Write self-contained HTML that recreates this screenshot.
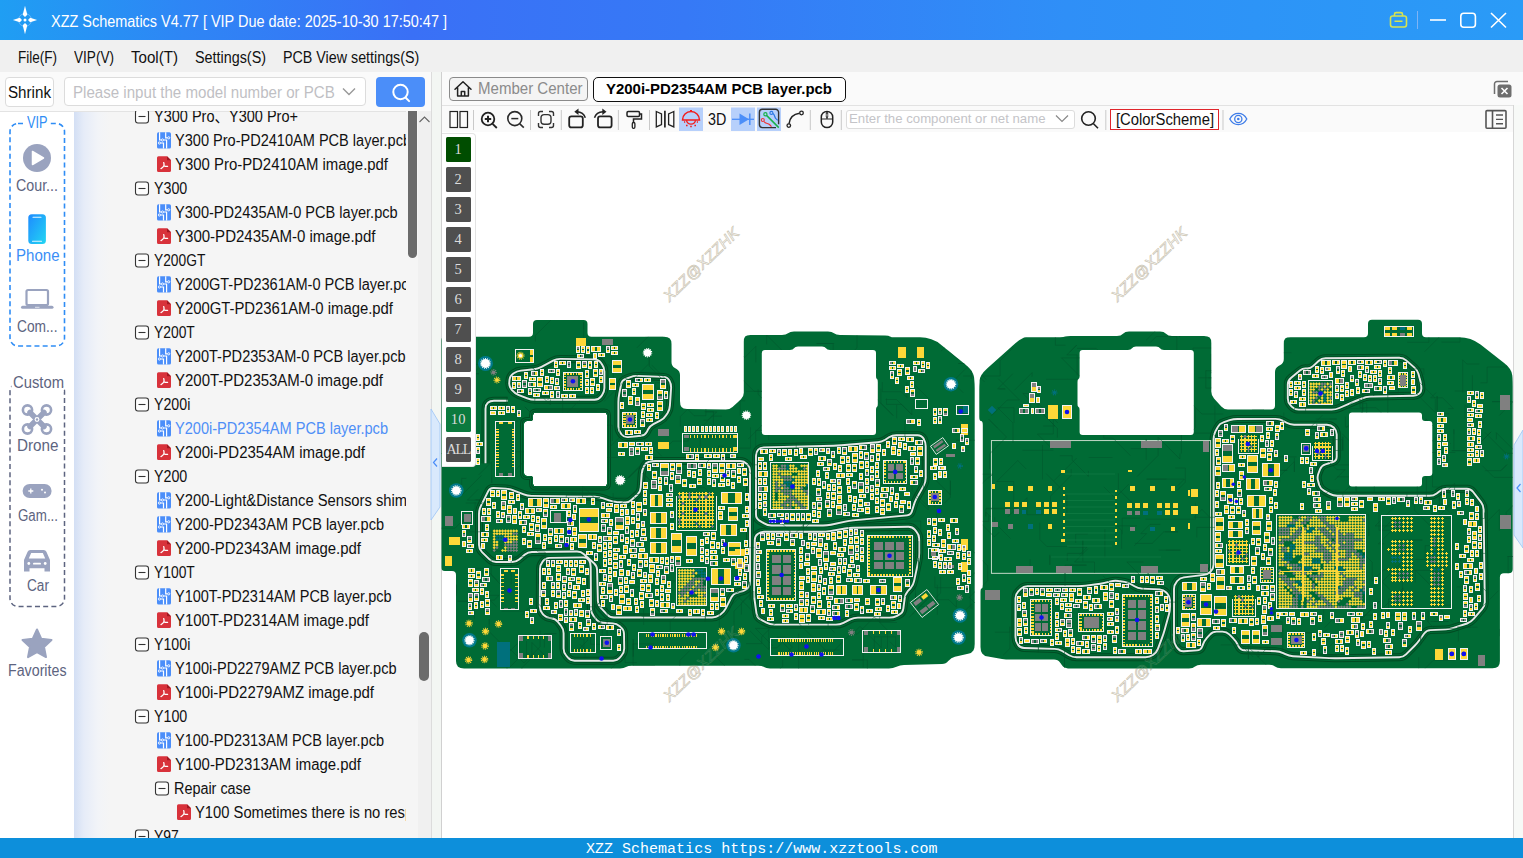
<!DOCTYPE html><html><head><meta charset="utf-8"><title>XZZ Schematics</title><style>
html,body{margin:0;padding:0;overflow:hidden}html{width:1523px;height:858px}
body{width:1523px;height:858px;overflow:hidden;position:relative;background:#fff;font-family:"Liberation Sans","Noto Sans CJK SC",sans-serif}
.abs{position:absolute}
.t{position:absolute;white-space:nowrap;transform-origin:0 50%;display:block}
#title{position:absolute;left:0;top:0;width:1523px;height:40px;background:linear-gradient(90deg,#1f9ef3 0%,#2e86f5 12%,#3a70f6 27%,#3679f6 45%,#2f8ff7 70%,#2a9bf7 100%)}
#menu{position:absolute;left:0;top:40px;width:1523px;height:31.5px;background:#f0f0f0;border-bottom:1px solid #dadada}
#leftbg{position:absolute;left:0;top:72px;width:430.5px;height:39.5px;background:#fafafa;border-bottom:1px solid #e3e3e3;box-sizing:border-box}
#side{position:absolute;left:0;top:111px;width:74px;height:727px;background:#fff}
#treebg{position:absolute;left:74px;top:111px;width:356.5px;height:727px;background:linear-gradient(90deg,#d3dff4 0,#e6ecf8 10px,#f2f4f8 24px,#f5f5f5 36px,#f5f5f5 100%)}
#tree{position:absolute;left:0;top:111px;width:406.5px;height:727px;overflow:hidden}
#tree>*{margin-top:-111px}
#split{position:absolute;left:430.5px;top:72px;width:11px;height:766px;background:#f3f6f3;border-left:1px solid #dcdcdc;border-right:1px solid #d0d0d0;box-sizing:border-box}
#rightbg{position:absolute;left:441.5px;top:72px;width:1081.5px;height:60px;background:#fafafa}
#status{position:absolute;left:0;top:838px;width:1523px;height:20px;background:#0d8fdb;color:#fff;font-family:"Liberation Mono",monospace;font-size:14px;line-height:20px}
</style></head><body>
<div id="side"></div><div id="treebg"></div>
<div id="title"></div>
<svg class="abs" style="left:10.2px;top:4.6px" width="30" height="30" viewBox="-15 -15 30 30"><circle r="6.5" fill="none" stroke="#cfe0ff" stroke-width="0.7" opacity=".55"/><path d="M0-14.3L2.3-5.2 0-3-2.3-5.2zM0 14.3L2.3 5.2 0 3-2.3 5.2zM-12.1 0L-5.2-2.2-3 0-5.2 2.2zM12.1 0L5.2-2.2 3 0 5.2 2.2z" fill="#fff"/><circle r="1.5" fill="#fff"/></svg>
<span class="t" style="left:50.5px;top:11.6px;font-size:16px;line-height:19.2px;color:#fff;transform:scaleX(0.9037);">XZZ Schematics V4.77 [ VIP Due date: 2025-10-30 17:50:47 ]</span>
<svg class="abs" style="left:1385px;top:8px" width="130" height="26" viewBox="1385 8 130 26" fill="none"><rect x="1390.5" y="16" width="16" height="11" rx="2.2" stroke="#d7e34f" stroke-width="1.6"/><path d="M1394.5 16v-1.8a1.6 1.6 0 0 1 1.6-1.6h4.8a1.6 1.6 0 0 1 1.6 1.6v1.8M1394.5 21.2h8" stroke="#d7e34f" stroke-width="1.6"/><path d="M1417.5 11v18" stroke="#7fb4f5" stroke-width="1"/><path d="M1430 20h16" stroke="#fff" stroke-width="1.6"/><rect x="1460.8" y="13.3" width="14.6" height="14" rx="3" stroke="#fff" stroke-width="1.6"/><path d="M1491 13l15 14.5M1506 13l-15 14.5" stroke="#fff" stroke-width="1.6"/></svg>
<div id="menu"></div>
<span class="t" style="left:18.4px;top:47.7px;font-size:16px;line-height:19.2px;color:#111;transform:scaleX(0.8461);">File(F)</span>
<span class="t" style="left:74.2px;top:47.7px;font-size:16px;line-height:19.2px;color:#111;transform:scaleX(0.8489);">VIP(V)</span>
<span class="t" style="left:131.3px;top:47.7px;font-size:16px;line-height:19.2px;color:#111;transform:scaleX(0.9441);">Tool(T)</span>
<span class="t" style="left:195.3px;top:47.7px;font-size:16px;line-height:19.2px;color:#111;transform:scaleX(0.8971);">Settings(S)</span>
<span class="t" style="left:283.3px;top:47.7px;font-size:16px;line-height:19.2px;color:#111;transform:scaleX(0.8929);">PCB View settings(S)</span>
<div id="leftbg"></div>
<div class="abs" style="left:5px;top:77px;width:49px;height:29.5px;border:1px solid #dcdcdc;border-radius:4px;background:#fff;box-sizing:border-box"></div>
<span class="t" style="left:7.6px;top:83.4px;font-size:16px;line-height:19.2px;color:#111;transform:scaleX(0.9481);">Shrink</span>
<div class="abs" style="left:64px;top:77px;width:302px;height:29px;border:1px solid #dcdcdc;border-radius:4px;background:#fff;box-sizing:border-box"></div>
<span class="t" style="left:73.2px;top:83.4px;font-size:16px;line-height:19.2px;color:#bfbfc4;transform:scaleX(0.9435);">Please input the model number or PCB</span>
<svg class="abs" style="left:341px;top:86px" width="16" height="12" fill="none"><path d="M2 2.5l6 6 6-6" stroke="#999" stroke-width="1.4"/></svg>
<div class="abs" style="left:376px;top:77px;width:49px;height:30px;border-radius:4px;background:#4b8ef9"></div>
<svg class="abs" style="left:389px;top:81px" width="24" height="24" fill="none"><circle cx="11.5" cy="11" r="7.2" stroke="#fff" stroke-width="2"/><path d="M16.5 16.5l3.6 3.6" stroke="#fff" stroke-width="2" stroke-linecap="round"/></svg>
<svg class="abs" style="left:0;top:111px" width="74" height="727" viewBox="0 111 74 727" fill="none"><rect x="10" y="123.5" width="54.5" height="222.5" rx="8" stroke="#2f8df5" stroke-width="1.6" stroke-dasharray="5 3.2"/><rect x="26" y="114" width="22.5" height="18" fill="#fff"/><rect x="10" y="383.5" width="54.5" height="223" rx="8" stroke="#5d6480" stroke-width="1.5" stroke-dasharray="5 3.2"/><rect x="11.5" y="374" width="52" height="18" fill="#fff"/><circle cx="37" cy="158" r="14" fill="#9aa3bf"/><path d="M32.5 151.5v13l11-6.5z" fill="#fff" stroke="#fff" stroke-width="1.5" stroke-linejoin="round"/><defs><linearGradient id="ph" x1="0" y1="0" x2="1" y2="1"><stop offset="0" stop-color="#1e8bff"/><stop offset="1" stop-color="#22d6f2"/></linearGradient></defs><rect x="28.3" y="214.3" width="17.6" height="29.6" rx="3.5" fill="url(#ph)"/><path d="M33 217.2h8M32.5 241.3h9" stroke="#dff6ff" stroke-width="1.1" stroke-linecap="round"/><rect x="26.5" y="290" width="21.5" height="15" rx="1.5" stroke="#9aa3bf" stroke-width="2.2"/><path d="M22.5 307.3h29.5" stroke="#9aa3bf" stroke-width="3" stroke-linecap="round"/><path d="M35 307.3h4.5" stroke="#dfe3ee" stroke-width="1"/><g stroke="#9aa3bf" fill="none" stroke-width="2.6"><circle cx="27.5" cy="410" r="4.6"/><circle cx="46.5" cy="410" r="4.6"/><circle cx="27.5" cy="429" r="4.6"/><circle cx="46.5" cy="429" r="4.6"/></g><path d="M30 412.5l14 14M44 412.5l-14 14" stroke="#9aa3bf" stroke-width="5.5" stroke-linecap="round"/><circle cx="37" cy="419.5" r="2.4" fill="#fff"/><circle cx="37" cy="419.5" r="1.2" fill="#9aa3bf"/><rect x="22.6" y="484" width="29" height="14" rx="7" fill="#9aa3bf"/><path d="M28.3 491h5M30.8 488.5v5" stroke="#fff" stroke-width="1.3"/><circle cx="42" cy="489.7" r="1" fill="#fff"/><circle cx="45" cy="492.5" r="1" fill="#fff"/><path d="M24 571.5v-11.5l3.6-8.2a3 3 0 0 1 2.8-1.8h13.2a3 3 0 0 1 2.8 1.8l3.6 8.2v11.5h-5.5v-3.3h-15v3.3z" fill="#9aa3bf"/><path d="M28.8 558.5l2.4-5.6h11.6l2.4 5.6z" fill="#fff"/><rect x="33" y="562.8" width="8" height="1.8" rx=".9" fill="#fff"/><circle cx="28.8" cy="563.5" r="1.4" fill="#fff"/><circle cx="45.2" cy="563.5" r="1.4" fill="#fff"/><path d="M37 629.5l4.3 9.3 10.2 1.2-7.5 7 2 10.1-9-5-9 5 2-10.1-7.5-7 10.2-1.2z" fill="#9aa3bf" stroke="#9aa3bf" stroke-width="2" stroke-linejoin="round"/></svg>
<span class="t" style="left:27px;top:113.4px;font-size:16px;line-height:19.2px;color:#2f8df5;transform:scaleX(0.7949);">VIP</span>
<span class="t" style="left:16px;top:176.4px;font-size:16px;line-height:19.2px;color:#5d6480;transform:scaleX(0.8911);">Cour...</span>
<span class="t" style="left:15.5px;top:245.9px;font-size:16px;line-height:19.2px;color:#3a8ef6;transform:scaleX(0.9402);">Phone</span>
<span class="t" style="left:17px;top:316.9px;font-size:16px;line-height:19.2px;color:#5d6480;transform:scaleX(0.8596);">Com...</span>
<span class="t" style="left:12.5px;top:373.4px;font-size:16px;line-height:19.2px;color:#5d6480;transform:scaleX(0.9252);">Custom</span>
<span class="t" style="left:16.5px;top:435.9px;font-size:16px;line-height:19.2px;color:#5d6480;transform:scaleX(0.9523);">Drone</span>
<span class="t" style="left:17.5px;top:506.4px;font-size:16px;line-height:19.2px;color:#5d6480;transform:scaleX(0.8332);">Gam...</span>
<span class="t" style="left:26.5px;top:576.4px;font-size:16px;line-height:19.2px;color:#5d6480;transform:scaleX(0.8533);">Car</span>
<span class="t" style="left:8px;top:660.9px;font-size:16px;line-height:19.2px;color:#5d6480;transform:scaleX(0.8891);">Favorites</span>
<div id="tree">
<span class="t" style="left:153.7px;top:106.9px;font-size:16px;line-height:19.2px;color:#111;transform:scaleX(0.9065);">Y300 Pro、Y300 Pro+</span>
<span class="t" style="left:175px;top:130.9px;font-size:16px;line-height:19.2px;color:#111;transform:scaleX(0.909);">Y300 Pro-PD2410AM PCB layer.pcb</span>
<span class="t" style="left:175px;top:154.9px;font-size:16px;line-height:19.2px;color:#111;transform:scaleX(0.9319);">Y300 Pro-PD2410AM image.pdf</span>
<span class="t" style="left:153.7px;top:178.9px;font-size:16px;line-height:19.2px;color:#111;transform:scaleX(0.8912);">Y300</span>
<span class="t" style="left:175px;top:202.9px;font-size:16px;line-height:19.2px;color:#111;transform:scaleX(0.9102);">Y300-PD2435AM-0 PCB layer.pcb</span>
<span class="t" style="left:175px;top:226.9px;font-size:16px;line-height:19.2px;color:#111;transform:scaleX(0.9393);">Y300-PD2435AM-0 image.pdf</span>
<span class="t" style="left:153.7px;top:250.9px;font-size:16px;line-height:19.2px;color:#111;transform:scaleX(0.8609);">Y200GT</span>
<span class="t" style="left:175px;top:274.9px;font-size:16px;line-height:19.2px;color:#111;transform:scaleX(0.909);">Y200GT-PD2361AM-0 PCB layer.pcb</span>
<span class="t" style="left:175px;top:298.9px;font-size:16px;line-height:19.2px;color:#111;transform:scaleX(0.9285);">Y200GT-PD2361AM-0 image.pdf</span>
<span class="t" style="left:153.7px;top:322.9px;font-size:16px;line-height:19.2px;color:#111;transform:scaleX(0.8655);">Y200T</span>
<span class="t" style="left:175px;top:346.9px;font-size:16px;line-height:19.2px;color:#111;transform:scaleX(0.9094);">Y200T-PD2353AM-0 PCB layer.pcb</span>
<span class="t" style="left:175px;top:370.9px;font-size:16px;line-height:19.2px;color:#111;transform:scaleX(0.9355);">Y200T-PD2353AM-0 image.pdf</span>
<span class="t" style="left:153.7px;top:394.9px;font-size:16px;line-height:19.2px;color:#111;transform:scaleX(0.8871);">Y200i</span>
<span class="t" style="left:175px;top:418.9px;font-size:16px;line-height:19.2px;color:#4f8ff7;transform:scaleX(0.9107);">Y200i-PD2354AM PCB layer.pcb</span>
<span class="t" style="left:175px;top:442.9px;font-size:16px;line-height:19.2px;color:#111;transform:scaleX(0.937);">Y200i-PD2354AM image.pdf</span>
<span class="t" style="left:153.7px;top:466.9px;font-size:16px;line-height:19.2px;color:#111;transform:scaleX(0.8912);">Y200</span>
<span class="t" style="left:175px;top:490.9px;font-size:16px;line-height:19.2px;color:#111;transform:scaleX(0.922);">Y200-Light&amp;Distance Sensors shimmed</span>
<span class="t" style="left:175px;top:514.9px;font-size:16px;line-height:19.2px;color:#111;transform:scaleX(0.9073);">Y200-PD2343AM PCB layer.pcb</span>
<span class="t" style="left:175px;top:538.9px;font-size:16px;line-height:19.2px;color:#111;transform:scaleX(0.9336);">Y200-PD2343AM image.pdf</span>
<span class="t" style="left:153.7px;top:562.9px;font-size:16px;line-height:19.2px;color:#111;transform:scaleX(0.8655);">Y100T</span>
<span class="t" style="left:175px;top:586.9px;font-size:16px;line-height:19.2px;color:#111;transform:scaleX(0.905);">Y100T-PD2314AM PCB layer.pcb</span>
<span class="t" style="left:175px;top:610.9px;font-size:16px;line-height:19.2px;color:#111;transform:scaleX(0.9322);">Y100T-PD2314AM image.pdf</span>
<span class="t" style="left:153.7px;top:634.9px;font-size:16px;line-height:19.2px;color:#111;transform:scaleX(0.8871);">Y100i</span>
<span class="t" style="left:175px;top:658.9px;font-size:16px;line-height:19.2px;color:#111;transform:scaleX(0.909);">Y100i-PD2279AMZ PCB layer.pcb</span>
<span class="t" style="left:175px;top:682.9px;font-size:16px;line-height:19.2px;color:#111;transform:scaleX(0.9362);">Y100i-PD2279AMZ image.pdf</span>
<span class="t" style="left:153.7px;top:706.9px;font-size:16px;line-height:19.2px;color:#111;transform:scaleX(0.8912);">Y100</span>
<span class="t" style="left:175px;top:730.9px;font-size:16px;line-height:19.2px;color:#111;transform:scaleX(0.9073);">Y100-PD2313AM PCB layer.pcb</span>
<span class="t" style="left:175px;top:754.9px;font-size:16px;line-height:19.2px;color:#111;transform:scaleX(0.9336);">Y100-PD2313AM image.pdf</span>
<span class="t" style="left:173.7px;top:778.9px;font-size:16px;line-height:19.2px;color:#111;transform:scaleX(0.8996);">Repair case</span>
<span class="t" style="left:195px;top:802.9px;font-size:16px;line-height:19.2px;color:#111;transform:scaleX(0.922);">Y100 Sometimes there is no response</span>
<span class="t" style="left:153.7px;top:826.9px;font-size:16px;line-height:19.2px;color:#111;transform:scaleX(0.8711);">Y97</span>
<svg class="abs" style="left:0;top:0" width="440" height="858"><rect x="135.5" y="110" width="13" height="13" rx="2.5" fill="#fdfdfd" stroke="#333" stroke-width="1.1"/><path d="M138.5 116.5h7" stroke="#333" stroke-width="1.1"/><g transform="translate(157,132.3)"><rect width="14" height="16.3" rx="1.6" fill="#4b8ef9"/><path d="M2.6 0v7.7h1.7M8.7 0v5.5h1.8M3.5 10.7h3v5.6M6.7 7.7h2.9v8.6" stroke="#fff" stroke-width="1.2" fill="none"/><circle cx="5.5" cy="7.7" r="1.1" fill="#4b8ef9" stroke="#fff" stroke-width=".9"/><circle cx="11.7" cy="5.5" r="1.1" fill="#4b8ef9" stroke="#fff" stroke-width=".9"/><circle cx="2.4" cy="10.7" r="1.1" fill="#4b8ef9" stroke="#fff" stroke-width=".9"/></g><g transform="translate(157,156.3)"><path d="M1.5 0h8.5l4 4v10.2a1.5 1.5 0 0 1-1.5 1.5h-11a1.5 1.5 0 0 1-1.5-1.5v-12.7a1.5 1.5 0 0 1 1.5-1.5z" fill="#d8323b"/><path d="M10 0l4 4h-4z" fill="#a01822"/><path d="M6.7 6.3c.5 1.3.4 2.3.2 3.2M6.9 9.5c-.6 1.2-1.6 2.2-2.9 2.8M6.9 9.5c1.2.5 2.4.7 3.7.6" stroke="#fff" stroke-width="1.3" stroke-linecap="round" fill="none"/></g><rect x="135.5" y="182" width="13" height="13" rx="2.5" fill="#fdfdfd" stroke="#333" stroke-width="1.1"/><path d="M138.5 188.5h7" stroke="#333" stroke-width="1.1"/><g transform="translate(157,204.3)"><rect width="14" height="16.3" rx="1.6" fill="#4b8ef9"/><path d="M2.6 0v7.7h1.7M8.7 0v5.5h1.8M3.5 10.7h3v5.6M6.7 7.7h2.9v8.6" stroke="#fff" stroke-width="1.2" fill="none"/><circle cx="5.5" cy="7.7" r="1.1" fill="#4b8ef9" stroke="#fff" stroke-width=".9"/><circle cx="11.7" cy="5.5" r="1.1" fill="#4b8ef9" stroke="#fff" stroke-width=".9"/><circle cx="2.4" cy="10.7" r="1.1" fill="#4b8ef9" stroke="#fff" stroke-width=".9"/></g><g transform="translate(157,228.3)"><path d="M1.5 0h8.5l4 4v10.2a1.5 1.5 0 0 1-1.5 1.5h-11a1.5 1.5 0 0 1-1.5-1.5v-12.7a1.5 1.5 0 0 1 1.5-1.5z" fill="#d8323b"/><path d="M10 0l4 4h-4z" fill="#a01822"/><path d="M6.7 6.3c.5 1.3.4 2.3.2 3.2M6.9 9.5c-.6 1.2-1.6 2.2-2.9 2.8M6.9 9.5c1.2.5 2.4.7 3.7.6" stroke="#fff" stroke-width="1.3" stroke-linecap="round" fill="none"/></g><rect x="135.5" y="254" width="13" height="13" rx="2.5" fill="#fdfdfd" stroke="#333" stroke-width="1.1"/><path d="M138.5 260.5h7" stroke="#333" stroke-width="1.1"/><g transform="translate(157,276.3)"><rect width="14" height="16.3" rx="1.6" fill="#4b8ef9"/><path d="M2.6 0v7.7h1.7M8.7 0v5.5h1.8M3.5 10.7h3v5.6M6.7 7.7h2.9v8.6" stroke="#fff" stroke-width="1.2" fill="none"/><circle cx="5.5" cy="7.7" r="1.1" fill="#4b8ef9" stroke="#fff" stroke-width=".9"/><circle cx="11.7" cy="5.5" r="1.1" fill="#4b8ef9" stroke="#fff" stroke-width=".9"/><circle cx="2.4" cy="10.7" r="1.1" fill="#4b8ef9" stroke="#fff" stroke-width=".9"/></g><g transform="translate(157,300.3)"><path d="M1.5 0h8.5l4 4v10.2a1.5 1.5 0 0 1-1.5 1.5h-11a1.5 1.5 0 0 1-1.5-1.5v-12.7a1.5 1.5 0 0 1 1.5-1.5z" fill="#d8323b"/><path d="M10 0l4 4h-4z" fill="#a01822"/><path d="M6.7 6.3c.5 1.3.4 2.3.2 3.2M6.9 9.5c-.6 1.2-1.6 2.2-2.9 2.8M6.9 9.5c1.2.5 2.4.7 3.7.6" stroke="#fff" stroke-width="1.3" stroke-linecap="round" fill="none"/></g><rect x="135.5" y="326" width="13" height="13" rx="2.5" fill="#fdfdfd" stroke="#333" stroke-width="1.1"/><path d="M138.5 332.5h7" stroke="#333" stroke-width="1.1"/><g transform="translate(157,348.3)"><rect width="14" height="16.3" rx="1.6" fill="#4b8ef9"/><path d="M2.6 0v7.7h1.7M8.7 0v5.5h1.8M3.5 10.7h3v5.6M6.7 7.7h2.9v8.6" stroke="#fff" stroke-width="1.2" fill="none"/><circle cx="5.5" cy="7.7" r="1.1" fill="#4b8ef9" stroke="#fff" stroke-width=".9"/><circle cx="11.7" cy="5.5" r="1.1" fill="#4b8ef9" stroke="#fff" stroke-width=".9"/><circle cx="2.4" cy="10.7" r="1.1" fill="#4b8ef9" stroke="#fff" stroke-width=".9"/></g><g transform="translate(157,372.3)"><path d="M1.5 0h8.5l4 4v10.2a1.5 1.5 0 0 1-1.5 1.5h-11a1.5 1.5 0 0 1-1.5-1.5v-12.7a1.5 1.5 0 0 1 1.5-1.5z" fill="#d8323b"/><path d="M10 0l4 4h-4z" fill="#a01822"/><path d="M6.7 6.3c.5 1.3.4 2.3.2 3.2M6.9 9.5c-.6 1.2-1.6 2.2-2.9 2.8M6.9 9.5c1.2.5 2.4.7 3.7.6" stroke="#fff" stroke-width="1.3" stroke-linecap="round" fill="none"/></g><rect x="135.5" y="398" width="13" height="13" rx="2.5" fill="#fdfdfd" stroke="#333" stroke-width="1.1"/><path d="M138.5 404.5h7" stroke="#333" stroke-width="1.1"/><g transform="translate(157,420.3)"><rect width="14" height="16.3" rx="1.6" fill="#4b8ef9"/><path d="M2.6 0v7.7h1.7M8.7 0v5.5h1.8M3.5 10.7h3v5.6M6.7 7.7h2.9v8.6" stroke="#fff" stroke-width="1.2" fill="none"/><circle cx="5.5" cy="7.7" r="1.1" fill="#4b8ef9" stroke="#fff" stroke-width=".9"/><circle cx="11.7" cy="5.5" r="1.1" fill="#4b8ef9" stroke="#fff" stroke-width=".9"/><circle cx="2.4" cy="10.7" r="1.1" fill="#4b8ef9" stroke="#fff" stroke-width=".9"/></g><g transform="translate(157,444.3)"><path d="M1.5 0h8.5l4 4v10.2a1.5 1.5 0 0 1-1.5 1.5h-11a1.5 1.5 0 0 1-1.5-1.5v-12.7a1.5 1.5 0 0 1 1.5-1.5z" fill="#d8323b"/><path d="M10 0l4 4h-4z" fill="#a01822"/><path d="M6.7 6.3c.5 1.3.4 2.3.2 3.2M6.9 9.5c-.6 1.2-1.6 2.2-2.9 2.8M6.9 9.5c1.2.5 2.4.7 3.7.6" stroke="#fff" stroke-width="1.3" stroke-linecap="round" fill="none"/></g><rect x="135.5" y="470" width="13" height="13" rx="2.5" fill="#fdfdfd" stroke="#333" stroke-width="1.1"/><path d="M138.5 476.5h7" stroke="#333" stroke-width="1.1"/><g transform="translate(157,492.3)"><rect width="14" height="16.3" rx="1.6" fill="#4b8ef9"/><path d="M2.6 0v7.7h1.7M8.7 0v5.5h1.8M3.5 10.7h3v5.6M6.7 7.7h2.9v8.6" stroke="#fff" stroke-width="1.2" fill="none"/><circle cx="5.5" cy="7.7" r="1.1" fill="#4b8ef9" stroke="#fff" stroke-width=".9"/><circle cx="11.7" cy="5.5" r="1.1" fill="#4b8ef9" stroke="#fff" stroke-width=".9"/><circle cx="2.4" cy="10.7" r="1.1" fill="#4b8ef9" stroke="#fff" stroke-width=".9"/></g><g transform="translate(157,516.3)"><rect width="14" height="16.3" rx="1.6" fill="#4b8ef9"/><path d="M2.6 0v7.7h1.7M8.7 0v5.5h1.8M3.5 10.7h3v5.6M6.7 7.7h2.9v8.6" stroke="#fff" stroke-width="1.2" fill="none"/><circle cx="5.5" cy="7.7" r="1.1" fill="#4b8ef9" stroke="#fff" stroke-width=".9"/><circle cx="11.7" cy="5.5" r="1.1" fill="#4b8ef9" stroke="#fff" stroke-width=".9"/><circle cx="2.4" cy="10.7" r="1.1" fill="#4b8ef9" stroke="#fff" stroke-width=".9"/></g><g transform="translate(157,540.3)"><path d="M1.5 0h8.5l4 4v10.2a1.5 1.5 0 0 1-1.5 1.5h-11a1.5 1.5 0 0 1-1.5-1.5v-12.7a1.5 1.5 0 0 1 1.5-1.5z" fill="#d8323b"/><path d="M10 0l4 4h-4z" fill="#a01822"/><path d="M6.7 6.3c.5 1.3.4 2.3.2 3.2M6.9 9.5c-.6 1.2-1.6 2.2-2.9 2.8M6.9 9.5c1.2.5 2.4.7 3.7.6" stroke="#fff" stroke-width="1.3" stroke-linecap="round" fill="none"/></g><rect x="135.5" y="566" width="13" height="13" rx="2.5" fill="#fdfdfd" stroke="#333" stroke-width="1.1"/><path d="M138.5 572.5h7" stroke="#333" stroke-width="1.1"/><g transform="translate(157,588.3)"><rect width="14" height="16.3" rx="1.6" fill="#4b8ef9"/><path d="M2.6 0v7.7h1.7M8.7 0v5.5h1.8M3.5 10.7h3v5.6M6.7 7.7h2.9v8.6" stroke="#fff" stroke-width="1.2" fill="none"/><circle cx="5.5" cy="7.7" r="1.1" fill="#4b8ef9" stroke="#fff" stroke-width=".9"/><circle cx="11.7" cy="5.5" r="1.1" fill="#4b8ef9" stroke="#fff" stroke-width=".9"/><circle cx="2.4" cy="10.7" r="1.1" fill="#4b8ef9" stroke="#fff" stroke-width=".9"/></g><g transform="translate(157,612.3)"><path d="M1.5 0h8.5l4 4v10.2a1.5 1.5 0 0 1-1.5 1.5h-11a1.5 1.5 0 0 1-1.5-1.5v-12.7a1.5 1.5 0 0 1 1.5-1.5z" fill="#d8323b"/><path d="M10 0l4 4h-4z" fill="#a01822"/><path d="M6.7 6.3c.5 1.3.4 2.3.2 3.2M6.9 9.5c-.6 1.2-1.6 2.2-2.9 2.8M6.9 9.5c1.2.5 2.4.7 3.7.6" stroke="#fff" stroke-width="1.3" stroke-linecap="round" fill="none"/></g><rect x="135.5" y="638" width="13" height="13" rx="2.5" fill="#fdfdfd" stroke="#333" stroke-width="1.1"/><path d="M138.5 644.5h7" stroke="#333" stroke-width="1.1"/><g transform="translate(157,660.3)"><rect width="14" height="16.3" rx="1.6" fill="#4b8ef9"/><path d="M2.6 0v7.7h1.7M8.7 0v5.5h1.8M3.5 10.7h3v5.6M6.7 7.7h2.9v8.6" stroke="#fff" stroke-width="1.2" fill="none"/><circle cx="5.5" cy="7.7" r="1.1" fill="#4b8ef9" stroke="#fff" stroke-width=".9"/><circle cx="11.7" cy="5.5" r="1.1" fill="#4b8ef9" stroke="#fff" stroke-width=".9"/><circle cx="2.4" cy="10.7" r="1.1" fill="#4b8ef9" stroke="#fff" stroke-width=".9"/></g><g transform="translate(157,684.3)"><path d="M1.5 0h8.5l4 4v10.2a1.5 1.5 0 0 1-1.5 1.5h-11a1.5 1.5 0 0 1-1.5-1.5v-12.7a1.5 1.5 0 0 1 1.5-1.5z" fill="#d8323b"/><path d="M10 0l4 4h-4z" fill="#a01822"/><path d="M6.7 6.3c.5 1.3.4 2.3.2 3.2M6.9 9.5c-.6 1.2-1.6 2.2-2.9 2.8M6.9 9.5c1.2.5 2.4.7 3.7.6" stroke="#fff" stroke-width="1.3" stroke-linecap="round" fill="none"/></g><rect x="135.5" y="710" width="13" height="13" rx="2.5" fill="#fdfdfd" stroke="#333" stroke-width="1.1"/><path d="M138.5 716.5h7" stroke="#333" stroke-width="1.1"/><g transform="translate(157,732.3)"><rect width="14" height="16.3" rx="1.6" fill="#4b8ef9"/><path d="M2.6 0v7.7h1.7M8.7 0v5.5h1.8M3.5 10.7h3v5.6M6.7 7.7h2.9v8.6" stroke="#fff" stroke-width="1.2" fill="none"/><circle cx="5.5" cy="7.7" r="1.1" fill="#4b8ef9" stroke="#fff" stroke-width=".9"/><circle cx="11.7" cy="5.5" r="1.1" fill="#4b8ef9" stroke="#fff" stroke-width=".9"/><circle cx="2.4" cy="10.7" r="1.1" fill="#4b8ef9" stroke="#fff" stroke-width=".9"/></g><g transform="translate(157,756.3)"><path d="M1.5 0h8.5l4 4v10.2a1.5 1.5 0 0 1-1.5 1.5h-11a1.5 1.5 0 0 1-1.5-1.5v-12.7a1.5 1.5 0 0 1 1.5-1.5z" fill="#d8323b"/><path d="M10 0l4 4h-4z" fill="#a01822"/><path d="M6.7 6.3c.5 1.3.4 2.3.2 3.2M6.9 9.5c-.6 1.2-1.6 2.2-2.9 2.8M6.9 9.5c1.2.5 2.4.7 3.7.6" stroke="#fff" stroke-width="1.3" stroke-linecap="round" fill="none"/></g><rect x="155.5" y="782" width="13" height="13" rx="2.5" fill="#fdfdfd" stroke="#333" stroke-width="1.1"/><path d="M158.5 788.5h7" stroke="#333" stroke-width="1.1"/><g transform="translate(177,804.3)"><path d="M1.5 0h8.5l4 4v10.2a1.5 1.5 0 0 1-1.5 1.5h-11a1.5 1.5 0 0 1-1.5-1.5v-12.7a1.5 1.5 0 0 1 1.5-1.5z" fill="#d8323b"/><path d="M10 0l4 4h-4z" fill="#a01822"/><path d="M6.7 6.3c.5 1.3.4 2.3.2 3.2M6.9 9.5c-.6 1.2-1.6 2.2-2.9 2.8M6.9 9.5c1.2.5 2.4.7 3.7.6" stroke="#fff" stroke-width="1.3" stroke-linecap="round" fill="none"/></g><rect x="135.5" y="830" width="13" height="13" rx="2.5" fill="#fdfdfd" stroke="#333" stroke-width="1.1"/><path d="M138.5 836.5h7" stroke="#333" stroke-width="1.1"/></svg>
</div>
<div class="abs" style="left:406px;top:111px;width:24.5px;height:727px;background:linear-gradient(90deg,#f5f5f5 0,#f5f5f5 12px,#f0f0f0 12px)"></div>
<div class="abs" style="left:408px;top:111px;width:9px;height:147px;border-radius:0 0 5px 5px;background:#6b6b6b"></div>
<div class="abs" style="left:419px;top:632px;width:10px;height:49px;border-radius:5px;background:#6b6b6b"></div>
<svg class="abs" style="left:418px;top:114px" width="13" height="10" fill="none"><path d="M1.5 8l5-5 5 5" stroke="#666" stroke-width="1.1"/></svg>
<div id="split"></div>
<div id="rightbg"></div>
<div class="abs" style="left:449px;top:77px;width:139px;height:24px;border:1px solid #8a8a8a;border-radius:4px;background:#f4f4f4;box-sizing:border-box"></div>
<svg class="abs" style="left:453px;top:79px" width="20" height="20" fill="none"><path d="M2 10.2l8-7.4 8 7.4M4.6 8.5v8.5h10.8v-8.5M8.3 17v-4.6h3.4v4.6" stroke="#222" stroke-width="1.5" stroke-linejoin="round" stroke-linecap="round"/></svg>
<span class="t" style="left:477.5px;top:79.4px;font-size:16px;line-height:19.2px;color:#8b8b8b;transform:scaleX(0.9402);">Member Center</span>
<div class="abs" style="left:593px;top:77px;width:253px;height:24.5px;border:1.5px solid #111;border-radius:5px;background:#fff;box-sizing:border-box"></div>
<span class="t" style="left:606px;top:79.7px;font-size:15.5px;line-height:18.6px;color:#000;font-weight:bold;transform:scaleX(0.9644);">Y200i-PD2354AM PCB layer.pcb</span>
<svg class="abs" style="left:1492px;top:79px" width="22" height="22" fill="none"><path d="M2.5 15v-10a2.5 2.5 0 0 1 2.5-2.5h11" stroke="#6e6e6e" stroke-width="1.5"/><rect x="5.5" y="5.5" width="14" height="13" rx="2.5" fill="#6e6e6e"/><path d="M9.5 9l6 6M15.5 9l-6 6" stroke="#fff" stroke-width="1.6"/></svg>
<svg class="abs" style="left:0;top:0" width="1523" height="140" fill="none"><rect x="679" y="107.5" width="24" height="23.5" fill="#b7d0fb"/><rect x="731" y="107.5" width="24" height="23.5" fill="#b7d0fb"/><rect x="757" y="107.5" width="24" height="23.5" fill="#b7d0fb"/><path d="M473.5 110v20" stroke="#c9c9c9" stroke-width="1"/><path d="M530.5 110v20" stroke="#c9c9c9" stroke-width="1"/><path d="M561.3 110v20" stroke="#c9c9c9" stroke-width="1"/><path d="M618.4 110v20" stroke="#c9c9c9" stroke-width="1"/><path d="M649.5 110v20" stroke="#c9c9c9" stroke-width="1"/><path d="M810.3 110v20" stroke="#c9c9c9" stroke-width="1"/><path d="M841.3 110v20" stroke="#c9c9c9" stroke-width="1"/><path d="M1105.8 110v20" stroke="#c9c9c9" stroke-width="1"/><path d="M1223 110v20" stroke="#c9c9c9" stroke-width="1"/><rect x="450" y="111.5" width="7.5" height="16" stroke="#222" stroke-width="1.2"/><rect x="460" y="111.5" width="7.5" height="16" stroke="#222" stroke-width="1.2"/><circle cx="488" cy="119" r="6.3" stroke="#222" stroke-width="1.8"/><path d="M492.6 123.8l4.2 4.2" stroke="#222" stroke-width="1.8"/><path d="M484.8 119h6.4M488 115.8v6.4" stroke="#222" stroke-width="2"/><circle cx="514.8" cy="118.6" r="7" stroke="#2a2a2a" stroke-width="1.6"/><path d="M519.8 123.8l4 3.8" stroke="#2a2a2a" stroke-width="1.6"/><path d="M511.3 118.6h7" stroke="#2a2a2a" stroke-width="1.5"/><path d="M538.5 116v-2.5a2 2 0 0 1 2-2h2.5M549 111.5h2.5a2 2 0 0 1 2 2v2.5M553.5 123v2.5a2 2 0 0 1-2 2h-2.5M543 127.5h-2.5a2 2 0 0 1-2-2v-2.5" stroke="#333" stroke-width="1.4"/><rect x="541" y="114.6" width="10" height="9.6" rx="3.2" stroke="#333" stroke-width="1.4"/><rect x="569.2" y="116.4" width="13.6" height="11" rx="2.2" stroke="#222" stroke-width="1.8"/><path d="M585.3 117.8c-1.2-3.8-4.5-5.8-8.5-6" stroke="#222" stroke-width="1.5"/><path d="M574.3 111.8l4.2-3.2v6.4z" fill="#222"/><rect x="598" y="116.4" width="13.6" height="11" rx="2.2" stroke="#222" stroke-width="1.8"/><path d="M594.5 117.8c1.2-3.8 4.5-5.8 8.5-6" stroke="#222" stroke-width="1.5"/><path d="M606.5 111.8l-4.2-3.2v6.4z" fill="#222"/><rect x="627" y="111.5" width="12.5" height="5" rx="1.2" stroke="#222" stroke-width="1.5"/><path d="M639.5 114h2v5h-8v3.5" stroke="#222" stroke-width="1.5"/><rect x="632.3" y="122.5" width="2.6" height="5.8" rx="1.2" stroke="#222" stroke-width="1.3"/><path d="M656.3 111.5l5.2 2.4v10.6l-5.2 2.4zM673.8 111.5l-5.2 2.4v10.6l5.2 2.4z" stroke="#222" stroke-width="1.3"/><path d="M664.9 110.8v16.8" stroke="#222" stroke-width="1.7"/><path d="M682.5 119.9a8.5 8.3 0 0 1 17 0z" stroke="#f21d1d" stroke-width="1.5"/><path d="M691 111.6v-1.6" stroke="#f21d1d" stroke-width="2"/><path d="M686.6 120.3a4.4 3.8 0 0 0 8.8 0" stroke="#f21d1d" stroke-width="1.4"/><path d="M686 125.5h1.6M690.2 126.5h1.6M694.4 125.5h1.6M684 122h1.2M696.8 122h1.2" stroke="#f21d1d" stroke-width="1.5"/><path d="M732 119.3h22" stroke="#4b8ef9" stroke-width="1.3"/><path d="M739.5 113.5v11.6l9.5-5.8z" fill="#4b8ef9"/><path d="M749.8 113.5v11.6" stroke="#4b8ef9" stroke-width="1.5"/><path d="M776 127.6h-13.6a3 3 0 0 1-3-3v-12.3a3 3 0 0 1 3-3h13.2a3 3 0 0 1 3 3v12" stroke="#333" stroke-width="1.4"/><path d="M766.5 115.4l12.3 12.2" stroke="#19b24b" stroke-width="1.5"/><circle cx="765.4" cy="114.2" r="1.6" stroke="#19b24b" stroke-width="1.2"/><path d="M773 113.6c1.8 1 1.6 3.6 2.6 4.8l2.2 2" stroke="#2a78e4" stroke-width="1.2"/><circle cx="771.4" cy="112.9" r="1.5" stroke="#2a78e4" stroke-width="1.1"/><path d="M764 121.5c1.5 2.5 4 1.5 5.5 3l2 2.2" stroke="#e33" stroke-width="1.2"/><circle cx="762.8" cy="120" r="1.5" stroke="#e33" stroke-width="1.1"/><path d="M789 123.8c0.8-6.5 5-9.8 10.6-10.5" stroke="#222" stroke-width="1.5"/><circle cx="788.8" cy="125.6" r="1.8" stroke="#222" stroke-width="1.3" fill="#fafafa"/><circle cx="801.5" cy="113" r="1.8" stroke="#222" stroke-width="1.3" fill="#fafafa"/><rect x="821.3" y="111.4" width="11.4" height="16.2" rx="5.7" stroke="#222" stroke-width="1.5"/><path d="M827 111.4v7.6M821.3 119h11.4" stroke="#222" stroke-width="1.2"/><path d="M827 113.6v3" stroke="#222" stroke-width="2.4" stroke-linecap="round"/><path d="M827 114v2.2" stroke="#fafafa" stroke-width=".9" stroke-linecap="round"/><circle cx="1088.5" cy="118.5" r="6.8" stroke="#222" stroke-width="1.6"/><path d="M1093.5 123.8l4.5 4.5" stroke="#222" stroke-width="1.6"/><path d="M1229.8 119c4-7.5 13-7.5 17 0-4 7.5-13 7.5-17 0z" stroke="#3f7de8" stroke-width="1.3"/><circle cx="1238.3" cy="119" r="3.6" stroke="#3f7de8" stroke-width="1.3"/><circle cx="1238.3" cy="119" r="1.3" fill="#3f7de8"/><rect x="1486" y="110.6" width="20" height="17.6" rx="1" stroke="#555" stroke-width="1.6"/><path d="M1492.5 110.6v17.6" stroke="#555" stroke-width="1.6"/><path d="M1496 115h7M1496 119.4h7M1496 123.8h7" stroke="#555" stroke-width="1.4"/></svg>
<span class="t" style="left:707.5px;top:109.9px;font-size:16px;line-height:19.2px;color:#111;transform:scaleX(0.8947);">3D</span>
<div class="abs" style="left:845.5px;top:110px;width:229px;height:19px;border:1px solid #dcdcdc;border-radius:3px;background:#fff;box-sizing:border-box"></div>
<span class="t" style="left:848.5px;top:110.7px;font-size:13.5px;line-height:16.2px;color:#c4c4c8;transform:scaleX(0.9771);">Enter the component or net name</span>
<svg class="abs" style="left:1054px;top:113px" width="16" height="12" fill="none"><path d="M2 2.5l6 6 6-6" stroke="#888" stroke-width="1.2"/></svg>
<div class="abs" style="left:1110px;top:108.5px;width:109px;height:21.5px;border:1.5px solid #e0252b;background:#fff;box-sizing:border-box"></div>
<span class="t" style="left:1115.5px;top:109.9px;font-size:16px;line-height:19.2px;color:#111;transform:scaleX(0.9261);">[ColorScheme]</span>
<div class="abs" style="left:441.5px;top:104.5px;width:1081.5px;height:1px;background:#e2e2e2"></div>
<div class="abs" style="left:441.5px;top:132px;width:1071.5px;height:706px;background:#fff"></div>
<svg class="abs" id="pcb" style="left:0;top:0" width="1523" height="858" viewBox="0 0 1523 858">
<defs><clipPath id="cv"><rect x="441.5" y="132" width="1071.5" height="706"/></clipPath></defs>
<g clip-path="url(#cv)">
<text x="705" y="268" transform="rotate(-44 705 268)" text-anchor="middle" font-family="Liberation Sans,sans-serif" font-style="italic" font-size="15.5" fill="none" stroke="#cbc5b3" stroke-width=".6" opacity="1" letter-spacing=".3">XZZ@XZZHK</text><text x="1153" y="268" transform="rotate(-44 1153 268)" text-anchor="middle" font-family="Liberation Sans,sans-serif" font-style="italic" font-size="15.5" fill="none" stroke="#cbc5b3" stroke-width=".6" opacity="1" letter-spacing=".3">XZZ@XZZHK</text><text x="705" y="668" transform="rotate(-44 705 668)" text-anchor="middle" font-family="Liberation Sans,sans-serif" font-style="italic" font-size="15.5" fill="none" stroke="#cbc5b3" stroke-width=".6" opacity="1" letter-spacing=".3">XZZ@XZZHK</text><text x="1153" y="668" transform="rotate(-44 1153 668)" text-anchor="middle" font-family="Liberation Sans,sans-serif" font-style="italic" font-size="15.5" fill="none" stroke="#cbc5b3" stroke-width=".6" opacity="1" letter-spacing=".3">XZZ@XZZHK</text>
<path d="M441 340.8Q441 336.8 445 336.8L529 336.8Q533 336.8 533 332.8L533 324Q533 320 537 320L583.5 320Q587.5 320 587.5 324L587.5 332.8Q587.5 336.8 591.5 336.8L664 336.8Q668 336.8 669.8 338.4L669.8 338.4Q671.5 340 671.5 344L671.5 362Q671.5 366 674.9 368L676.6 369Q680 371 680 375L680 401Q680 405 681.5 407L681.5 407Q683 409 687 409.1L725.5 409.5Q729.5 409.6 732.5 406.9L740.8 399.5Q743.8 396.8 743.8 392.8L743.8 342Q743.8 338 745.1 336.5L745.1 336.5Q746.5 335 750.5 335L782 335Q786 335 788 333.2L788 333.2Q790 331.5 794 331.5L828 331.5Q832 331.5 834 333.2L834 333.2Q836 335 840 335L885 335.5Q889 335.5 890 336.4L890 336.4Q891 337.3 895 337.3L920 337.3Q932 337.3 941.3 344.9L965.7 364.7Q973.5 371 974.1 377.5L974.3 380Q974.7 384 974.7 388L974.7 644Q974.7 648 973.4 650.5L973.4 650.5Q972 653 968.1 653.8L954.9 656.7Q951 657.5 948.6 660.7L948.4 660.8Q946 664 942 664.1L904 664.9Q900 665 896.5 666.7L896.5 666.7Q893 668.4 889 668.4L770 668.4Q766 668.4 764 667.1L764 667.1Q762 665.8 758 665.8L632 665.8Q628 665.8 626 667.1L626 667.1Q624 668.4 620 668.4L464 668.4Q460 668.4 458 666.7L458 666.7Q456 665 456 661L456 575Q456 571 452 571L445 571Q441 571 441 567ZM979.3 390Q979.3 386 979.6 382L979.6 380.5Q980 375 987.4 368.3L1013.1 345.3Q1022 337.3 1026 337.3L1026 337.3Q1030 337.3 1034 337.3L1060 337.3Q1064 337.3 1065.2 336.6L1065.2 336.6Q1066.5 336 1070.5 336L1117 336Q1121 336 1123 333.8L1123 333.8Q1125 331.5 1129 331.5L1160 331.5Q1164 331.5 1166 333.8L1166 333.8Q1168 336 1172 336L1204 336Q1208 336 1209.7 337.5L1209.7 337.5Q1211.3 339 1211.3 343L1211.3 391.6Q1211.3 395.6 1214 398.6L1221.3 406.6Q1224 409.6 1228 409.6L1271 409.6Q1275 409.6 1275 405.6L1275 372Q1275 368 1278.5 366L1280.3 365Q1283.8 363 1283.8 359L1283.8 344Q1283.8 340 1285.2 338.6L1285.2 338.6Q1286.5 337.3 1290.5 337.3L1364 337.3Q1368 337.3 1368 333.3L1368 323.8Q1368 319.8 1372 319.8L1418 319.8Q1422 319.8 1422 323.8L1422 333.3Q1422 337.3 1426 337.3L1459 337.3Q1471 337.3 1480.5 344.6L1504.1 362.9Q1512 369 1512.3 375.5L1512.5 378Q1512.7 382 1512.7 386L1512.7 569.2Q1512.7 573.2 1508.7 573.2L1503.9 573.2Q1499.9 573.2 1499.9 577.2L1499.9 661Q1499.9 665 1498.2 666.6L1498.2 666.6Q1496.5 668.3 1492.5 668.3L1281 668.3Q1277 668.3 1275 666.5L1275 666.5Q1273 664.7 1269 664.7L1201 664.7Q1197 664.7 1195 666.5L1195 666.5Q1193 668.4 1189 668.4L1068 668.4Q1064 668.4 1061.8 665.1L1060.2 662.8Q1058 659.5 1054 659.5L1010 659.5Q1006 659.5 1002 658.9L988 656.6Q984 656 982.2 653.5L982.2 653.5Q980.5 651 980.5 647L980.5 592.4Q980.5 588.4 981.6 588.4L981.6 588.4Q982.8 588.4 982.8 584.4L982.8 425Q982.8 421 981 421L981 421Q979.3 421 979.3 417ZM533 415.6Q533 412.6 536 412.6L604 412.6Q607 412.6 607 415.6L607 483.5Q607 486.5 604 486.5L536 486.5Q533 486.5 533 483.5L533 479Q533 476 530 476L527 476Q524 476 524 473L524 424Q524 421 527 421L530 421Q533 421 533 418ZM761.8 353Q761.8 350 764.8 350L790 350Q793 350 794 348.3L794 348.3Q795 346.6 798 346.6L822 346.6Q825 346.6 826 348.3L826 348.3Q827 350 830 350L873 350Q876 350 876 353L876 376Q876 379 876.9 379L876.9 379Q877.8 379 877.8 382L877.8 404Q877.8 407 876.9 407L876.9 407Q876 407 876 410L876 432Q876 435 873 435L764.8 435Q761.8 435 761.8 432ZM1079.6 353Q1079.6 350 1082.6 350L1127.9 350Q1130.9 350 1132 348.3L1132 348.3Q1133 346.6 1136 346.6L1156 346.6Q1159 346.6 1160 348.3L1160 348.3Q1161 350 1164 350L1190.8 350Q1193.8 350 1193.8 353L1193.8 432Q1193.8 435 1190.8 435L1082.6 435Q1079.6 435 1079.6 432L1079.6 410Q1079.6 407 1078.5 407L1078.5 407Q1077.5 407 1077.5 404L1077.5 382Q1077.5 379 1078.5 379L1078.5 379Q1079.6 379 1079.6 376ZM1349 415.6Q1349 412.6 1352 412.6L1419 412.6Q1422 412.6 1422 415.6L1422 418Q1422 421 1425 421L1429.3 421Q1432.3 421 1432.3 424L1432.3 473Q1432.3 476 1429.3 476L1425 476Q1422 476 1422 479L1422 483.5Q1422 486.5 1419 486.5L1352 486.5Q1349 486.5 1349 483.5Z" fill="#006b35" fill-rule="evenodd"/>
<clipPath id="bdc"><path d="M441 340.8Q441 336.8 445 336.8L529 336.8Q533 336.8 533 332.8L533 324Q533 320 537 320L583.5 320Q587.5 320 587.5 324L587.5 332.8Q587.5 336.8 591.5 336.8L664 336.8Q668 336.8 669.8 338.4L669.8 338.4Q671.5 340 671.5 344L671.5 362Q671.5 366 674.9 368L676.6 369Q680 371 680 375L680 401Q680 405 681.5 407L681.5 407Q683 409 687 409.1L725.5 409.5Q729.5 409.6 732.5 406.9L740.8 399.5Q743.8 396.8 743.8 392.8L743.8 342Q743.8 338 745.1 336.5L745.1 336.5Q746.5 335 750.5 335L782 335Q786 335 788 333.2L788 333.2Q790 331.5 794 331.5L828 331.5Q832 331.5 834 333.2L834 333.2Q836 335 840 335L885 335.5Q889 335.5 890 336.4L890 336.4Q891 337.3 895 337.3L920 337.3Q932 337.3 941.3 344.9L965.7 364.7Q973.5 371 974.1 377.5L974.3 380Q974.7 384 974.7 388L974.7 644Q974.7 648 973.4 650.5L973.4 650.5Q972 653 968.1 653.8L954.9 656.7Q951 657.5 948.6 660.7L948.4 660.8Q946 664 942 664.1L904 664.9Q900 665 896.5 666.7L896.5 666.7Q893 668.4 889 668.4L770 668.4Q766 668.4 764 667.1L764 667.1Q762 665.8 758 665.8L632 665.8Q628 665.8 626 667.1L626 667.1Q624 668.4 620 668.4L464 668.4Q460 668.4 458 666.7L458 666.7Q456 665 456 661L456 575Q456 571 452 571L445 571Q441 571 441 567ZM979.3 390Q979.3 386 979.6 382L979.6 380.5Q980 375 987.4 368.3L1013.1 345.3Q1022 337.3 1026 337.3L1026 337.3Q1030 337.3 1034 337.3L1060 337.3Q1064 337.3 1065.2 336.6L1065.2 336.6Q1066.5 336 1070.5 336L1117 336Q1121 336 1123 333.8L1123 333.8Q1125 331.5 1129 331.5L1160 331.5Q1164 331.5 1166 333.8L1166 333.8Q1168 336 1172 336L1204 336Q1208 336 1209.7 337.5L1209.7 337.5Q1211.3 339 1211.3 343L1211.3 391.6Q1211.3 395.6 1214 398.6L1221.3 406.6Q1224 409.6 1228 409.6L1271 409.6Q1275 409.6 1275 405.6L1275 372Q1275 368 1278.5 366L1280.3 365Q1283.8 363 1283.8 359L1283.8 344Q1283.8 340 1285.2 338.6L1285.2 338.6Q1286.5 337.3 1290.5 337.3L1364 337.3Q1368 337.3 1368 333.3L1368 323.8Q1368 319.8 1372 319.8L1418 319.8Q1422 319.8 1422 323.8L1422 333.3Q1422 337.3 1426 337.3L1459 337.3Q1471 337.3 1480.5 344.6L1504.1 362.9Q1512 369 1512.3 375.5L1512.5 378Q1512.7 382 1512.7 386L1512.7 569.2Q1512.7 573.2 1508.7 573.2L1503.9 573.2Q1499.9 573.2 1499.9 577.2L1499.9 661Q1499.9 665 1498.2 666.6L1498.2 666.6Q1496.5 668.3 1492.5 668.3L1281 668.3Q1277 668.3 1275 666.5L1275 666.5Q1273 664.7 1269 664.7L1201 664.7Q1197 664.7 1195 666.5L1195 666.5Q1193 668.4 1189 668.4L1068 668.4Q1064 668.4 1061.8 665.1L1060.2 662.8Q1058 659.5 1054 659.5L1010 659.5Q1006 659.5 1002 658.9L988 656.6Q984 656 982.2 653.5L982.2 653.5Q980.5 651 980.5 647L980.5 592.4Q980.5 588.4 981.6 588.4L981.6 588.4Q982.8 588.4 982.8 584.4L982.8 425Q982.8 421 981 421L981 421Q979.3 421 979.3 417ZM533 415.6Q533 412.6 536 412.6L604 412.6Q607 412.6 607 415.6L607 483.5Q607 486.5 604 486.5L536 486.5Q533 486.5 533 483.5L533 479Q533 476 530 476L527 476Q524 476 524 473L524 424Q524 421 527 421L530 421Q533 421 533 418ZM761.8 353Q761.8 350 764.8 350L790 350Q793 350 794 348.3L794 348.3Q795 346.6 798 346.6L822 346.6Q825 346.6 826 348.3L826 348.3Q827 350 830 350L873 350Q876 350 876 353L876 376Q876 379 876.9 379L876.9 379Q877.8 379 877.8 382L877.8 404Q877.8 407 876.9 407L876.9 407Q876 407 876 410L876 432Q876 435 873 435L764.8 435Q761.8 435 761.8 432ZM1079.6 353Q1079.6 350 1082.6 350L1127.9 350Q1130.9 350 1132 348.3L1132 348.3Q1133 346.6 1136 346.6L1156 346.6Q1159 346.6 1160 348.3L1160 348.3Q1161 350 1164 350L1190.8 350Q1193.8 350 1193.8 353L1193.8 432Q1193.8 435 1190.8 435L1082.6 435Q1079.6 435 1079.6 432L1079.6 410Q1079.6 407 1078.5 407L1078.5 407Q1077.5 407 1077.5 404L1077.5 382Q1077.5 379 1078.5 379L1078.5 379Q1079.6 379 1079.6 376ZM1349 415.6Q1349 412.6 1352 412.6L1419 412.6Q1422 412.6 1422 415.6L1422 418Q1422 421 1425 421L1429.3 421Q1432.3 421 1432.3 424L1432.3 473Q1432.3 476 1429.3 476L1425 476Q1422 476 1422 479L1422 483.5Q1422 486.5 1419 486.5L1352 486.5Q1349 486.5 1349 483.5Z" clip-rule="evenodd"/></clipPath>
<g clip-path="url(#bdc)">
<defs><path id="ol" d="M488.1 491.4Q489.8 487.8 493.8 488L505.6 488.6Q509.6 488.8 513.3 490.3L523.8 494.3Q527.5 495.8 531.5 495.9L594.8 496.7Q598.8 496.8 602.6 498.1L608.9 500.4Q612.7 501.7 616.7 502L624.5 502.4Q628.5 502.7 631.4 500L637.5 494.5Q640.4 491.8 640.7 487.8L641.7 474Q642 470 643.9 466.5L644.1 466Q646 462.5 649 461.8L649 461.8Q652 461 656 461L740 461Q744 461 746.8 463.8L747.2 464.2Q750 467 750 471L750 581Q750 585 748.5 587.5L748.5 587.5Q747 590 743.2 591.1L736.8 592.9Q733 594 731.2 597.6L725.8 608.4Q724 612 720.7 614.3L719.3 615.2Q716 617.5 712 617.5L614 617.5Q610 617.5 607.2 614.6L600.8 607.9Q598 605 597.9 601L597.1 570Q597 566 594 563.3L584 554.2Q581 551.5 577 551.5L532 552Q528 552 524.9 554.6L519.1 559.4Q516 562 512 562L496 562Q492 562 489.2 559.2L481.8 551.8Q479 549 479 545L479 514Q479 510 480.7 506.4ZM540 569Q540 565 542.5 561.9L543 561.1Q545.5 558 549.5 557.9L583 557.4Q587 557.3 588.9 560.1L588.9 560.1Q590.7 563 590.7 567L591 608.7Q591 612.7 593.5 615.8L596.3 619.5Q598.8 622.6 602.8 622.8L612.7 623.4Q616.7 623.6 619.7 626.2L621 627.4Q624 630 624 634L624.2 648.5Q624.2 652.5 621.6 655.5L619.8 657.7Q617.2 660.7 613.2 660.7L574.6 660.7Q570.6 660.7 568 657.7L566.2 655.5Q563.6 652.5 563.6 648.5L563.6 633.2Q563.6 629.2 561.1 626L557.9 621.9Q555.4 618.7 551.4 618.2L550 618.1Q546 617.6 543.3 614.6L542.5 613.6Q539.8 610.6 539.8 606.6ZM756 456Q756 452 758 449.8L758 449.8Q760 447.5 764 447.4L833.6 445.8Q837.6 445.7 841.6 445.3L877.9 442.2Q881.9 441.8 885.3 439.7L889 437.3Q892.4 435.2 896.4 435.2L917.5 435.2Q921.5 435.2 923.6 438.6L923.6 438.8Q925.7 442.2 925.7 446.2L925.7 477.9Q925.7 481.9 923.8 485.4L916.4 498.6Q914.5 502.1 913.5 506L912 511.1Q911 515 907 515.4L853.2 520.4Q849.2 520.8 845.3 521.6L830.9 524.7Q827 525.5 823 525.5L771.6 525.5Q767.6 525.5 764.2 523.4L759.4 520.6Q756 518.5 756 514.5ZM754.8 540Q754.8 536 757.7 533.9L757.7 533.9Q760.6 531.8 764.6 531.8L821.9 531.8Q825.9 531.8 829.8 531.1L845.3 528.5Q849.2 527.8 853.2 527.7L908.2 526.7Q912.2 526.6 914.8 529.6L916.6 531.8Q919.2 534.8 919.2 538.8L919.2 553Q919.2 557 918.4 560.9L914.1 581.1Q913.3 585 910.7 588L907.8 591.2Q905.2 594.2 904.7 598.2L903.3 608.9Q902.8 612.9 899.2 614.7L897.1 615.8Q893.5 617.6 889.5 617.6L857.9 617.6Q853.9 617.6 850.3 619.4L843.5 622.8Q839.9 624.6 835.9 624.6L774 624.6Q770 624.6 766.5 622.7L760.6 619.5Q757.1 617.6 756.5 613.6L754.7 600.6Q754.1 596.6 754.1 592.6ZM509.5 379.8Q510 375.8 513.3 373.5L513.7 373.3Q517 371 521 370.6L534 369.2Q538 368.8 541.5 366.9L553.1 360.7Q556.6 358.8 560.6 358.9L594.5 359.4Q598.5 359.5 600.9 362.7L602 364.4Q604.4 367.6 604.4 371.6L604.4 388Q604.4 392 602 395.2L600.9 396.6Q598.5 399.8 594.5 399.8L535 399.8Q531 399.8 527.3 398.3L518.3 394.8Q514.6 393.3 512 390.2L511.4 389.4Q508.8 386.3 509.3 382.3ZM618.4 402Q618.4 398 619.2 394.1L621.1 384.3Q621.9 380.4 625.6 378.9L629.8 377.3Q633.5 375.8 637.5 375.9L663.3 376.9Q667.3 377 669.3 380.5L669.3 380.5Q671.3 384 671.1 388L669.9 405.6Q669.7 409.6 667.6 413L665.9 415.5Q663.8 418.9 660.2 420.7L653.4 424.1Q649.8 425.9 648 429.5L647 431.6Q645.2 435.2 641.2 435.7L628.2 437.1Q624.2 437.6 621.6 434.5L621 433.7Q618.4 430.6 618.4 426.6ZM1287.8 384.4Q1287.8 380.4 1290.9 377.9L1299.9 370.5Q1303 368 1306.5 368.4L1306.5 368.4Q1310 368.8 1313 366.1L1318.6 361Q1321.6 358.3 1325.6 358.3L1399.2 357.8Q1403.2 357.8 1406.2 360.4L1414.2 367.4Q1417.2 370 1418.4 373.8L1419.5 377.8Q1420.7 381.6 1421.2 385.6L1421.3 387Q1421.8 391 1419.5 393.3L1419.5 393.3Q1417.2 395.6 1413.2 395.7L1369.9 396.6Q1365.9 396.7 1362.2 398.3L1355.6 401Q1351.9 402.6 1348.2 404.2L1339.3 408Q1335.6 409.6 1331.6 409.6L1298.8 409.6Q1294.8 409.6 1292 406.8L1290.6 405.4Q1287.8 402.6 1287.8 398.6ZM1210.8 571.4Q1213.6 568.6 1213.6 564.6L1213.6 439Q1213.6 435 1215.4 431.4L1217.7 427.2Q1219.5 423.6 1223.3 422.4L1229.7 420.2Q1233.5 419 1237.5 419L1275.6 418.9Q1279.6 418.9 1283.1 420.8L1286.6 422.8Q1290.1 424.7 1294.1 424.7L1326.9 424.7Q1330.9 424.7 1333.7 427.5L1333.9 427.7Q1336.7 430.5 1336.7 434.5L1336.7 456.8Q1336.7 460.8 1332.9 462L1325.4 464.3Q1321.6 465.5 1320.1 469.2L1318.4 473.5Q1316.9 477.2 1318.1 481L1319.2 485Q1320.4 488.8 1323.9 490.7L1329.7 493.9Q1333.2 495.8 1337.2 495.8L1429.5 495.8Q1433.5 495.8 1436.7 493.4L1439.6 491.2Q1442.8 488.8 1446.8 488.8L1466.8 488.8Q1470.8 488.8 1473.2 492L1481.2 502.4Q1483.6 505.6 1483.6 509.6L1484.8 601.9Q1484.8 605.9 1482.2 608.9L1473.4 619.2Q1470.8 622.2 1467 623.5L1453.6 627.9Q1449.8 629.2 1445.8 629.4L1430.5 630.1Q1426.5 630.3 1424.2 633.5L1419.5 640Q1417.2 643.2 1414.4 646L1406 654.4Q1403.2 657.2 1399.2 657.3L1337.2 658.2Q1333.2 658.3 1329.2 658.1L1293 656.2Q1289 656 1285.4 654.2L1283.2 653.1Q1279.6 651.3 1275.6 651.2L1244.5 650.3Q1240.5 650.2 1238.7 646.6L1237.6 644.5Q1235.8 640.9 1233 638.1L1229.3 634.4Q1226.5 631.6 1222.5 631.6L1216.5 631.6Q1212.5 631.6 1209.9 634.6L1206.9 637.9Q1204.3 640.9 1202.9 644.6L1202.2 646.5Q1200.8 650.2 1196.8 650.4L1183.8 651.2Q1179.8 651.4 1177.5 648.1L1176.3 646.5Q1174 643.2 1174 639.2L1174 588.9Q1174 584.9 1176.6 581.8L1177.2 581Q1179.8 577.9 1183.8 577.4L1203.8 574.9Q1207.8 574.4 1210.6 571.6ZM1015.5 598.2Q1015.5 594.2 1018.3 591.4L1020.8 588.9Q1023.6 586.1 1027.6 586.1L1077.9 586.1Q1081.9 586.1 1085.9 585.6L1096.6 584.3Q1100.6 583.8 1104.5 582.8L1110.7 581.3Q1114.6 580.3 1118.5 581L1124.6 581.9Q1128.5 582.6 1131.9 584.7L1134.5 586.3Q1137.9 588.4 1141.9 588.6L1159.5 589.4Q1163.5 589.6 1166.2 592.5L1167.3 593.7Q1170 596.6 1170 600.6L1170 606.6Q1170 610.6 1168.9 614.5L1164.6 630Q1163.5 633.9 1162.1 637.6L1157.9 648.8Q1156.5 652.5 1153.2 654.7L1152.8 655Q1149.5 657.2 1145.5 657.2L1076.6 657.2Q1072.6 657.2 1069.1 655.2L1062.1 651Q1058.6 649 1054.6 648.9L1024.1 648Q1020.1 647.9 1017.9 644.6L1017.7 644.2Q1015.5 640.9 1015.5 636.9ZM485.5 463.2L485.5 408.9Q485.5 404.9 487.8 402.8L487.8 402.8Q490 400.7 494 400.7L507.6 400.7M533 415.6Q533 412.6 536 412.6L604 412.6Q607 412.6 607 415.6L607 483.5Q607 486.5 604 486.5L536 486.5Q533 486.5 533 483.5L533 479Q533 476 530 476L527 476Q524 476 524 473L524 424Q524 421 527 421L530 421Q533 421 533 418Z" fill="none"/></defs>
<use href="#ol" stroke="#004c23" stroke-width="8"/><use href="#ol" stroke="#006b35" stroke-width="6"/><use href="#ol" stroke="#004c23" stroke-width="4"/><use href="#ol" stroke="#006b35" stroke-width="2.4"/>
<path d="M488.1 491.4Q489.8 487.8 493.8 488L505.6 488.6Q509.6 488.8 513.3 490.3L523.8 494.3Q527.5 495.8 531.5 495.9L594.8 496.7Q598.8 496.8 602.6 498.1L608.9 500.4Q612.7 501.7 616.7 502L624.5 502.4Q628.5 502.7 631.4 500L637.5 494.5Q640.4 491.8 640.7 487.8L641.7 474Q642 470 643.9 466.5L644.1 466Q646 462.5 649 461.8L649 461.8Q652 461 656 461L740 461Q744 461 746.8 463.8L747.2 464.2Q750 467 750 471L750 581Q750 585 748.5 587.5L748.5 587.5Q747 590 743.2 591.1L736.8 592.9Q733 594 731.2 597.6L725.8 608.4Q724 612 720.7 614.3L719.3 615.2Q716 617.5 712 617.5L614 617.5Q610 617.5 607.2 614.6L600.8 607.9Q598 605 597.9 601L597.1 570Q597 566 594 563.3L584 554.2Q581 551.5 577 551.5L532 552Q528 552 524.9 554.6L519.1 559.4Q516 562 512 562L496 562Q492 562 489.2 559.2L481.8 551.8Q479 549 479 545L479 514Q479 510 480.7 506.4ZM540 569Q540 565 542.5 561.9L543 561.1Q545.5 558 549.5 557.9L583 557.4Q587 557.3 588.9 560.1L588.9 560.1Q590.7 563 590.7 567L591 608.7Q591 612.7 593.5 615.8L596.3 619.5Q598.8 622.6 602.8 622.8L612.7 623.4Q616.7 623.6 619.7 626.2L621 627.4Q624 630 624 634L624.2 648.5Q624.2 652.5 621.6 655.5L619.8 657.7Q617.2 660.7 613.2 660.7L574.6 660.7Q570.6 660.7 568 657.7L566.2 655.5Q563.6 652.5 563.6 648.5L563.6 633.2Q563.6 629.2 561.1 626L557.9 621.9Q555.4 618.7 551.4 618.2L550 618.1Q546 617.6 543.3 614.6L542.5 613.6Q539.8 610.6 539.8 606.6ZM756 456Q756 452 758 449.8L758 449.8Q760 447.5 764 447.4L833.6 445.8Q837.6 445.7 841.6 445.3L877.9 442.2Q881.9 441.8 885.3 439.7L889 437.3Q892.4 435.2 896.4 435.2L917.5 435.2Q921.5 435.2 923.6 438.6L923.6 438.8Q925.7 442.2 925.7 446.2L925.7 477.9Q925.7 481.9 923.8 485.4L916.4 498.6Q914.5 502.1 913.5 506L912 511.1Q911 515 907 515.4L853.2 520.4Q849.2 520.8 845.3 521.6L830.9 524.7Q827 525.5 823 525.5L771.6 525.5Q767.6 525.5 764.2 523.4L759.4 520.6Q756 518.5 756 514.5ZM754.8 540Q754.8 536 757.7 533.9L757.7 533.9Q760.6 531.8 764.6 531.8L821.9 531.8Q825.9 531.8 829.8 531.1L845.3 528.5Q849.2 527.8 853.2 527.7L908.2 526.7Q912.2 526.6 914.8 529.6L916.6 531.8Q919.2 534.8 919.2 538.8L919.2 553Q919.2 557 918.4 560.9L914.1 581.1Q913.3 585 910.7 588L907.8 591.2Q905.2 594.2 904.7 598.2L903.3 608.9Q902.8 612.9 899.2 614.7L897.1 615.8Q893.5 617.6 889.5 617.6L857.9 617.6Q853.9 617.6 850.3 619.4L843.5 622.8Q839.9 624.6 835.9 624.6L774 624.6Q770 624.6 766.5 622.7L760.6 619.5Q757.1 617.6 756.5 613.6L754.7 600.6Q754.1 596.6 754.1 592.6ZM509.5 379.8Q510 375.8 513.3 373.5L513.7 373.3Q517 371 521 370.6L534 369.2Q538 368.8 541.5 366.9L553.1 360.7Q556.6 358.8 560.6 358.9L594.5 359.4Q598.5 359.5 600.9 362.7L602 364.4Q604.4 367.6 604.4 371.6L604.4 388Q604.4 392 602 395.2L600.9 396.6Q598.5 399.8 594.5 399.8L535 399.8Q531 399.8 527.3 398.3L518.3 394.8Q514.6 393.3 512 390.2L511.4 389.4Q508.8 386.3 509.3 382.3ZM618.4 402Q618.4 398 619.2 394.1L621.1 384.3Q621.9 380.4 625.6 378.9L629.8 377.3Q633.5 375.8 637.5 375.9L663.3 376.9Q667.3 377 669.3 380.5L669.3 380.5Q671.3 384 671.1 388L669.9 405.6Q669.7 409.6 667.6 413L665.9 415.5Q663.8 418.9 660.2 420.7L653.4 424.1Q649.8 425.9 648 429.5L647 431.6Q645.2 435.2 641.2 435.7L628.2 437.1Q624.2 437.6 621.6 434.5L621 433.7Q618.4 430.6 618.4 426.6ZM1287.8 384.4Q1287.8 380.4 1290.9 377.9L1299.9 370.5Q1303 368 1306.5 368.4L1306.5 368.4Q1310 368.8 1313 366.1L1318.6 361Q1321.6 358.3 1325.6 358.3L1399.2 357.8Q1403.2 357.8 1406.2 360.4L1414.2 367.4Q1417.2 370 1418.4 373.8L1419.5 377.8Q1420.7 381.6 1421.2 385.6L1421.3 387Q1421.8 391 1419.5 393.3L1419.5 393.3Q1417.2 395.6 1413.2 395.7L1369.9 396.6Q1365.9 396.7 1362.2 398.3L1355.6 401Q1351.9 402.6 1348.2 404.2L1339.3 408Q1335.6 409.6 1331.6 409.6L1298.8 409.6Q1294.8 409.6 1292 406.8L1290.6 405.4Q1287.8 402.6 1287.8 398.6ZM1210.8 571.4Q1213.6 568.6 1213.6 564.6L1213.6 439Q1213.6 435 1215.4 431.4L1217.7 427.2Q1219.5 423.6 1223.3 422.4L1229.7 420.2Q1233.5 419 1237.5 419L1275.6 418.9Q1279.6 418.9 1283.1 420.8L1286.6 422.8Q1290.1 424.7 1294.1 424.7L1326.9 424.7Q1330.9 424.7 1333.7 427.5L1333.9 427.7Q1336.7 430.5 1336.7 434.5L1336.7 456.8Q1336.7 460.8 1332.9 462L1325.4 464.3Q1321.6 465.5 1320.1 469.2L1318.4 473.5Q1316.9 477.2 1318.1 481L1319.2 485Q1320.4 488.8 1323.9 490.7L1329.7 493.9Q1333.2 495.8 1337.2 495.8L1429.5 495.8Q1433.5 495.8 1436.7 493.4L1439.6 491.2Q1442.8 488.8 1446.8 488.8L1466.8 488.8Q1470.8 488.8 1473.2 492L1481.2 502.4Q1483.6 505.6 1483.6 509.6L1484.8 601.9Q1484.8 605.9 1482.2 608.9L1473.4 619.2Q1470.8 622.2 1467 623.5L1453.6 627.9Q1449.8 629.2 1445.8 629.4L1430.5 630.1Q1426.5 630.3 1424.2 633.5L1419.5 640Q1417.2 643.2 1414.4 646L1406 654.4Q1403.2 657.2 1399.2 657.3L1337.2 658.2Q1333.2 658.3 1329.2 658.1L1293 656.2Q1289 656 1285.4 654.2L1283.2 653.1Q1279.6 651.3 1275.6 651.2L1244.5 650.3Q1240.5 650.2 1238.7 646.6L1237.6 644.5Q1235.8 640.9 1233 638.1L1229.3 634.4Q1226.5 631.6 1222.5 631.6L1216.5 631.6Q1212.5 631.6 1209.9 634.6L1206.9 637.9Q1204.3 640.9 1202.9 644.6L1202.2 646.5Q1200.8 650.2 1196.8 650.4L1183.8 651.2Q1179.8 651.4 1177.5 648.1L1176.3 646.5Q1174 643.2 1174 639.2L1174 588.9Q1174 584.9 1176.6 581.8L1177.2 581Q1179.8 577.9 1183.8 577.4L1203.8 574.9Q1207.8 574.4 1210.6 571.6ZM1015.5 598.2Q1015.5 594.2 1018.3 591.4L1020.8 588.9Q1023.6 586.1 1027.6 586.1L1077.9 586.1Q1081.9 586.1 1085.9 585.6L1096.6 584.3Q1100.6 583.8 1104.5 582.8L1110.7 581.3Q1114.6 580.3 1118.5 581L1124.6 581.9Q1128.5 582.6 1131.9 584.7L1134.5 586.3Q1137.9 588.4 1141.9 588.6L1159.5 589.4Q1163.5 589.6 1166.2 592.5L1167.3 593.7Q1170 596.6 1170 600.6L1170 606.6Q1170 610.6 1168.9 614.5L1164.6 630Q1163.5 633.9 1162.1 637.6L1157.9 648.8Q1156.5 652.5 1153.2 654.7L1152.8 655Q1149.5 657.2 1145.5 657.2L1076.6 657.2Q1072.6 657.2 1069.1 655.2L1062.1 651Q1058.6 649 1054.6 648.9L1024.1 648Q1020.1 647.9 1017.9 644.6L1017.7 644.2Q1015.5 640.9 1015.5 636.9ZM485.5 463.2L485.5 408.9Q485.5 404.9 487.8 402.8L487.8 402.8Q490 400.7 494 400.7L507.6 400.7" fill="none" stroke="#e6e6e6" stroke-width="1.9"/>
<rect x="991.4" y="440.6" width="219.2" height="132.7" fill="none" stroke="#d8e4d8" stroke-width=".9"/>
<path d="M578.8 516.3l-12.5 -12.5v-8.7h21.9M735.1 518.1l-19.5 -19.5l-11 -11h-17.6M611.5 350v14.7l18.2 18.2l18.4 -18.4M909.5 371.6v7.9l19.4 19.4M752.2 513l8.2 -8.2v-21.8l-19.5 -19.5M782.6 660.1v6.2l-21.8 21.8h-11.4M466.4 478.4h-4.8v16.9l19.9 -19.9M971.2 440.3h-14.8h21.5M771 390.6v-9.6v10.8M788.2 533h15.2v-15.4v11.9l9.5 -9.5M862.8 659.9h-10.8h15.4v10.4M770.2 430.4h-14.6v8.5v14.7M547.5 400l8.8 -8.8h-21.5v13M579.2 400.7l-16.6 16.6v-16.1v-18.6M497.3 580.4l-12.1 -12.1h-13.5M618.6 610.9h19.5l5.5 -5.5v9.3v10.2M605.8 524.1v-6.8v21M744.4 659.4h4.6l17.5 17.5h19.5h-18.6M474.1 600.2h20.1l4.9 -4.9h-13.1l4.4 -4.4M940.5 538.3h8.5h-10.3h-13.6M544.4 596.5h12.8h-17.6M594.6 510.8h-12.5h-18h4.9M958.9 616.8l13 -13v5.3M789.8 530.1v7.4v-6.2l-17 -17M478.2 489.3l-10.8 10.8h10.7l9.7 9.7h8.4M814.7 363.2h-11.7v10.7h-12.4M940.6 577v16l-13.6 13.6h8.2h-13.5M796.2 461.7v-19.1h19.2M887.5 648.6v-18.4l-13.2 -13.2l-17.5 17.5l-7.2 -7.2M971.1 549.3l16.6 16.6v14.8l-11.5 11.5M714.2 655.3l21.4 21.4h-15.6h5.7M929 507.6l-16.9 -16.9v-17.5l-13.3 13.3M802.4 617.1l14.5 -14.5v4.4v7.6h-9.8M671.9 566l-7.7 7.7l5.3 -5.3v-20.4l-16.9 -16.9M896.6 418.4v-6.5v-7.1M617.7 477.1h6.1v4.7l17.2 -17.2h10M651.9 365.3l17.4 17.4h-13.8v5.4h11.9M506 645l17.9 17.9l16.2 -16.2v-16.1M800.1 504.8l-9.3 -9.3h10.7M519.5 641.9v15.6l-9.4 9.4M704.9 593.4h-5.9l13.8 13.8h8.8h-19.7M703 427.9l10.4 10.4v-13.7v-13h-8.9M807.6 522.9h-7.3l11.5 -11.5l14.9 -14.9l-13.5 -13.5M904.2 459.8h19.2v21.1v13.9M783 656.5l9.4 -9.4l-7.4 -7.4l-8.2 8.2h-7.5M475.1 502.1v6l-20.1 20.1h-15.2h-10.5M717.1 501.5v9.8l-16.5 -16.5M825.4 579.7h-20.8v-16.6v-9.7M666.8 613.9h11l5.2 -5.2l-12.8 12.8v17.6M682.2 487.5l8.6 8.6l10.5 -10.5M956.4 600.6v6.6l-7.5 -7.5h-14.5M784.5 385.1h-12h19.1v-9.7l-16.9 16.9M476.2 499.8h5.7h-7M634.7 380.2l9.2 9.2v8.5M471.5 449.2v5.7h-14.7h-4.5M465.8 503h7.4h20.2v18.5M941.1 351.1l15.4 -15.4v7.3h13.1M732.8 592.2h19.1l-10.5 10.5v11.9M858.2 495.7h13.1v-4.8l17.5 -17.5M847.4 559.5v-8.3l19.7 19.7M918.8 577.4v-4v-18.2v-14.2M688.4 606.3h-16.4l-6.6 -6.6M574.6 653.4l13.3 -13.3v-7.2M477.3 601.2h-19.5h21h6h-18.9M787.2 586.7v11.3h9.3v-7.7v-9.4M632.2 402.2l16.4 16.4l-5.2 -5.2M636.9 662.6h-11.8v-7.9l-20.8 20.8M936.6 513.6v21.1v20.1v-22M606.7 642.7h-4.5v-13.1M785.9 353.1h9h-10.2l-18.1 -18.1v9.4M685 406.6l9.1 9.1h11.8v-13.5M641.6 616.3h12.3v-17.5h-6.4M732.5 393.7h7.7v21.6M961.3 351.4h4.2v-19M688.2 424.8v11.5v4.8h-15.3l-8.5 8.5M718.6 609.2h-9h-4.3v12.4v-13.3M607.6 363.9l5.8 5.8v9M689.5 650.8l-9.7 9.7v19.3M936.6 538.4v-14.3v6.3M508.9 556.7h13.3h9.6h15.8M619.2 427.8v9.7l-9.1 9.1M585.1 657.6v-8.1l-5.4 -5.4M781.7 605v-21.5v8.8M694.3 433.8h7.1h-6.6l21.9 -21.9h-11.1M847.9 397.1l-18.8 -18.8l-21.3 21.3M857.9 480.4h-9.1h-6.6M653.9 643.9h-20.8v21.9h5.2h16.7M699.9 579.6l19.4 19.4v13.7v6.7v7.6M937.3 614.9v-21.3v-8.8M523.3 535.6v-15.1h-14.3M904.8 597.3l10.7 -10.7v13.7v-6.6v12.2M784.5 531.5l17.9 17.9v21.6v-7.3l-21.9 21.9M680.3 426.5v-10l13.5 -13.5M491.7 477.9v5.1v-7.8v-13.3l-12.9 12.9M833.8 466.2v4.2l10.7 10.7l-16.3 16.3h-9.8M647.4 539.2h7.8v-7.5M734 638.5v-17.3v-10.1l19.8 -19.8v6.5M604 401.5l19.9 -19.9v10.9M885.5 399.5h11l15.3 15.3v-5.7M489.2 624.2v-5.2v12.6l20.1 20.1l8.1 -8.1M790.6 650.4l-13.3 -13.3h8.2M881.3 637.5v10.2l-21.3 -21.3l-9.4 9.4M775.9 455l-17.3 17.3h17l-7.5 -7.5h-20.9M934.9 502.4v-7.4v13M910.1 560.6h8.3v8v-10.2l-21.4 -21.4M569.7 483.3h-8.4h18.6l8.2 8.2l7.2 7.2M649.2 365.5v-12.8v13.4l12.9 12.9v11.3M847.2 377.2v-19.6l9.8 -9.8v-12.6M901.4 484.7h-14.5l5.7 5.7l9.8 9.8M932.6 477l17.8 17.8v-14.2v16.6l-6 6M928.2 497.4v12.4l-14.4 -14.4l-12.7 -12.7l-16 -16M740.8 378l13.3 13.3h12.6h-20.9M565.3 375.7v6.7l-7.3 -7.3h21.7M834.5 632.5l-6.4 -6.4v-10M624.6 587h16l6.4 6.4M716.1 562.7v8.6l-20.2 -20.2h-7.1M565.1 585.6l21.2 21.2h15.3h-6.1l5.3 5.3M533.1 516.3l17.2 -17.2h-15.2h-4.1l18.1 18.1M741.3 554.9v-7.2h9.1h4.1M723.4 446.2h-4.8v4.2l-17 17M689.5 599.3h8.1v5.7l-6.1 6.1M505.8 471.6v8l13.2 -13.2l14.6 -14.6h-18.3M602.6 644.3h-11.9v-22h10.6h-5.3M703.5 420.2h4.2l4.1 -4.1h10.2M613.2 493.1v18.4l14.1 -14.1h-21.4M578.5 391.4l-17.5 -17.5h21.3l-19.4 19.4M491.2 559.1v16l18.1 18.1M633.2 643.9v12.7v-17.5v5.8M839.7 650h-17l-8.3 8.3h10.9M506.6 397.9v8.6l14.4 14.4h10.6v20.3M596.6 411.1h-17.8l-11.4 11.4M702.8 462.6l-11.8 11.8v-5h-7.5h-11.1M519 532.7l19.4 19.4h6.8v9.7M721.2 349.4h14.6v-13.9h-9.1h-20M897 622.5h-17.3v-14.1l7.7 -7.7M717.8 436.6h-17.6v10.2M535.9 653.8l-14 14v8.5M593 433.4h-12.1v-10.3h11.6l-10.2 10.2M841.6 537h7.1v-14.8M625.2 376.9l13.8 13.8l9.2 9.2l-11.9 11.9M456.4 593.6v-9v10.8l-10.6 10.6M703.2 500.6h12.5h-8.2l-19.6 19.6M618 457.5h-19.2l5 -5M511.2 584.7v-17.4v-16.2h-20M799.5 405.3v5.5h-18.4M825.3 352.2l7.9 7.9v-16.6h-16.6h17.6M522.2 614.4l13.4 -13.4l17.1 17.1h-8.2M737.1 448.1h13.4v-10.1v-10.7M934.9 576.4v11.3h20.6h14.8v21M729.4 607.4l20 -20v-5.6v18.1M823.2 405.6l6.4 -6.4h-20.9v-16.2M605.5 553.7l5.8 5.8v-12.8l9.7 -9.7l12.3 12.3M899.4 508.1h-5.2v-19.8v-18.8M475.5 391.2h-19.3v-16.8M461.9 516.7v6.6l8.5 8.5h12.2h12.3M890.1 641.9l5.5 5.5v-10.6h-21.3v17.4M811.7 477.1l5.4 -5.4v-21M677.5 557.2l-4.4 4.4l8.2 8.2l-10.4 -10.4M643.5 578.6l6.8 -6.8h14.3M961.6 586l18.8 -18.8v19l-11.1 11.1l5.9 5.9M589.8 612.4l15.6 -15.6l-10.2 10.2v19.9l7.5 -7.5M792.3 410v19.7v-8.4M963.1 376h15.8h21.2v-15.1l13.5 -13.5M871.2 493.2v-8.7h16.2h7.5h21.8M905.5 521h15.2v18.7l20.1 -20.1M695.5 403v-11.9v-13.8l13.7 -13.7l16.2 16.2M481.3 364.4h-6.7l-18.3 18.3h-13.6h11.1M468 373.7h10.9h-6l5.2 -5.2M550.4 399.6v5.3l-15.9 -15.9h15.6v-20M912.2 414.8l-10.4 -10.4h-15.3v-6M909.1 617.4l21.2 -21.2l-18 18M502.2 420.9h-6.2h15.9h6.3M469.8 465l-11.5 -11.5h-20.7M874.5 396.9l18.7 18.7l-12.3 -12.3v-14.7M466.7 456.2h-7.2h19.5M781.8 616.7l-20.1 20.1v6.8h-15.7M621.4 527.7l-15.3 15.3v-5.5v-16.1v-9.5M773 646l-17.6 -17.6h13.3v21.2l-18.6 -18.6M818.8 543.3h8.3v17.3l18.5 18.5v13.6M496.5 606.7l-9.7 -9.7v15l-12.4 -12.4v19.1M539.8 375l12.9 12.9h17.3l-18.2 -18.2M761.6 400.8h12.6l18.5 -18.5M535.4 341.5v-5.9l16.3 -16.3l14.3 -14.3M615.7 547.5l9 -9h-10.8v-21h8.5M755.8 362.5v-4.1v-12.1l-11.3 11.3l-5.7 -5.7M583.6 346v-9.6v-8.1v-6v7.1M544.4 647.6v-14h12h-10.3M906.9 382.3v15.2l-5.8 -5.8h-18.8v-9.7M545.4 656l-13.5 -13.5v15.4h-5.4v-16.9M863.2 641.4v12.2v13.7M857.9 483v-16.7l16.4 -16.4M748.3 438.9l20.4 -20.4v21.6M804.7 449.9h10h20.4M646.8 424.4v-16.2v13.4l-13.7 13.7v-11.6M864 415.5h-8.6h13.3v8.7v7.8M867.8 365.1h-15.9l-21.1 21.1M580.2 446.6l21.4 -21.4h10.8v15.8M537.1 611.1h-17.3h-18.2M671 483.5l-17.8 -17.8v17.8l-10.2 -10.2l17.5 17.5M789.7 546.8l19.2 19.2h-21.3M636.8 347.9l11.9 -11.9h14.4h-17.7M607.1 607.6v5.5v4.9v20.4M535.6 417.6l-10.7 -10.7l12.8 12.8M797.2 607.8l14.8 14.8v-16.8l-11.6 -11.6M758.1 389.2v5.1l13.4 13.4v-21.1M459.6 346h9.7v-20.9l16.5 -16.5M546.6 381.9l-15.5 -15.5l12.3 12.3h16l9.5 -9.5M649.1 457.4l-20.5 20.5l10.5 -10.5h19.8M802.6 486.5l12 12v4.6h-18.9h5.5M648.9 511.7l-17.2 -17.2h9.6v20.5h14.8M661.6 456.1l-17.6 -17.6l-20.8 -20.8M971.2 361.7v17.2v-15.8l-18.8 18.8l10.8 10.8M578.1 497.5h21.9h-17.5v-21M879.1 570.3l-11.7 11.7h4.2l14.6 -14.6M807.1 521.4l-14.6 14.6v14l-15.4 -15.4v20.3M903.1 441.8l6.5 6.5l8.5 -8.5h-13.2v-18.8M891 547.4v-17.3l-6.8 6.8M734.8 377.5h-22l15 15v8.3h17.4M649.7 584.8v-7.6v-17h-10.2M563.5 577.1v14.5v11.6M798.6 633.5v21.3v17.5v16.6h-5.3M507 657.9v22h-14.2v18.5M736.4 593.5l9.2 -9.2h-19.9l21 21l14.4 14.4M822.6 637v4h-19M656.7 599.1l18.4 -18.4h-8.7M818.6 619.9l-10 -10v14.9M565.8 652.3h18.2v-13.1h-4.7l14.8 -14.8M967.9 547.9v11.9v8M799.4 611.8v12.2l19.5 19.5l11.1 11.1l21.1 -21.1M467.4 603.7h5.6l6.5 -6.5M1499.3 530.8v-6.2v-15.1l-9.3 9.3l-4.4 4.4M1222.3 486.6v17.9l7.9 -7.9h-5.5M1252.7 406.6l-11.8 -11.8h-21.9l-7 -7v-9.5M1220.9 644.9h20.2l12.1 12.1M1252.5 518v16v-18.6M1075.6 542.9v-8.9h12.2M1037.5 614.1v7.6l16.8 -16.8M1346 427.8l16.8 -16.8v-19.3l7.4 -7.4v-16M1248.3 510.7l-6.9 -6.9v-20.8h-14.5M1103.7 429.9v8.2h9.2l17.6 17.6M1270.1 442.8l-12.1 12.1l15.8 -15.8M1333.3 361.8h-6h15.3h-19.3M1319.3 439.6h18.3h4.8v10.2v-13.1M1316.8 423.7v10.4l17.6 17.6M1332.3 450.5h10.8v-13.7M1072.7 638.4l-19.5 -19.5h17.8h-6.6v20.4M1406.8 456.6h9.9l19.3 -19.3v21.7M1139.2 624.4h-17.4l12.8 12.8M1046 379.3h21.3h15.6l-21.4 -21.4h20.2M1449.8 512.5l-8.6 -8.6h5.5l4.6 4.6M1325.8 385.3l-4.4 -4.4v-13.2l-18.5 18.5M1287.7 531.9l-11.7 11.7l-17.1 17.1M1507.1 556.5h4.2h4h-7.2v19.7M1132.5 503.2l-14.1 -14.1v-15.9M1269.7 360.9l8.2 -8.2h13.6M1211.4 348h-18.4v4.5M1407.3 342.3h21.6v-20.3h15.9l-4.9 4.9M1320.9 368.6h7.4v8.3v10.6l-16.3 16.3M1231.6 529.9l21 21h16.2l-6.4 -6.4v20.9M1279.7 482.1v-11.7h7.5h-4.3M1068.7 547.3h18.2l-7.2 7.2M1338.8 625.3l-6 -6l-8.2 8.2M1251 603l-16.8 16.8h11.6h8.6l20.5 20.5M1045.2 410.9h-7.2v-7.8l19.9 19.9M1030.1 569.1v-5.3v-4.6M1427.3 621.3l7.1 7.1h10.4h13.6v13M1412.3 368.9h11.6v6M1059.9 455.7h12.3v4.5l16.2 16.2v-5.5M1218.8 370.7h-13v17.4h9.7M1121.9 372.5h8.6h13.4l-6.8 6.8l-18.6 -18.6M999.1 532.2l-4.7 4.7l-15.5 -15.5h9.8v-5.6M1356.3 428.5h19.2l-13.1 -13.1v-12.3M1281.4 564.4v19.8h6.4v10.6M1296.6 456.9h-10.6h-15.9l-10.4 10.4h-8.4M990 475.6l-10.4 10.4v-11.8h13.2l-4.3 4.3M1484.9 432.3l21 21h11.1l-20.6 -20.6v6.7M1162 358.7v6.1h-17.5h14.1h13.5M1198.3 377.8h17.1h-6.9M1252.1 409.2h11.7l-9.7 -9.7h8.1h-5.1M1016 508.2h-10.4h-19.6M1003.2 655.2l6.7 -6.7v-21.7v5.4h-15M1150.3 342.5l6 -6h20.5v7.8v18.1M1249.1 596h-21.1v-16.5l20.6 -20.6l-18 -18M1110.8 619.7l-17.3 -17.3v-11.5v12M1324.6 655.2h12.4h-17.7v-18.1M1428.2 610.5v10.9l-19.9 -19.9M1434.9 397.8l-19.2 -19.2v14.4l19.6 19.6v-13.8M1392.6 530.3h-13.6v-19.4M1078.6 615v-20.1v13.9l6.2 -6.2M1160.3 524.4h-10.3l-9.2 9.2h5.7l-12.4 12.4M1507.2 355.3h-12.3h19.7h5M1166.6 479.1h-20h21.7h16.1l-6.6 6.6M1077 348.4h19.2l11.1 11.1M1420.7 643.4v-9v11.2M1353.6 507.3v-9.8h-12.5v4.4M1179.9 453.6v5.4l-21.8 -21.8v18.3l-21 21M1087.9 548.7l-13.3 13.3h19.9v10.8M1196.8 537.5v-10.1h15.9h13.5M1322.6 415.1l-19.1 19.1h19M1410.7 462.7l-9.1 9.1l6.7 6.7M1454.8 391h17.6v-15.9M1151.9 432.6v-8.2v-8.9h19M1239.8 363.8v11l-15.2 -15.2l-13.8 13.8v-19.5M1147 582.7h-20v19.5M1452.1 605.1h-21l9.7 9.7M1453.9 434.1v-4.7v20.1M989.5 468.9v-14.9l17 -17l-17.7 -17.7l8.6 8.6M1187.3 367.6v4.2l-14 -14l-9.2 9.2h12.5M1088.7 457.5h14.3h9.5M1177.1 490.4l8.2 -8.2v-14.2h-10.1M1470.9 627.2h-13.5h14.7h5.4M1424.5 351.8l18 -18v-18.1M1148.1 577v-7.7v13.9l-21.2 -21.2h16.5M999.4 388.9h5.8h-7.5l15 -15M1103 575.9l12.8 12.8l15.7 15.7v-10.4M1082.5 621.1v14.2v8.8M1370.6 436.3h7.4h12.7h-13.8M1032.1 376.8v-4.2l-17.5 17.5M1140.3 518.1h-18.1v16.1M1349.4 553.5h-14.1v-8.7l21.4 21.4M994.7 517.3v5.4l15.8 15.8M1137.5 383.8h6.1h9.8M1323.7 618.7v-12.5l4.6 -4.6M1396.8 528.9v-13.5l-15.7 15.7v-8.4M1438.9 598.6v9.6l14.2 14.2M1430.7 526.4l-16.1 -16.1v-4.4l-7.7 -7.7v-5.6M1013 442.8v-19.8l-15.3 -15.3h16.3v15.3M1365.8 570.5v7.2v-4M1398.3 382v11.8h-10.5v11.3v17.9M1305.7 450.7l14.4 -14.4h6.5l-17.4 17.4l-4.9 -4.9M1057.4 437.7v-9.3l-18.9 -18.9l16.5 16.5h-11.8M1439.3 511.5v-16.7v20.8l17 -17h4.2M1393.6 540h8.4h20.3h-12.6M1482.3 465.7l11.7 11.7h19.5M1093 350.5l7.2 7.2l18.7 18.7M1123.5 598.1h19.7v-15.5M1388.5 628.6v-18.5v-11.2h11.2M1454.6 490.6v-7.4l-12.9 12.9v-9.3M1067.3 561v-7.6h15.5v-13v20.9M1393.2 569.9h-9.8l-11.2 11.2v-18.9l-11.6 -11.6M1266 606.3v16l8.1 -8.1v-10.4M1158.5 590.5l-8.3 8.3l-7.5 -7.5h-13.5M1039.8 522.8v16.7l7 7h21M1430.5 621.5h6.9h11.1h-14.1M1248.2 373l9.2 9.2v-13.9l-16.2 16.2l16.5 -16.5M984.6 382l-18.5 -18.5h-7.8h19.3M1335.7 464.9h19.9v11.3v9.4v5M1195.4 408.5v19.1l-5.5 5.5h21.9l12.6 12.6M1104.9 557.3v-22v-6.1M1308.2 511.3l21 -21h9.9M1253.2 355.8v13.8v13.7M1157.4 602.1h17.9l8.9 -8.9M998.3 378.8l21.2 21.2h-12.3l-15.8 15.8M1425.8 424.9v-6.1l14.7 14.7l10.4 10.4M1317.5 639l9.1 -9.1l-8 8h19.6l-12.8 12.8M1283.8 412.6v17l-6.5 6.5h-15.1h-4.2M1020.1 636.7h18.3v15.4v-14.7h19.2M1460.6 550.3v10.5v-7.4h6h18.9M1069.8 352l6.9 -6.9l-9.8 9.8h10.2v20.3M986.4 379.6l-20.5 -20.5h-8.6l-18 -18M1113 415.6v-21v8.7v6M1436.2 591l-20.9 -20.9v12.4M1506.7 348.7v18.3h-19.6v15.8h-6.7M1181.4 438.2v-16.5v21.9v10M1070.7 641.7h19.8h-14.8M1475.2 447.8l15.9 -15.9l-18.7 18.7h-20.6h20M1314.6 632.8h-13.3h10.7M1050.5 511v-14.9l20.7 -20.7v-6.4M1059.2 442.2l-6.8 6.8l-15 -15h15.9v-18.9M1049.8 555.6v9.2v-10M1499.3 415.5l13.9 -13.9h-21.1h18.4M1335.7 554.1l-12 -12h12.2M1499.7 636.2v-6.9h14.8h19.2M1268.4 626.5l-4.7 -4.7h18.5v19.9v10M1403.1 602v-14.1l-21.6 21.6M1360 405.1v-6.2v8.8h16.2l12.6 12.6M1146.2 459.9v-20.9v9.6h-15.4M1191.2 603.8l21.9 21.9v-5.5v-7l-11.6 -11.6M1249 479.1h-9.5v14.9M1456.9 586.9h11.6v-9M1007.7 517l19.3 -19.3v17h16.7M1325.7 587.4h-13.9v-8.4h18.6M1006.8 508.8h-21v7.5v-4.2l4.9 4.9M1121.6 548.7v-18.5l-4.4 -4.4h19.8M1373.7 395.9v-4.5h-13.5M1143.3 642.6h-8.6v-8.5v19.8M1454.7 660.4h-21.5l-14.5 14.5v-17.6M1337.2 476.8h16h5.5l8.3 8.3M1462.7 392.7v-18.1v-14.7l4.1 4.1h12.5M1465 418.8v-9.7v-4.4l18.5 18.5l-11 -11M1324.7 531.6l-14.1 -14.1v12.9l-14 -14h10.4M1342.9 498.3v-5.3l13.7 -13.7v13M1506.2 527.4v-15.1l11.2 -11.2l9.9 9.9v4.5M1030.7 410.2v-13.2l5.1 -5.1M1432.5 473.8v13.2h13.3M1235.5 607.2h-8.7h-18.3h12.4v-16.3M1221.6 528.3v5v-11.6M1282.9 627.9v20.8h-16.4l-8.4 8.4v-6.1M1334.8 479.9l10.3 -10.3h-8.3l-13.4 -13.4h-19.5M1355.5 514.6h-4.2h17.5v21.4v-9.1M1179.6 415.5v15.9l10.5 -10.5M1278.7 477.2l15.7 -15.7v10.5v-14.2M1214.9 405.4v7.5v9.7M1155.9 382.5h18.6l11.4 -11.4M1384.4 543.8h-6l17.9 -17.9h-21.1l18.7 -18.7M1210.9 518.4l-9 -9l-7.9 7.9h21.9l10.5 -10.5M1080.9 656.1l-16.4 -16.4v13.6v15.8v-11.9M1128.8 484.2l-13.8 13.8l-11.2 -11.2M1250.5 567.3v-8.2h14h-18.3M1364.4 408.7h-18.8l5.5 -5.5h15.6v11.6M1236.7 387.3l13 -13l17.9 17.9M1146.1 340.2l12 -12h21.5v8.8v-9M1322.8 584.1h-19.6h-12.3M1455.3 452.5h-16.6h-17.5h9.8v-20.9M1399.1 615.1h-14.3h-20.3l-15.2 15.2M1402.4 573.3v13.5v9.9M1431 592.8l12.8 -12.8v-16.7M1441.4 342.1h18.6v-20.3l12.9 -12.9M1330.7 570.9l-5.4 -5.4l15.4 15.4h4.5h-14.6M1092.8 395.6v17.5h11.1v13.7v8.4M1162.4 358.3v4.5v8.1l16.7 16.7v8.5M1062 626.6h10.8h-10v21.7M1387.9 460.4h19.3l-11.2 -11.2h18.2l-15.3 -15.3M1187.8 399.9l14.1 14.1h21.4M1131.1 363v20.6l-21.1 -21.1h12.5l-20.1 20.1M1358.2 468l13 13l-4.8 -4.8l7.9 7.9v8.6M1426.4 477v17.4v4.9h-9.1v-19.3M1086.5 396.2v20.4v-8.8v-17.6M1315.8 419h8h12.8h-6.7M1358.3 634.1v-4.9v-9.2h12.4h8M1195.5 502.7v16.5h-18.7h-15.7h-15.6M1436.1 392.5l-5.3 5.3h11.8l10.8 10.8h-5.1M1076.7 458l-6.6 6.6l-15.9 15.9M1165.8 550.1h14.7h-21.6M1070 565.1h16.5h-21.5v20.4v-18.5M1462.6 518.5h21.9v-6M1437.1 411.6v-15.6v17.8h12M1501.2 470.4l5.7 -5.7l-5.9 5.9h-16.1M1415.4 559.4h9.8v-13.8h12.3M1345.4 416.6v10.2h4.5M1452.5 518.3h-16l-5.1 -5.1M1339.7 389.4h-5h-20.8M1065.5 345.2h-10.1v-12.4h-5.4h15M1046.1 473.6l20.8 20.8v19.2M1013.7 502.6v-21.1h-17l21 -21l8.5 8.5M1441 576.9l-6.5 -6.5h-21.6M1042.5 479.4v-12.9v-21.5M1176 360.5v10.8l-9 9h7.4M1134.9 543.4h17.3l11.6 -11.6h14.1h-12.7M1394.6 445.6h-18.7v21.9l-15.7 -15.7l-17.9 -17.9M1361.6 602.7v16.3l17.9 -17.9l-21.7 21.7M1248.4 643.8v15.1v-11.8l19.7 19.7h-10.3M1388.6 553.5h14.4v7.4l-20.9 20.9l8 8M1099.5 610.8l-6.3 6.3v20.4l-19 19M1498.3 590.8l-17.3 17.3v-22l7.7 7.7M1034.3 393.5h-11.4l9.9 9.9M1053.4 450.3h-10.7h-20.2M1305.6 406.8v5.1h-11v-4.5M1395.2 430.8h-17.7l-20.3 20.3l-6.3 -6.3h7.2M1235.1 347.2l15.6 15.6h12.4l7.4 7.4h-18" fill="none" stroke="#00552c" stroke-width=".8" opacity=".6"/>
<circle cx="520.5" cy="355.7" r="2.7" fill="#fdd838"/><circle cx="520.5" cy="355.7" r="3.4" fill="none" stroke="#fdd838" stroke-width="1.3" stroke-dasharray="1 .95"/>
<circle cx="520.5" cy="355.7" r="1.6" fill="#fff"/>
<circle cx="485.5" cy="363.4" r="7.5" fill="#007a8c"/>
<circle cx="485.5" cy="363.4" r="4.5" fill="#fff"/>
<circle cx="485.5" cy="363.4" r="4.9" fill="none" stroke="#fff" stroke-width="1.1" stroke-dasharray="1 1"/>
<circle cx="647.5" cy="352.7" r="3.8" fill="#fff"/>
<circle cx="647.5" cy="352.7" r="4.2" fill="none" stroke="#fff" stroke-width="1.1" stroke-dasharray="1 1"/>
<circle cx="620.2" cy="480.2" r="4.2" fill="#fff"/>
<circle cx="620.2" cy="480.2" r="4.6000000000000005" fill="none" stroke="#fff" stroke-width="1.1" stroke-dasharray="1 1"/>
<circle cx="456.3" cy="490.5" r="7.3" fill="#007a8c"/>
<circle cx="456.3" cy="490.5" r="4.3" fill="#fff"/>
<circle cx="456.3" cy="490.5" r="4.7" fill="none" stroke="#fff" stroke-width="1.1" stroke-dasharray="1 1"/>
<circle cx="746.4" cy="415.2" r="3.8" fill="#fff"/>
<circle cx="746.4" cy="415.2" r="4.2" fill="none" stroke="#fff" stroke-width="1.1" stroke-dasharray="1 1"/>
<circle cx="951" cy="384.2" r="7.3" fill="#007a8c"/>
<circle cx="951" cy="384.2" r="4.3" fill="#fff"/>
<circle cx="951" cy="384.2" r="4.7" fill="none" stroke="#fff" stroke-width="1.1" stroke-dasharray="1 1"/>
<circle cx="493.6" cy="372.3" r="1.9" fill="#808080"/><circle cx="493.6" cy="372.3" r="2.5999999999999996" fill="none" stroke="#808080" stroke-width="1.3" stroke-dasharray="1 .95"/>
<circle cx="497" cy="380" r="2.1" fill="#fdd838"/><circle cx="497" cy="380" r="2.8" fill="none" stroke="#fdd838" stroke-width="1.3" stroke-dasharray="1 .95"/>
<path d="M679 492h1.2v36.3h-1.2zM682.3 492h1.2v36.3h-1.2zM685.6 492h1.2v36.3h-1.2zM688.9 492h1.2v36.3h-1.2zM692.2 492h1.2v36.3h-1.2zM695.5 492h1.2v36.3h-1.2zM698.8 492h1.2v36.3h-1.2zM702.1 492h1.2v36.3h-1.2zM705.4 492h1.2v36.3h-1.2zM708.7 492h1.2v36.3h-1.2zM712 492h1.2v36.3h-1.2zM678 493h36.3v1.2h-36.3zM678 496.3h36.3v1.2h-36.3zM678 499.6h36.3v1.2h-36.3zM678 502.9h36.3v1.2h-36.3zM678 506.2h36.3v1.2h-36.3zM678 509.5h36.3v1.2h-36.3zM678 512.8h36.3v1.2h-36.3zM678 516.1h36.3v1.2h-36.3zM678 519.4h36.3v1.2h-36.3zM678 522.7h36.3v1.2h-36.3zM678 526h36.3v1.2h-36.3z" fill="#fdd838" shape-rendering="crispEdges"/><path d="M694.5 499.6h3.3v1.2h-3.3zM695.5 498.6h1.2v3.3h-1.2zM697.8 526h3.3v1.2h-3.3zM698.8 525h1.2v3.3h-1.2zM678 496.3h3.3v1.2h-3.3zM679 495.3h1.2v3.3h-1.2zM704.4 496.3h3.3v1.2h-3.3zM705.4 495.3h1.2v3.3h-1.2zM694.5 522.7h3.3v1.2h-3.3zM695.5 521.7h1.2v3.3h-1.2zM678 519.4h3.3v1.2h-3.3zM679 518.4h1.2v3.3h-1.2zM687.9 493h3.3v1.2h-3.3zM688.9 492h1.2v3.3h-1.2zM681.3 512.8h3.3v1.2h-3.3zM682.3 511.8h1.2v3.3h-1.2zM697.8 496.3h3.3v1.2h-3.3zM698.8 495.3h1.2v3.3h-1.2zM687.9 496.3h3.3v1.2h-3.3zM688.9 495.3h1.2v3.3h-1.2zM704.4 512.8h3.3v1.2h-3.3zM705.4 511.8h1.2v3.3h-1.2zM678 522.7h3.3v1.2h-3.3zM679 521.7h1.2v3.3h-1.2zM681.3 502.9h3.3v1.2h-3.3zM682.3 501.9h1.2v3.3h-1.2zM711 526h3.3v1.2h-3.3zM712 525h1.2v3.3h-1.2zM707.7 493h3.3v1.2h-3.3zM708.7 492h1.2v3.3h-1.2z" fill="#808080" shape-rendering="crispEdges"/><path d="M676.5 496V530H716V496" fill="none" stroke="#f2f2f2" stroke-width="1" shape-rendering="crispEdges"/>
<path d="M679.4 568.8l1.6 1.6-1.6 1.6-1.6-1.6zM682.2 568.8l1.6 1.6-1.6 1.6-1.6-1.6zM685 568.8l1.6 1.6-1.6 1.6-1.6-1.6zM687.8 568.8l1.6 1.6-1.6 1.6-1.6-1.6zM690.6 568.8l1.6 1.6-1.6 1.6-1.6-1.6zM693.4 568.8l1.6 1.6-1.6 1.6-1.6-1.6zM679.4 571.6l1.6 1.6-1.6 1.6-1.6-1.6zM682.2 571.6l1.6 1.6-1.6 1.6-1.6-1.6zM685 571.6l1.6 1.6-1.6 1.6-1.6-1.6zM687.8 571.6l1.6 1.6-1.6 1.6-1.6-1.6zM690.6 571.6l1.6 1.6-1.6 1.6-1.6-1.6zM696.2 571.6l1.6 1.6-1.6 1.6-1.6-1.6zM679.4 574.4l1.6 1.6-1.6 1.6-1.6-1.6zM682.2 574.4l1.6 1.6-1.6 1.6-1.6-1.6zM685 574.4l1.6 1.6-1.6 1.6-1.6-1.6zM687.8 574.4l1.6 1.6-1.6 1.6-1.6-1.6zM690.6 574.4l1.6 1.6-1.6 1.6-1.6-1.6zM693.4 574.4l1.6 1.6-1.6 1.6-1.6-1.6zM679.4 577.2l1.6 1.6-1.6 1.6-1.6-1.6zM682.2 577.2l1.6 1.6-1.6 1.6-1.6-1.6zM685 577.2l1.6 1.6-1.6 1.6-1.6-1.6zM687.8 577.2l1.6 1.6-1.6 1.6-1.6-1.6zM690.6 577.2l1.6 1.6-1.6 1.6-1.6-1.6zM679.4 580l1.6 1.6-1.6 1.6-1.6-1.6zM682.2 580l1.6 1.6-1.6 1.6-1.6-1.6zM685 580l1.6 1.6-1.6 1.6-1.6-1.6zM687.8 580l1.6 1.6-1.6 1.6-1.6-1.6zM696.2 580l1.6 1.6-1.6 1.6-1.6-1.6zM699 580l1.6 1.6-1.6 1.6-1.6-1.6zM679.4 582.8l1.6 1.6-1.6 1.6-1.6-1.6zM682.2 582.8l1.6 1.6-1.6 1.6-1.6-1.6zM685 582.8l1.6 1.6-1.6 1.6-1.6-1.6zM696.2 582.8l1.6 1.6-1.6 1.6-1.6-1.6zM679.4 585.6l1.6 1.6-1.6 1.6-1.6-1.6zM682.2 585.6l1.6 1.6-1.6 1.6-1.6-1.6zM693.4 585.6l1.6 1.6-1.6 1.6-1.6-1.6zM679.4 588.4l1.6 1.6-1.6 1.6-1.6-1.6zM690.6 588.4l1.6 1.6-1.6 1.6-1.6-1.6zM699 588.4l1.6 1.6-1.6 1.6-1.6-1.6zM687.8 591.2l1.6 1.6-1.6 1.6-1.6-1.6zM696.2 591.2l1.6 1.6-1.6 1.6-1.6-1.6zM699 591.2l1.6 1.6-1.6 1.6-1.6-1.6zM701.8 591.2l1.6 1.6-1.6 1.6-1.6-1.6zM704.6 591.2l1.6 1.6-1.6 1.6-1.6-1.6zM679.4 594l1.6 1.6-1.6 1.6-1.6-1.6zM685 594l1.6 1.6-1.6 1.6-1.6-1.6zM687.8 594l1.6 1.6-1.6 1.6-1.6-1.6zM699 594l1.6 1.6-1.6 1.6-1.6-1.6zM701.8 594l1.6 1.6-1.6 1.6-1.6-1.6zM679.4 596.8l1.6 1.6-1.6 1.6-1.6-1.6zM682.2 596.8l1.6 1.6-1.6 1.6-1.6-1.6zM685 596.8l1.6 1.6-1.6 1.6-1.6-1.6zM690.6 596.8l1.6 1.6-1.6 1.6-1.6-1.6zM693.4 596.8l1.6 1.6-1.6 1.6-1.6-1.6zM696.2 596.8l1.6 1.6-1.6 1.6-1.6-1.6zM699 596.8l1.6 1.6-1.6 1.6-1.6-1.6zM701.8 596.8l1.6 1.6-1.6 1.6-1.6-1.6zM704.6 596.8l1.6 1.6-1.6 1.6-1.6-1.6zM679.4 599.6l1.6 1.6-1.6 1.6-1.6-1.6zM682.2 599.6l1.6 1.6-1.6 1.6-1.6-1.6zM687.8 599.6l1.6 1.6-1.6 1.6-1.6-1.6zM690.6 599.6l1.6 1.6-1.6 1.6-1.6-1.6zM693.4 599.6l1.6 1.6-1.6 1.6-1.6-1.6zM696.2 599.6l1.6 1.6-1.6 1.6-1.6-1.6zM699 599.6l1.6 1.6-1.6 1.6-1.6-1.6zM701.8 599.6l1.6 1.6-1.6 1.6-1.6-1.6zM704.6 599.6l1.6 1.6-1.6 1.6-1.6-1.6zM679.4 602.4l1.6 1.6-1.6 1.6-1.6-1.6zM682.2 602.4l1.6 1.6-1.6 1.6-1.6-1.6zM685 602.4l1.6 1.6-1.6 1.6-1.6-1.6zM687.8 602.4l1.6 1.6-1.6 1.6-1.6-1.6zM690.6 602.4l1.6 1.6-1.6 1.6-1.6-1.6zM693.4 602.4l1.6 1.6-1.6 1.6-1.6-1.6zM696.2 602.4l1.6 1.6-1.6 1.6-1.6-1.6zM699 602.4l1.6 1.6-1.6 1.6-1.6-1.6zM701.8 602.4l1.6 1.6-1.6 1.6-1.6-1.6zM704.6 602.4l1.6 1.6-1.6 1.6-1.6-1.6z" fill="#fdd838"/><path d="M693.4 571.6l1.6 1.6-1.6 1.6-1.6-1.6zM693.4 577.2l1.6 1.6-1.6 1.6-1.6-1.6zM696.2 577.2l1.6 1.6-1.6 1.6-1.6-1.6zM699 577.2l1.6 1.6-1.6 1.6-1.6-1.6zM701.8 577.2l1.6 1.6-1.6 1.6-1.6-1.6zM704.6 577.2l1.6 1.6-1.6 1.6-1.6-1.6zM690.6 580l1.6 1.6-1.6 1.6-1.6-1.6zM693.4 580l1.6 1.6-1.6 1.6-1.6-1.6zM701.8 580l1.6 1.6-1.6 1.6-1.6-1.6zM687.8 582.8l1.6 1.6-1.6 1.6-1.6-1.6zM690.6 582.8l1.6 1.6-1.6 1.6-1.6-1.6zM693.4 582.8l1.6 1.6-1.6 1.6-1.6-1.6zM699 582.8l1.6 1.6-1.6 1.6-1.6-1.6zM701.8 582.8l1.6 1.6-1.6 1.6-1.6-1.6zM685 585.6l1.6 1.6-1.6 1.6-1.6-1.6zM687.8 585.6l1.6 1.6-1.6 1.6-1.6-1.6zM690.6 585.6l1.6 1.6-1.6 1.6-1.6-1.6zM696.2 585.6l1.6 1.6-1.6 1.6-1.6-1.6zM699 585.6l1.6 1.6-1.6 1.6-1.6-1.6zM701.8 585.6l1.6 1.6-1.6 1.6-1.6-1.6zM704.6 585.6l1.6 1.6-1.6 1.6-1.6-1.6zM682.2 588.4l1.6 1.6-1.6 1.6-1.6-1.6zM685 588.4l1.6 1.6-1.6 1.6-1.6-1.6zM687.8 588.4l1.6 1.6-1.6 1.6-1.6-1.6zM693.4 588.4l1.6 1.6-1.6 1.6-1.6-1.6zM696.2 588.4l1.6 1.6-1.6 1.6-1.6-1.6zM701.8 588.4l1.6 1.6-1.6 1.6-1.6-1.6zM704.6 588.4l1.6 1.6-1.6 1.6-1.6-1.6zM679.4 591.2l1.6 1.6-1.6 1.6-1.6-1.6zM682.2 591.2l1.6 1.6-1.6 1.6-1.6-1.6zM685 591.2l1.6 1.6-1.6 1.6-1.6-1.6zM690.6 591.2l1.6 1.6-1.6 1.6-1.6-1.6zM693.4 591.2l1.6 1.6-1.6 1.6-1.6-1.6zM682.2 594l1.6 1.6-1.6 1.6-1.6-1.6zM704.6 594l1.6 1.6-1.6 1.6-1.6-1.6zM687.8 596.8l1.6 1.6-1.6 1.6-1.6-1.6zM685 599.6l1.6 1.6-1.6 1.6-1.6-1.6z" fill="#808080"/><path d="M696.2 568.8l1.6 1.6-1.6 1.6-1.6-1.6zM699 568.8l1.6 1.6-1.6 1.6-1.6-1.6zM701.8 568.8l1.6 1.6-1.6 1.6-1.6-1.6zM699 571.6l1.6 1.6-1.6 1.6-1.6-1.6zM701.8 571.6l1.6 1.6-1.6 1.6-1.6-1.6zM704.6 571.6l1.6 1.6-1.6 1.6-1.6-1.6zM701.8 574.4l1.6 1.6-1.6 1.6-1.6-1.6zM704.6 574.4l1.6 1.6-1.6 1.6-1.6-1.6z" fill="#00707c"/><rect x="676.5" y="567.5" width="30" height="38" fill="none" stroke="#f2f2f2" stroke-width="1" shape-rendering="crispEdges"/>
<path d="M494.2 529.3l1.6 1.6-1.6 1.6-1.6-1.6zM497 529.3l1.6 1.6-1.6 1.6-1.6-1.6zM499.8 529.3l1.6 1.6-1.6 1.6-1.6-1.6zM502.6 529.3l1.6 1.6-1.6 1.6-1.6-1.6zM505.4 529.3l1.6 1.6-1.6 1.6-1.6-1.6zM508.2 529.3l1.6 1.6-1.6 1.6-1.6-1.6zM511 529.3l1.6 1.6-1.6 1.6-1.6-1.6zM513.8 529.3l1.6 1.6-1.6 1.6-1.6-1.6zM516.6 529.3l1.6 1.6-1.6 1.6-1.6-1.6zM494.2 532.1l1.6 1.6-1.6 1.6-1.6-1.6zM497 532.1l1.6 1.6-1.6 1.6-1.6-1.6zM499.8 532.1l1.6 1.6-1.6 1.6-1.6-1.6zM502.6 532.1l1.6 1.6-1.6 1.6-1.6-1.6zM505.4 532.1l1.6 1.6-1.6 1.6-1.6-1.6zM508.2 532.1l1.6 1.6-1.6 1.6-1.6-1.6zM511 532.1l1.6 1.6-1.6 1.6-1.6-1.6zM494.2 534.9l1.6 1.6-1.6 1.6-1.6-1.6zM505.4 534.9l1.6 1.6-1.6 1.6-1.6-1.6zM508.2 534.9l1.6 1.6-1.6 1.6-1.6-1.6zM511 534.9l1.6 1.6-1.6 1.6-1.6-1.6zM513.8 534.9l1.6 1.6-1.6 1.6-1.6-1.6zM516.6 534.9l1.6 1.6-1.6 1.6-1.6-1.6zM494.2 537.7l1.6 1.6-1.6 1.6-1.6-1.6zM505.4 537.7l1.6 1.6-1.6 1.6-1.6-1.6zM508.2 537.7l1.6 1.6-1.6 1.6-1.6-1.6zM511 537.7l1.6 1.6-1.6 1.6-1.6-1.6zM513.8 537.7l1.6 1.6-1.6 1.6-1.6-1.6zM516.6 537.7l1.6 1.6-1.6 1.6-1.6-1.6zM494.2 540.5l1.6 1.6-1.6 1.6-1.6-1.6zM497 540.5l1.6 1.6-1.6 1.6-1.6-1.6zM505.4 540.5l1.6 1.6-1.6 1.6-1.6-1.6zM508.2 540.5l1.6 1.6-1.6 1.6-1.6-1.6zM511 540.5l1.6 1.6-1.6 1.6-1.6-1.6zM494.2 543.3l1.6 1.6-1.6 1.6-1.6-1.6zM497 543.3l1.6 1.6-1.6 1.6-1.6-1.6zM494.2 546.1l1.6 1.6-1.6 1.6-1.6-1.6zM505.4 546.1l1.6 1.6-1.6 1.6-1.6-1.6zM502.6 548.9l1.6 1.6-1.6 1.6-1.6-1.6zM505.4 548.9l1.6 1.6-1.6 1.6-1.6-1.6z" fill="#fdd838"/><path d="M513.8 532.1l1.6 1.6-1.6 1.6-1.6-1.6zM516.6 532.1l1.6 1.6-1.6 1.6-1.6-1.6zM513.8 540.5l1.6 1.6-1.6 1.6-1.6-1.6zM516.6 540.5l1.6 1.6-1.6 1.6-1.6-1.6zM505.4 543.3l1.6 1.6-1.6 1.6-1.6-1.6zM508.2 543.3l1.6 1.6-1.6 1.6-1.6-1.6zM511 543.3l1.6 1.6-1.6 1.6-1.6-1.6zM513.8 543.3l1.6 1.6-1.6 1.6-1.6-1.6zM516.6 543.3l1.6 1.6-1.6 1.6-1.6-1.6zM497 546.1l1.6 1.6-1.6 1.6-1.6-1.6zM508.2 546.1l1.6 1.6-1.6 1.6-1.6-1.6zM511 546.1l1.6 1.6-1.6 1.6-1.6-1.6zM513.8 546.1l1.6 1.6-1.6 1.6-1.6-1.6zM516.6 546.1l1.6 1.6-1.6 1.6-1.6-1.6zM494.2 548.9l1.6 1.6-1.6 1.6-1.6-1.6zM508.2 548.9l1.6 1.6-1.6 1.6-1.6-1.6zM511 548.9l1.6 1.6-1.6 1.6-1.6-1.6zM513.8 548.9l1.6 1.6-1.6 1.6-1.6-1.6zM516.6 548.9l1.6 1.6-1.6 1.6-1.6-1.6z" fill="#808080"/><path d="M497 534.9l1.6 1.6-1.6 1.6-1.6-1.6zM499.8 534.9l1.6 1.6-1.6 1.6-1.6-1.6zM502.6 534.9l1.6 1.6-1.6 1.6-1.6-1.6zM497 537.7l1.6 1.6-1.6 1.6-1.6-1.6zM499.8 537.7l1.6 1.6-1.6 1.6-1.6-1.6zM502.6 537.7l1.6 1.6-1.6 1.6-1.6-1.6z" fill="#00707c"/>
<path d="M773.7 464.2l1.6 1.6-1.6 1.6-1.6-1.6zM776.5 464.2l1.6 1.6-1.6 1.6-1.6-1.6zM790.5 464.2l1.6 1.6-1.6 1.6-1.6-1.6zM793.3 464.2l1.6 1.6-1.6 1.6-1.6-1.6zM801.7 464.2l1.6 1.6-1.6 1.6-1.6-1.6zM804.5 464.2l1.6 1.6-1.6 1.6-1.6-1.6zM807.3 464.2l1.6 1.6-1.6 1.6-1.6-1.6zM773.7 467l1.6 1.6-1.6 1.6-1.6-1.6zM776.5 467l1.6 1.6-1.6 1.6-1.6-1.6zM790.5 467l1.6 1.6-1.6 1.6-1.6-1.6zM793.3 467l1.6 1.6-1.6 1.6-1.6-1.6zM796.1 467l1.6 1.6-1.6 1.6-1.6-1.6zM807.3 467l1.6 1.6-1.6 1.6-1.6-1.6zM773.7 469.8l1.6 1.6-1.6 1.6-1.6-1.6zM776.5 469.8l1.6 1.6-1.6 1.6-1.6-1.6zM779.3 469.8l1.6 1.6-1.6 1.6-1.6-1.6zM782.1 469.8l1.6 1.6-1.6 1.6-1.6-1.6zM784.9 469.8l1.6 1.6-1.6 1.6-1.6-1.6zM787.7 469.8l1.6 1.6-1.6 1.6-1.6-1.6zM790.5 469.8l1.6 1.6-1.6 1.6-1.6-1.6zM793.3 469.8l1.6 1.6-1.6 1.6-1.6-1.6zM796.1 469.8l1.6 1.6-1.6 1.6-1.6-1.6zM798.9 469.8l1.6 1.6-1.6 1.6-1.6-1.6zM801.7 469.8l1.6 1.6-1.6 1.6-1.6-1.6zM804.5 469.8l1.6 1.6-1.6 1.6-1.6-1.6zM807.3 469.8l1.6 1.6-1.6 1.6-1.6-1.6zM773.7 472.6l1.6 1.6-1.6 1.6-1.6-1.6zM776.5 472.6l1.6 1.6-1.6 1.6-1.6-1.6zM782.1 472.6l1.6 1.6-1.6 1.6-1.6-1.6zM784.9 472.6l1.6 1.6-1.6 1.6-1.6-1.6zM787.7 472.6l1.6 1.6-1.6 1.6-1.6-1.6zM790.5 472.6l1.6 1.6-1.6 1.6-1.6-1.6zM798.9 472.6l1.6 1.6-1.6 1.6-1.6-1.6zM801.7 472.6l1.6 1.6-1.6 1.6-1.6-1.6zM804.5 472.6l1.6 1.6-1.6 1.6-1.6-1.6zM807.3 472.6l1.6 1.6-1.6 1.6-1.6-1.6zM773.7 475.4l1.6 1.6-1.6 1.6-1.6-1.6zM776.5 475.4l1.6 1.6-1.6 1.6-1.6-1.6zM779.3 475.4l1.6 1.6-1.6 1.6-1.6-1.6zM793.3 475.4l1.6 1.6-1.6 1.6-1.6-1.6zM796.1 475.4l1.6 1.6-1.6 1.6-1.6-1.6zM798.9 475.4l1.6 1.6-1.6 1.6-1.6-1.6zM801.7 475.4l1.6 1.6-1.6 1.6-1.6-1.6zM804.5 475.4l1.6 1.6-1.6 1.6-1.6-1.6zM807.3 475.4l1.6 1.6-1.6 1.6-1.6-1.6zM773.7 478.2l1.6 1.6-1.6 1.6-1.6-1.6zM776.5 478.2l1.6 1.6-1.6 1.6-1.6-1.6zM779.3 478.2l1.6 1.6-1.6 1.6-1.6-1.6zM782.1 478.2l1.6 1.6-1.6 1.6-1.6-1.6zM796.1 478.2l1.6 1.6-1.6 1.6-1.6-1.6zM798.9 478.2l1.6 1.6-1.6 1.6-1.6-1.6zM801.7 478.2l1.6 1.6-1.6 1.6-1.6-1.6zM804.5 478.2l1.6 1.6-1.6 1.6-1.6-1.6zM807.3 478.2l1.6 1.6-1.6 1.6-1.6-1.6zM773.7 481l1.6 1.6-1.6 1.6-1.6-1.6zM779.3 481l1.6 1.6-1.6 1.6-1.6-1.6zM782.1 481l1.6 1.6-1.6 1.6-1.6-1.6zM793.3 481l1.6 1.6-1.6 1.6-1.6-1.6zM796.1 481l1.6 1.6-1.6 1.6-1.6-1.6zM798.9 481l1.6 1.6-1.6 1.6-1.6-1.6zM801.7 481l1.6 1.6-1.6 1.6-1.6-1.6zM804.5 481l1.6 1.6-1.6 1.6-1.6-1.6zM807.3 481l1.6 1.6-1.6 1.6-1.6-1.6zM773.7 483.8l1.6 1.6-1.6 1.6-1.6-1.6zM779.3 483.8l1.6 1.6-1.6 1.6-1.6-1.6zM796.1 483.8l1.6 1.6-1.6 1.6-1.6-1.6zM798.9 483.8l1.6 1.6-1.6 1.6-1.6-1.6zM801.7 483.8l1.6 1.6-1.6 1.6-1.6-1.6zM804.5 483.8l1.6 1.6-1.6 1.6-1.6-1.6zM773.7 486.6l1.6 1.6-1.6 1.6-1.6-1.6zM782.1 486.6l1.6 1.6-1.6 1.6-1.6-1.6zM796.1 486.6l1.6 1.6-1.6 1.6-1.6-1.6zM798.9 486.6l1.6 1.6-1.6 1.6-1.6-1.6zM773.7 489.4l1.6 1.6-1.6 1.6-1.6-1.6zM779.3 489.4l1.6 1.6-1.6 1.6-1.6-1.6zM793.3 489.4l1.6 1.6-1.6 1.6-1.6-1.6zM796.1 489.4l1.6 1.6-1.6 1.6-1.6-1.6zM798.9 489.4l1.6 1.6-1.6 1.6-1.6-1.6zM801.7 489.4l1.6 1.6-1.6 1.6-1.6-1.6zM773.7 492.2l1.6 1.6-1.6 1.6-1.6-1.6zM779.3 492.2l1.6 1.6-1.6 1.6-1.6-1.6zM782.1 492.2l1.6 1.6-1.6 1.6-1.6-1.6zM793.3 492.2l1.6 1.6-1.6 1.6-1.6-1.6zM796.1 492.2l1.6 1.6-1.6 1.6-1.6-1.6zM798.9 492.2l1.6 1.6-1.6 1.6-1.6-1.6zM801.7 492.2l1.6 1.6-1.6 1.6-1.6-1.6zM804.5 492.2l1.6 1.6-1.6 1.6-1.6-1.6zM773.7 495l1.6 1.6-1.6 1.6-1.6-1.6zM779.3 495l1.6 1.6-1.6 1.6-1.6-1.6zM782.1 495l1.6 1.6-1.6 1.6-1.6-1.6zM784.9 495l1.6 1.6-1.6 1.6-1.6-1.6zM787.7 495l1.6 1.6-1.6 1.6-1.6-1.6zM796.1 495l1.6 1.6-1.6 1.6-1.6-1.6zM798.9 495l1.6 1.6-1.6 1.6-1.6-1.6zM801.7 495l1.6 1.6-1.6 1.6-1.6-1.6zM804.5 495l1.6 1.6-1.6 1.6-1.6-1.6zM807.3 495l1.6 1.6-1.6 1.6-1.6-1.6zM773.7 497.8l1.6 1.6-1.6 1.6-1.6-1.6zM779.3 497.8l1.6 1.6-1.6 1.6-1.6-1.6zM782.1 497.8l1.6 1.6-1.6 1.6-1.6-1.6zM784.9 497.8l1.6 1.6-1.6 1.6-1.6-1.6zM798.9 497.8l1.6 1.6-1.6 1.6-1.6-1.6zM801.7 497.8l1.6 1.6-1.6 1.6-1.6-1.6zM804.5 497.8l1.6 1.6-1.6 1.6-1.6-1.6zM807.3 497.8l1.6 1.6-1.6 1.6-1.6-1.6zM773.7 500.6l1.6 1.6-1.6 1.6-1.6-1.6zM776.5 500.6l1.6 1.6-1.6 1.6-1.6-1.6zM779.3 500.6l1.6 1.6-1.6 1.6-1.6-1.6zM782.1 500.6l1.6 1.6-1.6 1.6-1.6-1.6zM793.3 500.6l1.6 1.6-1.6 1.6-1.6-1.6zM801.7 500.6l1.6 1.6-1.6 1.6-1.6-1.6zM804.5 500.6l1.6 1.6-1.6 1.6-1.6-1.6zM807.3 500.6l1.6 1.6-1.6 1.6-1.6-1.6zM773.7 503.4l1.6 1.6-1.6 1.6-1.6-1.6zM776.5 503.4l1.6 1.6-1.6 1.6-1.6-1.6zM779.3 503.4l1.6 1.6-1.6 1.6-1.6-1.6zM787.7 503.4l1.6 1.6-1.6 1.6-1.6-1.6zM793.3 503.4l1.6 1.6-1.6 1.6-1.6-1.6zM796.1 503.4l1.6 1.6-1.6 1.6-1.6-1.6zM804.5 503.4l1.6 1.6-1.6 1.6-1.6-1.6zM807.3 503.4l1.6 1.6-1.6 1.6-1.6-1.6zM773.7 506.2l1.6 1.6-1.6 1.6-1.6-1.6zM776.5 506.2l1.6 1.6-1.6 1.6-1.6-1.6zM779.3 506.2l1.6 1.6-1.6 1.6-1.6-1.6zM782.1 506.2l1.6 1.6-1.6 1.6-1.6-1.6zM796.1 506.2l1.6 1.6-1.6 1.6-1.6-1.6zM798.9 506.2l1.6 1.6-1.6 1.6-1.6-1.6zM807.3 506.2l1.6 1.6-1.6 1.6-1.6-1.6z" fill="#fdd838"/><path d="M782.1 464.2l1.6 1.6-1.6 1.6-1.6-1.6zM784.9 464.2l1.6 1.6-1.6 1.6-1.6-1.6zM779.3 467l1.6 1.6-1.6 1.6-1.6-1.6zM782.1 467l1.6 1.6-1.6 1.6-1.6-1.6zM784.9 467l1.6 1.6-1.6 1.6-1.6-1.6zM804.5 467l1.6 1.6-1.6 1.6-1.6-1.6zM779.3 472.6l1.6 1.6-1.6 1.6-1.6-1.6zM782.1 475.4l1.6 1.6-1.6 1.6-1.6-1.6zM784.9 475.4l1.6 1.6-1.6 1.6-1.6-1.6zM787.7 475.4l1.6 1.6-1.6 1.6-1.6-1.6zM790.5 475.4l1.6 1.6-1.6 1.6-1.6-1.6zM784.9 478.2l1.6 1.6-1.6 1.6-1.6-1.6zM787.7 478.2l1.6 1.6-1.6 1.6-1.6-1.6zM790.5 478.2l1.6 1.6-1.6 1.6-1.6-1.6zM776.5 481l1.6 1.6-1.6 1.6-1.6-1.6zM776.5 483.8l1.6 1.6-1.6 1.6-1.6-1.6zM782.1 483.8l1.6 1.6-1.6 1.6-1.6-1.6zM784.9 483.8l1.6 1.6-1.6 1.6-1.6-1.6zM776.5 486.6l1.6 1.6-1.6 1.6-1.6-1.6zM779.3 486.6l1.6 1.6-1.6 1.6-1.6-1.6zM784.9 486.6l1.6 1.6-1.6 1.6-1.6-1.6zM787.7 486.6l1.6 1.6-1.6 1.6-1.6-1.6zM801.7 486.6l1.6 1.6-1.6 1.6-1.6-1.6zM776.5 489.4l1.6 1.6-1.6 1.6-1.6-1.6zM782.1 489.4l1.6 1.6-1.6 1.6-1.6-1.6zM784.9 489.4l1.6 1.6-1.6 1.6-1.6-1.6zM787.7 489.4l1.6 1.6-1.6 1.6-1.6-1.6zM790.5 489.4l1.6 1.6-1.6 1.6-1.6-1.6zM804.5 489.4l1.6 1.6-1.6 1.6-1.6-1.6zM807.3 489.4l1.6 1.6-1.6 1.6-1.6-1.6zM784.9 492.2l1.6 1.6-1.6 1.6-1.6-1.6zM787.7 492.2l1.6 1.6-1.6 1.6-1.6-1.6zM790.5 492.2l1.6 1.6-1.6 1.6-1.6-1.6zM807.3 492.2l1.6 1.6-1.6 1.6-1.6-1.6zM790.5 495l1.6 1.6-1.6 1.6-1.6-1.6zM793.3 495l1.6 1.6-1.6 1.6-1.6-1.6zM787.7 497.8l1.6 1.6-1.6 1.6-1.6-1.6zM790.5 497.8l1.6 1.6-1.6 1.6-1.6-1.6zM793.3 497.8l1.6 1.6-1.6 1.6-1.6-1.6zM796.1 497.8l1.6 1.6-1.6 1.6-1.6-1.6zM784.9 500.6l1.6 1.6-1.6 1.6-1.6-1.6zM787.7 500.6l1.6 1.6-1.6 1.6-1.6-1.6zM790.5 500.6l1.6 1.6-1.6 1.6-1.6-1.6zM796.1 500.6l1.6 1.6-1.6 1.6-1.6-1.6zM798.9 500.6l1.6 1.6-1.6 1.6-1.6-1.6zM782.1 503.4l1.6 1.6-1.6 1.6-1.6-1.6zM784.9 503.4l1.6 1.6-1.6 1.6-1.6-1.6zM790.5 503.4l1.6 1.6-1.6 1.6-1.6-1.6zM798.9 503.4l1.6 1.6-1.6 1.6-1.6-1.6zM801.7 503.4l1.6 1.6-1.6 1.6-1.6-1.6zM784.9 506.2l1.6 1.6-1.6 1.6-1.6-1.6zM787.7 506.2l1.6 1.6-1.6 1.6-1.6-1.6zM790.5 506.2l1.6 1.6-1.6 1.6-1.6-1.6zM801.7 506.2l1.6 1.6-1.6 1.6-1.6-1.6zM804.5 506.2l1.6 1.6-1.6 1.6-1.6-1.6z" fill="#808080"/><path d="M787.7 464.2l1.6 1.6-1.6 1.6-1.6-1.6zM787.7 467l1.6 1.6-1.6 1.6-1.6-1.6zM793.3 478.2l1.6 1.6-1.6 1.6-1.6-1.6zM784.9 481l1.6 1.6-1.6 1.6-1.6-1.6zM787.7 481l1.6 1.6-1.6 1.6-1.6-1.6zM790.5 481l1.6 1.6-1.6 1.6-1.6-1.6zM787.7 483.8l1.6 1.6-1.6 1.6-1.6-1.6zM790.5 483.8l1.6 1.6-1.6 1.6-1.6-1.6zM793.3 483.8l1.6 1.6-1.6 1.6-1.6-1.6zM807.3 483.8l1.6 1.6-1.6 1.6-1.6-1.6zM790.5 486.6l1.6 1.6-1.6 1.6-1.6-1.6zM793.3 486.6l1.6 1.6-1.6 1.6-1.6-1.6z" fill="#00707c"/><rect x="770.5" y="462.5" width="38" height="47" fill="none" stroke="#f2f2f2" stroke-width="1" shape-rendering="crispEdges"/>
<circle cx="960" cy="466" r="1.5" fill="#00707c"/><circle cx="960" cy="466" r="2.1999999999999997" fill="none" stroke="#00707c" stroke-width="1.3" stroke-dasharray="1 .95"/>
<g transform="rotate(-35 939.5 446)"><rect x="932" y="441" width="15" height="10" fill="none" stroke="#f2f2f2" stroke-width=".8"/><rect x="934" y="442.5" width="11" height="2.6" fill="#808080"/><rect x="934" y="447" width="11" height="2.6" fill="#808080"/></g>
<g transform="rotate(-38 924.5 603.5)"><rect x="914" y="594" width="21" height="19" fill="none" stroke="#f2f2f2" stroke-width=".8"/><rect x="916" y="596" width="8" height="4" fill="#808080"/><rect x="926" y="596" width="6" height="4" fill="#fdd838"/><rect x="916" y="606.5" width="8" height="4" fill="#808080"/><rect x="925" y="606.5" width="8" height="4" fill="#808080"/></g>
<circle cx="469.5" cy="640.3" r="7.2" fill="#007a8c"/>
<circle cx="469.5" cy="640.3" r="4.2" fill="#fff"/>
<circle cx="469.5" cy="640.3" r="4.6000000000000005" fill="none" stroke="#fff" stroke-width="1.1" stroke-dasharray="1 1"/>
<circle cx="733.5" cy="645.3" r="7.2" fill="#007a8c"/>
<circle cx="733.5" cy="645.3" r="4.2" fill="#fff"/>
<circle cx="733.5" cy="645.3" r="4.6000000000000005" fill="none" stroke="#fff" stroke-width="1.1" stroke-dasharray="1 1"/>
<circle cx="960" cy="615.5" r="7.3" fill="#007a8c"/>
<circle cx="960" cy="615.5" r="4.3" fill="#fff"/>
<circle cx="960" cy="615.5" r="4.7" fill="none" stroke="#fff" stroke-width="1.1" stroke-dasharray="1 1"/>
<circle cx="958.5" cy="637.5" r="7.3" fill="#007a8c"/>
<circle cx="958.5" cy="637.5" r="4.3" fill="#fff"/>
<circle cx="958.5" cy="637.5" r="4.7" fill="none" stroke="#fff" stroke-width="1.1" stroke-dasharray="1 1"/>
<circle cx="469" cy="623.5" r="2.4" fill="#fdd838"/><circle cx="469" cy="623.5" r="3.0999999999999996" fill="none" stroke="#fdd838" stroke-width="1.3" stroke-dasharray="1 .95"/>
<circle cx="485.5" cy="631.5" r="2.4" fill="#fdd838"/><circle cx="485.5" cy="631.5" r="3.0999999999999996" fill="none" stroke="#fdd838" stroke-width="1.3" stroke-dasharray="1 .95"/>
<circle cx="498.5" cy="624" r="2.4" fill="#fdd838"/><circle cx="498.5" cy="624" r="3.0999999999999996" fill="none" stroke="#fdd838" stroke-width="1.3" stroke-dasharray="1 .95"/>
<circle cx="485" cy="646" r="2.4" fill="#fdd838"/><circle cx="485" cy="646" r="3.0999999999999996" fill="none" stroke="#fdd838" stroke-width="1.3" stroke-dasharray="1 .95"/>
<circle cx="468.5" cy="660" r="2.4" fill="#fdd838"/><circle cx="468.5" cy="660" r="3.0999999999999996" fill="none" stroke="#fdd838" stroke-width="1.3" stroke-dasharray="1 .95"/>
<circle cx="484.5" cy="659.5" r="2.4" fill="#fdd838"/><circle cx="484.5" cy="659.5" r="3.0999999999999996" fill="none" stroke="#fdd838" stroke-width="1.3" stroke-dasharray="1 .95"/>
<circle cx="721.5" cy="631.5" r="2.4" fill="#fdd838"/><circle cx="721.5" cy="631.5" r="3.0999999999999996" fill="none" stroke="#fdd838" stroke-width="1.3" stroke-dasharray="1 .95"/>
<circle cx="741.5" cy="631.5" r="2.4" fill="#fdd838"/><circle cx="741.5" cy="631.5" r="3.0999999999999996" fill="none" stroke="#fdd838" stroke-width="1.3" stroke-dasharray="1 .95"/>
<circle cx="715.5" cy="647.5" r="2.4" fill="#fdd838"/><circle cx="715.5" cy="647.5" r="3.0999999999999996" fill="none" stroke="#fdd838" stroke-width="1.3" stroke-dasharray="1 .95"/>
<circle cx="919" cy="652.5" r="2.4" fill="#fdd838"/><circle cx="919" cy="652.5" r="3.0999999999999996" fill="none" stroke="#fdd838" stroke-width="1.3" stroke-dasharray="1 .95"/>
<circle cx="851.5" cy="632.5" r="2.1" fill="#808080"/><circle cx="851.5" cy="632.5" r="2.8" fill="none" stroke="#808080" stroke-width="1.3" stroke-dasharray="1 .95"/>
<circle cx="959.5" cy="597.5" r="1.9" fill="#808080"/><circle cx="959.5" cy="597.5" r="2.5999999999999996" fill="none" stroke="#808080" stroke-width="1.3" stroke-dasharray="1 .95"/>
<circle cx="957" cy="545.5" r="1.5" fill="#00707c"/><circle cx="957" cy="545.5" r="2.1999999999999997" fill="none" stroke="#00707c" stroke-width="1.3" stroke-dasharray="1 .95"/>
<circle cx="1054.5" cy="392.5" r="1.7000000000000002" fill="#00707c"/><circle cx="1054.5" cy="392.5" r="2.4" fill="none" stroke="#00707c" stroke-width="1.3" stroke-dasharray="1 .95"/>
<rect x="989" y="407" width="6" height="6" transform="rotate(45 992 410)" fill="#00707c"/>
<path d="M1065 474h50M1065 494h50M1065 500.5h50M1065 507h50M1065 513.5h50M1065 520h50M1065 526.5h50M1065 533h50M1065 540h50M1067 546h45M1051 557h110" stroke="#0f7a44" stroke-width=".8" fill="none"/>
<path d="M1310.9 382.3l1.6 1.6-1.6 1.6-1.6-1.6zM1313.7 382.3l1.6 1.6-1.6 1.6-1.6-1.6zM1316.5 382.3l1.6 1.6-1.6 1.6-1.6-1.6zM1319.3 382.3l1.6 1.6-1.6 1.6-1.6-1.6zM1327.7 382.3l1.6 1.6-1.6 1.6-1.6-1.6zM1310.9 385.1l1.6 1.6-1.6 1.6-1.6-1.6zM1313.7 385.1l1.6 1.6-1.6 1.6-1.6-1.6zM1316.5 385.1l1.6 1.6-1.6 1.6-1.6-1.6zM1324.9 385.1l1.6 1.6-1.6 1.6-1.6-1.6zM1330.5 385.1l1.6 1.6-1.6 1.6-1.6-1.6zM1310.9 387.9l1.6 1.6-1.6 1.6-1.6-1.6zM1313.7 387.9l1.6 1.6-1.6 1.6-1.6-1.6zM1322.1 387.9l1.6 1.6-1.6 1.6-1.6-1.6zM1327.7 387.9l1.6 1.6-1.6 1.6-1.6-1.6zM1310.9 390.7l1.6 1.6-1.6 1.6-1.6-1.6zM1324.9 390.7l1.6 1.6-1.6 1.6-1.6-1.6zM1327.7 390.7l1.6 1.6-1.6 1.6-1.6-1.6zM1330.5 390.7l1.6 1.6-1.6 1.6-1.6-1.6zM1310.9 393.5l1.6 1.6-1.6 1.6-1.6-1.6zM1313.7 393.5l1.6 1.6-1.6 1.6-1.6-1.6zM1316.5 393.5l1.6 1.6-1.6 1.6-1.6-1.6zM1322.1 393.5l1.6 1.6-1.6 1.6-1.6-1.6zM1327.7 393.5l1.6 1.6-1.6 1.6-1.6-1.6zM1330.5 393.5l1.6 1.6-1.6 1.6-1.6-1.6zM1310.9 396.3l1.6 1.6-1.6 1.6-1.6-1.6zM1313.7 396.3l1.6 1.6-1.6 1.6-1.6-1.6zM1322.1 396.3l1.6 1.6-1.6 1.6-1.6-1.6zM1327.7 396.3l1.6 1.6-1.6 1.6-1.6-1.6zM1310.9 399.1l1.6 1.6-1.6 1.6-1.6-1.6zM1319.3 399.1l1.6 1.6-1.6 1.6-1.6-1.6zM1322.1 399.1l1.6 1.6-1.6 1.6-1.6-1.6zM1327.7 399.1l1.6 1.6-1.6 1.6-1.6-1.6zM1330.5 399.1l1.6 1.6-1.6 1.6-1.6-1.6zM1310.9 401.9l1.6 1.6-1.6 1.6-1.6-1.6zM1316.5 401.9l1.6 1.6-1.6 1.6-1.6-1.6zM1322.1 401.9l1.6 1.6-1.6 1.6-1.6-1.6zM1324.9 401.9l1.6 1.6-1.6 1.6-1.6-1.6zM1327.7 401.9l1.6 1.6-1.6 1.6-1.6-1.6zM1330.5 401.9l1.6 1.6-1.6 1.6-1.6-1.6z" fill="#fdd838"/><path d="M1322.1 382.3l1.6 1.6-1.6 1.6-1.6-1.6zM1324.9 382.3l1.6 1.6-1.6 1.6-1.6-1.6zM1330.5 382.3l1.6 1.6-1.6 1.6-1.6-1.6zM1319.3 385.1l1.6 1.6-1.6 1.6-1.6-1.6zM1322.1 385.1l1.6 1.6-1.6 1.6-1.6-1.6zM1327.7 385.1l1.6 1.6-1.6 1.6-1.6-1.6zM1319.3 387.9l1.6 1.6-1.6 1.6-1.6-1.6zM1324.9 387.9l1.6 1.6-1.6 1.6-1.6-1.6zM1313.7 390.7l1.6 1.6-1.6 1.6-1.6-1.6zM1316.5 390.7l1.6 1.6-1.6 1.6-1.6-1.6zM1319.3 393.5l1.6 1.6-1.6 1.6-1.6-1.6zM1316.5 396.3l1.6 1.6-1.6 1.6-1.6-1.6zM1330.5 396.3l1.6 1.6-1.6 1.6-1.6-1.6zM1313.7 399.1l1.6 1.6-1.6 1.6-1.6-1.6zM1313.7 401.9l1.6 1.6-1.6 1.6-1.6-1.6zM1319.3 401.9l1.6 1.6-1.6 1.6-1.6-1.6z" fill="#808080"/><path d="M1322.1 390.7l1.6 1.6-1.6 1.6-1.6-1.6zM1324.9 393.5l1.6 1.6-1.6 1.6-1.6-1.6zM1324.9 396.3l1.6 1.6-1.6 1.6-1.6-1.6zM1324.9 399.1l1.6 1.6-1.6 1.6-1.6-1.6z" fill="#00707c"/><rect x="1308.5" y="380.5" width="24" height="24" fill="none" stroke="#f2f2f2" stroke-width="1" shape-rendering="crispEdges"/>
<circle cx="1506.5" cy="456.5" r="1.7000000000000002" fill="#00707c"/><circle cx="1506.5" cy="456.5" r="2.4" fill="none" stroke="#00707c" stroke-width="1.3" stroke-dasharray="1 .95"/>
<path d="M1279.9 515.8l1.6 1.6-1.6 1.6-1.6-1.6zM1282.7 515.8l1.6 1.6-1.6 1.6-1.6-1.6zM1285.5 515.8l1.6 1.6-1.6 1.6-1.6-1.6zM1288.3 515.8l1.6 1.6-1.6 1.6-1.6-1.6zM1291.1 515.8l1.6 1.6-1.6 1.6-1.6-1.6zM1302.3 515.8l1.6 1.6-1.6 1.6-1.6-1.6zM1305.1 515.8l1.6 1.6-1.6 1.6-1.6-1.6zM1313.5 515.8l1.6 1.6-1.6 1.6-1.6-1.6zM1316.3 515.8l1.6 1.6-1.6 1.6-1.6-1.6zM1327.5 515.8l1.6 1.6-1.6 1.6-1.6-1.6zM1330.3 515.8l1.6 1.6-1.6 1.6-1.6-1.6zM1333.1 515.8l1.6 1.6-1.6 1.6-1.6-1.6zM1335.9 515.8l1.6 1.6-1.6 1.6-1.6-1.6zM1338.7 515.8l1.6 1.6-1.6 1.6-1.6-1.6zM1349.9 515.8l1.6 1.6-1.6 1.6-1.6-1.6zM1352.7 515.8l1.6 1.6-1.6 1.6-1.6-1.6zM1355.5 515.8l1.6 1.6-1.6 1.6-1.6-1.6zM1358.3 515.8l1.6 1.6-1.6 1.6-1.6-1.6zM1361.1 515.8l1.6 1.6-1.6 1.6-1.6-1.6zM1363.9 515.8l1.6 1.6-1.6 1.6-1.6-1.6zM1279.9 518.6l1.6 1.6-1.6 1.6-1.6-1.6zM1282.7 518.6l1.6 1.6-1.6 1.6-1.6-1.6zM1285.5 518.6l1.6 1.6-1.6 1.6-1.6-1.6zM1288.3 518.6l1.6 1.6-1.6 1.6-1.6-1.6zM1291.1 518.6l1.6 1.6-1.6 1.6-1.6-1.6zM1299.5 518.6l1.6 1.6-1.6 1.6-1.6-1.6zM1302.3 518.6l1.6 1.6-1.6 1.6-1.6-1.6zM1310.7 518.6l1.6 1.6-1.6 1.6-1.6-1.6zM1313.5 518.6l1.6 1.6-1.6 1.6-1.6-1.6zM1316.3 518.6l1.6 1.6-1.6 1.6-1.6-1.6zM1319.1 518.6l1.6 1.6-1.6 1.6-1.6-1.6zM1327.5 518.6l1.6 1.6-1.6 1.6-1.6-1.6zM1330.3 518.6l1.6 1.6-1.6 1.6-1.6-1.6zM1333.1 518.6l1.6 1.6-1.6 1.6-1.6-1.6zM1335.9 518.6l1.6 1.6-1.6 1.6-1.6-1.6zM1338.7 518.6l1.6 1.6-1.6 1.6-1.6-1.6zM1349.9 518.6l1.6 1.6-1.6 1.6-1.6-1.6zM1352.7 518.6l1.6 1.6-1.6 1.6-1.6-1.6zM1355.5 518.6l1.6 1.6-1.6 1.6-1.6-1.6zM1358.3 518.6l1.6 1.6-1.6 1.6-1.6-1.6zM1361.1 518.6l1.6 1.6-1.6 1.6-1.6-1.6zM1279.9 521.4l1.6 1.6-1.6 1.6-1.6-1.6zM1282.7 521.4l1.6 1.6-1.6 1.6-1.6-1.6zM1285.5 521.4l1.6 1.6-1.6 1.6-1.6-1.6zM1288.3 521.4l1.6 1.6-1.6 1.6-1.6-1.6zM1296.7 521.4l1.6 1.6-1.6 1.6-1.6-1.6zM1299.5 521.4l1.6 1.6-1.6 1.6-1.6-1.6zM1310.7 521.4l1.6 1.6-1.6 1.6-1.6-1.6zM1313.5 521.4l1.6 1.6-1.6 1.6-1.6-1.6zM1316.3 521.4l1.6 1.6-1.6 1.6-1.6-1.6zM1319.1 521.4l1.6 1.6-1.6 1.6-1.6-1.6zM1321.9 521.4l1.6 1.6-1.6 1.6-1.6-1.6zM1330.3 521.4l1.6 1.6-1.6 1.6-1.6-1.6zM1333.1 521.4l1.6 1.6-1.6 1.6-1.6-1.6zM1335.9 521.4l1.6 1.6-1.6 1.6-1.6-1.6zM1338.7 521.4l1.6 1.6-1.6 1.6-1.6-1.6zM1341.5 521.4l1.6 1.6-1.6 1.6-1.6-1.6zM1344.3 521.4l1.6 1.6-1.6 1.6-1.6-1.6zM1347.1 521.4l1.6 1.6-1.6 1.6-1.6-1.6zM1349.9 521.4l1.6 1.6-1.6 1.6-1.6-1.6zM1352.7 521.4l1.6 1.6-1.6 1.6-1.6-1.6zM1355.5 521.4l1.6 1.6-1.6 1.6-1.6-1.6zM1358.3 521.4l1.6 1.6-1.6 1.6-1.6-1.6zM1361.1 521.4l1.6 1.6-1.6 1.6-1.6-1.6zM1363.9 521.4l1.6 1.6-1.6 1.6-1.6-1.6zM1279.9 524.2l1.6 1.6-1.6 1.6-1.6-1.6zM1282.7 524.2l1.6 1.6-1.6 1.6-1.6-1.6zM1285.5 524.2l1.6 1.6-1.6 1.6-1.6-1.6zM1296.7 524.2l1.6 1.6-1.6 1.6-1.6-1.6zM1299.5 524.2l1.6 1.6-1.6 1.6-1.6-1.6zM1302.3 524.2l1.6 1.6-1.6 1.6-1.6-1.6zM1307.9 524.2l1.6 1.6-1.6 1.6-1.6-1.6zM1310.7 524.2l1.6 1.6-1.6 1.6-1.6-1.6zM1313.5 524.2l1.6 1.6-1.6 1.6-1.6-1.6zM1316.3 524.2l1.6 1.6-1.6 1.6-1.6-1.6zM1319.1 524.2l1.6 1.6-1.6 1.6-1.6-1.6zM1321.9 524.2l1.6 1.6-1.6 1.6-1.6-1.6zM1324.7 524.2l1.6 1.6-1.6 1.6-1.6-1.6zM1335.9 524.2l1.6 1.6-1.6 1.6-1.6-1.6zM1338.7 524.2l1.6 1.6-1.6 1.6-1.6-1.6zM1341.5 524.2l1.6 1.6-1.6 1.6-1.6-1.6zM1344.3 524.2l1.6 1.6-1.6 1.6-1.6-1.6zM1347.1 524.2l1.6 1.6-1.6 1.6-1.6-1.6zM1349.9 524.2l1.6 1.6-1.6 1.6-1.6-1.6zM1352.7 524.2l1.6 1.6-1.6 1.6-1.6-1.6zM1355.5 524.2l1.6 1.6-1.6 1.6-1.6-1.6zM1358.3 524.2l1.6 1.6-1.6 1.6-1.6-1.6zM1361.1 524.2l1.6 1.6-1.6 1.6-1.6-1.6zM1363.9 524.2l1.6 1.6-1.6 1.6-1.6-1.6zM1291.1 527l1.6 1.6-1.6 1.6-1.6-1.6zM1293.9 527l1.6 1.6-1.6 1.6-1.6-1.6zM1296.7 527l1.6 1.6-1.6 1.6-1.6-1.6zM1307.9 527l1.6 1.6-1.6 1.6-1.6-1.6zM1316.3 527l1.6 1.6-1.6 1.6-1.6-1.6zM1327.5 527l1.6 1.6-1.6 1.6-1.6-1.6zM1338.7 527l1.6 1.6-1.6 1.6-1.6-1.6zM1341.5 527l1.6 1.6-1.6 1.6-1.6-1.6zM1344.3 527l1.6 1.6-1.6 1.6-1.6-1.6zM1347.1 527l1.6 1.6-1.6 1.6-1.6-1.6zM1349.9 527l1.6 1.6-1.6 1.6-1.6-1.6zM1352.7 527l1.6 1.6-1.6 1.6-1.6-1.6zM1355.5 527l1.6 1.6-1.6 1.6-1.6-1.6zM1358.3 527l1.6 1.6-1.6 1.6-1.6-1.6zM1361.1 527l1.6 1.6-1.6 1.6-1.6-1.6zM1363.9 527l1.6 1.6-1.6 1.6-1.6-1.6zM1291.1 529.8l1.6 1.6-1.6 1.6-1.6-1.6zM1293.9 529.8l1.6 1.6-1.6 1.6-1.6-1.6zM1305.1 529.8l1.6 1.6-1.6 1.6-1.6-1.6zM1313.5 529.8l1.6 1.6-1.6 1.6-1.6-1.6zM1316.3 529.8l1.6 1.6-1.6 1.6-1.6-1.6zM1319.1 529.8l1.6 1.6-1.6 1.6-1.6-1.6zM1330.3 529.8l1.6 1.6-1.6 1.6-1.6-1.6zM1341.5 529.8l1.6 1.6-1.6 1.6-1.6-1.6zM1344.3 529.8l1.6 1.6-1.6 1.6-1.6-1.6zM1347.1 529.8l1.6 1.6-1.6 1.6-1.6-1.6zM1349.9 529.8l1.6 1.6-1.6 1.6-1.6-1.6zM1352.7 529.8l1.6 1.6-1.6 1.6-1.6-1.6zM1355.5 529.8l1.6 1.6-1.6 1.6-1.6-1.6zM1358.3 529.8l1.6 1.6-1.6 1.6-1.6-1.6zM1361.1 529.8l1.6 1.6-1.6 1.6-1.6-1.6zM1363.9 529.8l1.6 1.6-1.6 1.6-1.6-1.6zM1291.1 532.6l1.6 1.6-1.6 1.6-1.6-1.6zM1302.3 532.6l1.6 1.6-1.6 1.6-1.6-1.6zM1305.1 532.6l1.6 1.6-1.6 1.6-1.6-1.6zM1307.9 532.6l1.6 1.6-1.6 1.6-1.6-1.6zM1310.7 532.6l1.6 1.6-1.6 1.6-1.6-1.6zM1313.5 532.6l1.6 1.6-1.6 1.6-1.6-1.6zM1316.3 532.6l1.6 1.6-1.6 1.6-1.6-1.6zM1319.1 532.6l1.6 1.6-1.6 1.6-1.6-1.6zM1321.9 532.6l1.6 1.6-1.6 1.6-1.6-1.6zM1333.1 532.6l1.6 1.6-1.6 1.6-1.6-1.6zM1344.3 532.6l1.6 1.6-1.6 1.6-1.6-1.6zM1355.5 532.6l1.6 1.6-1.6 1.6-1.6-1.6zM1358.3 532.6l1.6 1.6-1.6 1.6-1.6-1.6zM1361.1 532.6l1.6 1.6-1.6 1.6-1.6-1.6zM1363.9 532.6l1.6 1.6-1.6 1.6-1.6-1.6zM1279.9 535.4l1.6 1.6-1.6 1.6-1.6-1.6zM1282.7 535.4l1.6 1.6-1.6 1.6-1.6-1.6zM1285.5 535.4l1.6 1.6-1.6 1.6-1.6-1.6zM1288.3 535.4l1.6 1.6-1.6 1.6-1.6-1.6zM1299.5 535.4l1.6 1.6-1.6 1.6-1.6-1.6zM1302.3 535.4l1.6 1.6-1.6 1.6-1.6-1.6zM1305.1 535.4l1.6 1.6-1.6 1.6-1.6-1.6zM1307.9 535.4l1.6 1.6-1.6 1.6-1.6-1.6zM1310.7 535.4l1.6 1.6-1.6 1.6-1.6-1.6zM1313.5 535.4l1.6 1.6-1.6 1.6-1.6-1.6zM1321.9 535.4l1.6 1.6-1.6 1.6-1.6-1.6zM1324.7 535.4l1.6 1.6-1.6 1.6-1.6-1.6zM1355.5 535.4l1.6 1.6-1.6 1.6-1.6-1.6zM1358.3 535.4l1.6 1.6-1.6 1.6-1.6-1.6zM1361.1 535.4l1.6 1.6-1.6 1.6-1.6-1.6zM1363.9 535.4l1.6 1.6-1.6 1.6-1.6-1.6zM1279.9 538.2l1.6 1.6-1.6 1.6-1.6-1.6zM1296.7 538.2l1.6 1.6-1.6 1.6-1.6-1.6zM1299.5 538.2l1.6 1.6-1.6 1.6-1.6-1.6zM1302.3 538.2l1.6 1.6-1.6 1.6-1.6-1.6zM1305.1 538.2l1.6 1.6-1.6 1.6-1.6-1.6zM1307.9 538.2l1.6 1.6-1.6 1.6-1.6-1.6zM1310.7 538.2l1.6 1.6-1.6 1.6-1.6-1.6zM1313.5 538.2l1.6 1.6-1.6 1.6-1.6-1.6zM1321.9 538.2l1.6 1.6-1.6 1.6-1.6-1.6zM1324.7 538.2l1.6 1.6-1.6 1.6-1.6-1.6zM1327.5 538.2l1.6 1.6-1.6 1.6-1.6-1.6zM1363.9 538.2l1.6 1.6-1.6 1.6-1.6-1.6zM1293.9 541l1.6 1.6-1.6 1.6-1.6-1.6zM1296.7 541l1.6 1.6-1.6 1.6-1.6-1.6zM1299.5 541l1.6 1.6-1.6 1.6-1.6-1.6zM1302.3 541l1.6 1.6-1.6 1.6-1.6-1.6zM1321.9 541l1.6 1.6-1.6 1.6-1.6-1.6zM1324.7 541l1.6 1.6-1.6 1.6-1.6-1.6zM1330.3 541l1.6 1.6-1.6 1.6-1.6-1.6zM1344.3 541l1.6 1.6-1.6 1.6-1.6-1.6zM1355.5 541l1.6 1.6-1.6 1.6-1.6-1.6zM1358.3 541l1.6 1.6-1.6 1.6-1.6-1.6zM1361.1 541l1.6 1.6-1.6 1.6-1.6-1.6zM1363.9 541l1.6 1.6-1.6 1.6-1.6-1.6zM1279.9 543.8l1.6 1.6-1.6 1.6-1.6-1.6zM1282.7 543.8l1.6 1.6-1.6 1.6-1.6-1.6zM1296.7 543.8l1.6 1.6-1.6 1.6-1.6-1.6zM1299.5 543.8l1.6 1.6-1.6 1.6-1.6-1.6zM1302.3 543.8l1.6 1.6-1.6 1.6-1.6-1.6zM1305.1 543.8l1.6 1.6-1.6 1.6-1.6-1.6zM1307.9 543.8l1.6 1.6-1.6 1.6-1.6-1.6zM1310.7 543.8l1.6 1.6-1.6 1.6-1.6-1.6zM1313.5 543.8l1.6 1.6-1.6 1.6-1.6-1.6zM1324.7 543.8l1.6 1.6-1.6 1.6-1.6-1.6zM1327.5 543.8l1.6 1.6-1.6 1.6-1.6-1.6zM1333.1 543.8l1.6 1.6-1.6 1.6-1.6-1.6zM1335.9 543.8l1.6 1.6-1.6 1.6-1.6-1.6zM1338.7 543.8l1.6 1.6-1.6 1.6-1.6-1.6zM1355.5 543.8l1.6 1.6-1.6 1.6-1.6-1.6zM1358.3 543.8l1.6 1.6-1.6 1.6-1.6-1.6zM1361.1 543.8l1.6 1.6-1.6 1.6-1.6-1.6zM1363.9 543.8l1.6 1.6-1.6 1.6-1.6-1.6zM1279.9 546.6l1.6 1.6-1.6 1.6-1.6-1.6zM1288.3 546.6l1.6 1.6-1.6 1.6-1.6-1.6zM1296.7 546.6l1.6 1.6-1.6 1.6-1.6-1.6zM1299.5 546.6l1.6 1.6-1.6 1.6-1.6-1.6zM1302.3 546.6l1.6 1.6-1.6 1.6-1.6-1.6zM1305.1 546.6l1.6 1.6-1.6 1.6-1.6-1.6zM1307.9 546.6l1.6 1.6-1.6 1.6-1.6-1.6zM1310.7 546.6l1.6 1.6-1.6 1.6-1.6-1.6zM1313.5 546.6l1.6 1.6-1.6 1.6-1.6-1.6zM1316.3 546.6l1.6 1.6-1.6 1.6-1.6-1.6zM1327.5 546.6l1.6 1.6-1.6 1.6-1.6-1.6zM1330.3 546.6l1.6 1.6-1.6 1.6-1.6-1.6zM1335.9 546.6l1.6 1.6-1.6 1.6-1.6-1.6zM1355.5 546.6l1.6 1.6-1.6 1.6-1.6-1.6zM1358.3 546.6l1.6 1.6-1.6 1.6-1.6-1.6zM1361.1 546.6l1.6 1.6-1.6 1.6-1.6-1.6zM1363.9 546.6l1.6 1.6-1.6 1.6-1.6-1.6zM1279.9 549.4l1.6 1.6-1.6 1.6-1.6-1.6zM1288.3 549.4l1.6 1.6-1.6 1.6-1.6-1.6zM1293.9 549.4l1.6 1.6-1.6 1.6-1.6-1.6zM1296.7 549.4l1.6 1.6-1.6 1.6-1.6-1.6zM1299.5 549.4l1.6 1.6-1.6 1.6-1.6-1.6zM1302.3 549.4l1.6 1.6-1.6 1.6-1.6-1.6zM1305.1 549.4l1.6 1.6-1.6 1.6-1.6-1.6zM1307.9 549.4l1.6 1.6-1.6 1.6-1.6-1.6zM1310.7 549.4l1.6 1.6-1.6 1.6-1.6-1.6zM1313.5 549.4l1.6 1.6-1.6 1.6-1.6-1.6zM1330.3 549.4l1.6 1.6-1.6 1.6-1.6-1.6zM1333.1 549.4l1.6 1.6-1.6 1.6-1.6-1.6zM1338.7 549.4l1.6 1.6-1.6 1.6-1.6-1.6zM1341.5 549.4l1.6 1.6-1.6 1.6-1.6-1.6zM1344.3 549.4l1.6 1.6-1.6 1.6-1.6-1.6zM1363.9 549.4l1.6 1.6-1.6 1.6-1.6-1.6zM1279.9 552.2l1.6 1.6-1.6 1.6-1.6-1.6zM1282.7 552.2l1.6 1.6-1.6 1.6-1.6-1.6zM1293.9 552.2l1.6 1.6-1.6 1.6-1.6-1.6zM1296.7 552.2l1.6 1.6-1.6 1.6-1.6-1.6zM1299.5 552.2l1.6 1.6-1.6 1.6-1.6-1.6zM1302.3 552.2l1.6 1.6-1.6 1.6-1.6-1.6zM1310.7 552.2l1.6 1.6-1.6 1.6-1.6-1.6zM1313.5 552.2l1.6 1.6-1.6 1.6-1.6-1.6zM1316.3 552.2l1.6 1.6-1.6 1.6-1.6-1.6zM1319.1 552.2l1.6 1.6-1.6 1.6-1.6-1.6zM1321.9 552.2l1.6 1.6-1.6 1.6-1.6-1.6zM1333.1 552.2l1.6 1.6-1.6 1.6-1.6-1.6zM1335.9 552.2l1.6 1.6-1.6 1.6-1.6-1.6zM1341.5 552.2l1.6 1.6-1.6 1.6-1.6-1.6zM1344.3 552.2l1.6 1.6-1.6 1.6-1.6-1.6zM1352.7 552.2l1.6 1.6-1.6 1.6-1.6-1.6zM1279.9 555l1.6 1.6-1.6 1.6-1.6-1.6zM1282.7 555l1.6 1.6-1.6 1.6-1.6-1.6zM1293.9 555l1.6 1.6-1.6 1.6-1.6-1.6zM1305.1 555l1.6 1.6-1.6 1.6-1.6-1.6zM1307.9 555l1.6 1.6-1.6 1.6-1.6-1.6zM1310.7 555l1.6 1.6-1.6 1.6-1.6-1.6zM1313.5 555l1.6 1.6-1.6 1.6-1.6-1.6zM1316.3 555l1.6 1.6-1.6 1.6-1.6-1.6zM1319.1 555l1.6 1.6-1.6 1.6-1.6-1.6zM1321.9 555l1.6 1.6-1.6 1.6-1.6-1.6zM1333.1 555l1.6 1.6-1.6 1.6-1.6-1.6zM1335.9 555l1.6 1.6-1.6 1.6-1.6-1.6zM1338.7 555l1.6 1.6-1.6 1.6-1.6-1.6zM1341.5 555l1.6 1.6-1.6 1.6-1.6-1.6zM1344.3 555l1.6 1.6-1.6 1.6-1.6-1.6zM1352.7 555l1.6 1.6-1.6 1.6-1.6-1.6zM1355.5 555l1.6 1.6-1.6 1.6-1.6-1.6zM1279.9 557.8l1.6 1.6-1.6 1.6-1.6-1.6zM1302.3 557.8l1.6 1.6-1.6 1.6-1.6-1.6zM1305.1 557.8l1.6 1.6-1.6 1.6-1.6-1.6zM1307.9 557.8l1.6 1.6-1.6 1.6-1.6-1.6zM1310.7 557.8l1.6 1.6-1.6 1.6-1.6-1.6zM1321.9 557.8l1.6 1.6-1.6 1.6-1.6-1.6zM1333.1 557.8l1.6 1.6-1.6 1.6-1.6-1.6zM1335.9 557.8l1.6 1.6-1.6 1.6-1.6-1.6zM1349.9 557.8l1.6 1.6-1.6 1.6-1.6-1.6zM1352.7 557.8l1.6 1.6-1.6 1.6-1.6-1.6zM1355.5 557.8l1.6 1.6-1.6 1.6-1.6-1.6zM1358.3 557.8l1.6 1.6-1.6 1.6-1.6-1.6zM1279.9 560.6l1.6 1.6-1.6 1.6-1.6-1.6zM1282.7 560.6l1.6 1.6-1.6 1.6-1.6-1.6zM1285.5 560.6l1.6 1.6-1.6 1.6-1.6-1.6zM1299.5 560.6l1.6 1.6-1.6 1.6-1.6-1.6zM1302.3 560.6l1.6 1.6-1.6 1.6-1.6-1.6zM1305.1 560.6l1.6 1.6-1.6 1.6-1.6-1.6zM1307.9 560.6l1.6 1.6-1.6 1.6-1.6-1.6zM1310.7 560.6l1.6 1.6-1.6 1.6-1.6-1.6zM1321.9 560.6l1.6 1.6-1.6 1.6-1.6-1.6zM1324.7 560.6l1.6 1.6-1.6 1.6-1.6-1.6zM1330.3 560.6l1.6 1.6-1.6 1.6-1.6-1.6zM1333.1 560.6l1.6 1.6-1.6 1.6-1.6-1.6zM1335.9 560.6l1.6 1.6-1.6 1.6-1.6-1.6zM1338.7 560.6l1.6 1.6-1.6 1.6-1.6-1.6zM1341.5 560.6l1.6 1.6-1.6 1.6-1.6-1.6zM1344.3 560.6l1.6 1.6-1.6 1.6-1.6-1.6zM1347.1 560.6l1.6 1.6-1.6 1.6-1.6-1.6zM1349.9 560.6l1.6 1.6-1.6 1.6-1.6-1.6zM1352.7 560.6l1.6 1.6-1.6 1.6-1.6-1.6zM1355.5 560.6l1.6 1.6-1.6 1.6-1.6-1.6zM1358.3 560.6l1.6 1.6-1.6 1.6-1.6-1.6zM1279.9 563.4l1.6 1.6-1.6 1.6-1.6-1.6zM1282.7 563.4l1.6 1.6-1.6 1.6-1.6-1.6zM1288.3 563.4l1.6 1.6-1.6 1.6-1.6-1.6zM1305.1 563.4l1.6 1.6-1.6 1.6-1.6-1.6zM1307.9 563.4l1.6 1.6-1.6 1.6-1.6-1.6zM1310.7 563.4l1.6 1.6-1.6 1.6-1.6-1.6zM1313.5 563.4l1.6 1.6-1.6 1.6-1.6-1.6zM1316.3 563.4l1.6 1.6-1.6 1.6-1.6-1.6zM1319.1 563.4l1.6 1.6-1.6 1.6-1.6-1.6zM1324.7 563.4l1.6 1.6-1.6 1.6-1.6-1.6zM1327.5 563.4l1.6 1.6-1.6 1.6-1.6-1.6zM1330.3 563.4l1.6 1.6-1.6 1.6-1.6-1.6zM1333.1 563.4l1.6 1.6-1.6 1.6-1.6-1.6zM1335.9 563.4l1.6 1.6-1.6 1.6-1.6-1.6zM1338.7 563.4l1.6 1.6-1.6 1.6-1.6-1.6zM1341.5 563.4l1.6 1.6-1.6 1.6-1.6-1.6zM1344.3 563.4l1.6 1.6-1.6 1.6-1.6-1.6zM1347.1 563.4l1.6 1.6-1.6 1.6-1.6-1.6zM1349.9 563.4l1.6 1.6-1.6 1.6-1.6-1.6zM1352.7 563.4l1.6 1.6-1.6 1.6-1.6-1.6zM1355.5 563.4l1.6 1.6-1.6 1.6-1.6-1.6zM1358.3 563.4l1.6 1.6-1.6 1.6-1.6-1.6zM1363.9 563.4l1.6 1.6-1.6 1.6-1.6-1.6zM1288.3 566.2l1.6 1.6-1.6 1.6-1.6-1.6zM1291.1 566.2l1.6 1.6-1.6 1.6-1.6-1.6zM1313.5 566.2l1.6 1.6-1.6 1.6-1.6-1.6zM1316.3 566.2l1.6 1.6-1.6 1.6-1.6-1.6zM1319.1 566.2l1.6 1.6-1.6 1.6-1.6-1.6zM1324.7 566.2l1.6 1.6-1.6 1.6-1.6-1.6zM1327.5 566.2l1.6 1.6-1.6 1.6-1.6-1.6zM1330.3 566.2l1.6 1.6-1.6 1.6-1.6-1.6zM1333.1 566.2l1.6 1.6-1.6 1.6-1.6-1.6zM1344.3 566.2l1.6 1.6-1.6 1.6-1.6-1.6zM1347.1 566.2l1.6 1.6-1.6 1.6-1.6-1.6zM1349.9 566.2l1.6 1.6-1.6 1.6-1.6-1.6zM1352.7 566.2l1.6 1.6-1.6 1.6-1.6-1.6zM1355.5 566.2l1.6 1.6-1.6 1.6-1.6-1.6zM1358.3 566.2l1.6 1.6-1.6 1.6-1.6-1.6zM1363.9 566.2l1.6 1.6-1.6 1.6-1.6-1.6zM1319.1 569l1.6 1.6-1.6 1.6-1.6-1.6zM1321.9 569l1.6 1.6-1.6 1.6-1.6-1.6zM1324.7 569l1.6 1.6-1.6 1.6-1.6-1.6zM1327.5 569l1.6 1.6-1.6 1.6-1.6-1.6zM1330.3 569l1.6 1.6-1.6 1.6-1.6-1.6zM1333.1 569l1.6 1.6-1.6 1.6-1.6-1.6zM1335.9 569l1.6 1.6-1.6 1.6-1.6-1.6zM1347.1 569l1.6 1.6-1.6 1.6-1.6-1.6zM1349.9 569l1.6 1.6-1.6 1.6-1.6-1.6zM1352.7 569l1.6 1.6-1.6 1.6-1.6-1.6zM1355.5 569l1.6 1.6-1.6 1.6-1.6-1.6zM1358.3 569l1.6 1.6-1.6 1.6-1.6-1.6zM1361.1 569l1.6 1.6-1.6 1.6-1.6-1.6zM1363.9 569l1.6 1.6-1.6 1.6-1.6-1.6zM1279.9 571.8l1.6 1.6-1.6 1.6-1.6-1.6zM1282.7 571.8l1.6 1.6-1.6 1.6-1.6-1.6zM1296.7 571.8l1.6 1.6-1.6 1.6-1.6-1.6zM1299.5 571.8l1.6 1.6-1.6 1.6-1.6-1.6zM1307.9 571.8l1.6 1.6-1.6 1.6-1.6-1.6zM1310.7 571.8l1.6 1.6-1.6 1.6-1.6-1.6zM1319.1 571.8l1.6 1.6-1.6 1.6-1.6-1.6zM1324.7 571.8l1.6 1.6-1.6 1.6-1.6-1.6zM1327.5 571.8l1.6 1.6-1.6 1.6-1.6-1.6zM1330.3 571.8l1.6 1.6-1.6 1.6-1.6-1.6zM1333.1 571.8l1.6 1.6-1.6 1.6-1.6-1.6zM1335.9 571.8l1.6 1.6-1.6 1.6-1.6-1.6zM1338.7 571.8l1.6 1.6-1.6 1.6-1.6-1.6zM1344.3 571.8l1.6 1.6-1.6 1.6-1.6-1.6zM1347.1 571.8l1.6 1.6-1.6 1.6-1.6-1.6zM1349.9 571.8l1.6 1.6-1.6 1.6-1.6-1.6zM1352.7 571.8l1.6 1.6-1.6 1.6-1.6-1.6zM1355.5 571.8l1.6 1.6-1.6 1.6-1.6-1.6zM1358.3 571.8l1.6 1.6-1.6 1.6-1.6-1.6zM1361.1 571.8l1.6 1.6-1.6 1.6-1.6-1.6zM1363.9 571.8l1.6 1.6-1.6 1.6-1.6-1.6zM1296.7 574.6l1.6 1.6-1.6 1.6-1.6-1.6zM1299.5 574.6l1.6 1.6-1.6 1.6-1.6-1.6zM1302.3 574.6l1.6 1.6-1.6 1.6-1.6-1.6zM1305.1 574.6l1.6 1.6-1.6 1.6-1.6-1.6zM1324.7 574.6l1.6 1.6-1.6 1.6-1.6-1.6zM1327.5 574.6l1.6 1.6-1.6 1.6-1.6-1.6zM1330.3 574.6l1.6 1.6-1.6 1.6-1.6-1.6zM1333.1 574.6l1.6 1.6-1.6 1.6-1.6-1.6zM1335.9 574.6l1.6 1.6-1.6 1.6-1.6-1.6zM1338.7 574.6l1.6 1.6-1.6 1.6-1.6-1.6zM1341.5 574.6l1.6 1.6-1.6 1.6-1.6-1.6zM1347.1 574.6l1.6 1.6-1.6 1.6-1.6-1.6zM1349.9 574.6l1.6 1.6-1.6 1.6-1.6-1.6zM1352.7 574.6l1.6 1.6-1.6 1.6-1.6-1.6zM1355.5 574.6l1.6 1.6-1.6 1.6-1.6-1.6zM1358.3 574.6l1.6 1.6-1.6 1.6-1.6-1.6zM1361.1 574.6l1.6 1.6-1.6 1.6-1.6-1.6zM1363.9 574.6l1.6 1.6-1.6 1.6-1.6-1.6zM1279.9 577.4l1.6 1.6-1.6 1.6-1.6-1.6zM1291.1 577.4l1.6 1.6-1.6 1.6-1.6-1.6zM1293.9 577.4l1.6 1.6-1.6 1.6-1.6-1.6zM1296.7 577.4l1.6 1.6-1.6 1.6-1.6-1.6zM1299.5 577.4l1.6 1.6-1.6 1.6-1.6-1.6zM1302.3 577.4l1.6 1.6-1.6 1.6-1.6-1.6zM1305.1 577.4l1.6 1.6-1.6 1.6-1.6-1.6zM1307.9 577.4l1.6 1.6-1.6 1.6-1.6-1.6zM1316.3 577.4l1.6 1.6-1.6 1.6-1.6-1.6zM1321.9 577.4l1.6 1.6-1.6 1.6-1.6-1.6zM1324.7 577.4l1.6 1.6-1.6 1.6-1.6-1.6zM1327.5 577.4l1.6 1.6-1.6 1.6-1.6-1.6zM1330.3 577.4l1.6 1.6-1.6 1.6-1.6-1.6zM1333.1 577.4l1.6 1.6-1.6 1.6-1.6-1.6zM1335.9 577.4l1.6 1.6-1.6 1.6-1.6-1.6zM1338.7 577.4l1.6 1.6-1.6 1.6-1.6-1.6zM1341.5 577.4l1.6 1.6-1.6 1.6-1.6-1.6zM1344.3 577.4l1.6 1.6-1.6 1.6-1.6-1.6zM1358.3 577.4l1.6 1.6-1.6 1.6-1.6-1.6zM1361.1 577.4l1.6 1.6-1.6 1.6-1.6-1.6zM1363.9 577.4l1.6 1.6-1.6 1.6-1.6-1.6zM1279.9 580.2l1.6 1.6-1.6 1.6-1.6-1.6zM1282.7 580.2l1.6 1.6-1.6 1.6-1.6-1.6zM1302.3 580.2l1.6 1.6-1.6 1.6-1.6-1.6zM1305.1 580.2l1.6 1.6-1.6 1.6-1.6-1.6zM1307.9 580.2l1.6 1.6-1.6 1.6-1.6-1.6zM1310.7 580.2l1.6 1.6-1.6 1.6-1.6-1.6zM1316.3 580.2l1.6 1.6-1.6 1.6-1.6-1.6zM1319.1 580.2l1.6 1.6-1.6 1.6-1.6-1.6zM1321.9 580.2l1.6 1.6-1.6 1.6-1.6-1.6zM1324.7 580.2l1.6 1.6-1.6 1.6-1.6-1.6zM1327.5 580.2l1.6 1.6-1.6 1.6-1.6-1.6zM1330.3 580.2l1.6 1.6-1.6 1.6-1.6-1.6zM1333.1 580.2l1.6 1.6-1.6 1.6-1.6-1.6zM1335.9 580.2l1.6 1.6-1.6 1.6-1.6-1.6zM1338.7 580.2l1.6 1.6-1.6 1.6-1.6-1.6zM1341.5 580.2l1.6 1.6-1.6 1.6-1.6-1.6zM1355.5 580.2l1.6 1.6-1.6 1.6-1.6-1.6zM1358.3 580.2l1.6 1.6-1.6 1.6-1.6-1.6zM1361.1 580.2l1.6 1.6-1.6 1.6-1.6-1.6zM1279.9 583l1.6 1.6-1.6 1.6-1.6-1.6zM1282.7 583l1.6 1.6-1.6 1.6-1.6-1.6zM1285.5 583l1.6 1.6-1.6 1.6-1.6-1.6zM1293.9 583l1.6 1.6-1.6 1.6-1.6-1.6zM1296.7 583l1.6 1.6-1.6 1.6-1.6-1.6zM1305.1 583l1.6 1.6-1.6 1.6-1.6-1.6zM1307.9 583l1.6 1.6-1.6 1.6-1.6-1.6zM1310.7 583l1.6 1.6-1.6 1.6-1.6-1.6zM1319.1 583l1.6 1.6-1.6 1.6-1.6-1.6zM1321.9 583l1.6 1.6-1.6 1.6-1.6-1.6zM1324.7 583l1.6 1.6-1.6 1.6-1.6-1.6zM1327.5 583l1.6 1.6-1.6 1.6-1.6-1.6zM1330.3 583l1.6 1.6-1.6 1.6-1.6-1.6zM1333.1 583l1.6 1.6-1.6 1.6-1.6-1.6zM1335.9 583l1.6 1.6-1.6 1.6-1.6-1.6zM1338.7 583l1.6 1.6-1.6 1.6-1.6-1.6zM1341.5 583l1.6 1.6-1.6 1.6-1.6-1.6zM1355.5 583l1.6 1.6-1.6 1.6-1.6-1.6zM1358.3 583l1.6 1.6-1.6 1.6-1.6-1.6zM1361.1 583l1.6 1.6-1.6 1.6-1.6-1.6zM1363.9 583l1.6 1.6-1.6 1.6-1.6-1.6zM1279.9 585.8l1.6 1.6-1.6 1.6-1.6-1.6zM1282.7 585.8l1.6 1.6-1.6 1.6-1.6-1.6zM1288.3 585.8l1.6 1.6-1.6 1.6-1.6-1.6zM1296.7 585.8l1.6 1.6-1.6 1.6-1.6-1.6zM1299.5 585.8l1.6 1.6-1.6 1.6-1.6-1.6zM1302.3 585.8l1.6 1.6-1.6 1.6-1.6-1.6zM1305.1 585.8l1.6 1.6-1.6 1.6-1.6-1.6zM1307.9 585.8l1.6 1.6-1.6 1.6-1.6-1.6zM1310.7 585.8l1.6 1.6-1.6 1.6-1.6-1.6zM1316.3 585.8l1.6 1.6-1.6 1.6-1.6-1.6zM1319.1 585.8l1.6 1.6-1.6 1.6-1.6-1.6zM1321.9 585.8l1.6 1.6-1.6 1.6-1.6-1.6zM1324.7 585.8l1.6 1.6-1.6 1.6-1.6-1.6zM1327.5 585.8l1.6 1.6-1.6 1.6-1.6-1.6zM1330.3 585.8l1.6 1.6-1.6 1.6-1.6-1.6zM1333.1 585.8l1.6 1.6-1.6 1.6-1.6-1.6zM1335.9 585.8l1.6 1.6-1.6 1.6-1.6-1.6zM1349.9 585.8l1.6 1.6-1.6 1.6-1.6-1.6zM1352.7 585.8l1.6 1.6-1.6 1.6-1.6-1.6zM1358.3 585.8l1.6 1.6-1.6 1.6-1.6-1.6zM1361.1 585.8l1.6 1.6-1.6 1.6-1.6-1.6zM1279.9 588.6l1.6 1.6-1.6 1.6-1.6-1.6zM1282.7 588.6l1.6 1.6-1.6 1.6-1.6-1.6zM1285.5 588.6l1.6 1.6-1.6 1.6-1.6-1.6zM1291.1 588.6l1.6 1.6-1.6 1.6-1.6-1.6zM1299.5 588.6l1.6 1.6-1.6 1.6-1.6-1.6zM1302.3 588.6l1.6 1.6-1.6 1.6-1.6-1.6zM1305.1 588.6l1.6 1.6-1.6 1.6-1.6-1.6zM1307.9 588.6l1.6 1.6-1.6 1.6-1.6-1.6zM1310.7 588.6l1.6 1.6-1.6 1.6-1.6-1.6zM1313.5 588.6l1.6 1.6-1.6 1.6-1.6-1.6zM1316.3 588.6l1.6 1.6-1.6 1.6-1.6-1.6zM1319.1 588.6l1.6 1.6-1.6 1.6-1.6-1.6zM1321.9 588.6l1.6 1.6-1.6 1.6-1.6-1.6zM1324.7 588.6l1.6 1.6-1.6 1.6-1.6-1.6zM1327.5 588.6l1.6 1.6-1.6 1.6-1.6-1.6zM1330.3 588.6l1.6 1.6-1.6 1.6-1.6-1.6zM1333.1 588.6l1.6 1.6-1.6 1.6-1.6-1.6zM1335.9 588.6l1.6 1.6-1.6 1.6-1.6-1.6zM1347.1 588.6l1.6 1.6-1.6 1.6-1.6-1.6zM1349.9 588.6l1.6 1.6-1.6 1.6-1.6-1.6zM1355.5 588.6l1.6 1.6-1.6 1.6-1.6-1.6zM1358.3 588.6l1.6 1.6-1.6 1.6-1.6-1.6zM1279.9 591.4l1.6 1.6-1.6 1.6-1.6-1.6zM1282.7 591.4l1.6 1.6-1.6 1.6-1.6-1.6zM1285.5 591.4l1.6 1.6-1.6 1.6-1.6-1.6zM1288.3 591.4l1.6 1.6-1.6 1.6-1.6-1.6zM1302.3 591.4l1.6 1.6-1.6 1.6-1.6-1.6zM1305.1 591.4l1.6 1.6-1.6 1.6-1.6-1.6zM1307.9 591.4l1.6 1.6-1.6 1.6-1.6-1.6zM1319.1 591.4l1.6 1.6-1.6 1.6-1.6-1.6zM1321.9 591.4l1.6 1.6-1.6 1.6-1.6-1.6zM1324.7 591.4l1.6 1.6-1.6 1.6-1.6-1.6zM1327.5 591.4l1.6 1.6-1.6 1.6-1.6-1.6zM1330.3 591.4l1.6 1.6-1.6 1.6-1.6-1.6zM1333.1 591.4l1.6 1.6-1.6 1.6-1.6-1.6zM1344.3 591.4l1.6 1.6-1.6 1.6-1.6-1.6zM1347.1 591.4l1.6 1.6-1.6 1.6-1.6-1.6zM1349.9 591.4l1.6 1.6-1.6 1.6-1.6-1.6zM1352.7 591.4l1.6 1.6-1.6 1.6-1.6-1.6zM1279.9 594.2l1.6 1.6-1.6 1.6-1.6-1.6zM1282.7 594.2l1.6 1.6-1.6 1.6-1.6-1.6zM1285.5 594.2l1.6 1.6-1.6 1.6-1.6-1.6zM1288.3 594.2l1.6 1.6-1.6 1.6-1.6-1.6zM1291.1 594.2l1.6 1.6-1.6 1.6-1.6-1.6zM1305.1 594.2l1.6 1.6-1.6 1.6-1.6-1.6zM1307.9 594.2l1.6 1.6-1.6 1.6-1.6-1.6zM1310.7 594.2l1.6 1.6-1.6 1.6-1.6-1.6zM1324.7 594.2l1.6 1.6-1.6 1.6-1.6-1.6zM1327.5 594.2l1.6 1.6-1.6 1.6-1.6-1.6zM1330.3 594.2l1.6 1.6-1.6 1.6-1.6-1.6zM1333.1 594.2l1.6 1.6-1.6 1.6-1.6-1.6zM1335.9 594.2l1.6 1.6-1.6 1.6-1.6-1.6zM1338.7 594.2l1.6 1.6-1.6 1.6-1.6-1.6zM1341.5 594.2l1.6 1.6-1.6 1.6-1.6-1.6zM1344.3 594.2l1.6 1.6-1.6 1.6-1.6-1.6zM1347.1 594.2l1.6 1.6-1.6 1.6-1.6-1.6zM1349.9 594.2l1.6 1.6-1.6 1.6-1.6-1.6zM1352.7 594.2l1.6 1.6-1.6 1.6-1.6-1.6zM1279.9 597l1.6 1.6-1.6 1.6-1.6-1.6zM1282.7 597l1.6 1.6-1.6 1.6-1.6-1.6zM1285.5 597l1.6 1.6-1.6 1.6-1.6-1.6zM1288.3 597l1.6 1.6-1.6 1.6-1.6-1.6zM1291.1 597l1.6 1.6-1.6 1.6-1.6-1.6zM1307.9 597l1.6 1.6-1.6 1.6-1.6-1.6zM1313.5 597l1.6 1.6-1.6 1.6-1.6-1.6zM1327.5 597l1.6 1.6-1.6 1.6-1.6-1.6zM1330.3 597l1.6 1.6-1.6 1.6-1.6-1.6zM1333.1 597l1.6 1.6-1.6 1.6-1.6-1.6zM1335.9 597l1.6 1.6-1.6 1.6-1.6-1.6zM1338.7 597l1.6 1.6-1.6 1.6-1.6-1.6zM1341.5 597l1.6 1.6-1.6 1.6-1.6-1.6zM1352.7 597l1.6 1.6-1.6 1.6-1.6-1.6zM1355.5 597l1.6 1.6-1.6 1.6-1.6-1.6zM1358.3 597l1.6 1.6-1.6 1.6-1.6-1.6zM1279.9 599.8l1.6 1.6-1.6 1.6-1.6-1.6zM1282.7 599.8l1.6 1.6-1.6 1.6-1.6-1.6zM1285.5 599.8l1.6 1.6-1.6 1.6-1.6-1.6zM1288.3 599.8l1.6 1.6-1.6 1.6-1.6-1.6zM1291.1 599.8l1.6 1.6-1.6 1.6-1.6-1.6zM1302.3 599.8l1.6 1.6-1.6 1.6-1.6-1.6zM1310.7 599.8l1.6 1.6-1.6 1.6-1.6-1.6zM1313.5 599.8l1.6 1.6-1.6 1.6-1.6-1.6zM1319.1 599.8l1.6 1.6-1.6 1.6-1.6-1.6zM1321.9 599.8l1.6 1.6-1.6 1.6-1.6-1.6zM1330.3 599.8l1.6 1.6-1.6 1.6-1.6-1.6zM1333.1 599.8l1.6 1.6-1.6 1.6-1.6-1.6zM1335.9 599.8l1.6 1.6-1.6 1.6-1.6-1.6zM1349.9 599.8l1.6 1.6-1.6 1.6-1.6-1.6zM1352.7 599.8l1.6 1.6-1.6 1.6-1.6-1.6zM1355.5 599.8l1.6 1.6-1.6 1.6-1.6-1.6zM1358.3 599.8l1.6 1.6-1.6 1.6-1.6-1.6zM1361.1 599.8l1.6 1.6-1.6 1.6-1.6-1.6zM1279.9 602.6l1.6 1.6-1.6 1.6-1.6-1.6zM1282.7 602.6l1.6 1.6-1.6 1.6-1.6-1.6zM1285.5 602.6l1.6 1.6-1.6 1.6-1.6-1.6zM1288.3 602.6l1.6 1.6-1.6 1.6-1.6-1.6zM1291.1 602.6l1.6 1.6-1.6 1.6-1.6-1.6zM1302.3 602.6l1.6 1.6-1.6 1.6-1.6-1.6zM1307.9 602.6l1.6 1.6-1.6 1.6-1.6-1.6zM1310.7 602.6l1.6 1.6-1.6 1.6-1.6-1.6zM1316.3 602.6l1.6 1.6-1.6 1.6-1.6-1.6zM1319.1 602.6l1.6 1.6-1.6 1.6-1.6-1.6zM1321.9 602.6l1.6 1.6-1.6 1.6-1.6-1.6zM1324.7 602.6l1.6 1.6-1.6 1.6-1.6-1.6zM1333.1 602.6l1.6 1.6-1.6 1.6-1.6-1.6zM1335.9 602.6l1.6 1.6-1.6 1.6-1.6-1.6zM1349.9 602.6l1.6 1.6-1.6 1.6-1.6-1.6zM1352.7 602.6l1.6 1.6-1.6 1.6-1.6-1.6zM1355.5 602.6l1.6 1.6-1.6 1.6-1.6-1.6zM1358.3 602.6l1.6 1.6-1.6 1.6-1.6-1.6zM1361.1 602.6l1.6 1.6-1.6 1.6-1.6-1.6zM1363.9 602.6l1.6 1.6-1.6 1.6-1.6-1.6zM1279.9 605.4l1.6 1.6-1.6 1.6-1.6-1.6zM1282.7 605.4l1.6 1.6-1.6 1.6-1.6-1.6zM1285.5 605.4l1.6 1.6-1.6 1.6-1.6-1.6zM1288.3 605.4l1.6 1.6-1.6 1.6-1.6-1.6zM1307.9 605.4l1.6 1.6-1.6 1.6-1.6-1.6zM1310.7 605.4l1.6 1.6-1.6 1.6-1.6-1.6zM1313.5 605.4l1.6 1.6-1.6 1.6-1.6-1.6zM1316.3 605.4l1.6 1.6-1.6 1.6-1.6-1.6zM1335.9 605.4l1.6 1.6-1.6 1.6-1.6-1.6z" fill="#fdd838"/><path d="M1299.5 515.8l1.6 1.6-1.6 1.6-1.6-1.6zM1307.9 515.8l1.6 1.6-1.6 1.6-1.6-1.6zM1310.7 515.8l1.6 1.6-1.6 1.6-1.6-1.6zM1319.1 515.8l1.6 1.6-1.6 1.6-1.6-1.6zM1321.9 515.8l1.6 1.6-1.6 1.6-1.6-1.6zM1324.7 515.8l1.6 1.6-1.6 1.6-1.6-1.6zM1293.9 518.6l1.6 1.6-1.6 1.6-1.6-1.6zM1296.7 518.6l1.6 1.6-1.6 1.6-1.6-1.6zM1305.1 518.6l1.6 1.6-1.6 1.6-1.6-1.6zM1307.9 518.6l1.6 1.6-1.6 1.6-1.6-1.6zM1321.9 518.6l1.6 1.6-1.6 1.6-1.6-1.6zM1324.7 518.6l1.6 1.6-1.6 1.6-1.6-1.6zM1363.9 518.6l1.6 1.6-1.6 1.6-1.6-1.6zM1291.1 521.4l1.6 1.6-1.6 1.6-1.6-1.6zM1293.9 521.4l1.6 1.6-1.6 1.6-1.6-1.6zM1302.3 521.4l1.6 1.6-1.6 1.6-1.6-1.6zM1305.1 521.4l1.6 1.6-1.6 1.6-1.6-1.6zM1324.7 521.4l1.6 1.6-1.6 1.6-1.6-1.6zM1327.5 521.4l1.6 1.6-1.6 1.6-1.6-1.6zM1327.5 524.2l1.6 1.6-1.6 1.6-1.6-1.6zM1330.3 524.2l1.6 1.6-1.6 1.6-1.6-1.6zM1333.1 524.2l1.6 1.6-1.6 1.6-1.6-1.6zM1279.9 527l1.6 1.6-1.6 1.6-1.6-1.6zM1282.7 527l1.6 1.6-1.6 1.6-1.6-1.6zM1285.5 527l1.6 1.6-1.6 1.6-1.6-1.6zM1288.3 527l1.6 1.6-1.6 1.6-1.6-1.6zM1299.5 527l1.6 1.6-1.6 1.6-1.6-1.6zM1305.1 527l1.6 1.6-1.6 1.6-1.6-1.6zM1319.1 527l1.6 1.6-1.6 1.6-1.6-1.6zM1321.9 527l1.6 1.6-1.6 1.6-1.6-1.6zM1324.7 527l1.6 1.6-1.6 1.6-1.6-1.6zM1330.3 527l1.6 1.6-1.6 1.6-1.6-1.6zM1333.1 527l1.6 1.6-1.6 1.6-1.6-1.6zM1335.9 527l1.6 1.6-1.6 1.6-1.6-1.6zM1279.9 529.8l1.6 1.6-1.6 1.6-1.6-1.6zM1282.7 529.8l1.6 1.6-1.6 1.6-1.6-1.6zM1285.5 529.8l1.6 1.6-1.6 1.6-1.6-1.6zM1288.3 529.8l1.6 1.6-1.6 1.6-1.6-1.6zM1296.7 529.8l1.6 1.6-1.6 1.6-1.6-1.6zM1299.5 529.8l1.6 1.6-1.6 1.6-1.6-1.6zM1302.3 529.8l1.6 1.6-1.6 1.6-1.6-1.6zM1321.9 529.8l1.6 1.6-1.6 1.6-1.6-1.6zM1324.7 529.8l1.6 1.6-1.6 1.6-1.6-1.6zM1327.5 529.8l1.6 1.6-1.6 1.6-1.6-1.6zM1333.1 529.8l1.6 1.6-1.6 1.6-1.6-1.6zM1335.9 529.8l1.6 1.6-1.6 1.6-1.6-1.6zM1338.7 529.8l1.6 1.6-1.6 1.6-1.6-1.6zM1279.9 532.6l1.6 1.6-1.6 1.6-1.6-1.6zM1282.7 532.6l1.6 1.6-1.6 1.6-1.6-1.6zM1285.5 532.6l1.6 1.6-1.6 1.6-1.6-1.6zM1288.3 532.6l1.6 1.6-1.6 1.6-1.6-1.6zM1293.9 532.6l1.6 1.6-1.6 1.6-1.6-1.6zM1296.7 532.6l1.6 1.6-1.6 1.6-1.6-1.6zM1299.5 532.6l1.6 1.6-1.6 1.6-1.6-1.6zM1324.7 532.6l1.6 1.6-1.6 1.6-1.6-1.6zM1327.5 532.6l1.6 1.6-1.6 1.6-1.6-1.6zM1330.3 532.6l1.6 1.6-1.6 1.6-1.6-1.6zM1335.9 532.6l1.6 1.6-1.6 1.6-1.6-1.6zM1338.7 532.6l1.6 1.6-1.6 1.6-1.6-1.6zM1341.5 532.6l1.6 1.6-1.6 1.6-1.6-1.6zM1347.1 532.6l1.6 1.6-1.6 1.6-1.6-1.6zM1349.9 532.6l1.6 1.6-1.6 1.6-1.6-1.6zM1352.7 532.6l1.6 1.6-1.6 1.6-1.6-1.6zM1291.1 535.4l1.6 1.6-1.6 1.6-1.6-1.6zM1293.9 535.4l1.6 1.6-1.6 1.6-1.6-1.6zM1296.7 535.4l1.6 1.6-1.6 1.6-1.6-1.6zM1316.3 535.4l1.6 1.6-1.6 1.6-1.6-1.6zM1319.1 535.4l1.6 1.6-1.6 1.6-1.6-1.6zM1327.5 535.4l1.6 1.6-1.6 1.6-1.6-1.6zM1330.3 535.4l1.6 1.6-1.6 1.6-1.6-1.6zM1333.1 535.4l1.6 1.6-1.6 1.6-1.6-1.6zM1335.9 535.4l1.6 1.6-1.6 1.6-1.6-1.6zM1338.7 535.4l1.6 1.6-1.6 1.6-1.6-1.6zM1341.5 535.4l1.6 1.6-1.6 1.6-1.6-1.6zM1344.3 535.4l1.6 1.6-1.6 1.6-1.6-1.6zM1347.1 535.4l1.6 1.6-1.6 1.6-1.6-1.6zM1349.9 535.4l1.6 1.6-1.6 1.6-1.6-1.6zM1352.7 535.4l1.6 1.6-1.6 1.6-1.6-1.6zM1282.7 538.2l1.6 1.6-1.6 1.6-1.6-1.6zM1285.5 538.2l1.6 1.6-1.6 1.6-1.6-1.6zM1288.3 538.2l1.6 1.6-1.6 1.6-1.6-1.6zM1291.1 538.2l1.6 1.6-1.6 1.6-1.6-1.6zM1293.9 538.2l1.6 1.6-1.6 1.6-1.6-1.6zM1316.3 538.2l1.6 1.6-1.6 1.6-1.6-1.6zM1319.1 538.2l1.6 1.6-1.6 1.6-1.6-1.6zM1330.3 538.2l1.6 1.6-1.6 1.6-1.6-1.6zM1335.9 538.2l1.6 1.6-1.6 1.6-1.6-1.6zM1338.7 538.2l1.6 1.6-1.6 1.6-1.6-1.6zM1341.5 538.2l1.6 1.6-1.6 1.6-1.6-1.6zM1344.3 538.2l1.6 1.6-1.6 1.6-1.6-1.6zM1347.1 538.2l1.6 1.6-1.6 1.6-1.6-1.6zM1349.9 538.2l1.6 1.6-1.6 1.6-1.6-1.6zM1352.7 538.2l1.6 1.6-1.6 1.6-1.6-1.6zM1355.5 538.2l1.6 1.6-1.6 1.6-1.6-1.6zM1358.3 538.2l1.6 1.6-1.6 1.6-1.6-1.6zM1361.1 538.2l1.6 1.6-1.6 1.6-1.6-1.6zM1279.9 541l1.6 1.6-1.6 1.6-1.6-1.6zM1282.7 541l1.6 1.6-1.6 1.6-1.6-1.6zM1305.1 541l1.6 1.6-1.6 1.6-1.6-1.6zM1307.9 541l1.6 1.6-1.6 1.6-1.6-1.6zM1310.7 541l1.6 1.6-1.6 1.6-1.6-1.6zM1313.5 541l1.6 1.6-1.6 1.6-1.6-1.6zM1316.3 541l1.6 1.6-1.6 1.6-1.6-1.6zM1319.1 541l1.6 1.6-1.6 1.6-1.6-1.6zM1327.5 541l1.6 1.6-1.6 1.6-1.6-1.6zM1333.1 541l1.6 1.6-1.6 1.6-1.6-1.6zM1335.9 541l1.6 1.6-1.6 1.6-1.6-1.6zM1338.7 541l1.6 1.6-1.6 1.6-1.6-1.6zM1341.5 541l1.6 1.6-1.6 1.6-1.6-1.6zM1347.1 541l1.6 1.6-1.6 1.6-1.6-1.6zM1349.9 541l1.6 1.6-1.6 1.6-1.6-1.6zM1352.7 541l1.6 1.6-1.6 1.6-1.6-1.6zM1316.3 543.8l1.6 1.6-1.6 1.6-1.6-1.6zM1319.1 543.8l1.6 1.6-1.6 1.6-1.6-1.6zM1321.9 543.8l1.6 1.6-1.6 1.6-1.6-1.6zM1330.3 543.8l1.6 1.6-1.6 1.6-1.6-1.6zM1341.5 543.8l1.6 1.6-1.6 1.6-1.6-1.6zM1344.3 543.8l1.6 1.6-1.6 1.6-1.6-1.6zM1347.1 543.8l1.6 1.6-1.6 1.6-1.6-1.6zM1349.9 543.8l1.6 1.6-1.6 1.6-1.6-1.6zM1352.7 543.8l1.6 1.6-1.6 1.6-1.6-1.6zM1282.7 546.6l1.6 1.6-1.6 1.6-1.6-1.6zM1285.5 546.6l1.6 1.6-1.6 1.6-1.6-1.6zM1319.1 546.6l1.6 1.6-1.6 1.6-1.6-1.6zM1321.9 546.6l1.6 1.6-1.6 1.6-1.6-1.6zM1324.7 546.6l1.6 1.6-1.6 1.6-1.6-1.6zM1333.1 546.6l1.6 1.6-1.6 1.6-1.6-1.6zM1338.7 546.6l1.6 1.6-1.6 1.6-1.6-1.6zM1341.5 546.6l1.6 1.6-1.6 1.6-1.6-1.6zM1344.3 546.6l1.6 1.6-1.6 1.6-1.6-1.6zM1347.1 546.6l1.6 1.6-1.6 1.6-1.6-1.6zM1349.9 546.6l1.6 1.6-1.6 1.6-1.6-1.6zM1352.7 546.6l1.6 1.6-1.6 1.6-1.6-1.6zM1282.7 549.4l1.6 1.6-1.6 1.6-1.6-1.6zM1285.5 549.4l1.6 1.6-1.6 1.6-1.6-1.6zM1316.3 549.4l1.6 1.6-1.6 1.6-1.6-1.6zM1319.1 549.4l1.6 1.6-1.6 1.6-1.6-1.6zM1321.9 549.4l1.6 1.6-1.6 1.6-1.6-1.6zM1324.7 549.4l1.6 1.6-1.6 1.6-1.6-1.6zM1327.5 549.4l1.6 1.6-1.6 1.6-1.6-1.6zM1335.9 549.4l1.6 1.6-1.6 1.6-1.6-1.6zM1347.1 549.4l1.6 1.6-1.6 1.6-1.6-1.6zM1349.9 549.4l1.6 1.6-1.6 1.6-1.6-1.6zM1352.7 549.4l1.6 1.6-1.6 1.6-1.6-1.6zM1355.5 549.4l1.6 1.6-1.6 1.6-1.6-1.6zM1305.1 552.2l1.6 1.6-1.6 1.6-1.6-1.6zM1307.9 552.2l1.6 1.6-1.6 1.6-1.6-1.6zM1324.7 552.2l1.6 1.6-1.6 1.6-1.6-1.6zM1327.5 552.2l1.6 1.6-1.6 1.6-1.6-1.6zM1330.3 552.2l1.6 1.6-1.6 1.6-1.6-1.6zM1338.7 552.2l1.6 1.6-1.6 1.6-1.6-1.6zM1347.1 552.2l1.6 1.6-1.6 1.6-1.6-1.6zM1349.9 552.2l1.6 1.6-1.6 1.6-1.6-1.6zM1355.5 552.2l1.6 1.6-1.6 1.6-1.6-1.6zM1358.3 552.2l1.6 1.6-1.6 1.6-1.6-1.6zM1324.7 555l1.6 1.6-1.6 1.6-1.6-1.6zM1327.5 555l1.6 1.6-1.6 1.6-1.6-1.6zM1330.3 555l1.6 1.6-1.6 1.6-1.6-1.6zM1347.1 555l1.6 1.6-1.6 1.6-1.6-1.6zM1349.9 555l1.6 1.6-1.6 1.6-1.6-1.6zM1358.3 555l1.6 1.6-1.6 1.6-1.6-1.6zM1361.1 555l1.6 1.6-1.6 1.6-1.6-1.6zM1282.7 557.8l1.6 1.6-1.6 1.6-1.6-1.6zM1324.7 557.8l1.6 1.6-1.6 1.6-1.6-1.6zM1327.5 557.8l1.6 1.6-1.6 1.6-1.6-1.6zM1330.3 557.8l1.6 1.6-1.6 1.6-1.6-1.6zM1338.7 557.8l1.6 1.6-1.6 1.6-1.6-1.6zM1341.5 557.8l1.6 1.6-1.6 1.6-1.6-1.6zM1344.3 557.8l1.6 1.6-1.6 1.6-1.6-1.6zM1347.1 557.8l1.6 1.6-1.6 1.6-1.6-1.6zM1361.1 557.8l1.6 1.6-1.6 1.6-1.6-1.6zM1363.9 557.8l1.6 1.6-1.6 1.6-1.6-1.6zM1288.3 560.6l1.6 1.6-1.6 1.6-1.6-1.6zM1327.5 560.6l1.6 1.6-1.6 1.6-1.6-1.6zM1361.1 560.6l1.6 1.6-1.6 1.6-1.6-1.6zM1363.9 560.6l1.6 1.6-1.6 1.6-1.6-1.6zM1285.5 563.4l1.6 1.6-1.6 1.6-1.6-1.6zM1291.1 563.4l1.6 1.6-1.6 1.6-1.6-1.6zM1293.9 563.4l1.6 1.6-1.6 1.6-1.6-1.6zM1296.7 563.4l1.6 1.6-1.6 1.6-1.6-1.6zM1361.1 563.4l1.6 1.6-1.6 1.6-1.6-1.6zM1293.9 566.2l1.6 1.6-1.6 1.6-1.6-1.6zM1296.7 566.2l1.6 1.6-1.6 1.6-1.6-1.6zM1299.5 566.2l1.6 1.6-1.6 1.6-1.6-1.6zM1361.1 566.2l1.6 1.6-1.6 1.6-1.6-1.6zM1279.9 569l1.6 1.6-1.6 1.6-1.6-1.6zM1291.1 569l1.6 1.6-1.6 1.6-1.6-1.6zM1293.9 569l1.6 1.6-1.6 1.6-1.6-1.6zM1296.7 569l1.6 1.6-1.6 1.6-1.6-1.6zM1299.5 569l1.6 1.6-1.6 1.6-1.6-1.6zM1302.3 569l1.6 1.6-1.6 1.6-1.6-1.6zM1310.7 569l1.6 1.6-1.6 1.6-1.6-1.6zM1293.9 571.8l1.6 1.6-1.6 1.6-1.6-1.6zM1302.3 571.8l1.6 1.6-1.6 1.6-1.6-1.6zM1305.1 571.8l1.6 1.6-1.6 1.6-1.6-1.6zM1321.9 571.8l1.6 1.6-1.6 1.6-1.6-1.6zM1341.5 571.8l1.6 1.6-1.6 1.6-1.6-1.6zM1279.9 574.6l1.6 1.6-1.6 1.6-1.6-1.6zM1282.7 574.6l1.6 1.6-1.6 1.6-1.6-1.6zM1285.5 574.6l1.6 1.6-1.6 1.6-1.6-1.6zM1310.7 574.6l1.6 1.6-1.6 1.6-1.6-1.6zM1313.5 574.6l1.6 1.6-1.6 1.6-1.6-1.6zM1316.3 574.6l1.6 1.6-1.6 1.6-1.6-1.6zM1319.1 574.6l1.6 1.6-1.6 1.6-1.6-1.6zM1321.9 574.6l1.6 1.6-1.6 1.6-1.6-1.6zM1344.3 574.6l1.6 1.6-1.6 1.6-1.6-1.6zM1282.7 577.4l1.6 1.6-1.6 1.6-1.6-1.6zM1285.5 577.4l1.6 1.6-1.6 1.6-1.6-1.6zM1288.3 577.4l1.6 1.6-1.6 1.6-1.6-1.6zM1313.5 577.4l1.6 1.6-1.6 1.6-1.6-1.6zM1319.1 577.4l1.6 1.6-1.6 1.6-1.6-1.6zM1347.1 577.4l1.6 1.6-1.6 1.6-1.6-1.6zM1349.9 577.4l1.6 1.6-1.6 1.6-1.6-1.6zM1352.7 577.4l1.6 1.6-1.6 1.6-1.6-1.6zM1355.5 577.4l1.6 1.6-1.6 1.6-1.6-1.6zM1285.5 580.2l1.6 1.6-1.6 1.6-1.6-1.6zM1288.3 580.2l1.6 1.6-1.6 1.6-1.6-1.6zM1291.1 580.2l1.6 1.6-1.6 1.6-1.6-1.6zM1293.9 580.2l1.6 1.6-1.6 1.6-1.6-1.6zM1344.3 580.2l1.6 1.6-1.6 1.6-1.6-1.6zM1347.1 580.2l1.6 1.6-1.6 1.6-1.6-1.6zM1349.9 580.2l1.6 1.6-1.6 1.6-1.6-1.6zM1352.7 580.2l1.6 1.6-1.6 1.6-1.6-1.6zM1363.9 580.2l1.6 1.6-1.6 1.6-1.6-1.6zM1288.3 583l1.6 1.6-1.6 1.6-1.6-1.6zM1291.1 583l1.6 1.6-1.6 1.6-1.6-1.6zM1313.5 583l1.6 1.6-1.6 1.6-1.6-1.6zM1344.3 583l1.6 1.6-1.6 1.6-1.6-1.6zM1347.1 583l1.6 1.6-1.6 1.6-1.6-1.6zM1349.9 583l1.6 1.6-1.6 1.6-1.6-1.6zM1352.7 583l1.6 1.6-1.6 1.6-1.6-1.6zM1291.1 585.8l1.6 1.6-1.6 1.6-1.6-1.6zM1293.9 585.8l1.6 1.6-1.6 1.6-1.6-1.6zM1313.5 585.8l1.6 1.6-1.6 1.6-1.6-1.6zM1341.5 585.8l1.6 1.6-1.6 1.6-1.6-1.6zM1344.3 585.8l1.6 1.6-1.6 1.6-1.6-1.6zM1347.1 585.8l1.6 1.6-1.6 1.6-1.6-1.6zM1355.5 585.8l1.6 1.6-1.6 1.6-1.6-1.6zM1363.9 585.8l1.6 1.6-1.6 1.6-1.6-1.6zM1293.9 588.6l1.6 1.6-1.6 1.6-1.6-1.6zM1296.7 588.6l1.6 1.6-1.6 1.6-1.6-1.6zM1338.7 588.6l1.6 1.6-1.6 1.6-1.6-1.6zM1341.5 588.6l1.6 1.6-1.6 1.6-1.6-1.6zM1344.3 588.6l1.6 1.6-1.6 1.6-1.6-1.6zM1352.7 588.6l1.6 1.6-1.6 1.6-1.6-1.6zM1363.9 588.6l1.6 1.6-1.6 1.6-1.6-1.6zM1293.9 591.4l1.6 1.6-1.6 1.6-1.6-1.6zM1296.7 591.4l1.6 1.6-1.6 1.6-1.6-1.6zM1299.5 591.4l1.6 1.6-1.6 1.6-1.6-1.6zM1316.3 591.4l1.6 1.6-1.6 1.6-1.6-1.6zM1335.9 591.4l1.6 1.6-1.6 1.6-1.6-1.6zM1338.7 591.4l1.6 1.6-1.6 1.6-1.6-1.6zM1341.5 591.4l1.6 1.6-1.6 1.6-1.6-1.6zM1355.5 591.4l1.6 1.6-1.6 1.6-1.6-1.6zM1358.3 591.4l1.6 1.6-1.6 1.6-1.6-1.6zM1361.1 591.4l1.6 1.6-1.6 1.6-1.6-1.6zM1296.7 594.2l1.6 1.6-1.6 1.6-1.6-1.6zM1319.1 594.2l1.6 1.6-1.6 1.6-1.6-1.6zM1321.9 594.2l1.6 1.6-1.6 1.6-1.6-1.6zM1355.5 594.2l1.6 1.6-1.6 1.6-1.6-1.6zM1358.3 594.2l1.6 1.6-1.6 1.6-1.6-1.6zM1361.1 594.2l1.6 1.6-1.6 1.6-1.6-1.6zM1293.9 597l1.6 1.6-1.6 1.6-1.6-1.6zM1296.7 597l1.6 1.6-1.6 1.6-1.6-1.6zM1310.7 597l1.6 1.6-1.6 1.6-1.6-1.6zM1321.9 597l1.6 1.6-1.6 1.6-1.6-1.6zM1324.7 597l1.6 1.6-1.6 1.6-1.6-1.6zM1361.1 597l1.6 1.6-1.6 1.6-1.6-1.6zM1293.9 599.8l1.6 1.6-1.6 1.6-1.6-1.6zM1296.7 599.8l1.6 1.6-1.6 1.6-1.6-1.6zM1307.9 599.8l1.6 1.6-1.6 1.6-1.6-1.6zM1316.3 599.8l1.6 1.6-1.6 1.6-1.6-1.6zM1324.7 599.8l1.6 1.6-1.6 1.6-1.6-1.6zM1327.5 599.8l1.6 1.6-1.6 1.6-1.6-1.6zM1338.7 599.8l1.6 1.6-1.6 1.6-1.6-1.6zM1293.9 602.6l1.6 1.6-1.6 1.6-1.6-1.6zM1296.7 602.6l1.6 1.6-1.6 1.6-1.6-1.6zM1313.5 602.6l1.6 1.6-1.6 1.6-1.6-1.6zM1327.5 602.6l1.6 1.6-1.6 1.6-1.6-1.6zM1330.3 602.6l1.6 1.6-1.6 1.6-1.6-1.6zM1347.1 602.6l1.6 1.6-1.6 1.6-1.6-1.6zM1291.1 605.4l1.6 1.6-1.6 1.6-1.6-1.6zM1293.9 605.4l1.6 1.6-1.6 1.6-1.6-1.6zM1296.7 605.4l1.6 1.6-1.6 1.6-1.6-1.6zM1302.3 605.4l1.6 1.6-1.6 1.6-1.6-1.6zM1319.1 605.4l1.6 1.6-1.6 1.6-1.6-1.6zM1321.9 605.4l1.6 1.6-1.6 1.6-1.6-1.6zM1324.7 605.4l1.6 1.6-1.6 1.6-1.6-1.6zM1327.5 605.4l1.6 1.6-1.6 1.6-1.6-1.6zM1330.3 605.4l1.6 1.6-1.6 1.6-1.6-1.6zM1333.1 605.4l1.6 1.6-1.6 1.6-1.6-1.6zM1338.7 605.4l1.6 1.6-1.6 1.6-1.6-1.6zM1341.5 605.4l1.6 1.6-1.6 1.6-1.6-1.6zM1344.3 605.4l1.6 1.6-1.6 1.6-1.6-1.6zM1347.1 605.4l1.6 1.6-1.6 1.6-1.6-1.6zM1349.9 605.4l1.6 1.6-1.6 1.6-1.6-1.6zM1358.3 605.4l1.6 1.6-1.6 1.6-1.6-1.6zM1361.1 605.4l1.6 1.6-1.6 1.6-1.6-1.6zM1363.9 605.4l1.6 1.6-1.6 1.6-1.6-1.6z" fill="#808080"/><path d="M1288.3 524.2l1.6 1.6-1.6 1.6-1.6-1.6zM1291.1 524.2l1.6 1.6-1.6 1.6-1.6-1.6zM1293.9 524.2l1.6 1.6-1.6 1.6-1.6-1.6zM1310.7 527l1.6 1.6-1.6 1.6-1.6-1.6zM1313.5 527l1.6 1.6-1.6 1.6-1.6-1.6zM1307.9 529.8l1.6 1.6-1.6 1.6-1.6-1.6zM1310.7 529.8l1.6 1.6-1.6 1.6-1.6-1.6zM1291.1 543.8l1.6 1.6-1.6 1.6-1.6-1.6zM1293.9 543.8l1.6 1.6-1.6 1.6-1.6-1.6zM1291.1 546.6l1.6 1.6-1.6 1.6-1.6-1.6zM1293.9 546.6l1.6 1.6-1.6 1.6-1.6-1.6zM1291.1 549.4l1.6 1.6-1.6 1.6-1.6-1.6zM1285.5 552.2l1.6 1.6-1.6 1.6-1.6-1.6zM1288.3 552.2l1.6 1.6-1.6 1.6-1.6-1.6zM1291.1 552.2l1.6 1.6-1.6 1.6-1.6-1.6zM1361.1 552.2l1.6 1.6-1.6 1.6-1.6-1.6zM1285.5 555l1.6 1.6-1.6 1.6-1.6-1.6zM1288.3 555l1.6 1.6-1.6 1.6-1.6-1.6zM1291.1 555l1.6 1.6-1.6 1.6-1.6-1.6zM1363.9 555l1.6 1.6-1.6 1.6-1.6-1.6zM1285.5 557.8l1.6 1.6-1.6 1.6-1.6-1.6zM1288.3 557.8l1.6 1.6-1.6 1.6-1.6-1.6zM1291.1 557.8l1.6 1.6-1.6 1.6-1.6-1.6zM1313.5 557.8l1.6 1.6-1.6 1.6-1.6-1.6zM1316.3 557.8l1.6 1.6-1.6 1.6-1.6-1.6zM1319.1 557.8l1.6 1.6-1.6 1.6-1.6-1.6zM1313.5 560.6l1.6 1.6-1.6 1.6-1.6-1.6zM1316.3 560.6l1.6 1.6-1.6 1.6-1.6-1.6zM1319.1 560.6l1.6 1.6-1.6 1.6-1.6-1.6zM1299.5 563.4l1.6 1.6-1.6 1.6-1.6-1.6zM1302.3 563.4l1.6 1.6-1.6 1.6-1.6-1.6zM1302.3 566.2l1.6 1.6-1.6 1.6-1.6-1.6zM1305.1 566.2l1.6 1.6-1.6 1.6-1.6-1.6zM1307.9 566.2l1.6 1.6-1.6 1.6-1.6-1.6zM1310.7 566.2l1.6 1.6-1.6 1.6-1.6-1.6zM1335.9 566.2l1.6 1.6-1.6 1.6-1.6-1.6zM1338.7 566.2l1.6 1.6-1.6 1.6-1.6-1.6zM1341.5 566.2l1.6 1.6-1.6 1.6-1.6-1.6zM1305.1 569l1.6 1.6-1.6 1.6-1.6-1.6zM1307.9 569l1.6 1.6-1.6 1.6-1.6-1.6zM1338.7 569l1.6 1.6-1.6 1.6-1.6-1.6zM1341.5 569l1.6 1.6-1.6 1.6-1.6-1.6zM1344.3 569l1.6 1.6-1.6 1.6-1.6-1.6zM1296.7 580.2l1.6 1.6-1.6 1.6-1.6-1.6zM1299.5 580.2l1.6 1.6-1.6 1.6-1.6-1.6zM1299.5 583l1.6 1.6-1.6 1.6-1.6-1.6zM1302.3 583l1.6 1.6-1.6 1.6-1.6-1.6zM1338.7 585.8l1.6 1.6-1.6 1.6-1.6-1.6zM1361.1 588.6l1.6 1.6-1.6 1.6-1.6-1.6zM1363.9 591.4l1.6 1.6-1.6 1.6-1.6-1.6zM1299.5 594.2l1.6 1.6-1.6 1.6-1.6-1.6zM1302.3 594.2l1.6 1.6-1.6 1.6-1.6-1.6zM1299.5 597l1.6 1.6-1.6 1.6-1.6-1.6zM1302.3 597l1.6 1.6-1.6 1.6-1.6-1.6z" fill="#00707c"/><rect x="1302" y="527" width="1.5" height="74" fill="#fdd838" shape-rendering="crispEdges"/><rect x="1336" y="527" width="1.5" height="74" fill="#fdd838" shape-rendering="crispEdges"/><rect x="1280" y="571" width="82" height="1.2" fill="#fdd838" shape-rendering="crispEdges"/><rect x="1276.5" y="514.5" width="89" height="94" fill="none" stroke="#f2f2f2" stroke-width="1" shape-rendering="crispEdges"/>
<path d="M1390.5 518h3v1h-3zM1391.5 517h1v3h-1zM1390.5 521.9h3v1h-3zM1391.5 520.9h1v3h-1zM1390.5 525.8h3v1h-3zM1391.5 524.8h1v3h-1zM1390.5 529.7h3v1h-3zM1391.5 528.7h1v3h-1zM1394.4 518h3v1h-3zM1395.4 517h1v3h-1zM1394.4 529.7h3v1h-3zM1395.4 528.7h1v3h-1zM1398.3 518h3v1h-3zM1399.3 517h1v3h-1zM1398.3 529.7h3v1h-3zM1399.3 528.7h1v3h-1zM1402.2 518h3v1h-3zM1403.2 517h1v3h-1zM1402.2 521.9h3v1h-3zM1403.2 520.9h1v3h-1zM1402.2 525.8h3v1h-3zM1403.2 524.8h1v3h-1zM1402.2 529.7h3v1h-3zM1403.2 528.7h1v3h-1zM1406.1 518h3v1h-3zM1407.1 517h1v3h-1zM1406.1 521.9h3v1h-3zM1407.1 520.9h1v3h-1zM1406.1 525.8h3v1h-3zM1407.1 524.8h1v3h-1zM1406.1 529.7h3v1h-3zM1407.1 528.7h1v3h-1zM1410 518h3v1h-3zM1411 517h1v3h-1zM1410 521.9h3v1h-3zM1411 520.9h1v3h-1zM1410 525.8h3v1h-3zM1411 524.8h1v3h-1zM1410 529.7h3v1h-3zM1411 528.7h1v3h-1zM1390.5 541.4h3v1h-3zM1391.5 540.4h1v3h-1zM1390.5 545.3h3v1h-3zM1391.5 544.3h1v3h-1zM1390.5 549.2h3v1h-3zM1391.5 548.2h1v3h-1zM1390.5 553.1h3v1h-3zM1391.5 552.1h1v3h-1zM1394.4 541.4h3v1h-3zM1395.4 540.4h1v3h-1zM1394.4 545.3h3v1h-3zM1395.4 544.3h1v3h-1zM1394.4 549.2h3v1h-3zM1395.4 548.2h1v3h-1zM1394.4 553.1h3v1h-3zM1395.4 552.1h1v3h-1zM1398.3 541.4h3v1h-3zM1399.3 540.4h1v3h-1zM1398.3 553.1h3v1h-3zM1399.3 552.1h1v3h-1zM1402.2 541.4h3v1h-3zM1403.2 540.4h1v3h-1zM1402.2 553.1h3v1h-3zM1403.2 552.1h1v3h-1zM1406.1 541.4h3v1h-3zM1407.1 540.4h1v3h-1zM1406.1 545.3h3v1h-3zM1407.1 544.3h1v3h-1zM1406.1 549.2h3v1h-3zM1407.1 548.2h1v3h-1zM1406.1 553.1h3v1h-3zM1407.1 552.1h1v3h-1zM1410 541.4h3v1h-3zM1411 540.4h1v3h-1zM1410 545.3h3v1h-3zM1411 544.3h1v3h-1zM1410 549.2h3v1h-3zM1411 548.2h1v3h-1zM1410 553.1h3v1h-3zM1411 552.1h1v3h-1zM1402.2 557h3v1h-3zM1403.2 556h1v3h-1zM1402.2 560.9h3v1h-3zM1403.2 559.9h1v3h-1zM1402.2 564.8h3v1h-3zM1403.2 563.8h1v3h-1zM1406.1 557h3v1h-3zM1407.1 556h1v3h-1zM1406.1 560.9h3v1h-3zM1407.1 559.9h1v3h-1zM1406.1 564.8h3v1h-3zM1407.1 563.8h1v3h-1zM1410 557h3v1h-3zM1411 556h1v3h-1zM1410 560.9h3v1h-3zM1411 559.9h1v3h-1zM1410 564.8h3v1h-3zM1411 563.8h1v3h-1zM1390.5 568.7h3v1h-3zM1391.5 567.7h1v3h-1zM1390.5 572.6h3v1h-3zM1391.5 571.6h1v3h-1zM1390.5 576.5h3v1h-3zM1391.5 575.5h1v3h-1zM1390.5 580.4h3v1h-3zM1391.5 579.4h1v3h-1zM1394.4 568.7h3v1h-3zM1395.4 567.7h1v3h-1zM1394.4 572.6h3v1h-3zM1395.4 571.6h1v3h-1zM1394.4 576.5h3v1h-3zM1395.4 575.5h1v3h-1zM1394.4 580.4h3v1h-3zM1395.4 579.4h1v3h-1zM1398.3 568.7h3v1h-3zM1399.3 567.7h1v3h-1zM1398.3 580.4h3v1h-3zM1399.3 579.4h1v3h-1zM1402.2 568.7h3v1h-3zM1403.2 567.7h1v3h-1zM1402.2 580.4h3v1h-3zM1403.2 579.4h1v3h-1zM1406.1 568.7h3v1h-3zM1407.1 567.7h1v3h-1zM1406.1 580.4h3v1h-3zM1407.1 579.4h1v3h-1zM1410 568.7h3v1h-3zM1411 567.7h1v3h-1zM1410 572.6h3v1h-3zM1411 571.6h1v3h-1zM1410 576.5h3v1h-3zM1411 575.5h1v3h-1zM1410 580.4h3v1h-3zM1411 579.4h1v3h-1zM1390.5 592.1h3v1h-3zM1391.5 591.1h1v3h-1zM1390.5 596h3v1h-3zM1391.5 595h1v3h-1zM1390.5 599.9h3v1h-3zM1391.5 598.9h1v3h-1zM1390.5 603.8h3v1h-3zM1391.5 602.8h1v3h-1zM1394.4 592.1h3v1h-3zM1395.4 591.1h1v3h-1zM1394.4 603.8h3v1h-3zM1395.4 602.8h1v3h-1zM1398.3 592.1h3v1h-3zM1399.3 591.1h1v3h-1zM1398.3 603.8h3v1h-3zM1399.3 602.8h1v3h-1zM1402.2 592.1h3v1h-3zM1403.2 591.1h1v3h-1zM1402.2 596h3v1h-3zM1403.2 595h1v3h-1zM1402.2 599.9h3v1h-3zM1403.2 598.9h1v3h-1zM1402.2 603.8h3v1h-3zM1403.2 602.8h1v3h-1zM1406.1 592.1h3v1h-3zM1407.1 591.1h1v3h-1zM1406.1 596h3v1h-3zM1407.1 595h1v3h-1zM1406.1 599.9h3v1h-3zM1407.1 598.9h1v3h-1zM1406.1 603.8h3v1h-3zM1407.1 602.8h1v3h-1zM1410 592.1h3v1h-3zM1411 591.1h1v3h-1zM1410 596h3v1h-3zM1411 595h1v3h-1zM1410 599.9h3v1h-3zM1411 598.9h1v3h-1zM1410 603.8h3v1h-3zM1411 602.8h1v3h-1zM1386.6 549.2h3v1h-3zM1387.6 548.2h1v3h-1zM1386.6 568.7h3v1h-3zM1387.6 567.7h1v3h-1zM1429.5 518h3v1h-3zM1430.5 517h1v3h-1zM1429.5 521.9h3v1h-3zM1430.5 520.9h1v3h-1zM1429.5 525.8h3v1h-3zM1430.5 524.8h1v3h-1zM1429.5 529.7h3v1h-3zM1430.5 528.7h1v3h-1zM1429.5 533.6h3v1h-3zM1430.5 532.6h1v3h-1zM1429.5 537.5h3v1h-3zM1430.5 536.5h1v3h-1zM1429.5 541.4h3v1h-3zM1430.5 540.4h1v3h-1zM1429.5 545.3h3v1h-3zM1430.5 544.3h1v3h-1zM1429.5 549.2h3v1h-3zM1430.5 548.2h1v3h-1zM1429.5 553.1h3v1h-3zM1430.5 552.1h1v3h-1zM1433.4 518h3v1h-3zM1434.4 517h1v3h-1zM1433.4 521.9h3v1h-3zM1434.4 520.9h1v3h-1zM1433.4 525.8h3v1h-3zM1434.4 524.8h1v3h-1zM1433.4 529.7h3v1h-3zM1434.4 528.7h1v3h-1zM1433.4 533.6h3v1h-3zM1434.4 532.6h1v3h-1zM1437.3 518h3v1h-3zM1438.3 517h1v3h-1zM1437.3 521.9h3v1h-3zM1438.3 520.9h1v3h-1zM1437.3 525.8h3v1h-3zM1438.3 524.8h1v3h-1zM1437.3 529.7h3v1h-3zM1438.3 528.7h1v3h-1zM1437.3 533.6h3v1h-3zM1438.3 532.6h1v3h-1zM1437.3 537.5h3v1h-3zM1438.3 536.5h1v3h-1zM1437.3 541.4h3v1h-3zM1438.3 540.4h1v3h-1zM1437.3 545.3h3v1h-3zM1438.3 544.3h1v3h-1zM1437.3 549.2h3v1h-3zM1438.3 548.2h1v3h-1zM1437.3 553.1h3v1h-3zM1438.3 552.1h1v3h-1zM1441.2 518h3v1h-3zM1442.2 517h1v3h-1zM1441.2 521.9h3v1h-3zM1442.2 520.9h1v3h-1zM1441.2 525.8h3v1h-3zM1442.2 524.8h1v3h-1zM1441.2 529.7h3v1h-3zM1442.2 528.7h1v3h-1zM1441.2 533.6h3v1h-3zM1442.2 532.6h1v3h-1zM1441.2 537.5h3v1h-3zM1442.2 536.5h1v3h-1zM1441.2 541.4h3v1h-3zM1442.2 540.4h1v3h-1zM1441.2 545.3h3v1h-3zM1442.2 544.3h1v3h-1zM1441.2 549.2h3v1h-3zM1442.2 548.2h1v3h-1zM1441.2 553.1h3v1h-3zM1442.2 552.1h1v3h-1zM1425.6 553.1h3v1h-3zM1426.6 552.1h1v3h-1zM1425.6 557h3v1h-3zM1426.6 556h1v3h-1zM1425.6 560.9h3v1h-3zM1426.6 559.9h1v3h-1zM1425.6 564.8h3v1h-3zM1426.6 563.8h1v3h-1zM1429.5 564.8h3v1h-3zM1430.5 563.8h1v3h-1zM1433.4 564.8h3v1h-3zM1434.4 563.8h1v3h-1zM1437.3 557h3v1h-3zM1438.3 556h1v3h-1zM1437.3 560.9h3v1h-3zM1438.3 559.9h1v3h-1zM1437.3 564.8h3v1h-3zM1438.3 563.8h1v3h-1zM1441.2 557h3v1h-3zM1442.2 556h1v3h-1zM1441.2 560.9h3v1h-3zM1442.2 559.9h1v3h-1zM1441.2 564.8h3v1h-3zM1442.2 563.8h1v3h-1zM1445.1 553.1h3v1h-3zM1446.1 552.1h1v3h-1zM1445.1 557h3v1h-3zM1446.1 556h1v3h-1zM1445.1 560.9h3v1h-3zM1446.1 559.9h1v3h-1zM1445.1 564.8h3v1h-3zM1446.1 563.8h1v3h-1zM1429.5 568.7h3v1h-3zM1430.5 567.7h1v3h-1zM1429.5 572.6h3v1h-3zM1430.5 571.6h1v3h-1zM1429.5 576.5h3v1h-3zM1430.5 575.5h1v3h-1zM1429.5 580.4h3v1h-3zM1430.5 579.4h1v3h-1zM1429.5 584.3h3v1h-3zM1430.5 583.3h1v3h-1zM1429.5 588.2h3v1h-3zM1430.5 587.2h1v3h-1zM1429.5 592.1h3v1h-3zM1430.5 591.1h1v3h-1zM1429.5 596h3v1h-3zM1430.5 595h1v3h-1zM1429.5 599.9h3v1h-3zM1430.5 598.9h1v3h-1zM1429.5 603.8h3v1h-3zM1430.5 602.8h1v3h-1zM1433.4 588.2h3v1h-3zM1434.4 587.2h1v3h-1zM1433.4 592.1h3v1h-3zM1434.4 591.1h1v3h-1zM1433.4 596h3v1h-3zM1434.4 595h1v3h-1zM1433.4 599.9h3v1h-3zM1434.4 598.9h1v3h-1zM1433.4 603.8h3v1h-3zM1434.4 602.8h1v3h-1zM1437.3 588.2h3v1h-3zM1438.3 587.2h1v3h-1zM1437.3 592.1h3v1h-3zM1438.3 591.1h1v3h-1zM1437.3 596h3v1h-3zM1438.3 595h1v3h-1zM1437.3 599.9h3v1h-3zM1438.3 598.9h1v3h-1zM1437.3 603.8h3v1h-3zM1438.3 602.8h1v3h-1zM1441.2 568.7h3v1h-3zM1442.2 567.7h1v3h-1zM1441.2 572.6h3v1h-3zM1442.2 571.6h1v3h-1zM1441.2 576.5h3v1h-3zM1442.2 575.5h1v3h-1zM1441.2 580.4h3v1h-3zM1442.2 579.4h1v3h-1zM1441.2 584.3h3v1h-3zM1442.2 583.3h1v3h-1zM1441.2 588.2h3v1h-3zM1442.2 587.2h1v3h-1zM1441.2 592.1h3v1h-3zM1442.2 591.1h1v3h-1zM1441.2 596h3v1h-3zM1442.2 595h1v3h-1zM1441.2 599.9h3v1h-3zM1442.2 598.9h1v3h-1zM1441.2 603.8h3v1h-3zM1442.2 602.8h1v3h-1z" fill="#fdd838" shape-rendering="crispEdges"/>
<path d="M1394.4 521.9h3v1h-3zM1395.4 520.9h1v3h-1zM1394.4 525.8h3v1h-3zM1395.4 524.8h1v3h-1zM1398.3 521.9h3v1h-3zM1399.3 520.9h1v3h-1zM1398.3 525.8h3v1h-3zM1399.3 524.8h1v3h-1zM1398.3 545.3h3v1h-3zM1399.3 544.3h1v3h-1zM1398.3 549.2h3v1h-3zM1399.3 548.2h1v3h-1zM1402.2 545.3h3v1h-3zM1403.2 544.3h1v3h-1zM1402.2 549.2h3v1h-3zM1403.2 548.2h1v3h-1zM1398.3 572.6h3v1h-3zM1399.3 571.6h1v3h-1zM1398.3 576.5h3v1h-3zM1399.3 575.5h1v3h-1zM1402.2 572.6h3v1h-3zM1403.2 571.6h1v3h-1zM1402.2 576.5h3v1h-3zM1403.2 575.5h1v3h-1zM1406.1 572.6h3v1h-3zM1407.1 571.6h1v3h-1zM1406.1 576.5h3v1h-3zM1407.1 575.5h1v3h-1zM1394.4 596h3v1h-3zM1395.4 595h1v3h-1zM1394.4 599.9h3v1h-3zM1395.4 598.9h1v3h-1zM1398.3 596h3v1h-3zM1399.3 595h1v3h-1zM1398.3 599.9h3v1h-3zM1399.3 598.9h1v3h-1zM1433.4 537.5h3v1h-3zM1434.4 536.5h1v3h-1zM1433.4 541.4h3v1h-3zM1434.4 540.4h1v3h-1zM1433.4 545.3h3v1h-3zM1434.4 544.3h1v3h-1zM1429.5 557h3v1h-3zM1430.5 556h1v3h-1zM1429.5 560.9h3v1h-3zM1430.5 559.9h1v3h-1zM1433.4 557h3v1h-3zM1434.4 556h1v3h-1zM1433.4 560.9h3v1h-3zM1434.4 559.9h1v3h-1zM1433.4 572.6h3v1h-3zM1434.4 571.6h1v3h-1zM1433.4 576.5h3v1h-3zM1434.4 575.5h1v3h-1zM1433.4 580.4h3v1h-3zM1434.4 579.4h1v3h-1zM1433.4 584.3h3v1h-3zM1434.4 583.3h1v3h-1zM1437.3 572.6h3v1h-3zM1438.3 571.6h1v3h-1zM1437.3 576.5h3v1h-3zM1438.3 575.5h1v3h-1zM1437.3 580.4h3v1h-3zM1438.3 579.4h1v3h-1zM1437.3 584.3h3v1h-3zM1438.3 583.3h1v3h-1z" fill="#808080" shape-rendering="crispEdges"/>
<path d="M1390.5 557h3v1h-3zM1391.5 556h1v3h-1zM1390.5 560.9h3v1h-3zM1391.5 559.9h1v3h-1zM1394.4 557h3v1h-3zM1395.4 556h1v3h-1zM1394.4 560.9h3v1h-3zM1395.4 559.9h1v3h-1zM1398.3 557h3v1h-3zM1399.3 556h1v3h-1zM1398.3 560.9h3v1h-3zM1399.3 559.9h1v3h-1zM1433.4 549.2h3v1h-3zM1434.4 548.2h1v3h-1zM1433.4 553.1h3v1h-3zM1434.4 552.1h1v3h-1zM1433.4 568.7h3v1h-3zM1434.4 567.7h1v3h-1zM1437.3 568.7h3v1h-3zM1438.3 567.7h1v3h-1z" fill="#00707c" shape-rendering="crispEdges"/>
<path d="M1241 435h1.2v16.5h-1.2zM1244.3 435h1.2v16.5h-1.2zM1247.6 435h1.2v16.5h-1.2zM1250.9 435h1.2v16.5h-1.2zM1254.2 435h1.2v16.5h-1.2zM1240 436h16.5v1.2h-16.5zM1240 439.3h16.5v1.2h-16.5zM1240 442.6h16.5v1.2h-16.5zM1240 445.9h16.5v1.2h-16.5zM1240 449.2h16.5v1.2h-16.5z" fill="#fdd838" shape-rendering="crispEdges"/><path d="M1246.6 449.2h3.3v1.2h-3.3zM1247.6 448.2h1.2v3.3h-1.2zM1243.3 436h3.3v1.2h-3.3zM1244.3 435h1.2v3.3h-1.2zM1249.9 445.9h3.3v1.2h-3.3zM1250.9 444.9h1.2v3.3h-1.2z" fill="#808080" shape-rendering="crispEdges"/><path d="M1238.5 439V453H1258V439" fill="none" stroke="#f2f2f2" stroke-width="1" shape-rendering="crispEdges"/>
<path d="M1315 442h1.2v16.5h-1.2zM1318.3 442h1.2v16.5h-1.2zM1321.6 442h1.2v16.5h-1.2zM1324.9 442h1.2v16.5h-1.2zM1328.2 442h1.2v16.5h-1.2zM1314 443h16.5v1.2h-16.5zM1314 446.3h16.5v1.2h-16.5zM1314 449.6h16.5v1.2h-16.5zM1314 452.9h16.5v1.2h-16.5zM1314 456.2h16.5v1.2h-16.5z" fill="#fdd838" shape-rendering="crispEdges"/><path d="M1323.9 456.2h3.3v1.2h-3.3zM1324.9 455.2h1.2v3.3h-1.2zM1317.3 452.9h3.3v1.2h-3.3zM1318.3 451.9h1.2v3.3h-1.2zM1320.6 449.6h3.3v1.2h-3.3zM1321.6 448.6h1.2v3.3h-1.2z" fill="#808080" shape-rendering="crispEdges"/><path d="M1312.5 446V460H1332V446" fill="none" stroke="#f2f2f2" stroke-width="1" shape-rendering="crispEdges"/>
<path d="M1229 540h1.2v23.1h-1.2zM1232.3 540h1.2v23.1h-1.2zM1235.6 540h1.2v23.1h-1.2zM1238.9 540h1.2v23.1h-1.2zM1242.2 540h1.2v23.1h-1.2zM1245.5 540h1.2v23.1h-1.2zM1228 541h19.8v1.2h-19.8zM1228 544.3h19.8v1.2h-19.8zM1228 547.6h19.8v1.2h-19.8zM1228 550.9h19.8v1.2h-19.8zM1228 554.2h19.8v1.2h-19.8zM1228 557.5h19.8v1.2h-19.8zM1228 560.8h19.8v1.2h-19.8z" fill="#fdd838" shape-rendering="crispEdges"/><path d="M1228 550.9h3.3v1.2h-3.3zM1229 549.9h1.2v3.3h-1.2zM1234.6 554.2h3.3v1.2h-3.3zM1235.6 553.2h1.2v3.3h-1.2zM1234.6 544.3h3.3v1.2h-3.3zM1235.6 543.3h1.2v3.3h-1.2zM1244.5 554.2h3.3v1.2h-3.3zM1245.5 553.2h1.2v3.3h-1.2zM1241.2 557.5h3.3v1.2h-3.3zM1242.2 556.5h1.2v3.3h-1.2z" fill="#808080" shape-rendering="crispEdges"/><path d="M1226.5 544V565H1249V544" fill="none" stroke="#f2f2f2" stroke-width="1" shape-rendering="crispEdges"/>
<path d="M1235 595h1.2v19.8h-1.2zM1238.3 595h1.2v19.8h-1.2zM1241.6 595h1.2v19.8h-1.2zM1244.9 595h1.2v19.8h-1.2zM1248.2 595h1.2v19.8h-1.2zM1251.5 595h1.2v19.8h-1.2zM1234 596h19.8v1.2h-19.8zM1234 599.3h19.8v1.2h-19.8zM1234 602.6h19.8v1.2h-19.8zM1234 605.9h19.8v1.2h-19.8zM1234 609.2h19.8v1.2h-19.8zM1234 612.5h19.8v1.2h-19.8z" fill="#fdd838" shape-rendering="crispEdges"/><path d="M1237.3 596h3.3v1.2h-3.3zM1238.3 595h1.2v3.3h-1.2zM1240.6 599.3h3.3v1.2h-3.3zM1241.6 598.3h1.2v3.3h-1.2zM1243.9 605.9h3.3v1.2h-3.3zM1244.9 604.9h1.2v3.3h-1.2zM1250.5 605.9h3.3v1.2h-3.3zM1251.5 604.9h1.2v3.3h-1.2z" fill="#808080" shape-rendering="crispEdges"/><path d="M1232.5 599V616H1255V599" fill="none" stroke="#f2f2f2" stroke-width="1" shape-rendering="crispEdges"/>
<path d="M576 337.5h10v8h-10zM529.5 350h4v4.5h-4zM529.5 357h4v4.5h-4zM564.5 372.4h1.6v2.2h-1.6zM564.5 388h1.6v2.2h-1.6zM567.283 372.4h1.6v2.2h-1.6zM567.283 388h1.6v2.2h-1.6zM570.067 372.4h1.6v2.2h-1.6zM570.067 388h1.6v2.2h-1.6zM572.85 372.4h1.6v2.2h-1.6zM572.85 388h1.6v2.2h-1.6zM575.633 372.4h1.6v2.2h-1.6zM575.633 388h1.6v2.2h-1.6zM578.417 372.4h1.6v2.2h-1.6zM578.417 388h1.6v2.2h-1.6zM563.8 373.1h2.2v1.6h-2.2zM579.7 373.1h2.2v1.6h-2.2zM563.8 375.833h2.2v1.6h-2.2zM579.7 375.833h2.2v1.6h-2.2zM563.8 378.567h2.2v1.6h-2.2zM579.7 378.567h2.2v1.6h-2.2zM563.8 381.3h2.2v1.6h-2.2zM579.7 381.3h2.2v1.6h-2.2zM563.8 384.033h2.2v1.6h-2.2zM579.7 384.033h2.2v1.6h-2.2zM563.8 386.767h2.2v1.6h-2.2zM579.7 386.767h2.2v1.6h-2.2zM624 412.3h1.6v2.2h-1.6zM624 424.5h1.6v2.2h-1.6zM627 412.3h1.6v2.2h-1.6zM627 424.5h1.6v2.2h-1.6zM630 412.3h1.6v2.2h-1.6zM630 424.5h1.6v2.2h-1.6zM633 412.3h1.6v2.2h-1.6zM633 424.5h1.6v2.2h-1.6zM623.3 413h2.2v1.6h-2.2zM634.5 413h2.2v1.6h-2.2zM623.3 415.6h2.2v1.6h-2.2zM634.5 415.6h2.2v1.6h-2.2zM623.3 418.2h2.2v1.6h-2.2zM634.5 418.2h2.2v1.6h-2.2zM623.3 420.8h2.2v1.6h-2.2zM634.5 420.8h2.2v1.6h-2.2zM623.3 423.4h2.2v1.6h-2.2zM634.5 423.4h2.2v1.6h-2.2zM643 385h10v5h-10zM643 394h10v5h-10zM613 361h8v4h-8zM613 368h8v4h-8zM610 379h5v4h-5zM610 385h5v4h-5zM658 441.8h10.5v7.2h-10.5zM496.3 428.598h3v1.2h-3zM511.8 428.598h3v1.2h-3zM496.3 431.463h3v1.2h-3zM511.8 431.463h3v1.2h-3zM496.3 434.327h3v1.2h-3zM511.8 434.327h3v1.2h-3zM496.3 437.192h3v1.2h-3zM511.8 437.192h3v1.2h-3zM496.3 440.056h3v1.2h-3zM511.8 440.056h3v1.2h-3zM496.3 442.921h3v1.2h-3zM511.8 442.921h3v1.2h-3zM496.3 445.785h3v1.2h-3zM511.8 445.785h3v1.2h-3zM496.3 448.65h3v1.2h-3zM511.8 448.65h3v1.2h-3zM496.3 451.515h3v1.2h-3zM511.8 451.515h3v1.2h-3zM496.3 454.379h3v1.2h-3zM511.8 454.379h3v1.2h-3zM496.3 457.244h3v1.2h-3zM511.8 457.244h3v1.2h-3zM496.3 460.108h3v1.2h-3zM511.8 460.108h3v1.2h-3zM496.3 462.973h3v1.2h-3zM511.8 462.973h3v1.2h-3zM496.3 465.837h3v1.2h-3zM511.8 465.837h3v1.2h-3zM499.3 421.8h4v2.5h-4zM507.8 421.8h4v2.5h-4zM685 427h1v2h-1zM685 429h1v2h-1zM690 434.5h1.2v3.5h-1.2zM690 448h1.2v3.5h-1.2zM689 427h1v2h-1zM689 429h1v2h-1zM693.6 434.5h1.2v3.5h-1.2zM693.6 448h1.2v3.5h-1.2zM693 427h1v2h-1zM693 429h1v2h-1zM697.2 434.5h1.2v3.5h-1.2zM697.2 448h1.2v3.5h-1.2zM697 427h1v2h-1zM697 429h1v2h-1zM700.8 434.5h1.2v3.5h-1.2zM700.8 448h1.2v3.5h-1.2zM702 427h1v2h-1zM702 429h1v2h-1zM704.4 434.5h1.2v3.5h-1.2zM704.4 448h1.2v3.5h-1.2zM706 427h1v2h-1zM706 429h1v2h-1zM708 434.5h1.2v3.5h-1.2zM708 448h1.2v3.5h-1.2zM710 427h1v2h-1zM710 429h1v2h-1zM711.6 434.5h1.2v3.5h-1.2zM711.6 448h1.2v3.5h-1.2zM714 427h1v2h-1zM714 429h1v2h-1zM715.2 434.5h1.2v3.5h-1.2zM715.2 448h1.2v3.5h-1.2zM718 427h1v2h-1zM718 429h1v2h-1zM718.8 434.5h1.2v3.5h-1.2zM718.8 448h1.2v3.5h-1.2zM722 427h1v2h-1zM722 429h1v2h-1zM722.4 434.5h1.2v3.5h-1.2zM722.4 448h1.2v3.5h-1.2zM727 427h1v2h-1zM727 429h1v2h-1zM726 434.5h1.2v3.5h-1.2zM726 448h1.2v3.5h-1.2zM731 427h1v2h-1zM731 429h1v2h-1zM729.6 434.5h1.2v3.5h-1.2zM729.6 448h1.2v3.5h-1.2zM735 427h1v2h-1zM735 429h1v2h-1zM733.2 434.5h1.2v3.5h-1.2zM733.2 448h1.2v3.5h-1.2zM733 435h4v3h-4zM733 447h4v3.5h-4zM580 509h18v8h-18zM580 523h18v8h-18zM651 495h4v11h-4zM658 495h4v11h-4zM651 513h5v10h-5zM661 513h5v10h-5zM651 528h5v10h-5zM661 528h5v10h-5zM651 543h5v10h-5zM661 543h5v10h-5zM722 493h6v10h-6zM735 493h6v10h-6zM729 508h8v4h-8zM729 516h8v4h-8zM721 525h5v10h-5zM731 525h5v10h-5zM672 534h9v6h-9zM672 546h9v6h-9zM687 537h9v6h-9zM687 549h9v6h-9zM729 543h11v4h-11zM729 551h11v4h-11zM712 569h6v15h-6zM724 569h6v15h-6zM884.5 460.5h1.6v2.2h-1.6zM884.5 481.2h1.6v2.2h-1.6zM887.571 460.5h1.6v2.2h-1.6zM887.571 481.2h1.6v2.2h-1.6zM890.643 460.5h1.6v2.2h-1.6zM890.643 481.2h1.6v2.2h-1.6zM893.714 460.5h1.6v2.2h-1.6zM893.714 481.2h1.6v2.2h-1.6zM896.786 460.5h1.6v2.2h-1.6zM896.786 481.2h1.6v2.2h-1.6zM899.857 460.5h1.6v2.2h-1.6zM899.857 481.2h1.6v2.2h-1.6zM902.929 460.5h1.6v2.2h-1.6zM902.929 481.2h1.6v2.2h-1.6zM883.8 461.2h2.2v1.6h-2.2zM904.5 461.2h2.2v1.6h-2.2zM883.8 464.271h2.2v1.6h-2.2zM904.5 464.271h2.2v1.6h-2.2zM883.8 467.343h2.2v1.6h-2.2zM904.5 467.343h2.2v1.6h-2.2zM883.8 470.414h2.2v1.6h-2.2zM904.5 470.414h2.2v1.6h-2.2zM883.8 473.486h2.2v1.6h-2.2zM904.5 473.486h2.2v1.6h-2.2zM883.8 476.557h2.2v1.6h-2.2zM904.5 476.557h2.2v1.6h-2.2zM883.8 479.629h2.2v1.6h-2.2zM904.5 479.629h2.2v1.6h-2.2zM767.9 549.6h1.6v2.2h-1.6zM767.9 598.2h1.6v2.2h-1.6zM770.944 549.6h1.6v2.2h-1.6zM770.944 598.2h1.6v2.2h-1.6zM773.989 549.6h1.6v2.2h-1.6zM773.989 598.2h1.6v2.2h-1.6zM777.033 549.6h1.6v2.2h-1.6zM777.033 598.2h1.6v2.2h-1.6zM780.078 549.6h1.6v2.2h-1.6zM780.078 598.2h1.6v2.2h-1.6zM783.122 549.6h1.6v2.2h-1.6zM783.122 598.2h1.6v2.2h-1.6zM786.167 549.6h1.6v2.2h-1.6zM786.167 598.2h1.6v2.2h-1.6zM789.211 549.6h1.6v2.2h-1.6zM789.211 598.2h1.6v2.2h-1.6zM792.256 549.6h1.6v2.2h-1.6zM792.256 598.2h1.6v2.2h-1.6zM767.2 550.3h2.2v1.6h-2.2zM793.8 550.3h2.2v1.6h-2.2zM767.2 553.387h2.2v1.6h-2.2zM793.8 553.387h2.2v1.6h-2.2zM767.2 556.475h2.2v1.6h-2.2zM793.8 556.475h2.2v1.6h-2.2zM767.2 559.562h2.2v1.6h-2.2zM793.8 559.562h2.2v1.6h-2.2zM767.2 562.65h2.2v1.6h-2.2zM793.8 562.65h2.2v1.6h-2.2zM767.2 565.737h2.2v1.6h-2.2zM793.8 565.737h2.2v1.6h-2.2zM767.2 568.825h2.2v1.6h-2.2zM793.8 568.825h2.2v1.6h-2.2zM767.2 571.912h2.2v1.6h-2.2zM793.8 571.912h2.2v1.6h-2.2zM767.2 575h2.2v1.6h-2.2zM793.8 575h2.2v1.6h-2.2zM767.2 578.087h2.2v1.6h-2.2zM793.8 578.087h2.2v1.6h-2.2zM767.2 581.175h2.2v1.6h-2.2zM793.8 581.175h2.2v1.6h-2.2zM767.2 584.262h2.2v1.6h-2.2zM793.8 584.262h2.2v1.6h-2.2zM767.2 587.35h2.2v1.6h-2.2zM793.8 587.35h2.2v1.6h-2.2zM767.2 590.438h2.2v1.6h-2.2zM793.8 590.438h2.2v1.6h-2.2zM767.2 593.525h2.2v1.6h-2.2zM793.8 593.525h2.2v1.6h-2.2zM767.2 596.612h2.2v1.6h-2.2zM793.8 596.612h2.2v1.6h-2.2zM868.2 535.6h1.6v2.2h-1.6zM868.2 573.8h1.6v2.2h-1.6zM871.236 535.6h1.6v2.2h-1.6zM871.236 573.8h1.6v2.2h-1.6zM874.271 535.6h1.6v2.2h-1.6zM874.271 573.8h1.6v2.2h-1.6zM877.307 535.6h1.6v2.2h-1.6zM877.307 573.8h1.6v2.2h-1.6zM880.343 535.6h1.6v2.2h-1.6zM880.343 573.8h1.6v2.2h-1.6zM883.379 535.6h1.6v2.2h-1.6zM883.379 573.8h1.6v2.2h-1.6zM886.414 535.6h1.6v2.2h-1.6zM886.414 573.8h1.6v2.2h-1.6zM889.45 535.6h1.6v2.2h-1.6zM889.45 573.8h1.6v2.2h-1.6zM892.486 535.6h1.6v2.2h-1.6zM892.486 573.8h1.6v2.2h-1.6zM895.521 535.6h1.6v2.2h-1.6zM895.521 573.8h1.6v2.2h-1.6zM898.557 535.6h1.6v2.2h-1.6zM898.557 573.8h1.6v2.2h-1.6zM901.593 535.6h1.6v2.2h-1.6zM901.593 573.8h1.6v2.2h-1.6zM904.629 535.6h1.6v2.2h-1.6zM904.629 573.8h1.6v2.2h-1.6zM907.664 535.6h1.6v2.2h-1.6zM907.664 573.8h1.6v2.2h-1.6zM867.5 536.3h2.2v1.6h-2.2zM909.2 536.3h2.2v1.6h-2.2zM867.5 539.3h2.2v1.6h-2.2zM909.2 539.3h2.2v1.6h-2.2zM867.5 542.3h2.2v1.6h-2.2zM909.2 542.3h2.2v1.6h-2.2zM867.5 545.3h2.2v1.6h-2.2zM909.2 545.3h2.2v1.6h-2.2zM867.5 548.3h2.2v1.6h-2.2zM909.2 548.3h2.2v1.6h-2.2zM867.5 551.3h2.2v1.6h-2.2zM909.2 551.3h2.2v1.6h-2.2zM867.5 554.3h2.2v1.6h-2.2zM909.2 554.3h2.2v1.6h-2.2zM867.5 557.3h2.2v1.6h-2.2zM909.2 557.3h2.2v1.6h-2.2zM867.5 560.3h2.2v1.6h-2.2zM909.2 560.3h2.2v1.6h-2.2zM867.5 563.3h2.2v1.6h-2.2zM909.2 563.3h2.2v1.6h-2.2zM867.5 566.3h2.2v1.6h-2.2zM909.2 566.3h2.2v1.6h-2.2zM867.5 569.3h2.2v1.6h-2.2zM909.2 569.3h2.2v1.6h-2.2zM867.5 572.3h2.2v1.6h-2.2zM909.2 572.3h2.2v1.6h-2.2zM837 586h4v8h-4zM842 586h4v8h-4zM853 586h4v8h-4zM858 586h4v8h-4zM871 586h5v8h-5zM881 586h5v8h-5zM894 578h7v5h-7zM894 586h7v5h-7zM929 490.3h1.6v2.2h-1.6zM929 501.5h1.6v2.2h-1.6zM931.875 490.3h1.6v2.2h-1.6zM931.875 501.5h1.6v2.2h-1.6zM934.75 490.3h1.6v2.2h-1.6zM934.75 501.5h1.6v2.2h-1.6zM937.625 490.3h1.6v2.2h-1.6zM937.625 501.5h1.6v2.2h-1.6zM928.3 491h2.2v1.6h-2.2zM939 491h2.2v1.6h-2.2zM928.3 494h2.2v1.6h-2.2zM939 494h2.2v1.6h-2.2zM928.3 497h2.2v1.6h-2.2zM939 497h2.2v1.6h-2.2zM928.3 500h2.2v1.6h-2.2zM939 500h2.2v1.6h-2.2zM898 346.5h8v11h-8zM917 346.5h7v11h-7zM961 424h7v11h-7zM961 539h7v11h-7zM961 562h7v10h-7zM522.14 636h1.2v3h-1.2zM522.14 654.5h1.2v3h-1.2zM527.384 636h1.2v3h-1.2zM527.384 654.5h1.2v3h-1.2zM532.628 636h1.2v3h-1.2zM532.628 654.5h1.2v3h-1.2zM537.872 636h1.2v3h-1.2zM537.872 654.5h1.2v3h-1.2zM543.116 636h1.2v3h-1.2zM543.116 654.5h1.2v3h-1.2zM573.56 634h1.2v3h-1.2zM573.56 649h1.2v3h-1.2zM576.79 634h1.2v3h-1.2zM576.79 649h1.2v3h-1.2zM580.02 634h1.2v3h-1.2zM580.02 649h1.2v3h-1.2zM583.25 634h1.2v3h-1.2zM583.25 649h1.2v3h-1.2zM586.48 634h1.2v3h-1.2zM586.48 649h1.2v3h-1.2zM589.71 634h1.2v3h-1.2zM589.71 649h1.2v3h-1.2zM645.78 633.5h1.2v3h-1.2zM645.78 645.5h1.2v3h-1.2zM648.164 633.5h1.2v3h-1.2zM648.164 645.5h1.2v3h-1.2zM650.547 633.5h1.2v3h-1.2zM650.547 645.5h1.2v3h-1.2zM652.931 633.5h1.2v3h-1.2zM652.931 645.5h1.2v3h-1.2zM655.315 633.5h1.2v3h-1.2zM655.315 645.5h1.2v3h-1.2zM657.698 633.5h1.2v3h-1.2zM657.698 645.5h1.2v3h-1.2zM660.082 633.5h1.2v3h-1.2zM660.082 645.5h1.2v3h-1.2zM662.465 633.5h1.2v3h-1.2zM662.465 645.5h1.2v3h-1.2zM664.849 633.5h1.2v3h-1.2zM664.849 645.5h1.2v3h-1.2zM667.233 633.5h1.2v3h-1.2zM667.233 645.5h1.2v3h-1.2zM669.616 633.5h1.2v3h-1.2zM669.616 645.5h1.2v3h-1.2zM672 633.5h1.2v3h-1.2zM672 645.5h1.2v3h-1.2zM674.384 633.5h1.2v3h-1.2zM674.384 645.5h1.2v3h-1.2zM676.767 633.5h1.2v3h-1.2zM676.767 645.5h1.2v3h-1.2zM679.151 633.5h1.2v3h-1.2zM679.151 645.5h1.2v3h-1.2zM681.535 633.5h1.2v3h-1.2zM681.535 645.5h1.2v3h-1.2zM683.918 633.5h1.2v3h-1.2zM683.918 645.5h1.2v3h-1.2zM686.302 633.5h1.2v3h-1.2zM686.302 645.5h1.2v3h-1.2zM688.685 633.5h1.2v3h-1.2zM688.685 645.5h1.2v3h-1.2zM691.069 633.5h1.2v3h-1.2zM691.069 645.5h1.2v3h-1.2zM693.453 633.5h1.2v3h-1.2zM693.453 645.5h1.2v3h-1.2zM695.836 633.5h1.2v3h-1.2zM695.836 645.5h1.2v3h-1.2zM778.38 638.5h1.2v3h-1.2zM778.38 651.5h1.2v3h-1.2zM780.723 638.5h1.2v3h-1.2zM780.723 651.5h1.2v3h-1.2zM783.067 638.5h1.2v3h-1.2zM783.067 651.5h1.2v3h-1.2zM785.41 638.5h1.2v3h-1.2zM785.41 651.5h1.2v3h-1.2zM787.753 638.5h1.2v3h-1.2zM787.753 651.5h1.2v3h-1.2zM790.097 638.5h1.2v3h-1.2zM790.097 651.5h1.2v3h-1.2zM792.44 638.5h1.2v3h-1.2zM792.44 651.5h1.2v3h-1.2zM794.783 638.5h1.2v3h-1.2zM794.783 651.5h1.2v3h-1.2zM797.127 638.5h1.2v3h-1.2zM797.127 651.5h1.2v3h-1.2zM799.47 638.5h1.2v3h-1.2zM799.47 651.5h1.2v3h-1.2zM801.813 638.5h1.2v3h-1.2zM801.813 651.5h1.2v3h-1.2zM804.157 638.5h1.2v3h-1.2zM804.157 651.5h1.2v3h-1.2zM806.5 638.5h1.2v3h-1.2zM806.5 651.5h1.2v3h-1.2zM808.843 638.5h1.2v3h-1.2zM808.843 651.5h1.2v3h-1.2zM811.187 638.5h1.2v3h-1.2zM811.187 651.5h1.2v3h-1.2zM813.53 638.5h1.2v3h-1.2zM813.53 651.5h1.2v3h-1.2zM815.873 638.5h1.2v3h-1.2zM815.873 651.5h1.2v3h-1.2zM818.217 638.5h1.2v3h-1.2zM818.217 651.5h1.2v3h-1.2zM820.56 638.5h1.2v3h-1.2zM820.56 651.5h1.2v3h-1.2zM822.903 638.5h1.2v3h-1.2zM822.903 651.5h1.2v3h-1.2zM825.247 638.5h1.2v3h-1.2zM825.247 651.5h1.2v3h-1.2zM827.59 638.5h1.2v3h-1.2zM827.59 651.5h1.2v3h-1.2zM829.933 638.5h1.2v3h-1.2zM829.933 651.5h1.2v3h-1.2zM832.277 638.5h1.2v3h-1.2zM832.277 651.5h1.2v3h-1.2zM867.18 630.5h1.2v3h-1.2zM867.18 648.5h1.2v3h-1.2zM873.108 630.5h1.2v3h-1.2zM873.108 648.5h1.2v3h-1.2zM879.036 630.5h1.2v3h-1.2zM879.036 648.5h1.2v3h-1.2zM884.964 630.5h1.2v3h-1.2zM884.964 648.5h1.2v3h-1.2zM890.892 630.5h1.2v3h-1.2zM890.892 648.5h1.2v3h-1.2zM735 549h10v6.5h-10zM734.5 561.5h10v7.5h-10zM449 536.5h11v8.5h-11zM445 556h7v10h-7zM501 574.45h3v1.2h-3zM515 574.45h3v1.2h-3zM501 578.275h3v1.2h-3zM515 578.275h3v1.2h-3zM501 582.1h3v1.2h-3zM515 582.1h3v1.2h-3zM501 585.925h3v1.2h-3zM515 585.925h3v1.2h-3zM501 589.75h3v1.2h-3zM515 589.75h3v1.2h-3zM501 593.575h3v1.2h-3zM515 593.575h3v1.2h-3zM501 597.4h3v1.2h-3zM515 597.4h3v1.2h-3zM501 601.225h3v1.2h-3zM515 601.225h3v1.2h-3zM504 569.5h4v2.5h-4zM511 569.5h4v2.5h-4zM1032 387h4v4h-4zM1038 390h2v2h-2zM1030 398h4v4h-4zM1037 398h2v2h-2zM1037 400h2v2h-2zM1024 405h2v1h-2zM1026 405h2v1h-2zM1032 409h1v2h-1zM1032 411h1v2h-1zM1048 405h10v14h-10zM1063 406h1v12h-1zM1070 406h1v12h-1zM1062.5 405.5h9v13h-9zM1008 486h4.5v4.5h-4.5zM1028 486h4.5v4.5h-4.5zM1047.5 486h4.5v4.5h-4.5zM1005 502h4.5v4.5h-4.5zM1014 502h4.5v4.5h-4.5zM1022 502h4.5v4.5h-4.5zM1036 502h4.5v4.5h-4.5zM1044 502h4.5v4.5h-4.5zM1052 502h4.5v4.5h-4.5zM1044 509h4.5v4.5h-4.5zM1052 509h4.5v4.5h-4.5zM1047.5 524h4.5v4.5h-4.5zM1130 486h4.5v4.5h-4.5zM1150 486h4.5v4.5h-4.5zM1170.5 486h4.5v4.5h-4.5zM1127 503h4.5v4.5h-4.5zM1135 503h4.5v4.5h-4.5zM1143 503h4.5v4.5h-4.5zM1157 503h4.5v4.5h-4.5zM1165 503h4.5v4.5h-4.5zM1173 503h4.5v4.5h-4.5zM1165 510h4.5v4.5h-4.5zM1173 510h4.5v4.5h-4.5zM1170.5 526.5h4.5v4.5h-4.5zM1191 489h6.5v7.5h-6.5zM1191 506h6.5v7.5h-6.5zM1188 490h2v6h-2zM1188 523h2v6h-2zM992 484h2.5v5h-2.5zM1063 487h2v2.5h-2zM1115 489.5h2v2.5h-2zM1063 493.6h2v2.5h-2zM1115 496.1h2v2.5h-2zM1063 500.2h2v2.5h-2zM1115 502.7h2v2.5h-2zM1063 506.8h2v2.5h-2zM1115 509.3h2v2.5h-2zM1063 513.4h2v2.5h-2zM1115 515.9h2v2.5h-2zM1063 520h2v2.5h-2zM1115 522.5h2v2.5h-2zM1063 526.6h2v2.5h-2zM1115 529.1h2v2.5h-2zM1063 533.2h2v2.5h-2zM1115 535.7h2v2.5h-2zM1063 539.8h2v2.5h-2zM1115 542.3h2v2.5h-2zM1060.5 538.5h4v3.5h-4zM1061 469.5h4v3h-4zM1128 469.5h4v2.5h-4zM1399 373.3h1.6v2.2h-1.6zM1399 386h1.6v2.2h-1.6zM1401.5 373.3h1.6v2.2h-1.6zM1401.5 386h1.6v2.2h-1.6zM1404 373.3h1.6v2.2h-1.6zM1404 386h1.6v2.2h-1.6zM1398.3 374h2.2v1.6h-2.2zM1405 374h2.2v1.6h-2.2zM1398.3 376.7h2.2v1.6h-2.2zM1405 376.7h2.2v1.6h-2.2zM1398.3 379.4h2.2v1.6h-2.2zM1405 379.4h2.2v1.6h-2.2zM1398.3 382.1h2.2v1.6h-2.2zM1405 382.1h2.2v1.6h-2.2zM1398.3 384.8h2.2v1.6h-2.2zM1405 384.8h2.2v1.6h-2.2zM1385 326.5h5v3h-5zM1385 332.5h5v3h-5zM1392.3 326.5h5v3h-5zM1392.3 332.5h5v3h-5zM1406.9 326.5h5v3h-5zM1406.9 332.5h5v3h-5zM1239 426h6v6h-6zM1249 426h6v6h-6zM1263 464h5v12h-5zM1274 464h5v12h-5zM1229 465h5v6h-5zM1261.8 567.8h1.6v2.2h-1.6zM1261.8 579.5h1.6v2.2h-1.6zM1264.42 567.8h1.6v2.2h-1.6zM1264.42 579.5h1.6v2.2h-1.6zM1267.05 567.8h1.6v2.2h-1.6zM1267.05 579.5h1.6v2.2h-1.6zM1269.67 567.8h1.6v2.2h-1.6zM1269.67 579.5h1.6v2.2h-1.6zM1261.1 568.5h2.2v1.6h-2.2zM1270.8 568.5h2.2v1.6h-2.2zM1261.1 571.625h2.2v1.6h-2.2zM1270.8 571.625h2.2v1.6h-2.2zM1261.1 574.75h2.2v1.6h-2.2zM1270.8 574.75h2.2v1.6h-2.2zM1261.1 577.875h2.2v1.6h-2.2zM1270.8 577.875h2.2v1.6h-2.2zM1183 594.8h1.6v2.2h-1.6zM1183 607.5h1.6v2.2h-1.6zM1185.75 594.8h1.6v2.2h-1.6zM1185.75 607.5h1.6v2.2h-1.6zM1188.5 594.8h1.6v2.2h-1.6zM1188.5 607.5h1.6v2.2h-1.6zM1191.25 594.8h1.6v2.2h-1.6zM1191.25 607.5h1.6v2.2h-1.6zM1182.3 595.5h2.2v1.6h-2.2zM1192.5 595.5h2.2v1.6h-2.2zM1182.3 598.2h2.2v1.6h-2.2zM1192.5 598.2h2.2v1.6h-2.2zM1182.3 600.9h2.2v1.6h-2.2zM1192.5 600.9h2.2v1.6h-2.2zM1182.3 603.6h2.2v1.6h-2.2zM1192.5 603.6h2.2v1.6h-2.2zM1182.3 606.3h2.2v1.6h-2.2zM1192.5 606.3h2.2v1.6h-2.2zM1288.9 632.8h1.6v2.2h-1.6zM1288.9 645h1.6v2.2h-1.6zM1291.9 632.8h1.6v2.2h-1.6zM1291.9 645h1.6v2.2h-1.6zM1294.9 632.8h1.6v2.2h-1.6zM1294.9 645h1.6v2.2h-1.6zM1297.9 632.8h1.6v2.2h-1.6zM1297.9 645h1.6v2.2h-1.6zM1300.9 632.8h1.6v2.2h-1.6zM1300.9 645h1.6v2.2h-1.6zM1288.2 633.5h2.2v1.6h-2.2zM1302.4 633.5h2.2v1.6h-2.2zM1288.2 636.1h2.2v1.6h-2.2zM1302.4 636.1h2.2v1.6h-2.2zM1288.2 638.7h2.2v1.6h-2.2zM1302.4 638.7h2.2v1.6h-2.2zM1288.2 641.3h2.2v1.6h-2.2zM1302.4 641.3h2.2v1.6h-2.2zM1288.2 643.9h2.2v1.6h-2.2zM1302.4 643.9h2.2v1.6h-2.2zM1248 496h6v10h-6zM1259 496h6v10h-6zM1229 522h4v6h-4zM1238 522h4v6h-4zM1229 531h4v6h-4zM1238 531h4v6h-4zM1231 567h4v6h-4zM1239 567h4v6h-4zM1231 577h4v6h-4zM1239 577h4v6h-4zM1215 597h11v6h-11zM1215 609h11v6h-11zM1201 595h10v6h-10zM1201 608h10v6h-10zM1242 631h7v4h-7zM1242 639h7v4h-7zM1253 631h6v4h-6zM1253 639h6v4h-6zM1183 583h4v7h-4zM1192 583h4v7h-4zM1247 479h4v10h-4zM1255 479h4v10h-4zM1223 479h3v8h-3zM1230 479h3v8h-3zM1253 509h3v9h-3zM1259 509h3v9h-3zM1253 522h7v4h-7zM1253 530h7v4h-7zM1032 599.8h1.6v2.2h-1.6zM1032 633h1.6v2.2h-1.6zM1035.17 599.8h1.6v2.2h-1.6zM1035.17 633h1.6v2.2h-1.6zM1038.33 599.8h1.6v2.2h-1.6zM1038.33 633h1.6v2.2h-1.6zM1041.5 599.8h1.6v2.2h-1.6zM1041.5 633h1.6v2.2h-1.6zM1044.67 599.8h1.6v2.2h-1.6zM1044.67 633h1.6v2.2h-1.6zM1047.83 599.8h1.6v2.2h-1.6zM1047.83 633h1.6v2.2h-1.6zM1031.3 600.5h2.2v1.6h-2.2zM1049.5 600.5h2.2v1.6h-2.2zM1031.3 603.591h2.2v1.6h-2.2zM1049.5 603.591h2.2v1.6h-2.2zM1031.3 606.682h2.2v1.6h-2.2zM1049.5 606.682h2.2v1.6h-2.2zM1031.3 609.773h2.2v1.6h-2.2zM1049.5 609.773h2.2v1.6h-2.2zM1031.3 612.864h2.2v1.6h-2.2zM1049.5 612.864h2.2v1.6h-2.2zM1031.3 615.955h2.2v1.6h-2.2zM1049.5 615.955h2.2v1.6h-2.2zM1031.3 619.045h2.2v1.6h-2.2zM1049.5 619.045h2.2v1.6h-2.2zM1031.3 622.136h2.2v1.6h-2.2zM1049.5 622.136h2.2v1.6h-2.2zM1031.3 625.227h2.2v1.6h-2.2zM1049.5 625.227h2.2v1.6h-2.2zM1031.3 628.318h2.2v1.6h-2.2zM1049.5 628.318h2.2v1.6h-2.2zM1031.3 631.409h2.2v1.6h-2.2zM1049.5 631.409h2.2v1.6h-2.2zM1123 594.3h1.6v2.2h-1.6zM1123 643.5h1.6v2.2h-1.6zM1126.11 594.3h1.6v2.2h-1.6zM1126.11 643.5h1.6v2.2h-1.6zM1129.22 594.3h1.6v2.2h-1.6zM1129.22 643.5h1.6v2.2h-1.6zM1132.33 594.3h1.6v2.2h-1.6zM1132.33 643.5h1.6v2.2h-1.6zM1135.44 594.3h1.6v2.2h-1.6zM1135.44 643.5h1.6v2.2h-1.6zM1138.56 594.3h1.6v2.2h-1.6zM1138.56 643.5h1.6v2.2h-1.6zM1141.67 594.3h1.6v2.2h-1.6zM1141.67 643.5h1.6v2.2h-1.6zM1144.78 594.3h1.6v2.2h-1.6zM1144.78 643.5h1.6v2.2h-1.6zM1147.89 594.3h1.6v2.2h-1.6zM1147.89 643.5h1.6v2.2h-1.6zM1122.3 595h2.2v1.6h-2.2zM1149.5 595h2.2v1.6h-2.2zM1122.3 598.125h2.2v1.6h-2.2zM1149.5 598.125h2.2v1.6h-2.2zM1122.3 601.25h2.2v1.6h-2.2zM1149.5 601.25h2.2v1.6h-2.2zM1122.3 604.375h2.2v1.6h-2.2zM1149.5 604.375h2.2v1.6h-2.2zM1122.3 607.5h2.2v1.6h-2.2zM1149.5 607.5h2.2v1.6h-2.2zM1122.3 610.625h2.2v1.6h-2.2zM1149.5 610.625h2.2v1.6h-2.2zM1122.3 613.75h2.2v1.6h-2.2zM1149.5 613.75h2.2v1.6h-2.2zM1122.3 616.875h2.2v1.6h-2.2zM1149.5 616.875h2.2v1.6h-2.2zM1122.3 620h2.2v1.6h-2.2zM1149.5 620h2.2v1.6h-2.2zM1122.3 623.125h2.2v1.6h-2.2zM1149.5 623.125h2.2v1.6h-2.2zM1122.3 626.25h2.2v1.6h-2.2zM1149.5 626.25h2.2v1.6h-2.2zM1122.3 629.375h2.2v1.6h-2.2zM1149.5 629.375h2.2v1.6h-2.2zM1122.3 632.5h2.2v1.6h-2.2zM1149.5 632.5h2.2v1.6h-2.2zM1122.3 635.625h2.2v1.6h-2.2zM1149.5 635.625h2.2v1.6h-2.2zM1122.3 638.75h2.2v1.6h-2.2zM1149.5 638.75h2.2v1.6h-2.2zM1122.3 641.875h2.2v1.6h-2.2zM1149.5 641.875h2.2v1.6h-2.2zM1080 613.8h1.6v2.2h-1.6zM1080 629h1.6v2.2h-1.6zM1082.88 613.8h1.6v2.2h-1.6zM1082.88 629h1.6v2.2h-1.6zM1085.75 613.8h1.6v2.2h-1.6zM1085.75 629h1.6v2.2h-1.6zM1088.62 613.8h1.6v2.2h-1.6zM1088.62 629h1.6v2.2h-1.6zM1091.5 613.8h1.6v2.2h-1.6zM1091.5 629h1.6v2.2h-1.6zM1094.38 613.8h1.6v2.2h-1.6zM1094.38 629h1.6v2.2h-1.6zM1097.25 613.8h1.6v2.2h-1.6zM1097.25 629h1.6v2.2h-1.6zM1100.12 613.8h1.6v2.2h-1.6zM1100.12 629h1.6v2.2h-1.6zM1079.3 614.5h2.2v1.6h-2.2zM1101.5 614.5h2.2v1.6h-2.2zM1079.3 617.7h2.2v1.6h-2.2zM1101.5 617.7h2.2v1.6h-2.2zM1079.3 620.9h2.2v1.6h-2.2zM1101.5 620.9h2.2v1.6h-2.2zM1079.3 624.1h2.2v1.6h-2.2zM1101.5 624.1h2.2v1.6h-2.2zM1079.3 627.3h2.2v1.6h-2.2zM1101.5 627.3h2.2v1.6h-2.2zM1435 648.5h8v11h-8zM1449 649h1v10h-1zM1454 649h1v10h-1zM1448.5 648.5h6.5v10.5h-6.5zM1461 649h1v10h-1zM1466 649h1v10h-1zM1460.5 648.5h6.5v10.5h-6.5zM555 362h2v2h-2zM555 365h2v2h-2zM560 362h2v2h-2zM563 362h2v2h-2zM577 362h3v2h-3zM577 366h3v2h-3zM583 365h3v2h-3zM589 362h2v2h-2zM589 366h2v2h-2zM595 362h2v2h-2zM595 365h2v2h-2zM541 370h2v2h-2zM541 373h2v2h-2zM557 370h2v2h-2zM557 373h2v2h-2zM594 370h3v2h-3zM594 374h3v2h-3zM600 370h2v2h-2zM586 371h2v2h-2zM586 375h2v2h-2zM535 372h2v3h-2zM525 373h2v2h-2zM525 376h2v2h-2zM513 377h3v3h-3zM517 377h3v3h-3zM546 377h2v2h-2zM546 380h2v2h-2zM600 377h2v2h-2zM600 380h2v2h-2zM530 378h2v2h-2zM533 378h2v2h-2zM538 378h4v3h-4zM538 383h4v3h-4zM551 378h2v2h-2zM551 381h2v2h-2zM556 382h2v2h-2zM591 379h3v2h-3zM591 383h3v2h-3zM586 380h2v2h-2zM586 383h2v2h-2zM513 383h2v2h-2zM513 386h2v2h-2zM518 383h2v2h-2zM533 383h2v3h-2zM597 385h2v2h-2zM597 388h2v2h-2zM545 386h3v3h-3zM555 387h2v2h-2zM586 388h2v2h-2zM586 391h2v2h-2zM591 388h2v2h-2zM591 391h2v2h-2zM529 392h2v2h-2zM521 390h2v2h-2zM543 392h2v2h-2zM546 392h2v2h-2zM551 392h2v2h-2zM551 395h2v2h-2zM534 394h2v2h-2zM537 394h2v2h-2zM562 395h2v2h-2zM565 395h2v2h-2zM570 395h2v2h-2zM573 395h2v2h-2zM640 379h2v2h-2zM645 379h2v2h-2zM648 379h2v2h-2zM661 385h4v3h-4zM627 381h3v2h-3zM627 385h3v2h-3zM633 384h2v2h-2zM636 384h2v2h-2zM633 389h2v2h-2zM633 392h2v2h-2zM658 391h4v3h-4zM665 392h2v2h-2zM629 397h3v3h-3zM629 401h3v3h-3zM636 398h3v3h-3zM658 402h4v3h-4zM658 407h4v3h-4zM621 403h2v2h-2zM621 406h2v2h-2zM642 404h3v2h-3zM642 407h3v2h-3zM648 404h2v2h-2zM651 404h2v2h-2zM648 409h2v2h-2zM651 409h2v2h-2zM642 412h2v2h-2zM642 415h2v2h-2zM656 413h2v2h-2zM656 416h2v2h-2zM647 414h2v2h-2zM650 414h2v2h-2zM647 419h2v2h-2zM650 419h2v2h-2zM641 424h3v2h-3zM626 431h2v3h-2zM630 431h2v3h-2zM635 431h2v2h-2zM638 431h2v2h-2zM656 464h2v2h-2zM661 464h7v4h-7zM671 464h3v2h-3zM671 468h3v2h-3zM677 464h4v3h-4zM703 464h2v3h-2zM708 464h2v2h-2zM713 469h4v3h-4zM720 464h4v3h-4zM720 469h4v3h-4zM727 464h3v4h-3zM732 464h3v4h-3zM741 464h2v2h-2zM648 465h2v2h-2zM648 468h2v2h-2zM738 469h2v2h-2zM738 471h2v2h-2zM743 469h3v2h-3zM743 473h3v2h-3zM699 470h2v2h-2zM699 473h2v2h-2zM688 471h2v2h-2zM688 474h2v2h-2zM708 471h2v2h-2zM708 474h2v2h-2zM727 474h2v2h-2zM732 475h3v2h-3zM653 472h3v2h-3zM653 476h3v2h-3zM693 472h2v2h-2zM693 475h2v2h-2zM671 473h2v2h-2zM671 477h2v2h-2zM713 475h2v2h-2zM716 475h2v2h-2zM721 475h3v2h-3zM721 479h3v2h-3zM676 480h4v3h-4zM738 477h2v2h-2zM738 480h2v2h-2zM659 478h2v2h-2zM659 481h2v2h-2zM665 482h2v2h-2zM698 479h3v2h-3zM698 482h3v2h-3zM708 479h2v2h-2zM708 482h2v2h-2zM744 479h3v2h-3zM744 483h3v2h-3zM683 480h3v2h-3zM683 484h3v2h-3zM713 484h2v2h-2zM727 480h2v2h-2zM727 483h2v2h-2zM644 483h3v2h-3zM644 486h3v2h-3zM732 483h2v2h-2zM732 486h2v2h-2zM719 484h2v2h-2zM722 484h2v2h-2zM690 485h2v2h-2zM693 485h2v2h-2zM659 486h2v2h-2zM659 488h2v2h-2zM491 491h3v2h-3zM491 494h3v2h-3zM497 491h2v2h-2zM497 494h2v2h-2zM502 491h4v3h-4zM502 496h4v3h-4zM644 491h2v2h-2zM644 494h2v2h-2zM510 493h3v2h-3zM510 496h3v2h-3zM667 494h2v2h-2zM746 494h2v2h-2zM746 498h2v2h-2zM517 495h2v2h-2zM517 498h2v2h-2zM487 499h3v2h-3zM487 503h3v2h-3zM529 499h4v7h-4zM537 499h4v7h-4zM544 499h4v3h-4zM544 504h4v3h-4zM556 499h3v4h-3zM565 499h2v2h-2zM572 499h2v2h-2zM577 499h3v4h-3zM582 499h3v4h-3zM592 499h2v2h-2zM592 502h2v2h-2zM644 499h2v2h-2zM644 502h2v2h-2zM667 499h2v2h-2zM670 499h2v2h-2zM509 501h2v2h-2zM512 501h2v2h-2zM502 506h3v3h-3zM632 502h2v2h-2zM632 505h2v2h-2zM493 503h2v2h-2zM493 506h2v2h-2zM602 506h2v2h-2zM637 503h4v3h-4zM637 508h4v3h-4zM521 504h2v2h-2zM562 504h3v4h-3zM567 504h3v4h-3zM607 504h2v2h-2zM610 504h2v2h-2zM667 504h2v2h-2zM670 504h2v2h-2zM615 505h3v3h-3zM615 509h3v3h-3zM621 505h2v2h-2zM624 505h2v2h-2zM508 506h3v3h-3zM508 510h3v3h-3zM551 506h2v2h-2zM554 506h2v2h-2zM574 510h2v2h-2zM719 507h2v2h-2zM722 507h2v2h-2zM746 507h2v2h-2zM746 510h2v2h-2zM483 509h2v2h-2zM483 512h2v2h-2zM488 509h2v2h-2zM488 512h2v2h-2zM514 509h2v2h-2zM514 511h2v2h-2zM526 509h3v4h-3zM531 509h3v4h-3zM539 509h2v2h-2zM607 509h2v2h-2zM609 509h2v2h-2zM544 510h3v2h-3zM621 510h2v2h-2zM621 513h2v2h-2zM626 510h2v2h-2zM626 512h2v2h-2zM632 510h2v2h-2zM632 512h2v2h-2zM644 513h2v2h-2zM568 511h2v2h-2zM568 514h2v2h-2zM497 512h2v2h-2zM497 515h2v2h-2zM519 512h2v2h-2zM519 516h2v2h-2zM671 512h2v2h-2zM719 512h3v3h-3zM719 516h3v3h-3zM502 513h2v2h-2zM602 514h3v3h-3zM606 514h3v3h-3zM637 518h2v2h-2zM573 515h2v2h-2zM573 517h2v2h-2zM743 515h2v2h-2zM746 515h2v2h-2zM513 516h3v3h-3zM513 520h3v3h-3zM524 516h2v2h-2zM527 516h2v2h-2zM532 516h2v2h-2zM532 519h2v2h-2zM487 517h3v4h-3zM537 517h2v2h-2zM537 520h2v2h-2zM626 517h3v3h-3zM626 521h3v3h-3zM616 525h7v4h-7zM632 518h2v2h-2zM632 521h2v2h-2zM542 519h4v3h-4zM542 525h4v3h-4zM500 520h2v2h-2zM605 520h2v2h-2zM610 520h2v2h-2zM610 523h2v2h-2zM520 521h2v3h-2zM746 521h2v2h-2zM746 524h2v2h-2zM571 522h2v3h-2zM642 524h2v2h-2zM530 524h3v2h-3zM530 528h3v2h-3zM637 524h2v2h-2zM637 526h2v2h-2zM671 524h2v2h-2zM671 527h2v2h-2zM486 525h2v2h-2zM486 528h2v2h-2zM536 525h3v2h-3zM523 527h2v2h-2zM523 530h2v2h-2zM626 527h2v2h-2zM568 528h2v2h-2zM568 532h2v2h-2zM573 528h3v3h-3zM573 532h3v3h-3zM608 532h3v2h-3zM549 533h3v2h-3zM555 529h3v4h-3zM560 529h3v4h-3zM642 529h3v2h-3zM642 533h3v2h-3zM741 529h2v2h-2zM744 529h2v2h-2zM631 531h2v2h-2zM631 535h2v2h-2zM636 531h2v2h-2zM636 534h2v2h-2zM614 532h2v2h-2zM616 532h2v2h-2zM482 533h2v3h-2zM486 533h2v3h-2zM528 533h2v2h-2zM531 533h2v2h-2zM707 533h2v2h-2zM712 533h3v2h-3zM712 537h3v2h-3zM536 534h4v3h-4zM544 535h2v2h-2zM544 538h2v2h-2zM579 535h7v4h-7zM579 543h7v4h-7zM589 535h3v4h-3zM593 535h3v4h-3zM621 539h2v2h-2zM555 536h2v2h-2zM555 539h2v2h-2zM560 536h3v2h-3zM599 537h2v2h-2zM608 537h3v3h-3zM614 537h3v2h-3zM614 541h3v2h-3zM549 538h2v2h-2zM549 541h2v2h-2zM566 542h2v2h-2zM571 538h2v3h-2zM574 538h2v3h-2zM626 538h2v2h-2zM626 541h2v2h-2zM644 538h2v2h-2zM706 538h2v2h-2zM706 541h2v2h-2zM482 539h2v2h-2zM485 539h2v2h-2zM523 539h2v2h-2zM523 542h2v2h-2zM631 540h3v2h-3zM701 540h2v2h-2zM701 543h2v2h-2zM722 543h2v2h-2zM528 541h3v2h-3zM528 545h3v2h-3zM745 541h2v2h-2zM745 544h2v2h-2zM711 542h3v2h-3zM711 546h3v2h-3zM543 543h2v2h-2zM543 546h2v2h-2zM593 543h2v2h-2zM593 546h2v2h-2zM604 543h2v2h-2zM604 547h2v2h-2zM609 543h2v2h-2zM609 546h2v2h-2zM641 543h2v3h-2zM717 543h2v2h-2zM717 546h2v2h-2zM482 544h2v2h-2zM482 546h2v2h-2zM571 544h2v2h-2zM571 547h2v2h-2zM556 545h2v2h-2zM598 545h3v2h-3zM598 549h3v2h-3zM624 546h3v3h-3zM624 550h3v3h-3zM701 551h2v2h-2zM722 548h2v2h-2zM722 551h2v2h-2zM614 549h2v2h-2zM617 549h2v2h-2zM630 549h2v3h-2zM640 549h2v2h-2zM642 549h2v2h-2zM746 549h2v2h-2zM746 552h2v2h-2zM706 550h2v2h-2zM706 553h2v2h-2zM609 551h2v2h-2zM609 554h2v2h-2zM711 551h2v2h-2zM714 551h2v2h-2zM587 552h2v2h-2zM590 552h2v2h-2zM604 552h2v2h-2zM604 555h2v2h-2zM595 558h2v2h-2zM614 554h3v2h-3zM614 557h3v2h-3zM639 554h3v4h-3zM644 554h3v4h-3zM631 555h2v2h-2zM634 555h2v2h-2zM497 556h2v3h-2zM500 556h2v3h-2zM509 558h2v2h-2zM620 556h2v2h-2zM623 556h2v2h-2zM701 556h2v2h-2zM701 559h2v2h-2zM711 556h2v3h-2zM715 556h2v3h-2zM671 557h2v2h-2zM676 557h4v3h-4zM745 557h2v2h-2zM745 560h2v2h-2zM650 558h3v4h-3zM655 558h3v4h-3zM661 558h2v2h-2zM661 561h2v2h-2zM666 558h2v2h-2zM666 562h2v2h-2zM706 558h2v2h-2zM609 559h2v2h-2zM609 562h2v2h-2zM724 559h2v2h-2zM727 559h2v2h-2zM732 563h3v2h-3zM738 559h4v3h-4zM604 560h2v2h-2zM604 564h2v2h-2zM628 560h2v2h-2zM628 563h2v2h-2zM687 560h2v2h-2zM690 560h2v2h-2zM620 561h2v2h-2zM639 561h3v2h-3zM645 561h2v2h-2zM645 564h2v2h-2zM715 562h2v3h-2zM614 563h3v2h-3zM614 566h3v2h-3zM633 565h2v2h-2zM633 568h2v2h-2zM650 565h4v3h-4zM650 569h4v3h-4zM657 566h2v2h-2zM665 571h3v2h-3zM609 568h2v2h-2zM609 571h2v2h-2zM600 570h2v2h-2zM603 570h2v2h-2zM620 570h3v2h-3zM620 573h3v2h-3zM638 570h3v2h-3zM638 574h3v2h-3zM739 570h2v2h-2zM739 573h2v2h-2zM627 571h2v2h-2zM627 573h2v2h-2zM657 571h2v2h-2zM657 574h2v2h-2zM614 572h2v2h-2zM614 574h2v2h-2zM632 576h2v2h-2zM644 575h2v2h-2zM744 574h2v2h-2zM744 577h2v2h-2zM604 578h2v2h-2zM649 575h3v3h-3zM649 579h3v3h-3zM609 576h2v2h-2zM609 579h2v2h-2zM662 580h3v3h-3zM619 582h3v2h-3zM625 578h2v2h-2zM625 581h2v2h-2zM738 578h2v2h-2zM656 579h2v2h-2zM656 582h2v2h-2zM641 580h2v2h-2zM644 580h2v2h-2zM630 581h2v2h-2zM632 581h2v2h-2zM668 582h2v2h-2zM668 585h2v2h-2zM743 586h3v2h-3zM600 583h2v2h-2zM603 583h2v2h-2zM735 583h2v2h-2zM738 583h2v2h-2zM608 590h4v3h-4zM641 585h3v2h-3zM641 588h3v2h-3zM647 585h3v2h-3zM647 589h3v2h-3zM625 586h3v2h-3zM625 590h3v2h-3zM661 586h2v2h-2zM661 589h2v2h-2zM620 587h2v2h-2zM620 590h2v2h-2zM602 588h2v2h-2zM602 591h2v2h-2zM711 597h7v4h-7zM721 593h3v2h-3zM731 589h2v2h-2zM615 590h2v2h-2zM615 593h2v2h-2zM631 594h2v2h-2zM656 590h2v2h-2zM656 593h2v2h-2zM666 590h2v2h-2zM668 590h2v2h-2zM640 593h3v2h-3zM640 597h3v2h-3zM646 594h2v3h-2zM661 594h2v2h-2zM661 598h2v2h-2zM620 595h4v3h-4zM620 600h4v3h-4zM667 595h2v2h-2zM667 598h2v2h-2zM601 596h2v2h-2zM610 596h2v2h-2zM721 598h4v3h-4zM721 603h4v3h-4zM627 599h3v2h-3zM627 602h3v2h-3zM635 599h2v2h-2zM635 602h2v2h-2zM650 600h3v2h-3zM650 604h3v2h-3zM602 601h2v2h-2zM602 604h2v2h-2zM656 601h2v2h-2zM656 604h2v2h-2zM641 602h2v2h-2zM641 605h2v2h-2zM661 603h3v4h-3zM666 603h3v4h-3zM672 606h2v2h-2zM711 604h2v2h-2zM711 607h2v2h-2zM716 604h2v2h-2zM716 607h2v2h-2zM612 605h2v2h-2zM612 607h2v2h-2zM617 606h4v3h-4zM617 611h4v3h-4zM624 607h3v3h-3zM628 607h3v3h-3zM636 607h2v2h-2zM636 610h2v2h-2zM651 609h3v2h-3zM665 610h2v2h-2zM677 610h2v2h-2zM680 610h2v2h-2zM689 610h2v2h-2zM689 613h2v2h-2zM694 610h2v3h-2zM697 610h2v3h-2zM702 610h2v2h-2zM702 613h2v2h-2zM708 612h2v2h-2zM711 612h2v2h-2zM547 564h2v2h-2zM552 564h2v2h-2zM557 561h2v2h-2zM560 561h2v2h-2zM565 561h2v2h-2zM565 564h2v2h-2zM570 561h2v2h-2zM570 564h2v2h-2zM575 561h2v2h-2zM575 564h2v2h-2zM580 561h2v2h-2zM583 561h2v2h-2zM557 566h3v2h-3zM557 569h3v2h-3zM580 566h3v2h-3zM580 570h3v2h-3zM543 569h2v2h-2zM543 572h2v2h-2zM548 569h2v2h-2zM548 572h2v2h-2zM567 569h2v2h-2zM572 569h3v2h-3zM572 573h3v2h-3zM586 569h2v2h-2zM586 572h2v2h-2zM557 574h3v2h-3zM557 578h3v2h-3zM547 577h2v3h-2zM563 580h3v2h-3zM569 578h2v2h-2zM577 578h3v2h-3zM577 581h3v2h-3zM583 579h2v2h-2zM583 582h2v2h-2zM543 583h2v2h-2zM543 586h2v2h-2zM552 586h2v2h-2zM557 583h2v2h-2zM557 586h2v2h-2zM569 583h2v2h-2zM563 588h2v2h-2zM574 586h2v3h-2zM577 586h2v3h-2zM587 590h2v2h-2zM587 593h2v2h-2zM542 594h3v2h-3zM552 591h2v2h-2zM552 594h2v2h-2zM557 595h3v2h-3zM568 591h2v2h-2zM568 594h2v2h-2zM582 591h2v2h-2zM582 594h2v2h-2zM573 592h3v2h-3zM573 596h3v2h-3zM563 596h2v2h-2zM587 598h2v2h-2zM587 601h2v2h-2zM546 599h2v2h-2zM546 602h2v2h-2zM579 599h2v2h-2zM582 599h2v2h-2zM565 601h2v2h-2zM565 604h2v2h-2zM555 603h2v2h-2zM555 606h2v2h-2zM574 604h3v3h-3zM578 604h3v3h-3zM544 607h2v2h-2zM547 607h2v2h-2zM575 613h2v2h-2zM554 611h2v2h-2zM570 613h2v2h-2zM580 611h3v2h-3zM580 614h3v2h-3zM586 615h3v2h-3zM559 615h3v2h-3zM559 618h3v2h-3zM565 620h2v2h-2zM570 618h2v3h-2zM574 618h2v3h-2zM587 623h3v2h-3zM579 623h2v2h-2zM579 626h2v2h-2zM570 628h3v2h-3zM593 624h2v2h-2zM593 627h2v2h-2zM599 626h2v2h-2zM607 626h2v3h-2zM611 626h2v3h-2zM586 628h2v2h-2zM618 633h2v2h-2zM618 645h2v2h-2zM618 648h2v2h-2zM893 438h3v2h-3zM893 442h3v2h-3zM899 438h2v2h-2zM902 438h2v2h-2zM907 438h2v3h-2zM911 438h2v3h-2zM916 441h2v3h-2zM887 442h2v2h-2zM887 445h2v2h-2zM899 443h2v2h-2zM899 445h2v2h-2zM904 444h2v2h-2zM904 447h2v2h-2zM871 449h3v3h-3zM877 445h3v2h-3zM877 449h3v2h-3zM860 446h2v3h-2zM849 447h3v4h-3zM854 447h3v4h-3zM892 447h3v3h-3zM892 451h3v3h-3zM909 447h2v3h-2zM913 447h2v3h-2zM918 447h4v3h-4zM918 452h4v3h-4zM838 448h2v2h-2zM838 451h2v2h-2zM843 452h3v2h-3zM800 449h2v2h-2zM800 451h2v2h-2zM809 449h3v2h-3zM809 453h3v2h-3zM815 449h2v2h-2zM822 449h2v2h-2zM827 451h2v2h-2zM761 450h2v3h-2zM765 450h2v3h-2zM770 450h2v2h-2zM773 450h2v2h-2zM778 453h2v2h-2zM783 450h3v2h-3zM783 453h3v2h-3zM789 450h2v2h-2zM789 452h2v2h-2zM795 450h2v2h-2zM795 453h2v2h-2zM883 450h2v2h-2zM883 453h2v2h-2zM898 450h2v2h-2zM898 453h2v2h-2zM832 455h2v2h-2zM860 452h2v2h-2zM860 456h2v2h-2zM865 453h3v2h-3zM911 453h2v2h-2zM913 453h2v2h-2zM853 454h4v3h-4zM853 459h4v3h-4zM877 454h2v2h-2zM877 458h2v2h-2zM770 455h2v2h-2zM770 458h2v2h-2zM801 456h2v2h-2zM804 456h2v2h-2zM871 459h2v2h-2zM819 457h2v3h-2zM823 457h2v3h-2zM841 457h3v2h-3zM841 461h3v2h-3zM847 457h2v2h-2zM847 460h2v2h-2zM759 458h2v2h-2zM761 458h2v2h-2zM786 458h2v2h-2zM789 458h2v2h-2zM916 458h3v2h-3zM916 462h3v2h-3zM828 463h3v2h-3zM860 462h3v2h-3zM860 466h3v2h-3zM866 462h2v2h-2zM866 465h2v2h-2zM759 463h2v2h-2zM759 467h2v2h-2zM764 463h2v2h-2zM764 467h2v2h-2zM818 463h2v2h-2zM821 463h2v2h-2zM876 463h2v2h-2zM876 466h2v2h-2zM834 464h2v2h-2zM834 467h2v2h-2zM847 465h3v2h-3zM847 469h3v2h-3zM853 465h3v2h-3zM853 469h3v2h-3zM839 466h2v2h-2zM839 469h2v2h-2zM871 467h2v2h-2zM871 470h2v2h-2zM915 470h2v2h-2zM827 468h2v2h-2zM866 470h2v2h-2zM817 471h2v2h-2zM817 474h2v2h-2zM876 471h2v2h-2zM876 475h2v2h-2zM920 471h2v2h-2zM920 474h2v2h-2zM759 472h3v4h-3zM764 472h3v4h-3zM826 473h2v2h-2zM826 476h2v2h-2zM837 474h3v3h-3zM841 474h3v3h-3zM847 474h2v2h-2zM850 474h2v2h-2zM860 474h2v2h-2zM860 477h2v2h-2zM871 478h2v2h-2zM911 476h2v2h-2zM915 476h2v2h-2zM759 479h2v2h-2zM759 482h2v2h-2zM764 479h2v2h-2zM764 482h2v2h-2zM813 479h2v2h-2zM813 482h2v2h-2zM818 479h2v2h-2zM818 483h2v2h-2zM847 479h2v2h-2zM847 482h2v2h-2zM866 479h2v2h-2zM866 482h2v2h-2zM831 480h2v2h-2zM838 482h2v2h-2zM876 484h3v2h-3zM911 481h2v3h-2zM823 486h2v2h-2zM853 482h3v2h-3zM859 489h4v3h-4zM828 485h2v2h-2zM828 488h2v2h-2zM833 485h2v2h-2zM833 488h2v2h-2zM871 489h2v2h-2zM764 487h3v4h-3zM838 487h3v2h-3zM838 491h3v2h-3zM848 487h2v2h-2zM848 490h2v2h-2zM866 487h2v2h-2zM882 488h2v3h-2zM886 488h2v3h-2zM891 492h2v2h-2zM900 488h2v2h-2zM903 488h2v2h-2zM817 489h3v2h-3zM876 489h2v2h-2zM876 492h2v2h-2zM827 493h2v2h-2zM827 496h2v2h-2zM832 493h3v2h-3zM832 497h3v2h-3zM905 493h2v2h-2zM907 493h2v2h-2zM759 494h2v2h-2zM759 498h2v2h-2zM764 494h2v2h-2zM764 497h2v2h-2zM871 494h2v2h-2zM871 497h2v2h-2zM881 494h2v3h-2zM896 494h2v2h-2zM896 497h2v2h-2zM860 495h2v2h-2zM863 495h2v2h-2zM838 496h3v3h-3zM838 500h3v3h-3zM849 496h2v2h-2zM849 499h2v2h-2zM854 497h2v2h-2zM854 500h2v2h-2zM890 497h2v2h-2zM890 499h2v2h-2zM817 498h2v2h-2zM876 498h2v2h-2zM876 501h2v2h-2zM859 500h3v2h-3zM859 504h3v2h-3zM881 500h3v2h-3zM881 504h3v2h-3zM826 505h3v2h-3zM901 501h2v2h-2zM903 501h2v2h-2zM764 502h2v2h-2zM832 502h2v2h-2zM832 505h2v2h-2zM895 502h2v2h-2zM895 505h2v2h-2zM908 502h2v2h-2zM908 506h2v2h-2zM759 503h2v2h-2zM759 506h2v2h-2zM813 503h2v2h-2zM818 507h3v2h-3zM865 503h2v2h-2zM887 504h3v2h-3zM887 508h3v2h-3zM853 505h2v2h-2zM853 508h2v2h-2zM837 506h4v3h-4zM900 506h3v2h-3zM876 507h2v2h-2zM876 510h2v2h-2zM866 508h3v2h-3zM866 511h3v2h-3zM764 509h2v2h-2zM764 513h2v2h-2zM861 509h2v2h-2zM881 509h3v2h-3zM881 512h3v2h-3zM828 514h3v2h-3zM813 511h2v2h-2zM813 514h2v2h-2zM818 512h2v2h-2zM818 515h2v2h-2zM844 513h2v2h-2zM773 514h2v3h-2zM781 514h2v2h-2zM786 517h2v2h-2zM791 514h3v2h-3zM791 518h3v2h-3zM797 518h2v2h-2zM802 518h2v2h-2zM807 514h3v2h-3zM807 518h3v2h-3zM853 514h2v2h-2zM856 514h2v2h-2zM781 519h2v2h-2zM781 521h2v2h-2zM770 520h2v2h-2zM773 520h2v2h-2zM813 520h2v2h-2zM816 520h2v2h-2zM850 530h2v2h-2zM855 532h2v2h-2zM844 531h3v2h-3zM844 535h3v2h-3zM861 534h2v2h-2zM838 532h3v2h-3zM838 536h3v2h-3zM832 533h3v3h-3zM832 537h3v3h-3zM761 538h3v2h-3zM767 534h2v2h-2zM767 537h2v2h-2zM772 534h2v2h-2zM772 537h2v2h-2zM780 534h2v2h-2zM785 534h3v2h-3zM785 538h3v2h-3zM795 534h2v3h-2zM800 534h2v2h-2zM800 536h2v2h-2zM809 534h2v2h-2zM809 537h2v2h-2zM814 538h2v2h-2zM819 534h2v2h-2zM822 534h2v2h-2zM827 534h2v2h-2zM827 537h2v2h-2zM855 537h3v2h-3zM855 541h3v2h-3zM850 538h2v2h-2zM850 541h2v2h-2zM777 543h3v2h-3zM819 543h3v3h-3zM861 539h2v2h-2zM861 542h2v2h-2zM791 543h3v2h-3zM844 540h2v2h-2zM844 543h2v2h-2zM768 542h2v2h-2zM771 542h2v2h-2zM757 543h2v2h-2zM807 543h2v2h-2zM807 546h2v2h-2zM812 543h2v2h-2zM814 543h2v2h-2zM834 543h2v2h-2zM834 547h2v2h-2zM825 544h2v2h-2zM825 547h2v2h-2zM849 546h4v3h-4zM856 546h2v2h-2zM800 548h2v2h-2zM800 551h2v2h-2zM812 548h2v2h-2zM839 548h2v3h-2zM843 548h2v3h-2zM861 551h2v2h-2zM817 549h4v3h-4zM817 554h4v3h-4zM759 551h2v2h-2zM824 558h4v3h-4zM831 552h2v2h-2zM833 552h2v2h-2zM806 558h3v2h-3zM838 554h2v2h-2zM841 554h2v2h-2zM856 554h2v2h-2zM856 557h2v2h-2zM757 556h2v2h-2zM757 559h2v2h-2zM800 556h2v2h-2zM800 559h2v2h-2zM861 556h2v2h-2zM861 559h2v2h-2zM851 557h2v2h-2zM851 560h2v2h-2zM839 562h2v2h-2zM844 562h2v2h-2zM805 563h2v2h-2zM807 563h2v2h-2zM831 563h2v2h-2zM833 563h2v2h-2zM800 564h2v2h-2zM800 566h2v2h-2zM825 564h2v2h-2zM825 567h2v2h-2zM849 565h2v2h-2zM857 569h2v2h-2zM812 567h2v2h-2zM814 567h2v2h-2zM838 571h2v2h-2zM843 567h2v2h-2zM843 570h2v2h-2zM820 568h2v2h-2zM820 571h2v2h-2zM833 568h2v2h-2zM807 569h2v2h-2zM807 572h2v2h-2zM848 570h3v2h-3zM848 574h3v2h-3zM757 572h3v2h-3zM812 572h4v3h-4zM812 578h4v3h-4zM829 573h2v2h-2zM832 573h2v2h-2zM854 574h2v2h-2zM857 574h2v2h-2zM819 580h2v2h-2zM837 576h3v2h-3zM837 580h3v2h-3zM800 577h2v2h-2zM802 577h2v2h-2zM807 577h2v2h-2zM807 580h2v2h-2zM830 578h2v2h-2zM830 581h2v2h-2zM824 582h2v2h-2zM850 579h2v2h-2zM855 579h2v3h-2zM757 580h2v2h-2zM757 583h2v2h-2zM864 580h2v2h-2zM867 580h2v2h-2zM906 584h3v2h-3zM800 582h3v3h-3zM800 586h3v3h-3zM812 584h3v3h-3zM812 588h3v3h-3zM818 588h2v2h-2zM829 586h4v3h-4zM758 588h2v2h-2zM758 591h2v2h-2zM823 588h2v2h-2zM823 592h2v2h-2zM800 592h3v2h-3zM800 595h3v2h-3zM806 595h2v2h-2zM818 593h2v2h-2zM818 596h2v2h-2zM758 596h2v2h-2zM761 596h2v2h-2zM894 596h2v3h-2zM899 599h2v2h-2zM812 597h3v2h-3zM812 601h3v2h-3zM827 597h2v2h-2zM835 599h3v4h-3zM850 599h2v3h-2zM855 599h2v2h-2zM857 599h2v2h-2zM866 599h3v2h-3zM866 602h3v2h-3zM876 599h3v2h-3zM876 603h3v2h-3zM882 602h2v2h-2zM800 603h3v2h-3zM806 600h2v2h-2zM806 603h2v2h-2zM760 601h2v2h-2zM760 604h2v2h-2zM818 601h3v2h-3zM818 605h3v2h-3zM828 602h2v2h-2zM828 605h2v2h-2zM892 602h3v2h-3zM892 606h3v2h-3zM855 604h3v2h-3zM855 608h3v2h-3zM898 604h2v2h-2zM898 606h2v2h-2zM769 605h2v2h-2zM772 605h2v2h-2zM781 605h3v2h-3zM787 605h2v2h-2zM790 605h2v2h-2zM795 608h2v2h-2zM811 610h3v2h-3zM837 606h2v3h-2zM887 606h2v2h-2zM887 609h2v2h-2zM861 607h2v2h-2zM800 608h3v4h-3zM804 608h3v4h-3zM876 608h2v2h-2zM879 608h2v2h-2zM762 609h2v2h-2zM762 611h2v2h-2zM770 610h2v2h-2zM770 613h2v2h-2zM790 610h2v2h-2zM817 610h3v4h-3zM822 610h3v4h-3zM828 610h2v2h-2zM867 610h2v2h-2zM870 610h2v2h-2zM846 611h2v2h-2zM846 614h2v2h-2zM892 611h2v2h-2zM895 611h2v2h-2zM837 612h2v3h-2zM875 613h2v2h-2zM878 613h2v2h-2zM795 614h2v2h-2zM795 617h2v2h-2zM783 615h2v2h-2zM786 615h2v2h-2zM800 615h4v3h-4zM800 619h4v3h-4zM807 615h3v2h-3zM807 619h3v2h-3zM819 617h2v2h-2zM822 617h2v2h-2zM768 618h2v2h-2zM771 618h2v2h-2zM827 618h2v2h-2zM830 618h2v2h-2zM783 620h2v2h-2zM786 620h2v2h-2zM1322 361h3v4h-3zM1327 361h3v4h-3zM1333 361h2v3h-2zM1337 361h2v3h-2zM1342 361h4v3h-4zM1342 365h4v3h-4zM1349 361h2v3h-2zM1353 361h2v3h-2zM1361 361h2v2h-2zM1366 361h2v3h-2zM1370 361h2v3h-2zM1375 361h2v2h-2zM1384 361h2v2h-2zM1384 364h2v2h-2zM1394 361h3v4h-3zM1404 363h2v2h-2zM1404 366h2v2h-2zM1361 366h2v3h-2zM1375 366h2v2h-2zM1378 366h2v2h-2zM1316 367h2v2h-2zM1316 370h2v2h-2zM1337 371h2v2h-2zM1349 367h2v2h-2zM1349 369h2v2h-2zM1366 367h2v2h-2zM1321 368h2v2h-2zM1321 371h2v2h-2zM1328 368h2v2h-2zM1389 368h2v2h-2zM1389 371h2v2h-2zM1342 371h2v2h-2zM1342 374h2v2h-2zM1371 371h2v2h-2zM1374 371h2v2h-2zM1379 371h2v2h-2zM1379 374h2v2h-2zM1359 372h2v2h-2zM1359 375h2v2h-2zM1412 372h2v2h-2zM1412 375h2v2h-2zM1330 373h2v2h-2zM1330 375h2v2h-2zM1299 375h2v2h-2zM1313 375h2v2h-2zM1316 375h2v2h-2zM1364 375h2v2h-2zM1364 378h2v2h-2zM1351 379h2v2h-2zM1369 376h2v2h-2zM1369 379h2v2h-2zM1374 376h2v2h-2zM1374 379h2v2h-2zM1388 376h2v3h-2zM1392 376h2v3h-2zM1336 379h3v4h-3zM1379 382h2v2h-2zM1356 383h2v2h-2zM1412 380h2v2h-2zM1412 382h2v2h-2zM1290 382h2v2h-2zM1290 385h2v2h-2zM1295 382h2v2h-2zM1298 382h2v2h-2zM1303 382h2v2h-2zM1303 385h2v2h-2zM1388 382h2v2h-2zM1391 382h2v2h-2zM1346 383h2v2h-2zM1346 386h2v2h-2zM1336 389h2v2h-2zM1341 386h2v2h-2zM1341 389h2v2h-2zM1295 387h2v2h-2zM1298 387h2v2h-2zM1379 387h2v3h-2zM1384 391h2v2h-2zM1390 387h2v2h-2zM1392 387h2v2h-2zM1412 387h3v2h-3zM1412 391h3v2h-3zM1357 388h2v2h-2zM1357 391h2v2h-2zM1290 390h2v2h-2zM1290 393h2v2h-2zM1303 390h2v2h-2zM1303 393h2v2h-2zM1351 390h2v2h-2zM1351 393h2v2h-2zM1363 390h2v2h-2zM1346 391h2v2h-2zM1346 394h2v2h-2zM1295 395h2v2h-2zM1336 396h2v2h-2zM1341 395h2v2h-2zM1341 398h2v2h-2zM1300 398h2v2h-2zM1303 398h2v2h-2zM1291 401h2v2h-2zM1294 401h2v2h-2zM1300 403h2v3h-2zM1303 403h2v3h-2zM1271 422h2v3h-2zM1225 428h2v2h-2zM1276 426h3v2h-3zM1276 429h3v2h-3zM1267 428h2v2h-2zM1270 428h2v2h-2zM1267 433h2v2h-2zM1267 436h2v2h-2zM1276 434h2v2h-2zM1231 436h3v2h-3zM1231 440h3v2h-3zM1261 436h2v2h-2zM1261 439h2v2h-2zM1216 439h4v3h-4zM1216 444h4v3h-4zM1223 440h2v2h-2zM1226 440h2v2h-2zM1271 441h2v2h-2zM1271 444h2v2h-2zM1223 456h9v6h-9zM1261 449h4v3h-4zM1261 454h4v3h-4zM1270 449h2v2h-2zM1216 450h2v2h-2zM1216 453h2v2h-2zM1275 454h2v2h-2zM1268 454h3v2h-3zM1268 458h3v2h-3zM1240 456h2v2h-2zM1243 456h2v2h-2zM1248 456h9v6h-9zM1248 466h9v6h-9zM1217 458h3v2h-3zM1217 462h3v2h-3zM1239 464h2v2h-2zM1242 464h2v2h-2zM1216 467h4v3h-4zM1216 472h4v3h-4zM1240 472h3v3h-3zM1240 476h3v3h-3zM1269 481h3v4h-3zM1238 482h2v2h-2zM1238 485h2v2h-2zM1275 482h2v2h-2zM1275 485h2v2h-2zM1217 483h2v2h-2zM1217 486h2v2h-2zM1269 488h2v2h-2zM1238 490h3v2h-3zM1274 490h2v2h-2zM1274 493h2v2h-2zM1216 491h2v2h-2zM1216 494h2v2h-2zM1221 492h4v3h-4zM1228 495h4v3h-4zM1228 500h4v3h-4zM1270 498h2v2h-2zM1270 501h2v2h-2zM1235 499h2v2h-2zM1235 502h2v2h-2zM1240 499h2v2h-2zM1240 502h2v2h-2zM1216 502h2v2h-2zM1216 505h2v2h-2zM1275 503h2v2h-2zM1275 506h2v2h-2zM1225 506h3v3h-3zM1225 510h3v3h-3zM1231 507h3v2h-3zM1231 511h3v2h-3zM1237 507h3v2h-3zM1237 511h3v2h-3zM1270 507h2v2h-2zM1270 510h2v2h-2zM1243 514h2v2h-2zM1216 513h2v2h-2zM1219 513h2v2h-2zM1267 515h2v2h-2zM1229 516h2v2h-2zM1232 516h2v2h-2zM1216 518h7v4h-7zM1216 526h7v4h-7zM1246 520h2v2h-2zM1246 523h2v2h-2zM1267 522h4v3h-4zM1267 527h4v3h-4zM1246 528h2v2h-2zM1216 533h4v3h-4zM1216 538h4v3h-4zM1265 533h4v3h-4zM1265 539h4v3h-4zM1252 539h2v2h-2zM1252 542h2v2h-2zM1257 539h3v2h-3zM1257 543h3v2h-3zM1216 544h2v3h-2zM1264 545h2v2h-2zM1264 548h2v2h-2zM1256 552h3v2h-3zM1269 549h3v2h-3zM1216 550h2v2h-2zM1219 550h2v2h-2zM1262 554h2v2h-2zM1262 557h2v2h-2zM1216 555h7v4h-7zM1216 563h7v4h-7zM1252 557h4v3h-4zM1252 562h4v3h-4zM1267 558h3v2h-3zM1267 562h3v2h-3zM1252 568h2v2h-2zM1252 571h2v2h-2zM1221 570h3v4h-3zM1211 574h3v3h-3zM1211 578h3v3h-3zM1217 577h7v4h-7zM1217 585h7v4h-7zM1253 577h3v2h-3zM1253 581h3v2h-3zM1201 578h2v2h-2zM1204 578h2v2h-2zM1201 588h4v3h-4zM1208 584h2v2h-2zM1208 587h2v2h-2zM1248 584h2v2h-2zM1248 587h2v2h-2zM1257 586h2v2h-2zM1257 588h2v2h-2zM1266 586h2v3h-2zM1271 586h3v2h-3zM1229 587h2v2h-2zM1238 587h2v2h-2zM1242 587h2v2h-2zM1262 592h2v3h-2zM1266 592h2v3h-2zM1271 598h3v2h-3zM1258 598h2v2h-2zM1258 602h2v2h-2zM1264 598h2v2h-2zM1264 601h2v2h-2zM1269 603h2v2h-2zM1269 606h2v2h-2zM1263 610h3v3h-3zM1277 613h2v2h-2zM1277 616h2v2h-2zM1182 614h7v4h-7zM1182 622h7v4h-7zM1192 614h3v2h-3zM1262 616h3v3h-3zM1262 620h3v3h-3zM1268 617h2v3h-2zM1271 617h2v3h-2zM1198 619h4v7h-4zM1206 619h4v7h-4zM1234 619h2v3h-2zM1239 619h3v4h-3zM1244 619h3v4h-3zM1250 619h3v2h-3zM1250 623h3v2h-3zM1256 619h2v2h-2zM1256 622h2v2h-2zM1222 620h3v2h-3zM1222 624h3v2h-3zM1192 624h3v3h-3zM1263 626h4v3h-4zM1214 627h2v2h-2zM1217 627h2v2h-2zM1177 628h2v2h-2zM1177 631h2v2h-2zM1233 628h2v2h-2zM1233 631h2v2h-2zM1186 629h2v3h-2zM1192 634h3v2h-3zM1182 639h2v2h-2zM1187 635h2v2h-2zM1187 638h2v2h-2zM1198 640h2v2h-2zM1198 643h2v2h-2zM1263 641h2v2h-2zM1266 641h2v2h-2zM1187 643h3v4h-3zM1192 643h3v4h-3zM1281 423h2v2h-2zM1281 427h2v2h-2zM1322 427h2v3h-2zM1306 430h3v2h-3zM1306 433h3v2h-3zM1316 436h2v2h-2zM1321 433h2v3h-2zM1325 433h2v3h-2zM1285 459h2v2h-2zM1301 458h2v2h-2zM1301 461h2v2h-2zM1306 458h2v2h-2zM1306 461h2v2h-2zM1311 463h2v2h-2zM1314 463h2v2h-2zM1311 476h2v2h-2zM1311 479h2v2h-2zM1303 482h2v2h-2zM1303 485h2v2h-2zM1308 484h2v2h-2zM1312 484h2v2h-2zM1308 492h2v2h-2zM1443 495h2v2h-2zM1466 494h2v2h-2zM1313 492h2v3h-2zM1457 494h2v2h-2zM1457 497h2v2h-2zM1318 498h2v3h-2zM1338 498h4v3h-4zM1345 498h4v3h-4zM1345 503h4v3h-4zM1355 498h2v2h-2zM1368 498h2v2h-2zM1370 498h2v2h-2zM1379 498h2v2h-2zM1382 498h2v2h-2zM1387 498h3v2h-3zM1387 502h3v2h-3zM1398 498h2v3h-2zM1415 501h2v2h-2zM1420 498h2v2h-2zM1466 499h2v2h-2zM1466 502h2v2h-2zM1444 500h2v2h-2zM1444 502h2v2h-2zM1471 500h2v2h-2zM1471 503h2v2h-2zM1360 501h3v2h-3zM1360 505h3v2h-3zM1407 504h2v2h-2zM1425 501h2v3h-2zM1429 501h2v3h-2zM1327 506h3v3h-3zM1453 502h2v2h-2zM1453 506h2v2h-2zM1458 504h2v2h-2zM1352 503h2v2h-2zM1355 503h2v2h-2zM1301 504h2v2h-2zM1301 507h2v2h-2zM1318 504h2v3h-2zM1374 504h3v3h-3zM1374 508h3v3h-3zM1434 506h2v2h-2zM1434 509h2v2h-2zM1427 507h2v2h-2zM1439 507h2v2h-2zM1442 507h2v2h-2zM1476 507h2v2h-2zM1476 509h2v2h-2zM1352 508h2v2h-2zM1355 508h2v2h-2zM1316 510h2v2h-2zM1319 510h2v2h-2zM1458 512h2v2h-2zM1470 513h3v2h-3zM1470 517h3v2h-3zM1476 514h2v2h-2zM1476 517h2v2h-2zM1464 520h2v2h-2zM1464 522h2v2h-2zM1469 522h3v4h-3zM1473 522h3v4h-3zM1479 527h2v2h-2zM1479 530h2v2h-2zM1468 529h2v2h-2zM1473 532h3v3h-3zM1473 536h3v3h-3zM1479 535h2v2h-2zM1468 537h2v2h-2zM1468 540h2v2h-2zM1473 542h3v2h-3zM1473 546h3v2h-3zM1479 543h2v2h-2zM1479 546h2v2h-2zM1456 544h2v2h-2zM1456 547h2v2h-2zM1465 546h3v2h-3zM1465 550h3v2h-3zM1471 551h2v2h-2zM1471 554h2v2h-2zM1476 551h2v2h-2zM1476 554h2v2h-2zM1460 555h2v2h-2zM1463 555h2v2h-2zM1468 559h2v2h-2zM1471 559h2v2h-2zM1480 563h2v2h-2zM1480 566h2v2h-2zM1456 564h2v2h-2zM1456 567h2v2h-2zM1464 564h3v4h-3zM1469 564h3v4h-3zM1475 569h2v2h-2zM1475 571h2v2h-2zM1469 571h2v3h-2zM1460 572h2v2h-2zM1460 575h2v2h-2zM1480 574h2v2h-2zM1480 577h2v2h-2zM1474 579h2v2h-2zM1465 577h3v2h-3zM1465 581h3v2h-3zM1375 578h2v2h-2zM1375 581h2v2h-2zM1476 584h3v2h-3zM1476 588h3v2h-3zM1464 589h2v2h-2zM1470 587h2v2h-2zM1470 590h2v2h-2zM1370 589h2v2h-2zM1370 592h2v2h-2zM1464 594h3v2h-3zM1464 597h3v2h-3zM1478 596h2v2h-2zM1478 599h2v2h-2zM1470 598h2v2h-2zM1470 600h2v2h-2zM1464 602h3v2h-3zM1475 604h2v2h-2zM1475 607h2v2h-2zM1470 608h2v2h-2zM1464 611h2v2h-2zM1464 614h2v2h-2zM1281 613h2v2h-2zM1285 613h2v2h-2zM1290 613h2v2h-2zM1292 613h2v2h-2zM1301 613h3v3h-3zM1305 613h3v3h-3zM1311 613h2v2h-2zM1331 616h2v2h-2zM1357 613h2v2h-2zM1360 613h2v2h-2zM1382 613h2v2h-2zM1382 616h2v2h-2zM1387 613h2v2h-2zM1387 615h2v2h-2zM1396 613h4v3h-4zM1396 617h4v3h-4zM1403 613h3v3h-3zM1403 617h3v3h-3zM1413 613h2v2h-2zM1422 617h2v2h-2zM1431 613h2v2h-2zM1435 613h2v2h-2zM1469 613h2v2h-2zM1472 613h2v2h-2zM1374 614h2v2h-2zM1374 617h2v2h-2zM1319 616h2v2h-2zM1319 619h2v2h-2zM1440 618h2v2h-2zM1445 616h2v2h-2zM1447 616h2v2h-2zM1287 621h2v2h-2zM1292 618h3v2h-3zM1311 618h3v2h-3zM1352 618h3v4h-3zM1356 618h3v4h-3zM1298 619h2v2h-2zM1298 622h2v2h-2zM1340 619h3v3h-3zM1370 622h2v2h-2zM1370 625h2v2h-2zM1417 627h4v3h-4zM1387 626h2v2h-2zM1362 624h2v2h-2zM1362 627h2v2h-2zM1352 625h2v3h-2zM1409 627h2v2h-2zM1409 630h2v2h-2zM1367 630h2v3h-2zM1392 630h2v2h-2zM1392 633h2v2h-2zM1319 631h2v2h-2zM1347 631h2v3h-2zM1351 631h2v3h-2zM1356 635h2v2h-2zM1385 631h2v2h-2zM1385 634h2v2h-2zM1361 632h2v2h-2zM1361 634h2v2h-2zM1313 634h2v2h-2zM1313 638h2v2h-2zM1324 634h2v2h-2zM1327 634h2v2h-2zM1335 635h2v2h-2zM1408 635h2v2h-2zM1346 637h3v2h-3zM1346 640h3v2h-3zM1322 639h3v2h-3zM1322 642h3v2h-3zM1384 639h2v3h-2zM1336 640h2v3h-2zM1340 640h2v3h-2zM1357 640h2v2h-2zM1403 644h3v2h-3zM1362 642h3v2h-3zM1362 646h3v2h-3zM1368 642h2v2h-2zM1368 645h2v2h-2zM1390 645h2v3h-2zM1336 646h2v2h-2zM1336 649h2v2h-2zM1341 646h2v2h-2zM1341 649h2v2h-2zM1324 647h2v2h-2zM1346 648h2v2h-2zM1346 652h2v2h-2zM1373 649h2v2h-2zM1373 652h2v2h-2zM1313 650h2v2h-2zM1313 653h2v2h-2zM1386 651h2v3h-2zM1389 651h2v3h-2zM1301 652h2v2h-2zM1304 652h2v2h-2zM1110 584h3v2h-3zM1110 588h3v2h-3zM1116 584h2v2h-2zM1118 584h2v2h-2zM1123 585h2v2h-2zM1101 586h2v3h-2zM1105 586h2v3h-2zM1095 587h2v2h-2zM1095 591h2v2h-2zM1088 588h3v2h-3zM1024 593h3v3h-3zM1030 589h3v2h-3zM1036 589h2v2h-2zM1036 592h2v2h-2zM1041 593h3v2h-3zM1047 589h2v2h-2zM1050 589h2v2h-2zM1065 589h2v2h-2zM1070 589h2v2h-2zM1073 589h2v2h-2zM1078 589h3v2h-3zM1078 593h3v2h-3zM1160 592h2v3h-2zM1104 593h3v3h-3zM1104 597h3v3h-3zM1047 594h2v2h-2zM1049 594h2v2h-2zM1057 594h2v2h-2zM1065 594h2v2h-2zM1070 594h3v3h-3zM1070 598h3v3h-3zM1116 594h2v2h-2zM1116 597h2v2h-2zM1084 596h2v3h-2zM1088 596h2v3h-2zM1018 597h2v2h-2zM1018 600h2v2h-2zM1165 597h2v2h-2zM1165 600h2v2h-2zM1156 598h2v2h-2zM1156 601h2v2h-2zM1056 599h2v2h-2zM1056 602h2v2h-2zM1061 599h2v2h-2zM1064 599h2v2h-2zM1093 599h2v3h-2zM1097 599h2v3h-2zM1076 600h2v2h-2zM1079 600h2v2h-2zM1110 601h3v2h-3zM1110 605h3v2h-3zM1084 602h3v2h-3zM1084 606h3v2h-3zM1023 603h2v2h-2zM1023 606h2v2h-2zM1061 604h2v2h-2zM1061 607h2v2h-2zM1066 604h2v2h-2zM1069 604h2v2h-2zM1018 608h2v2h-2zM1090 605h2v2h-2zM1090 608h2v2h-2zM1099 605h2v3h-2zM1161 608h2v2h-2zM1166 605h2v2h-2zM1166 609h2v2h-2zM1156 607h2v2h-2zM1066 609h2v2h-2zM1069 609h2v2h-2zM1116 609h2v2h-2zM1023 614h3v2h-3zM1056 613h2v2h-2zM1056 616h2v2h-2zM1108 613h2v2h-2zM1111 613h2v2h-2zM1065 614h2v3h-2zM1156 616h2v2h-2zM1156 620h2v2h-2zM1116 619h2v2h-2zM1110 618h2v2h-2zM1018 619h3v3h-3zM1018 623h3v3h-3zM1024 623h3v2h-3zM1061 623h3v2h-3zM1056 621h2v2h-2zM1056 624h2v2h-2zM1108 623h2v2h-2zM1111 623h2v2h-2zM1156 625h3v2h-3zM1116 627h2v2h-2zM1116 631h2v2h-2zM1025 628h2v2h-2zM1025 631h2v2h-2zM1018 629h3v2h-3zM1018 633h3v2h-3zM1056 629h2v2h-2zM1069 634h3v2h-3zM1064 631h2v2h-2zM1064 634h2v2h-2zM1108 631h2v2h-2zM1111 631h2v2h-2zM1156 633h2v2h-2zM1156 636h2v2h-2zM1056 634h2v2h-2zM1056 637h2v2h-2zM1087 636h2v3h-2zM1092 636h3v2h-3zM1098 636h3v3h-3zM1098 640h3v3h-3zM1104 639h2v2h-2zM1113 640h3v2h-3zM1020 641h2v2h-2zM1066 639h3v3h-3zM1066 643h3v3h-3zM1072 639h2v2h-2zM1072 642h2v2h-2zM1025 640h2v2h-2zM1027 640h2v2h-2zM1044 640h2v2h-2zM1051 640h2v2h-2zM1051 643h2v2h-2zM1056 642h2v2h-2zM1059 642h2v2h-2zM1081 642h2v3h-2zM1086 642h2v2h-2zM1086 645h2v2h-2zM1104 644h2v2h-2zM1098 646h2v2h-2zM1098 649h2v2h-2zM1072 647h2v2h-2zM1072 650h2v2h-2zM1077 648h3v2h-3zM1077 651h3v2h-3zM1114 648h2v2h-2zM1114 651h2v2h-2zM1083 650h2v3h-2zM1087 650h2v3h-2zM1123 650h2v3h-2zM1136 650h2v3h-2zM1139 650h2v3h-2zM1144 650h3v3h-3zM1148 650h3v3h-3zM491 407h2v2h-2zM494 407h2v2h-2zM499 407h2v2h-2zM502 407h2v2h-2zM507 410h2v2h-2zM512 407h2v2h-2zM512 410h2v2h-2zM518 414h2v2h-2zM491 412h2v2h-2zM493 412h2v2h-2zM499 412h2v2h-2zM502 412h2v2h-2zM619 443h3v4h-3zM624 443h3v4h-3zM630 443h2v2h-2zM632 443h2v2h-2zM641 443h2v2h-2zM646 443h2v2h-2zM649 443h2v2h-2zM636 448h3v2h-3zM642 448h2v2h-2zM645 448h2v2h-2zM650 448h2v2h-2zM650 451h2v2h-2zM619 453h2v2h-2zM622 453h2v2h-2zM646 456h2v3h-2zM650 456h2v3h-2zM577 350h2v2h-2zM582 347h2v2h-2zM582 350h2v2h-2zM587 347h2v2h-2zM587 351h2v2h-2zM592 347h3v4h-3zM597 347h3v4h-3zM607 350h2v2h-2zM612 347h2v2h-2zM615 347h2v2h-2zM612 352h2v2h-2zM615 352h2v2h-2zM594 354h2v2h-2zM594 356h2v2h-2zM599 354h2v2h-2zM602 354h2v2h-2zM578 355h2v2h-2zM477 435h2v2h-2zM477 438h2v2h-2zM477 443h2v2h-2zM480 443h2v2h-2zM477 448h2v2h-2zM477 459h2v2h-2zM477 462h2v2h-2zM687 455h2v3h-2zM696 455h2v2h-2zM696 458h2v2h-2zM705 455h2v2h-2zM709 455h2v2h-2zM714 455h2v2h-2zM717 455h2v2h-2zM722 455h2v2h-2zM733 455h2v2h-2zM893 362h2v2h-2zM914 362h2v2h-2zM917 362h2v2h-2zM922 362h2v2h-2zM922 365h2v2h-2zM927 363h2v2h-2zM927 366h2v2h-2zM898 365h2v2h-2zM901 365h2v2h-2zM890 367h2v2h-2zM893 367h2v2h-2zM906 368h3v2h-3zM906 372h3v2h-3zM898 370h3v2h-3zM898 373h3v2h-3zM919 370h2v2h-2zM891 376h2v2h-2zM908 377h2v2h-2zM911 377h2v2h-2zM896 378h2v2h-2zM896 381h2v2h-2zM911 382h2v2h-2zM911 385h2v2h-2zM906 387h2v2h-2zM906 390h2v2h-2zM911 390h3v2h-3zM931 467h2v2h-2zM934 467h2v2h-2zM942 467h2v2h-2zM939 472h2v2h-2zM939 474h2v2h-2zM957 429h2v3h-2zM962 429h2v3h-2zM965 429h2v3h-2zM966 442h2v2h-2zM953 444h2v2h-2zM953 446h2v2h-2zM962 447h2v2h-2zM934 459h3v2h-3zM934 463h3v2h-3zM940 459h2v2h-2zM940 462h2v2h-2zM940 467h2v2h-2zM943 467h2v2h-2zM939 472h2v2h-2zM939 475h2v2h-2zM944 472h2v2h-2zM944 475h2v2h-2zM934 474h2v2h-2zM934 477h2v2h-2zM934 409h2v2h-2zM934 413h2v2h-2zM939 409h2v2h-2zM944 409h3v2h-3zM939 421h2v2h-2zM934 418h2v2h-2zM934 421h2v2h-2zM911 420h3v3h-3zM918 420h2v2h-2zM918 423h2v2h-2zM928 522h2v2h-2zM933 519h3v2h-3zM933 523h3v2h-3zM939 519h2v2h-2zM942 519h2v2h-2zM951 519h2v3h-2zM955 519h2v3h-2zM947 525h2v2h-2zM947 528h2v2h-2zM934 528h2v2h-2zM934 531h2v2h-2zM956 529h2v2h-2zM939 530h2v2h-2zM939 533h2v2h-2zM928 531h2v2h-2zM928 535h2v2h-2zM948 533h2v2h-2zM948 536h2v2h-2zM933 536h2v2h-2zM933 539h2v2h-2zM928 540h2v2h-2zM928 543h2v2h-2zM942 540h3v3h-3zM942 544h3v3h-3zM953 540h2v2h-2zM956 540h2v2h-2zM933 544h2v2h-2zM937 544h2v2h-2zM948 545h3v4h-3zM958 545h2v2h-2zM958 548h2v2h-2zM963 549h2v2h-2zM932 549h2v2h-2zM935 549h2v2h-2zM940 550h2v2h-2zM943 550h2v2h-2zM968 554h2v2h-2zM957 553h2v2h-2zM957 556h2v2h-2zM963 554h2v2h-2zM963 557h2v2h-2zM940 555h2v2h-2zM940 558h2v2h-2zM933 557h2v2h-2zM945 558h2v2h-2zM949 558h2v2h-2zM968 559h2v2h-2zM968 562h2v2h-2zM934 562h2v2h-2zM934 565h2v2h-2zM939 563h2v2h-2zM939 566h2v2h-2zM944 563h2v2h-2zM949 563h2v2h-2zM949 566h2v2h-2zM959 564h2v2h-2zM959 567h2v2h-2zM940 571h2v2h-2zM943 571h2v2h-2zM948 571h2v2h-2zM951 571h2v2h-2zM968 571h2v2h-2zM968 573h2v2h-2zM963 579h2v2h-2zM968 578h2v2h-2zM968 581h2v2h-2zM957 579h2v2h-2zM957 582h2v2h-2zM961 587h2v2h-2zM463 525h2v3h-2zM467 525h2v3h-2zM463 531h2v2h-2zM468 540h3v2h-3zM463 542h2v2h-2zM463 544h2v2h-2zM471 545h2v2h-2zM467 550h2v2h-2zM470 550h2v2h-2zM469 569h2v3h-2zM472 569h2v3h-2zM485 569h3v2h-3zM485 573h3v2h-3zM477 572h3v2h-3zM477 576h3v2h-3zM469 575h2v2h-2zM472 575h2v2h-2zM469 580h3v2h-3zM469 584h3v2h-3zM475 584h3v2h-3zM484 584h2v2h-2zM473 589h2v2h-2zM476 589h2v2h-2zM481 589h2v2h-2zM481 592h2v2h-2zM486 592h2v2h-2zM486 595h2v2h-2zM469 598h3v3h-3zM475 598h3v2h-3zM486 600h3v2h-3zM486 604h3v2h-3zM481 602h2v2h-2zM481 605h2v2h-2zM475 603h2v2h-2zM475 606h2v2h-2zM469 607h2v2h-2zM486 612h3v2h-3zM471 612h2v2h-2zM530 599h2v2h-2zM530 602h2v2h-2zM531 610h2v2h-2zM534 610h2v2h-2zM526 612h2v2h-2zM526 615h2v2h-2zM531 621h2v2h-2zM1441 413h2v2h-2zM1438 418h3v4h-3zM1443 418h3v4h-3zM1438 425h2v2h-2zM1441 425h2v2h-2zM1438 430h2v2h-2zM1441 430h2v2h-2zM1438 438h2v2h-2zM1444 435h2v2h-2zM1444 438h2v2h-2zM1438 443h2v2h-2zM1438 446h2v2h-2zM1443 443h2v2h-2zM1445 443h2v2h-2zM1445 448h2v2h-2zM1445 451h2v2h-2zM1438 451h2v2h-2zM1438 454h2v2h-2zM1443 459h2v2h-2zM1445 464h2v2h-2zM1468 392h2v2h-2zM1471 392h2v2h-2zM1476 396h2v2h-2zM1481 393h2v2h-2zM1481 396h2v2h-2zM1468 400h2v2h-2zM1473 401h2v2h-2zM1473 404h2v2h-2zM1478 405h2v2h-2zM1480 405h2v2h-2zM1471 409h2v2h-2zM1480 410h2v2h-2zM1468 414h2v2h-2zM1471 414h2v2h-2zM1476 415h2v2h-2zM1479 415h2v2h-2zM1468 419h2v2h-2zM1470 419h2v2h-2zM1479 422h2v2h-2zM1479 425h2v2h-2zM1471 424h2v2h-2zM1468 429h2v2h-2zM1473 429h2v2h-2zM1473 432h2v2h-2zM1478 430h2v2h-2zM1478 433h2v2h-2zM1468 437h2v3h-2zM1472 437h2v3h-2zM1478 438h2v2h-2zM1478 441h2v2h-2zM1468 443h2v3h-2zM1471 443h2v3h-2zM1476 446h2v2h-2zM1468 449h2v2h-2zM1471 449h2v2h-2zM1476 451h2v2h-2zM1476 454h2v2h-2zM1481 454h2v2h-2zM1468 454h2v2h-2zM1471 454h2v2h-2zM1468 459h3v2h-3zM1468 463h3v2h-3zM1474 459h2v3h-2zM1477 459h2v3h-2zM1132 580h2v2h-2zM1141 577h2v2h-2zM1141 580h2v2h-2zM1146 577h2v2h-2zM1146 580h2v2h-2zM1151 577h3v2h-3zM1151 581h3v2h-3zM1157 577h2v2h-2zM1160 577h2v2h-2zM1158 582h2v2h-2z" fill="#fdd838" shape-rendering="crispEdges"/>
<path d="M602 338.5h11v6.5h-11zM567.453 376.023h10.7936v10.5536h-10.7936zM625.92 415.02h8.16v8.96h-8.16zM658 429.4h10.5v7h-10.5zM499.3 473h4v2.5h-4zM507.8 473h4v2.5h-4zM684 435h5v3h-5zM684 447h5v3.5h-5zM553.5 512.5h7v9.5h-7zM887.753 464.453h6.664v6.664h-6.664zM887.753 472.783h6.664v6.664h-6.664zM896.083 464.453h6.664v6.664h-6.664zM896.083 472.783h6.664v6.664h-6.664zM772.298 554.731h8.2688v8.5344h-8.2688zM772.298 565.399h8.2688v8.5344h-8.2688zM772.298 576.067h8.2688v8.5344h-8.2688zM772.298 586.735h8.2688v8.5344h-8.2688zM782.634 554.731h8.2688v8.5344h-8.2688zM782.634 565.399h8.2688v8.5344h-8.2688zM782.634 576.067h8.2688v8.5344h-8.2688zM782.634 586.735h8.2688v8.5344h-8.2688zM874.489 542.472h8.54933v7.616h-8.54933zM874.489 551.992h8.54933v7.616h-8.54933zM874.489 561.512h8.54933v7.616h-8.54933zM885.175 542.472h8.54933v7.616h-8.54933zM885.175 551.992h8.54933v7.616h-8.54933zM885.175 561.512h8.54933v7.616h-8.54933zM895.862 542.472h8.54933v7.616h-8.54933zM895.862 551.992h8.54933v7.616h-8.54933zM895.862 561.512h8.54933v7.616h-8.54933zM930.806 492.856h7.888v8.288h-7.888zM946 453.5h9v3.5h-9zM945 565h9v3h-9zM930.508 550.508h5.984v5.984h-5.984zM519 636h4v4.5h-4zM547.5 636h4v4.5h-4zM519 653h4v4.5h-4zM547.5 653h4v4.5h-4zM603.35 638.95h6.8v7.6h-6.8zM863.5 630.5h4v4.5h-4zM896.5 630.5h4v4.5h-4zM863.5 647h4v4.5h-4zM896.5 647h4v4.5h-4zM445 516h8v10h-8zM463.85 513.95h6.8v7.6h-6.8zM504 607.5h4v2.5h-4zM511 607.5h4v2.5h-4zM1032 383h4v4h-4zM1038 387h2v2h-2zM1030 394h4v4h-4zM1020 409h3v4h-3zM1025 409h3v4h-3zM1036 409h3v4h-3zM1041 409h3v4h-3zM1050 441h21v6.5h-21zM1141 441h21v6.5h-21zM1203 441h5.5v11h-5.5zM1016 566h17v7h-17zM1056 566h16v7h-16zM1141 566h17v7h-17zM1200 564h8v8h-8zM992 521.5h6v5.5h-6zM985 590h15v10h-15zM1005 509h4.5v4.5h-4.5zM1014 509h4.5v4.5h-4.5zM1008 524h4.5v4.5h-4.5zM1127 510.5h4.5v4.5h-4.5zM1135 510.5h4.5v4.5h-4.5zM1130 526.5h4.5v4.5h-4.5zM1399.89 375.494h5.712v10.512h-5.712zM1399.6 332.5h5v3h-5zM1499.5 395h10v14.5h-10zM1500 515h10.5v14h-10.5zM1232 426h6v6h-6zM1256 426h6v6h-6zM1303.39 445.194h5.712v6.512h-5.712zM1223 465h5v6h-5zM1263.38 570.278h7.344v8.944h-7.344zM1184.69 597.442h7.616v9.616h-7.616zM1291.25 635.648h10.304v8.704h-10.304zM1270.5 624.7h11.5v7.3h-11.5zM1270.5 637.8h11.5v7.3h-11.5zM1034.77 603.519h5.984v7.98933h-5.984zM1034.77 613.505h5.984v7.98933h-5.984zM1034.77 623.492h5.984v7.98933h-5.984zM1042.25 603.519h5.984v7.98933h-5.984zM1042.25 613.505h5.984v7.98933h-5.984zM1042.25 623.492h5.984v7.98933h-5.984zM1127.51 599.537h8.432v8.616h-8.432zM1127.51 610.307h8.432v8.616h-8.432zM1127.51 621.077h8.432v8.616h-8.432zM1127.51 631.847h8.432v8.616h-8.432zM1138.05 599.537h8.432v8.616h-8.432zM1138.05 610.307h8.432v8.616h-8.432zM1138.05 621.077h8.432v8.616h-8.432zM1138.05 631.847h8.432v8.616h-8.432zM1083.53 617.332h15.936v10.336h-15.936zM1478 655h7v10.5h-7zM568 362h2v2h-2zM568 365h2v2h-2zM583 362h3v2h-3zM549 370h2v2h-2zM552 370h2v2h-2zM600 372h2v2h-2zM532 372h2v3h-2zM556 379h2v2h-2zM523 381h3v2h-3zM523 385h3v2h-3zM518 385h2v2h-2zM529 383h2v3h-2zM549 386h3v3h-3zM557 387h2v2h-2zM529 389h2v2h-2zM534 389h2v2h-2zM538 389h2v2h-2zM518 390h2v2h-2zM557 392h2v2h-2zM557 395h2v2h-2zM636 379h2v2h-2zM661 380h4v3h-4zM623 390h3v2h-3zM623 394h3v2h-3zM658 396h4v3h-4zM665 396h2v2h-2zM636 402h3v3h-3zM641 420h3v2h-3zM653 464h2v2h-2zM661 471h7v4h-7zM677 470h4v3h-4zM688 464h3v4h-3zM693 464h3v4h-3zM699 464h2v3h-2zM708 466h2v2h-2zM713 464h4v3h-4zM738 464h2v2h-2zM727 471h2v2h-2zM732 471h3v2h-3zM676 476h4v3h-4zM665 478h2v2h-2zM713 480h2v2h-2zM652 481h4v3h-4zM652 485h4v3h-4zM670 485h2v2h-2zM670 489h2v2h-2zM670 494h2v2h-2zM551 499h3v4h-3zM562 499h2v2h-2zM570 499h2v2h-2zM502 502h3v3h-3zM602 503h2v2h-2zM521 507h2v2h-2zM574 506h2v2h-2zM537 509h2v2h-2zM544 514h3v2h-3zM644 510h2v2h-2zM671 515h2v2h-2zM502 515h2v2h-2zM637 514h2v2h-2zM507 516h3v2h-3zM507 520h3v2h-3zM482 517h3v4h-3zM616 518h7v4h-7zM497 520h2v2h-2zM602 520h2v2h-2zM524 521h2v3h-2zM568 522h2v3h-2zM642 522h2v2h-2zM536 529h3v2h-3zM602 525h3v2h-3zM602 529h3v2h-3zM626 531h2v2h-2zM608 528h3v2h-3zM549 529h3v2h-3zM704 533h2v2h-2zM536 540h4v3h-4zM621 535h2v2h-2zM560 540h3v2h-3zM599 540h2v2h-2zM604 537h3v3h-3zM566 538h2v2h-2zM641 538h2v2h-2zM631 544h3v2h-3zM722 540h2v2h-2zM637 543h2v3h-2zM559 545h2v2h-2zM701 548h2v2h-2zM634 549h2v3h-2zM595 554h2v2h-2zM509 556h2v2h-2zM671 560h2v2h-2zM676 562h4v3h-4zM706 561h2v2h-2zM732 559h3v2h-3zM738 564h4v3h-4zM620 565h2v2h-2zM639 565h3v2h-3zM711 562h2v3h-2zM671 565h2v2h-2zM671 569h2v2h-2zM745 565h3v2h-3zM745 569h3v2h-3zM660 566h2v2h-2zM665 567h3v2h-3zM632 573h2v2h-2zM644 573h2v2h-2zM604 575h2v2h-2zM662 576h3v3h-3zM619 578h3v2h-3zM735 578h2v2h-2zM743 582h3v2h-3zM608 584h4v3h-4zM711 589h7v4h-7zM721 589h3v2h-3zM727 589h2v2h-2zM631 590h2v2h-2zM650 594h2v3h-2zM605 596h2v2h-2zM610 599h2v2h-2zM672 604h2v2h-2zM651 613h3v2h-3zM661 610h2v2h-2zM547 561h2v2h-2zM552 561h2v2h-2zM567 572h2v2h-2zM550 577h2v3h-2zM563 577h3v2h-3zM572 578h2v2h-2zM552 583h2v2h-2zM569 586h2v2h-2zM563 585h2v2h-2zM542 591h3v2h-3zM557 591h3v2h-3zM563 593h2v2h-2zM560 601h2v2h-2zM560 605h2v2h-2zM565 609h2v2h-2zM565 613h2v2h-2zM575 610h2v2h-2zM552 611h2v2h-2zM570 611h2v2h-2zM586 611h3v2h-3zM565 618h2v2h-2zM587 620h3v2h-3zM570 624h3v2h-3zM602 626h2v2h-2zM584 628h2v2h-2zM618 630h2v2h-2zM920 441h2v3h-2zM871 445h3v3h-3zM864 446h2v3h-2zM843 448h3v2h-3zM815 452h2v2h-2zM820 449h2v2h-2zM827 449h2v2h-2zM778 450h2v2h-2zM832 452h2v2h-2zM865 457h3v2h-3zM871 456h2v2h-2zM911 458h2v2h-2zM911 462h2v2h-2zM828 460h3v2h-3zM915 467h2v2h-2zM824 468h2v2h-2zM866 473h2v2h-2zM871 476h2v2h-2zM833 480h2v2h-2zM838 480h2v2h-2zM876 480h3v2h-3zM915 481h2v3h-2zM823 482h2v2h-2zM853 486h3v2h-3zM859 483h4v3h-4zM871 486h2v2h-2zM759 487h3v4h-3zM866 490h2v2h-2zM891 488h2v2h-2zM817 493h3v2h-3zM885 494h2v3h-2zM819 498h2v2h-2zM826 501h3v2h-3zM764 504h2v2h-2zM813 506h2v2h-2zM818 503h3v2h-3zM867 503h2v2h-2zM844 505h2v2h-2zM844 508h2v2h-2zM837 511h4v3h-4zM900 510h3v2h-3zM858 509h2v2h-2zM828 510h3v2h-3zM847 513h2v2h-2zM769 514h2v3h-2zM778 514h2v2h-2zM786 514h2v2h-2zM797 514h2v2h-2zM802 514h2v2h-2zM850 533h2v2h-2zM855 530h2v2h-2zM861 531h2v2h-2zM761 534h3v2h-3zM777 534h2v2h-2zM791 534h2v3h-2zM814 534h2v2h-2zM777 539h3v2h-3zM819 539h3v3h-3zM791 540h3v2h-3zM802 541h2v2h-2zM802 543h2v2h-2zM757 546h2v2h-2zM849 551h4v3h-4zM856 549h2v2h-2zM812 551h2v2h-2zM861 548h2v2h-2zM757 551h2v2h-2zM824 552h4v3h-4zM806 554h3v2h-3zM839 559h2v2h-2zM844 559h2v2h-2zM819 560h2v2h-2zM819 563h2v2h-2zM757 564h2v2h-2zM757 567h2v2h-2zM852 565h2v2h-2zM857 566h2v2h-2zM838 567h2v2h-2zM830 568h2v2h-2zM757 575h3v2h-3zM819 576h2v2h-2zM824 579h2v2h-2zM847 579h2v2h-2zM859 579h2v3h-2zM880 580h2v2h-2zM883 580h2v2h-2zM906 580h3v2h-3zM818 585h2v2h-2zM829 591h4v3h-4zM806 593h2v2h-2zM891 596h2v3h-2zM899 596h2v2h-2zM830 597h2v2h-2zM840 599h3v4h-3zM846 599h2v3h-2zM882 599h2v2h-2zM800 600h3v2h-3zM781 609h3v2h-3zM795 605h2v2h-2zM846 605h2v3h-2zM850 605h2v3h-2zM811 606h3v2h-3zM833 606h2v3h-2zM861 611h2v2h-2zM787 610h2v2h-2zM828 613h2v2h-2zM833 612h2v3h-2zM1358 361h2v2h-2zM1379 361h2v2h-2zM1389 361h3v4h-3zM1358 366h2v3h-2zM1337 367h2v2h-2zM1366 370h2v2h-2zM1326 368h2v2h-2zM1304 371h2v3h-2zM1308 371h2v3h-2zM1299 377h2v2h-2zM1322 376h2v2h-2zM1325 376h2v2h-2zM1351 376h2v2h-2zM1340 379h3v4h-3zM1379 379h2v2h-2zM1356 380h2v2h-2zM1365 384h3v3h-3zM1369 384h3v3h-3zM1336 386h2v2h-2zM1375 387h2v3h-2zM1384 387h2v2h-2zM1367 390h2v2h-2zM1295 392h2v2h-2zM1336 394h2v2h-2zM1267 422h2v3h-2zM1225 425h2v2h-2zM1219 431h3v2h-3zM1219 434h3v2h-3zM1276 437h2v2h-2zM1266 441h2v2h-2zM1266 444h2v2h-2zM1223 445h9v6h-9zM1268 449h2v2h-2zM1275 451h2v2h-2zM1264 481h3v4h-3zM1265 488h2v2h-2zM1238 494h3v2h-3zM1221 497h4v3h-4zM1243 511h2v2h-2zM1267 517h2v2h-2zM1246 531h2v2h-2zM1272 538h2v2h-2zM1272 542h2v2h-2zM1220 544h2v3h-2zM1256 548h3v2h-3zM1269 553h3v2h-3zM1217 570h3v4h-3zM1248 576h2v2h-2zM1248 579h2v2h-2zM1201 583h4v3h-4zM1262 586h2v3h-2zM1271 589h3v2h-3zM1227 587h2v2h-2zM1271 594h3v2h-3zM1263 606h3v3h-3zM1192 618h3v2h-3zM1230 619h2v3h-2zM1213 620h2v3h-2zM1217 620h2v3h-2zM1192 628h3v3h-3zM1263 632h4v3h-4zM1182 629h2v3h-2zM1198 629h4v3h-4zM1198 634h4v3h-4zM1192 638h3v2h-3zM1182 635h2v2h-2zM1318 427h2v3h-2zM1331 430h2v2h-2zM1331 433h2v2h-2zM1316 433h2v2h-2zM1285 456h2v2h-2zM1310 468h2v2h-2zM1310 471h2v2h-2zM1308 489h2v2h-2zM1443 491h2v2h-2zM1452 491h2v2h-2zM1452 494h2v2h-2zM1466 491h2v2h-2zM1317 492h2v3h-2zM1314 498h2v3h-2zM1338 503h4v3h-4zM1352 498h2v2h-2zM1393 498h2v2h-2zM1393 501h2v2h-2zM1402 498h2v3h-2zM1415 498h2v2h-2zM1420 501h2v2h-2zM1407 501h2v2h-2zM1327 502h3v3h-3zM1458 502h2v2h-2zM1314 504h2v3h-2zM1424 507h2v2h-2zM1461 512h2v2h-2zM1468 532h2v2h-2zM1479 538h2v2h-2zM1465 571h2v3h-2zM1474 576h2v2h-2zM1464 586h2v2h-2zM1464 605h3v2h-3zM1374 603h2v2h-2zM1374 606h2v2h-2zM1470 605h2v2h-2zM1314 613h2v2h-2zM1331 613h2v2h-2zM1348 613h2v2h-2zM1352 613h2v2h-2zM1413 617h2v2h-2zM1422 613h2v2h-2zM1440 616h2v2h-2zM1287 618h2v2h-2zM1292 622h3v2h-3zM1311 622h3v2h-3zM1336 619h3v3h-3zM1461 619h2v2h-2zM1464 619h2v2h-2zM1417 622h4v3h-4zM1387 623h2v2h-2zM1399 623h3v2h-3zM1399 627h3v2h-3zM1355 625h2v3h-2zM1371 630h2v3h-2zM1380 630h2v2h-2zM1380 632h2v2h-2zM1319 634h2v2h-2zM1356 631h2v2h-2zM1340 632h3v2h-3zM1340 635h3v2h-3zM1332 635h2v2h-2zM1405 635h2v2h-2zM1388 639h2v3h-2zM1357 643h2v2h-2zM1403 640h3v2h-3zM1386 645h2v3h-2zM1324 651h2v2h-2zM1126 585h2v2h-2zM1088 591h3v2h-3zM1024 589h3v3h-3zM1030 593h3v2h-3zM1041 589h3v2h-3zM1055 589h2v2h-2zM1058 589h2v2h-2zM1063 589h2v2h-2zM1156 592h2v3h-2zM1110 593h3v2h-3zM1110 596h3v2h-3zM1054 594h2v2h-2zM1062 594h2v2h-2zM1018 605h2v2h-2zM1074 605h2v2h-2zM1077 605h2v2h-2zM1095 605h2v3h-2zM1161 605h2v2h-2zM1156 610h2v2h-2zM1116 612h2v2h-2zM1023 611h3v2h-3zM1069 614h2v3h-2zM1116 617h2v2h-2zM1108 618h2v2h-2zM1024 619h3v2h-3zM1061 620h3v2h-3zM1067 620h4v3h-4zM1067 624h4v3h-4zM1156 628h3v2h-3zM1059 629h2v2h-2zM1069 630h3v2h-3zM1083 636h2v3h-2zM1092 640h3v2h-3zM1104 636h2v2h-2zM1113 636h3v2h-3zM1020 638h2v2h-2zM1032 640h2v3h-2zM1036 640h2v3h-2zM1041 640h2v2h-2zM1077 642h2v3h-2zM1104 647h2v2h-2zM1092 645h3v2h-3zM1092 648h3v2h-3zM1119 650h2v3h-2zM507 407h2v2h-2zM518 411h2v2h-2zM637 443h2v2h-2zM630 448h3v3h-3zM630 452h3v3h-3zM636 452h3v2h-3zM577 347h2v2h-2zM607 347h2v2h-2zM581 355h2v2h-2zM477 451h2v2h-2zM691 455h2v3h-2zM722 458h2v2h-2zM731 455h2v2h-2zM890 362h2v2h-2zM914 367h2v2h-2zM914 369h2v2h-2zM922 370h2v2h-2zM891 372h2v2h-2zM911 394h3v2h-3zM939 467h2v2h-2zM953 429h2v3h-2zM961 435h2v2h-2zM961 439h2v2h-2zM966 439h2v2h-2zM962 449h2v2h-2zM939 412h2v2h-2zM944 413h3v2h-3zM939 417h2v2h-2zM907 420h3v3h-3zM928 519h2v2h-2zM956 532h2v2h-2zM952 545h3v4h-3zM963 546h2v2h-2zM948 552h2v2h-2zM951 552h2v2h-2zM968 552h2v2h-2zM935 557h2v2h-2zM944 566h2v2h-2zM963 575h2v2h-2zM966 586h2v2h-2zM966 590h2v2h-2zM958 587h2v2h-2zM463 534h2v2h-2zM468 537h3v2h-3zM468 545h2v2h-2zM483 578h2v3h-2zM487 578h2v3h-2zM475 581h3v2h-3zM481 584h2v2h-2zM469 594h3v3h-3zM475 594h3v2h-3zM469 604h2v2h-2zM486 609h3v2h-3zM469 612h2v2h-2zM531 618h2v2h-2zM1438 413h2v2h-2zM1438 435h2v2h-2zM1443 456h2v2h-2zM1438 459h2v2h-2zM1438 462h2v2h-2zM1443 464h2v2h-2zM1476 392h2v2h-2zM1468 397h2v2h-2zM1468 409h2v2h-2zM1476 410h2v2h-2zM1468 424h2v2h-2zM1468 432h2v2h-2zM1479 446h2v2h-2zM1481 451h2v2h-2zM1132 577h2v2h-2zM1161 582h2v2h-2z" fill="#808080" shape-rendering="crispEdges"/>
<path d="M963 406h5v7h-5zM497 642h13v25h-13zM1021.5 509.5h4.5v4.5h-4.5zM1036 509.5h4.5v4.5h-4.5zM1028 524h4.5v4.5h-4.5zM1143 510.5h4.5v4.5h-4.5zM1157 510.5h4.5v4.5h-4.5zM1150 526.5h4.5v4.5h-4.5zM1399.6 326.5h5v3h-5z" fill="#00707c" shape-rendering="crispEdges"/>
<path d="M515.5 349.5h18v13h-18zM563.5 372.5h19v18h-19zM622.5 412.5h14v15h-14zM642.5 384.5h11v15h-11zM612.5 360.5h9v12h-9zM609.5 378.5h6v11h-6zM495.5 421.5h19v55h-19zM682.5 433.5h55v19h-55zM684.5 426.5h2v5h-2zM688.5 426.5h2v5h-2zM692.5 426.5h2v5h-2zM696.5 426.5h2v5h-2zM701.5 426.5h2v5h-2zM705.5 426.5h2v5h-2zM709.5 426.5h2v5h-2zM713.5 426.5h2v5h-2zM717.5 426.5h2v5h-2zM721.5 426.5h2v5h-2zM726.5 426.5h2v5h-2zM730.5 426.5h2v5h-2zM734.5 426.5h2v5h-2zM579.5 508.5h19v23h-19zM650.5 494.5h12v12h-12zM650.5 512.5h16v11h-16zM650.5 527.5h16v11h-16zM650.5 542.5h16v11h-16zM721.5 492.5h20v11h-20zM728.5 507.5h9v13h-9zM720.5 524.5h16v11h-16zM671.5 533.5h10v19h-10zM686.5 536.5h10v19h-10zM728.5 542.5h12v13h-12zM711.5 568.5h19v16h-19zM550.5 510.5h16v12h-16zM883.5 460.5h23v23h-23zM766.5 549.5h29v51h-29zM867.5 535.5h45v41h-45zM836.5 585.5h10v9h-10zM852.5 585.5h10v9h-10zM870.5 585.5h16v9h-16zM893.5 577.5h8v14h-8zM956.5 405.5h12v9h-12zM928.5 490.5h13v14h-13zM915.5 399.5h12v9h-12zM928.5 548.5h10v10h-10zM518.5 635.5h33v23h-33zM570.5 633.5h25v19h-25zM600.5 636.5h11v13h-11zM638.5 632.5h68v16h-68zM770.5 638.5h73v17h-73zM862.5 630.5h38v22h-38zM461.5 511.5h11v13h-11zM500.5 568.5h18v41h-18zM1031.5 382.5h5v9h-5zM1037.5 386.5h3v6h-3zM1029.5 393.5h5v9h-5zM1036.5 397.5h3v5h-3zM1023.5 404.5h5v2h-5zM1019.5 408.5h9v5h-9zM1031.5 408.5h2v5h-2zM1035.5 408.5h9v5h-9zM1062.5 405.5h9v13h-9zM1398.5 372.5h9v15h-9zM1384.5 326.5h29v10h-29zM1381.5 515.5h70v93h-70zM1231.5 425.5h14v7h-14zM1248.5 425.5h14v7h-14zM1262.5 463.5h17v13h-17zM1301.5 443.5h9v11h-9zM1222.5 464.5h12v7h-12zM1260.5 567.5h13v15h-13zM1182.5 594.5h13v15h-13zM1287.5 632.5h17v15h-17zM1247.5 495.5h18v11h-18zM1228.5 521.5h14v7h-14zM1228.5 530.5h14v7h-14zM1230.5 566.5h13v7h-13zM1230.5 576.5h13v7h-13zM1214.5 596.5h12v19h-12zM1200.5 594.5h11v20h-11zM1241.5 630.5h8v13h-8zM1252.5 630.5h7v13h-7zM1182.5 582.5h14v8h-14zM1246.5 478.5h13v11h-13zM1222.5 478.5h11v9h-11zM1252.5 508.5h10v10h-10zM1252.5 521.5h8v13h-8zM1030.5 599.5h21v36h-21zM1122.5 594.5h30v52h-30zM1078.5 613.5h25v18h-25zM1448.5 648.5h7v11h-7zM1460.5 648.5h7v11h-7zM554.5 361.5h3v6h-3zM559.5 361.5h6v3h-6zM567.5 361.5h3v6h-3zM576.5 361.5h4v7h-4zM582.5 361.5h4v6h-4zM588.5 361.5h3v7h-3zM594.5 361.5h3v6h-3zM540.5 369.5h3v6h-3zM548.5 369.5h6v3h-6zM556.5 369.5h3v6h-3zM593.5 369.5h4v7h-4zM599.5 369.5h3v5h-3zM585.5 370.5h3v7h-3zM531.5 371.5h6v4h-6zM524.5 372.5h3v6h-3zM512.5 376.5h8v4h-8zM545.5 376.5h3v6h-3zM599.5 376.5h3v6h-3zM529.5 377.5h6v3h-6zM537.5 377.5h5v9h-5zM550.5 377.5h3v6h-3zM555.5 378.5h3v6h-3zM590.5 378.5h4v7h-4zM585.5 379.5h3v6h-3zM522.5 380.5h4v7h-4zM512.5 382.5h3v6h-3zM517.5 382.5h3v5h-3zM528.5 382.5h7v4h-7zM596.5 384.5h3v6h-3zM544.5 385.5h8v4h-8zM554.5 386.5h5v3h-5zM585.5 387.5h3v6h-3zM590.5 387.5h3v6h-3zM528.5 388.5h3v6h-3zM533.5 388.5h7v3h-7zM517.5 389.5h6v3h-6zM542.5 391.5h6v3h-6zM550.5 391.5h3v6h-3zM556.5 391.5h3v6h-3zM533.5 393.5h6v3h-6zM561.5 394.5h6v3h-6zM569.5 394.5h6v3h-6zM635.5 378.5h7v3h-7zM644.5 378.5h6v3h-6zM660.5 379.5h5v9h-5zM626.5 380.5h4v7h-4zM632.5 383.5h6v3h-6zM632.5 388.5h3v6h-3zM622.5 389.5h4v7h-4zM657.5 390.5h5v9h-5zM664.5 391.5h3v7h-3zM628.5 396.5h4v8h-4zM635.5 397.5h4v8h-4zM657.5 401.5h5v9h-5zM620.5 402.5h3v6h-3zM641.5 403.5h4v6h-4zM647.5 403.5h6v3h-6zM647.5 408.5h6v3h-6zM641.5 411.5h3v6h-3zM655.5 412.5h3v6h-3zM646.5 413.5h6v3h-6zM646.5 418.5h6v3h-6zM640.5 419.5h4v7h-4zM625.5 430.5h7v4h-7zM634.5 430.5h6v3h-6zM652.5 463.5h6v3h-6zM660.5 463.5h8v12h-8zM670.5 463.5h4v7h-4zM676.5 463.5h5v10h-5zM687.5 463.5h9v5h-9zM698.5 463.5h7v4h-7zM707.5 463.5h3v5h-3zM712.5 463.5h5v9h-5zM719.5 463.5h5v9h-5zM726.5 463.5h9v5h-9zM737.5 463.5h6v3h-6zM647.5 464.5h3v6h-3zM737.5 468.5h3v5h-3zM742.5 468.5h4v7h-4zM698.5 469.5h3v6h-3zM687.5 470.5h3v6h-3zM707.5 470.5h3v6h-3zM726.5 470.5h3v6h-3zM731.5 470.5h4v7h-4zM652.5 471.5h4v7h-4zM692.5 471.5h3v6h-3zM670.5 472.5h3v7h-3zM712.5 474.5h6v3h-6zM720.5 474.5h4v7h-4zM675.5 475.5h5v8h-5zM737.5 476.5h3v6h-3zM658.5 477.5h3v6h-3zM664.5 477.5h3v7h-3zM697.5 478.5h4v6h-4zM707.5 478.5h3v6h-3zM743.5 478.5h4v7h-4zM682.5 479.5h4v7h-4zM712.5 479.5h3v7h-3zM726.5 479.5h3v6h-3zM651.5 480.5h5v8h-5zM643.5 482.5h4v6h-4zM731.5 482.5h3v6h-3zM718.5 483.5h6v3h-6zM669.5 484.5h3v7h-3zM689.5 484.5h6v3h-6zM658.5 485.5h3v5h-3zM490.5 490.5h4v6h-4zM496.5 490.5h3v6h-3zM501.5 490.5h5v9h-5zM643.5 490.5h3v6h-3zM509.5 492.5h4v6h-4zM666.5 493.5h6v3h-6zM745.5 493.5h3v7h-3zM516.5 494.5h3v6h-3zM486.5 498.5h4v7h-4zM528.5 498.5h13v8h-13zM543.5 498.5h5v9h-5zM550.5 498.5h9v5h-9zM561.5 498.5h6v3h-6zM569.5 498.5h5v3h-5zM576.5 498.5h9v5h-9zM591.5 498.5h3v6h-3zM643.5 498.5h3v6h-3zM666.5 498.5h6v3h-6zM508.5 500.5h6v3h-6zM501.5 501.5h4v8h-4zM631.5 501.5h3v6h-3zM492.5 502.5h3v6h-3zM601.5 502.5h3v6h-3zM636.5 502.5h5v9h-5zM520.5 503.5h3v6h-3zM561.5 503.5h9v5h-9zM606.5 503.5h6v3h-6zM666.5 503.5h6v3h-6zM614.5 504.5h4v8h-4zM620.5 504.5h6v3h-6zM507.5 505.5h4v8h-4zM550.5 505.5h6v3h-6zM573.5 505.5h3v7h-3zM718.5 506.5h6v3h-6zM745.5 506.5h3v6h-3zM482.5 508.5h3v6h-3zM487.5 508.5h3v6h-3zM513.5 508.5h3v5h-3zM525.5 508.5h9v5h-9zM536.5 508.5h5v3h-5zM606.5 508.5h5v3h-5zM543.5 509.5h4v7h-4zM620.5 509.5h3v6h-3zM625.5 509.5h3v5h-3zM631.5 509.5h3v5h-3zM643.5 509.5h3v6h-3zM567.5 510.5h3v6h-3zM496.5 511.5h3v6h-3zM518.5 511.5h3v7h-3zM670.5 511.5h3v6h-3zM718.5 511.5h4v8h-4zM501.5 512.5h3v5h-3zM601.5 513.5h8v4h-8zM636.5 513.5h3v7h-3zM572.5 514.5h3v5h-3zM742.5 514.5h6v3h-6zM506.5 515.5h4v7h-4zM512.5 515.5h4v8h-4zM523.5 515.5h6v3h-6zM531.5 515.5h3v6h-3zM481.5 516.5h9v5h-9zM536.5 516.5h3v6h-3zM625.5 516.5h4v8h-4zM615.5 517.5h8v12h-8zM631.5 517.5h3v6h-3zM541.5 518.5h5v10h-5zM496.5 519.5h6v3h-6zM601.5 519.5h6v3h-6zM609.5 519.5h3v6h-3zM519.5 520.5h7v4h-7zM745.5 520.5h3v6h-3zM567.5 521.5h6v4h-6zM641.5 521.5h3v5h-3zM529.5 523.5h4v7h-4zM636.5 523.5h3v5h-3zM670.5 523.5h3v6h-3zM485.5 524.5h3v6h-3zM535.5 524.5h4v7h-4zM601.5 524.5h4v7h-4zM522.5 526.5h3v6h-3zM625.5 526.5h3v7h-3zM567.5 527.5h3v7h-3zM572.5 527.5h4v8h-4zM607.5 527.5h4v7h-4zM548.5 528.5h4v7h-4zM554.5 528.5h9v5h-9zM641.5 528.5h4v7h-4zM740.5 528.5h6v3h-6zM630.5 530.5h3v7h-3zM635.5 530.5h3v6h-3zM613.5 531.5h5v3h-5zM481.5 532.5h7v4h-7zM527.5 532.5h6v3h-6zM703.5 532.5h6v3h-6zM711.5 532.5h4v7h-4zM535.5 533.5h5v10h-5zM543.5 534.5h3v6h-3zM578.5 534.5h8v13h-8zM588.5 534.5h8v5h-8zM620.5 534.5h3v7h-3zM554.5 535.5h3v6h-3zM559.5 535.5h4v7h-4zM598.5 536.5h3v6h-3zM603.5 536.5h8v4h-8zM613.5 536.5h4v7h-4zM548.5 537.5h3v6h-3zM565.5 537.5h3v7h-3zM570.5 537.5h6v4h-6zM625.5 537.5h3v6h-3zM640.5 537.5h6v3h-6zM705.5 537.5h3v6h-3zM481.5 538.5h6v3h-6zM522.5 538.5h3v6h-3zM630.5 539.5h4v7h-4zM700.5 539.5h3v6h-3zM721.5 539.5h3v6h-3zM527.5 540.5h4v7h-4zM744.5 540.5h3v6h-3zM710.5 541.5h4v7h-4zM542.5 542.5h3v6h-3zM592.5 542.5h3v6h-3zM603.5 542.5h3v7h-3zM608.5 542.5h3v6h-3zM636.5 542.5h7v4h-7zM716.5 542.5h3v6h-3zM481.5 543.5h3v5h-3zM570.5 543.5h3v6h-3zM555.5 544.5h6v3h-6zM597.5 544.5h4v7h-4zM623.5 545.5h4v8h-4zM700.5 547.5h3v6h-3zM721.5 547.5h3v6h-3zM613.5 548.5h6v3h-6zM629.5 548.5h7v4h-7zM639.5 548.5h5v3h-5zM745.5 548.5h3v6h-3zM705.5 549.5h3v6h-3zM608.5 550.5h3v6h-3zM710.5 550.5h6v3h-6zM586.5 551.5h6v3h-6zM603.5 551.5h3v6h-3zM594.5 553.5h3v7h-3zM613.5 553.5h4v6h-4zM638.5 553.5h9v5h-9zM630.5 554.5h6v3h-6zM496.5 555.5h6v4h-6zM508.5 555.5h3v5h-3zM619.5 555.5h6v3h-6zM700.5 555.5h3v6h-3zM710.5 555.5h7v4h-7zM670.5 556.5h3v6h-3zM675.5 556.5h5v9h-5zM744.5 556.5h3v6h-3zM649.5 557.5h9v5h-9zM660.5 557.5h3v6h-3zM665.5 557.5h3v7h-3zM705.5 557.5h3v6h-3zM608.5 558.5h3v6h-3zM723.5 558.5h6v3h-6zM731.5 558.5h4v7h-4zM737.5 558.5h5v9h-5zM603.5 559.5h3v7h-3zM627.5 559.5h3v6h-3zM686.5 559.5h6v3h-6zM619.5 560.5h3v7h-3zM638.5 560.5h4v7h-4zM644.5 560.5h3v6h-3zM710.5 561.5h7v4h-7zM613.5 562.5h4v6h-4zM632.5 564.5h3v6h-3zM649.5 564.5h5v8h-5zM670.5 564.5h3v7h-3zM744.5 564.5h4v7h-4zM656.5 565.5h6v3h-6zM664.5 566.5h4v7h-4zM608.5 567.5h3v6h-3zM599.5 569.5h6v3h-6zM619.5 569.5h4v6h-4zM637.5 569.5h4v7h-4zM738.5 569.5h3v6h-3zM626.5 570.5h3v5h-3zM656.5 570.5h3v6h-3zM613.5 571.5h3v5h-3zM631.5 572.5h3v6h-3zM643.5 572.5h3v5h-3zM743.5 573.5h3v6h-3zM603.5 574.5h3v6h-3zM648.5 574.5h4v8h-4zM608.5 575.5h3v6h-3zM661.5 575.5h4v8h-4zM618.5 577.5h4v7h-4zM624.5 577.5h3v6h-3zM734.5 577.5h6v3h-6zM655.5 578.5h3v6h-3zM640.5 579.5h6v3h-6zM629.5 580.5h5v3h-5zM667.5 581.5h3v6h-3zM742.5 581.5h4v7h-4zM599.5 582.5h6v3h-6zM734.5 582.5h6v3h-6zM607.5 583.5h5v10h-5zM640.5 584.5h4v6h-4zM646.5 584.5h4v7h-4zM624.5 585.5h4v7h-4zM660.5 585.5h3v6h-3zM619.5 586.5h3v6h-3zM601.5 587.5h3v6h-3zM710.5 588.5h8v13h-8zM720.5 588.5h4v7h-4zM726.5 588.5h7v3h-7zM614.5 589.5h3v6h-3zM630.5 589.5h3v7h-3zM655.5 589.5h3v6h-3zM665.5 589.5h5v3h-5zM639.5 592.5h4v7h-4zM645.5 593.5h7v4h-7zM660.5 593.5h3v7h-3zM619.5 594.5h5v9h-5zM666.5 594.5h3v6h-3zM600.5 595.5h7v3h-7zM609.5 595.5h3v6h-3zM720.5 597.5h5v9h-5zM626.5 598.5h4v6h-4zM634.5 598.5h3v6h-3zM649.5 599.5h4v7h-4zM601.5 600.5h3v6h-3zM655.5 600.5h3v6h-3zM640.5 601.5h3v6h-3zM660.5 602.5h9v5h-9zM671.5 603.5h3v5h-3zM710.5 603.5h3v6h-3zM715.5 603.5h3v6h-3zM611.5 604.5h3v5h-3zM616.5 605.5h5v9h-5zM623.5 606.5h8v4h-8zM635.5 606.5h3v6h-3zM650.5 608.5h4v7h-4zM660.5 609.5h7v3h-7zM676.5 609.5h6v3h-6zM688.5 609.5h3v6h-3zM693.5 609.5h6v4h-6zM701.5 609.5h3v6h-3zM707.5 611.5h6v3h-6zM546.5 560.5h3v6h-3zM551.5 560.5h3v6h-3zM556.5 560.5h6v3h-6zM564.5 560.5h3v6h-3zM569.5 560.5h3v6h-3zM574.5 560.5h3v6h-3zM579.5 560.5h6v3h-6zM556.5 565.5h4v6h-4zM579.5 565.5h4v7h-4zM542.5 568.5h3v6h-3zM547.5 568.5h3v6h-3zM566.5 568.5h3v6h-3zM571.5 568.5h4v7h-4zM585.5 568.5h3v6h-3zM556.5 573.5h4v7h-4zM546.5 576.5h6v4h-6zM562.5 576.5h4v6h-4zM568.5 577.5h6v3h-6zM576.5 577.5h4v6h-4zM582.5 578.5h3v6h-3zM542.5 582.5h3v6h-3zM551.5 582.5h3v6h-3zM556.5 582.5h3v6h-3zM568.5 582.5h3v6h-3zM562.5 584.5h3v6h-3zM573.5 585.5h6v4h-6zM586.5 589.5h3v6h-3zM541.5 590.5h4v6h-4zM551.5 590.5h3v6h-3zM556.5 590.5h4v7h-4zM567.5 590.5h3v6h-3zM581.5 590.5h3v6h-3zM572.5 591.5h4v7h-4zM562.5 592.5h3v6h-3zM586.5 597.5h3v6h-3zM545.5 598.5h3v6h-3zM578.5 598.5h6v3h-6zM559.5 600.5h3v7h-3zM564.5 600.5h3v6h-3zM554.5 602.5h3v6h-3zM573.5 603.5h8v4h-8zM543.5 606.5h6v3h-6zM564.5 608.5h3v7h-3zM574.5 609.5h3v6h-3zM551.5 610.5h5v3h-5zM569.5 610.5h3v5h-3zM579.5 610.5h4v6h-4zM585.5 610.5h4v7h-4zM558.5 614.5h4v6h-4zM564.5 617.5h3v5h-3zM569.5 617.5h7v4h-7zM586.5 619.5h4v6h-4zM578.5 622.5h3v6h-3zM569.5 623.5h4v7h-4zM592.5 623.5h3v6h-3zM598.5 625.5h6v3h-6zM606.5 625.5h7v4h-7zM583.5 627.5h5v3h-5zM617.5 629.5h3v6h-3zM617.5 644.5h3v6h-3zM892.5 437.5h4v7h-4zM898.5 437.5h6v3h-6zM906.5 437.5h7v4h-7zM915.5 440.5h7v4h-7zM886.5 441.5h3v6h-3zM898.5 442.5h3v5h-3zM903.5 443.5h3v6h-3zM870.5 444.5h4v8h-4zM876.5 444.5h4v7h-4zM859.5 445.5h7v4h-7zM848.5 446.5h9v5h-9zM891.5 446.5h4v8h-4zM908.5 446.5h7v4h-7zM917.5 446.5h5v9h-5zM837.5 447.5h3v6h-3zM842.5 447.5h4v7h-4zM799.5 448.5h3v5h-3zM808.5 448.5h4v7h-4zM814.5 448.5h3v6h-3zM819.5 448.5h5v3h-5zM826.5 448.5h3v5h-3zM760.5 449.5h7v4h-7zM769.5 449.5h6v3h-6zM777.5 449.5h3v6h-3zM782.5 449.5h4v6h-4zM788.5 449.5h3v5h-3zM794.5 449.5h3v6h-3zM882.5 449.5h3v6h-3zM897.5 449.5h3v6h-3zM831.5 451.5h3v6h-3zM859.5 451.5h3v7h-3zM864.5 452.5h4v7h-4zM910.5 452.5h5v3h-5zM852.5 453.5h5v9h-5zM876.5 453.5h3v7h-3zM769.5 454.5h3v6h-3zM800.5 455.5h6v3h-6zM870.5 455.5h3v6h-3zM818.5 456.5h7v4h-7zM840.5 456.5h4v7h-4zM846.5 456.5h3v6h-3zM758.5 457.5h5v3h-5zM785.5 457.5h6v3h-6zM910.5 457.5h3v7h-3zM915.5 457.5h4v7h-4zM827.5 459.5h4v6h-4zM859.5 461.5h4v7h-4zM865.5 461.5h3v6h-3zM758.5 462.5h3v7h-3zM763.5 462.5h3v7h-3zM817.5 462.5h6v3h-6zM875.5 462.5h3v6h-3zM833.5 463.5h3v6h-3zM846.5 464.5h4v7h-4zM852.5 464.5h4v7h-4zM838.5 465.5h3v6h-3zM870.5 466.5h3v6h-3zM914.5 466.5h3v6h-3zM823.5 467.5h6v3h-6zM865.5 469.5h3v6h-3zM816.5 470.5h3v6h-3zM875.5 470.5h3v7h-3zM919.5 470.5h3v6h-3zM758.5 471.5h9v5h-9zM825.5 472.5h3v6h-3zM836.5 473.5h8v4h-8zM846.5 473.5h6v3h-6zM859.5 473.5h3v6h-3zM870.5 475.5h3v5h-3zM910.5 475.5h7v3h-7zM758.5 478.5h3v6h-3zM763.5 478.5h3v6h-3zM812.5 478.5h3v6h-3zM817.5 478.5h3v7h-3zM846.5 478.5h3v6h-3zM865.5 478.5h3v6h-3zM830.5 479.5h5v3h-5zM837.5 479.5h3v5h-3zM875.5 479.5h4v7h-4zM910.5 480.5h7v4h-7zM822.5 481.5h3v7h-3zM852.5 481.5h4v7h-4zM858.5 482.5h5v10h-5zM827.5 484.5h3v6h-3zM832.5 484.5h3v6h-3zM870.5 485.5h3v6h-3zM758.5 486.5h9v5h-9zM837.5 486.5h4v7h-4zM847.5 486.5h3v6h-3zM865.5 486.5h3v6h-3zM881.5 487.5h7v4h-7zM890.5 487.5h3v7h-3zM899.5 487.5h6v3h-6zM816.5 488.5h4v7h-4zM875.5 488.5h3v6h-3zM826.5 492.5h3v6h-3zM831.5 492.5h4v7h-4zM904.5 492.5h5v3h-5zM758.5 493.5h3v7h-3zM763.5 493.5h3v6h-3zM870.5 493.5h3v6h-3zM880.5 493.5h7v4h-7zM895.5 493.5h3v6h-3zM859.5 494.5h6v3h-6zM837.5 495.5h4v8h-4zM848.5 495.5h3v6h-3zM853.5 496.5h3v6h-3zM889.5 496.5h3v5h-3zM816.5 497.5h5v3h-5zM875.5 497.5h3v6h-3zM858.5 499.5h4v7h-4zM880.5 499.5h4v7h-4zM825.5 500.5h4v7h-4zM900.5 500.5h5v3h-5zM763.5 501.5h3v5h-3zM831.5 501.5h3v6h-3zM894.5 501.5h3v6h-3zM907.5 501.5h3v7h-3zM758.5 502.5h3v6h-3zM812.5 502.5h3v6h-3zM817.5 502.5h4v7h-4zM864.5 502.5h5v3h-5zM886.5 503.5h4v7h-4zM843.5 504.5h3v6h-3zM852.5 504.5h3v6h-3zM836.5 505.5h5v9h-5zM899.5 505.5h4v7h-4zM875.5 506.5h3v6h-3zM865.5 507.5h4v6h-4zM763.5 508.5h3v7h-3zM857.5 508.5h6v3h-6zM880.5 508.5h4v6h-4zM827.5 509.5h4v7h-4zM812.5 510.5h3v6h-3zM817.5 511.5h3v6h-3zM843.5 512.5h6v3h-6zM768.5 513.5h7v4h-7zM777.5 513.5h6v3h-6zM785.5 513.5h3v6h-3zM790.5 513.5h4v7h-4zM796.5 513.5h3v7h-3zM801.5 513.5h3v7h-3zM806.5 513.5h4v7h-4zM852.5 513.5h6v3h-6zM780.5 518.5h3v5h-3zM769.5 519.5h6v3h-6zM812.5 519.5h6v3h-6zM849.5 529.5h3v6h-3zM854.5 529.5h3v5h-3zM843.5 530.5h4v7h-4zM860.5 530.5h3v6h-3zM837.5 531.5h4v7h-4zM831.5 532.5h4v8h-4zM760.5 533.5h4v7h-4zM766.5 533.5h3v6h-3zM771.5 533.5h3v6h-3zM776.5 533.5h6v3h-6zM784.5 533.5h4v7h-4zM790.5 533.5h7v4h-7zM799.5 533.5h3v5h-3zM808.5 533.5h3v6h-3zM813.5 533.5h3v7h-3zM818.5 533.5h6v3h-6zM826.5 533.5h3v6h-3zM854.5 536.5h4v7h-4zM849.5 537.5h3v6h-3zM776.5 538.5h4v7h-4zM818.5 538.5h4v8h-4zM860.5 538.5h3v6h-3zM790.5 539.5h4v6h-4zM843.5 539.5h3v6h-3zM801.5 540.5h3v5h-3zM767.5 541.5h6v3h-6zM756.5 542.5h3v6h-3zM806.5 542.5h3v6h-3zM811.5 542.5h5v3h-5zM833.5 542.5h3v7h-3zM824.5 543.5h3v6h-3zM848.5 545.5h5v9h-5zM855.5 545.5h3v6h-3zM799.5 547.5h3v6h-3zM811.5 547.5h3v6h-3zM838.5 547.5h7v4h-7zM860.5 547.5h3v6h-3zM816.5 548.5h5v9h-5zM756.5 550.5h5v3h-5zM823.5 551.5h5v10h-5zM830.5 551.5h5v3h-5zM805.5 553.5h4v7h-4zM837.5 553.5h6v3h-6zM855.5 553.5h3v6h-3zM756.5 555.5h3v6h-3zM799.5 555.5h3v6h-3zM860.5 555.5h3v6h-3zM850.5 556.5h3v6h-3zM838.5 558.5h3v6h-3zM843.5 558.5h3v6h-3zM818.5 559.5h3v6h-3zM804.5 562.5h5v3h-5zM830.5 562.5h5v3h-5zM756.5 563.5h3v6h-3zM799.5 563.5h3v5h-3zM824.5 563.5h3v6h-3zM848.5 564.5h6v3h-6zM856.5 565.5h3v6h-3zM811.5 566.5h5v3h-5zM837.5 566.5h3v7h-3zM842.5 566.5h3v6h-3zM819.5 567.5h3v6h-3zM829.5 567.5h6v3h-6zM806.5 568.5h3v6h-3zM847.5 569.5h4v7h-4zM756.5 571.5h4v6h-4zM811.5 571.5h5v10h-5zM828.5 572.5h6v3h-6zM853.5 573.5h6v3h-6zM818.5 575.5h3v7h-3zM836.5 575.5h4v7h-4zM799.5 576.5h5v3h-5zM806.5 576.5h3v6h-3zM829.5 577.5h3v6h-3zM823.5 578.5h3v6h-3zM846.5 578.5h6v3h-6zM854.5 578.5h7v4h-7zM756.5 579.5h3v6h-3zM863.5 579.5h6v3h-6zM879.5 579.5h6v3h-6zM905.5 579.5h4v7h-4zM799.5 581.5h4v8h-4zM811.5 583.5h4v8h-4zM817.5 584.5h3v6h-3zM828.5 585.5h5v9h-5zM757.5 587.5h3v6h-3zM822.5 587.5h3v7h-3zM799.5 591.5h4v6h-4zM805.5 592.5h3v5h-3zM817.5 592.5h3v6h-3zM757.5 595.5h6v3h-6zM890.5 595.5h6v4h-6zM898.5 595.5h3v6h-3zM811.5 596.5h4v7h-4zM826.5 596.5h6v3h-6zM834.5 598.5h9v5h-9zM845.5 598.5h7v4h-7zM854.5 598.5h5v3h-5zM865.5 598.5h4v6h-4zM875.5 598.5h4v7h-4zM881.5 598.5h3v6h-3zM799.5 599.5h4v6h-4zM805.5 599.5h3v6h-3zM759.5 600.5h3v6h-3zM817.5 600.5h4v7h-4zM827.5 601.5h3v6h-3zM891.5 601.5h4v7h-4zM854.5 603.5h4v7h-4zM897.5 603.5h3v5h-3zM768.5 604.5h6v3h-6zM780.5 604.5h4v7h-4zM786.5 604.5h6v3h-6zM794.5 604.5h3v6h-3zM845.5 604.5h7v4h-7zM810.5 605.5h4v7h-4zM832.5 605.5h7v4h-7zM886.5 605.5h3v6h-3zM860.5 606.5h3v7h-3zM799.5 607.5h8v5h-8zM875.5 607.5h6v3h-6zM761.5 608.5h3v5h-3zM769.5 609.5h3v6h-3zM786.5 609.5h6v3h-6zM816.5 609.5h9v5h-9zM827.5 609.5h3v6h-3zM866.5 609.5h6v3h-6zM845.5 610.5h3v6h-3zM891.5 610.5h6v3h-6zM832.5 611.5h7v4h-7zM874.5 612.5h6v3h-6zM794.5 613.5h3v6h-3zM782.5 614.5h6v3h-6zM799.5 614.5h5v8h-5zM806.5 614.5h4v7h-4zM818.5 616.5h6v3h-6zM767.5 617.5h6v3h-6zM826.5 617.5h6v3h-6zM782.5 619.5h6v3h-6zM1321.5 360.5h9v5h-9zM1332.5 360.5h7v4h-7zM1341.5 360.5h5v8h-5zM1348.5 360.5h7v4h-7zM1357.5 360.5h6v3h-6zM1365.5 360.5h7v4h-7zM1374.5 360.5h7v3h-7zM1383.5 360.5h3v6h-3zM1388.5 360.5h9v5h-9zM1403.5 362.5h3v6h-3zM1357.5 365.5h6v4h-6zM1374.5 365.5h6v3h-6zM1315.5 366.5h3v6h-3zM1336.5 366.5h3v7h-3zM1348.5 366.5h3v5h-3zM1365.5 366.5h3v6h-3zM1320.5 367.5h3v6h-3zM1325.5 367.5h5v3h-5zM1388.5 367.5h3v6h-3zM1303.5 370.5h7v4h-7zM1341.5 370.5h3v6h-3zM1370.5 370.5h6v3h-6zM1378.5 370.5h3v6h-3zM1358.5 371.5h3v6h-3zM1411.5 371.5h3v6h-3zM1329.5 372.5h3v5h-3zM1298.5 374.5h3v5h-3zM1312.5 374.5h6v3h-6zM1363.5 374.5h3v6h-3zM1321.5 375.5h6v3h-6zM1350.5 375.5h3v6h-3zM1368.5 375.5h3v6h-3zM1373.5 375.5h3v6h-3zM1387.5 375.5h7v4h-7zM1335.5 378.5h8v5h-8zM1378.5 378.5h3v6h-3zM1355.5 379.5h3v6h-3zM1411.5 379.5h3v5h-3zM1289.5 381.5h3v6h-3zM1294.5 381.5h6v3h-6zM1302.5 381.5h3v6h-3zM1387.5 381.5h6v3h-6zM1345.5 382.5h3v6h-3zM1364.5 383.5h8v4h-8zM1335.5 385.5h3v6h-3zM1340.5 385.5h3v6h-3zM1294.5 386.5h6v3h-6zM1374.5 386.5h7v4h-7zM1383.5 386.5h3v7h-3zM1389.5 386.5h5v3h-5zM1411.5 386.5h4v7h-4zM1356.5 387.5h3v6h-3zM1289.5 389.5h3v6h-3zM1302.5 389.5h3v6h-3zM1350.5 389.5h3v6h-3zM1362.5 389.5h7v3h-7zM1345.5 390.5h3v6h-3zM1294.5 391.5h3v6h-3zM1335.5 393.5h3v5h-3zM1340.5 394.5h3v6h-3zM1299.5 397.5h6v3h-6zM1290.5 400.5h6v3h-6zM1299.5 402.5h6v4h-6zM1266.5 421.5h7v4h-7zM1224.5 424.5h3v6h-3zM1275.5 425.5h4v6h-4zM1266.5 427.5h6v3h-6zM1218.5 430.5h4v6h-4zM1266.5 432.5h3v6h-3zM1275.5 433.5h3v6h-3zM1230.5 435.5h4v7h-4zM1260.5 435.5h3v6h-3zM1215.5 438.5h5v9h-5zM1222.5 439.5h6v3h-6zM1265.5 440.5h3v6h-3zM1270.5 440.5h3v6h-3zM1222.5 444.5h10v18h-10zM1260.5 448.5h5v9h-5zM1267.5 448.5h5v3h-5zM1215.5 449.5h3v6h-3zM1274.5 450.5h3v6h-3zM1267.5 453.5h4v7h-4zM1239.5 455.5h6v3h-6zM1247.5 455.5h10v17h-10zM1216.5 457.5h4v7h-4zM1238.5 463.5h6v3h-6zM1215.5 466.5h5v9h-5zM1239.5 471.5h4v8h-4zM1263.5 480.5h9v5h-9zM1237.5 481.5h3v6h-3zM1274.5 481.5h3v6h-3zM1216.5 482.5h3v6h-3zM1264.5 487.5h7v3h-7zM1237.5 489.5h4v7h-4zM1273.5 489.5h3v6h-3zM1215.5 490.5h3v6h-3zM1220.5 491.5h5v9h-5zM1227.5 494.5h5v9h-5zM1269.5 497.5h3v6h-3zM1234.5 498.5h3v6h-3zM1239.5 498.5h3v6h-3zM1215.5 501.5h3v6h-3zM1274.5 502.5h3v6h-3zM1224.5 505.5h4v8h-4zM1230.5 506.5h4v7h-4zM1236.5 506.5h4v7h-4zM1269.5 506.5h3v6h-3zM1242.5 510.5h3v6h-3zM1215.5 512.5h6v3h-6zM1266.5 514.5h3v5h-3zM1228.5 515.5h6v3h-6zM1215.5 517.5h8v13h-8zM1245.5 519.5h3v6h-3zM1266.5 521.5h5v9h-5zM1245.5 527.5h3v6h-3zM1215.5 532.5h5v9h-5zM1264.5 532.5h5v10h-5zM1271.5 537.5h3v7h-3zM1251.5 538.5h3v6h-3zM1256.5 538.5h4v7h-4zM1215.5 543.5h7v4h-7zM1263.5 544.5h3v6h-3zM1255.5 547.5h4v7h-4zM1268.5 548.5h4v7h-4zM1215.5 549.5h6v3h-6zM1261.5 553.5h3v6h-3zM1215.5 554.5h8v13h-8zM1251.5 556.5h5v9h-5zM1266.5 557.5h4v7h-4zM1251.5 567.5h3v6h-3zM1216.5 569.5h8v5h-8zM1210.5 573.5h4v8h-4zM1247.5 575.5h3v6h-3zM1216.5 576.5h8v13h-8zM1252.5 576.5h4v7h-4zM1200.5 577.5h6v3h-6zM1200.5 582.5h5v9h-5zM1207.5 583.5h3v6h-3zM1247.5 583.5h3v6h-3zM1256.5 585.5h3v5h-3zM1261.5 585.5h7v4h-7zM1270.5 585.5h4v6h-4zM1226.5 586.5h5v3h-5zM1237.5 586.5h7v3h-7zM1261.5 591.5h7v4h-7zM1270.5 593.5h4v7h-4zM1257.5 597.5h3v7h-3zM1263.5 597.5h3v6h-3zM1268.5 602.5h3v6h-3zM1262.5 605.5h4v8h-4zM1276.5 612.5h3v6h-3zM1181.5 613.5h8v13h-8zM1191.5 613.5h4v7h-4zM1261.5 615.5h4v8h-4zM1267.5 616.5h6v4h-6zM1197.5 618.5h13v8h-13zM1229.5 618.5h7v4h-7zM1238.5 618.5h9v5h-9zM1249.5 618.5h4v7h-4zM1255.5 618.5h3v6h-3zM1212.5 619.5h7v4h-7zM1221.5 619.5h4v7h-4zM1191.5 623.5h4v8h-4zM1262.5 625.5h5v10h-5zM1213.5 626.5h6v3h-6zM1176.5 627.5h3v6h-3zM1232.5 627.5h3v6h-3zM1181.5 628.5h7v4h-7zM1197.5 628.5h5v9h-5zM1191.5 633.5h4v7h-4zM1181.5 634.5h3v7h-3zM1186.5 634.5h3v6h-3zM1197.5 639.5h3v6h-3zM1262.5 640.5h6v3h-6zM1186.5 642.5h9v5h-9zM1280.5 422.5h3v7h-3zM1317.5 426.5h7v4h-7zM1305.5 429.5h4v6h-4zM1330.5 429.5h3v6h-3zM1315.5 432.5h3v6h-3zM1320.5 432.5h7v4h-7zM1284.5 455.5h3v6h-3zM1300.5 457.5h3v6h-3zM1305.5 457.5h3v6h-3zM1310.5 462.5h6v3h-6zM1309.5 467.5h3v6h-3zM1310.5 475.5h3v6h-3zM1302.5 481.5h3v6h-3zM1307.5 483.5h7v3h-7zM1307.5 488.5h3v6h-3zM1442.5 490.5h3v7h-3zM1451.5 490.5h3v6h-3zM1465.5 490.5h3v6h-3zM1312.5 491.5h7v4h-7zM1456.5 493.5h3v6h-3zM1313.5 497.5h7v4h-7zM1337.5 497.5h5v9h-5zM1344.5 497.5h5v9h-5zM1351.5 497.5h6v3h-6zM1367.5 497.5h5v3h-5zM1378.5 497.5h6v3h-6zM1386.5 497.5h4v7h-4zM1392.5 497.5h3v6h-3zM1397.5 497.5h7v4h-7zM1414.5 497.5h3v6h-3zM1419.5 497.5h3v6h-3zM1465.5 498.5h3v6h-3zM1443.5 499.5h3v5h-3zM1470.5 499.5h3v6h-3zM1359.5 500.5h4v7h-4zM1406.5 500.5h3v6h-3zM1424.5 500.5h7v4h-7zM1326.5 501.5h4v8h-4zM1452.5 501.5h3v7h-3zM1457.5 501.5h3v5h-3zM1351.5 502.5h6v3h-6zM1300.5 503.5h3v6h-3zM1313.5 503.5h7v4h-7zM1373.5 503.5h4v8h-4zM1433.5 505.5h3v6h-3zM1423.5 506.5h6v3h-6zM1438.5 506.5h6v3h-6zM1475.5 506.5h3v5h-3zM1351.5 507.5h6v3h-6zM1315.5 509.5h6v3h-6zM1457.5 511.5h6v3h-6zM1469.5 512.5h4v7h-4zM1475.5 513.5h3v6h-3zM1463.5 519.5h3v5h-3zM1468.5 521.5h8v5h-8zM1478.5 526.5h3v6h-3zM1467.5 528.5h3v6h-3zM1472.5 531.5h4v8h-4zM1478.5 534.5h3v6h-3zM1467.5 536.5h3v6h-3zM1472.5 541.5h4v7h-4zM1478.5 542.5h3v6h-3zM1455.5 543.5h3v6h-3zM1464.5 545.5h4v7h-4zM1470.5 550.5h3v6h-3zM1475.5 550.5h3v6h-3zM1459.5 554.5h6v3h-6zM1467.5 558.5h6v3h-6zM1479.5 562.5h3v6h-3zM1455.5 563.5h3v6h-3zM1463.5 563.5h9v5h-9zM1474.5 568.5h3v5h-3zM1464.5 570.5h7v4h-7zM1459.5 571.5h3v6h-3zM1479.5 573.5h3v6h-3zM1473.5 575.5h3v6h-3zM1464.5 576.5h4v7h-4zM1374.5 577.5h3v6h-3zM1475.5 583.5h4v7h-4zM1463.5 585.5h3v6h-3zM1469.5 586.5h3v6h-3zM1369.5 588.5h3v6h-3zM1463.5 593.5h4v6h-4zM1477.5 595.5h3v6h-3zM1469.5 597.5h3v5h-3zM1463.5 601.5h4v6h-4zM1373.5 602.5h3v6h-3zM1474.5 603.5h3v6h-3zM1469.5 604.5h3v6h-3zM1463.5 610.5h3v6h-3zM1280.5 612.5h7v3h-7zM1289.5 612.5h5v3h-5zM1300.5 612.5h8v4h-8zM1310.5 612.5h6v3h-6zM1330.5 612.5h3v6h-3zM1347.5 612.5h7v3h-7zM1356.5 612.5h6v3h-6zM1381.5 612.5h3v6h-3zM1386.5 612.5h3v5h-3zM1395.5 612.5h5v8h-5zM1402.5 612.5h4v8h-4zM1412.5 612.5h3v7h-3zM1421.5 612.5h3v7h-3zM1430.5 612.5h7v3h-7zM1468.5 612.5h6v3h-6zM1373.5 613.5h3v6h-3zM1318.5 615.5h3v6h-3zM1439.5 615.5h3v5h-3zM1444.5 615.5h5v3h-5zM1286.5 617.5h3v6h-3zM1291.5 617.5h4v7h-4zM1310.5 617.5h4v7h-4zM1351.5 617.5h8v5h-8zM1297.5 618.5h3v6h-3zM1335.5 618.5h8v4h-8zM1460.5 618.5h6v3h-6zM1369.5 621.5h3v6h-3zM1416.5 621.5h5v9h-5zM1386.5 622.5h3v6h-3zM1398.5 622.5h4v7h-4zM1361.5 623.5h3v6h-3zM1351.5 624.5h6v4h-6zM1408.5 626.5h3v6h-3zM1366.5 629.5h7v4h-7zM1379.5 629.5h3v5h-3zM1391.5 629.5h3v6h-3zM1318.5 630.5h3v6h-3zM1346.5 630.5h7v4h-7zM1355.5 630.5h3v7h-3zM1384.5 630.5h3v6h-3zM1339.5 631.5h4v6h-4zM1360.5 631.5h3v5h-3zM1312.5 633.5h3v7h-3zM1323.5 633.5h6v3h-6zM1331.5 634.5h6v3h-6zM1404.5 634.5h6v3h-6zM1345.5 636.5h4v6h-4zM1321.5 638.5h4v6h-4zM1383.5 638.5h7v4h-7zM1335.5 639.5h7v4h-7zM1356.5 639.5h3v6h-3zM1402.5 639.5h4v7h-4zM1361.5 641.5h4v7h-4zM1367.5 641.5h3v6h-3zM1385.5 644.5h7v4h-7zM1335.5 645.5h3v6h-3zM1340.5 645.5h3v6h-3zM1323.5 646.5h3v7h-3zM1345.5 647.5h3v7h-3zM1372.5 648.5h3v6h-3zM1312.5 649.5h3v6h-3zM1385.5 650.5h6v4h-6zM1300.5 651.5h6v3h-6zM1109.5 583.5h4v7h-4zM1115.5 583.5h5v3h-5zM1122.5 584.5h6v3h-6zM1100.5 585.5h7v4h-7zM1094.5 586.5h3v7h-3zM1087.5 587.5h4v6h-4zM1023.5 588.5h4v8h-4zM1029.5 588.5h4v7h-4zM1035.5 588.5h3v6h-3zM1040.5 588.5h4v7h-4zM1046.5 588.5h6v3h-6zM1054.5 588.5h6v3h-6zM1062.5 588.5h5v3h-5zM1069.5 588.5h6v3h-6zM1077.5 588.5h4v7h-4zM1155.5 591.5h7v4h-7zM1103.5 592.5h4v8h-4zM1109.5 592.5h4v6h-4zM1046.5 593.5h5v3h-5zM1053.5 593.5h6v3h-6zM1061.5 593.5h6v3h-6zM1069.5 593.5h4v8h-4zM1115.5 593.5h3v6h-3zM1083.5 595.5h7v4h-7zM1017.5 596.5h3v6h-3zM1164.5 596.5h3v6h-3zM1155.5 597.5h3v6h-3zM1055.5 598.5h3v6h-3zM1060.5 598.5h6v3h-6zM1092.5 598.5h7v4h-7zM1075.5 599.5h6v3h-6zM1109.5 600.5h4v7h-4zM1083.5 601.5h4v7h-4zM1022.5 602.5h3v6h-3zM1060.5 603.5h3v6h-3zM1065.5 603.5h6v3h-6zM1017.5 604.5h3v6h-3zM1073.5 604.5h6v3h-6zM1089.5 604.5h3v6h-3zM1094.5 604.5h7v4h-7zM1160.5 604.5h3v6h-3zM1165.5 604.5h3v7h-3zM1155.5 606.5h3v6h-3zM1065.5 608.5h6v3h-6zM1115.5 608.5h3v6h-3zM1022.5 610.5h4v6h-4zM1055.5 612.5h3v6h-3zM1107.5 612.5h6v3h-6zM1064.5 613.5h7v4h-7zM1155.5 615.5h3v7h-3zM1115.5 616.5h3v5h-3zM1107.5 617.5h5v3h-5zM1017.5 618.5h4v8h-4zM1023.5 618.5h4v7h-4zM1060.5 619.5h4v6h-4zM1066.5 619.5h5v8h-5zM1055.5 620.5h3v6h-3zM1107.5 622.5h6v3h-6zM1155.5 624.5h4v6h-4zM1115.5 626.5h3v7h-3zM1024.5 627.5h3v6h-3zM1017.5 628.5h4v7h-4zM1055.5 628.5h6v3h-6zM1068.5 629.5h4v7h-4zM1063.5 630.5h3v6h-3zM1107.5 630.5h6v3h-6zM1155.5 632.5h3v6h-3zM1055.5 633.5h3v6h-3zM1082.5 635.5h7v4h-7zM1091.5 635.5h4v7h-4zM1097.5 635.5h4v8h-4zM1103.5 635.5h3v6h-3zM1112.5 635.5h4v7h-4zM1019.5 637.5h3v6h-3zM1065.5 638.5h4v8h-4zM1071.5 638.5h3v6h-3zM1024.5 639.5h5v3h-5zM1031.5 639.5h7v4h-7zM1040.5 639.5h6v3h-6zM1050.5 639.5h3v6h-3zM1055.5 641.5h6v3h-6zM1076.5 641.5h7v4h-7zM1085.5 641.5h3v6h-3zM1103.5 643.5h3v6h-3zM1091.5 644.5h4v6h-4zM1097.5 645.5h3v6h-3zM1071.5 646.5h3v6h-3zM1076.5 647.5h4v6h-4zM1113.5 647.5h3v6h-3zM1082.5 649.5h7v4h-7zM1118.5 649.5h7v4h-7zM1135.5 649.5h6v4h-6zM1143.5 649.5h8v4h-8zM490.5 406.5h6v3h-6zM498.5 406.5h6v3h-6zM506.5 406.5h3v6h-3zM511.5 406.5h3v6h-3zM517.5 410.5h3v6h-3zM490.5 411.5h5v3h-5zM498.5 411.5h6v3h-6zM618.5 442.5h9v5h-9zM629.5 442.5h5v3h-5zM636.5 442.5h7v3h-7zM645.5 442.5h6v3h-6zM629.5 447.5h4v8h-4zM635.5 447.5h4v7h-4zM641.5 447.5h6v3h-6zM649.5 447.5h3v6h-3zM618.5 452.5h6v3h-6zM645.5 455.5h7v4h-7zM576.5 346.5h3v6h-3zM581.5 346.5h3v6h-3zM586.5 346.5h3v7h-3zM591.5 346.5h9v5h-9zM606.5 346.5h3v6h-3zM611.5 346.5h6v3h-6zM611.5 351.5h6v3h-6zM593.5 353.5h3v5h-3zM598.5 353.5h6v3h-6zM577.5 354.5h6v3h-6zM476.5 434.5h3v6h-3zM476.5 442.5h6v3h-6zM476.5 447.5h3v6h-3zM476.5 458.5h3v6h-3zM686.5 454.5h7v4h-7zM695.5 454.5h3v6h-3zM704.5 454.5h7v3h-7zM713.5 454.5h6v3h-6zM721.5 454.5h3v6h-3zM730.5 454.5h5v3h-5zM889.5 361.5h6v3h-6zM913.5 361.5h6v3h-6zM921.5 361.5h3v6h-3zM926.5 362.5h3v6h-3zM897.5 364.5h6v3h-6zM889.5 366.5h6v3h-6zM913.5 366.5h3v5h-3zM905.5 367.5h4v7h-4zM897.5 369.5h4v6h-4zM918.5 369.5h6v3h-6zM890.5 371.5h3v7h-3zM907.5 376.5h6v3h-6zM895.5 377.5h3v6h-3zM910.5 381.5h3v6h-3zM905.5 386.5h3v6h-3zM910.5 389.5h4v7h-4zM930.5 466.5h6v3h-6zM938.5 466.5h6v3h-6zM938.5 471.5h3v5h-3zM952.5 428.5h7v4h-7zM961.5 428.5h6v4h-6zM960.5 434.5h3v7h-3zM965.5 438.5h3v6h-3zM952.5 443.5h3v5h-3zM961.5 446.5h3v5h-3zM933.5 458.5h4v7h-4zM939.5 458.5h3v6h-3zM939.5 466.5h6v3h-6zM938.5 471.5h3v6h-3zM943.5 471.5h3v6h-3zM933.5 473.5h3v6h-3zM933.5 408.5h3v7h-3zM938.5 408.5h3v6h-3zM943.5 408.5h4v7h-4zM938.5 416.5h3v7h-3zM933.5 417.5h3v6h-3zM906.5 419.5h8v4h-8zM917.5 419.5h3v6h-3zM927.5 518.5h3v6h-3zM932.5 518.5h4v7h-4zM938.5 518.5h6v3h-6zM950.5 518.5h7v4h-7zM946.5 524.5h3v6h-3zM933.5 527.5h3v6h-3zM955.5 528.5h3v6h-3zM938.5 529.5h3v6h-3zM927.5 530.5h3v7h-3zM947.5 532.5h3v6h-3zM932.5 535.5h3v6h-3zM927.5 539.5h3v6h-3zM941.5 539.5h4v8h-4zM952.5 539.5h6v3h-6zM932.5 543.5h7v3h-7zM947.5 544.5h8v5h-8zM957.5 544.5h3v6h-3zM962.5 545.5h3v6h-3zM931.5 548.5h6v3h-6zM939.5 549.5h6v3h-6zM947.5 551.5h6v3h-6zM967.5 551.5h3v5h-3zM956.5 552.5h3v6h-3zM962.5 553.5h3v6h-3zM939.5 554.5h3v6h-3zM932.5 556.5h5v3h-5zM944.5 557.5h7v3h-7zM967.5 558.5h3v6h-3zM933.5 561.5h3v6h-3zM938.5 562.5h3v6h-3zM943.5 562.5h3v6h-3zM948.5 562.5h3v6h-3zM958.5 563.5h3v6h-3zM939.5 570.5h6v3h-6zM947.5 570.5h6v3h-6zM967.5 570.5h3v5h-3zM962.5 574.5h3v7h-3zM967.5 577.5h3v6h-3zM956.5 578.5h3v6h-3zM965.5 585.5h3v7h-3zM957.5 586.5h6v3h-6zM462.5 524.5h7v4h-7zM462.5 530.5h3v6h-3zM467.5 536.5h4v6h-4zM462.5 541.5h3v5h-3zM467.5 544.5h6v3h-6zM466.5 549.5h6v3h-6zM468.5 568.5h6v4h-6zM484.5 568.5h4v7h-4zM476.5 571.5h4v7h-4zM468.5 574.5h6v3h-6zM482.5 577.5h7v4h-7zM468.5 579.5h4v7h-4zM474.5 580.5h4v6h-4zM480.5 583.5h6v3h-6zM472.5 588.5h6v3h-6zM480.5 588.5h3v6h-3zM485.5 591.5h3v6h-3zM468.5 593.5h4v8h-4zM474.5 593.5h4v7h-4zM485.5 599.5h4v7h-4zM480.5 601.5h3v6h-3zM474.5 602.5h3v6h-3zM468.5 603.5h3v6h-3zM485.5 608.5h4v6h-4zM468.5 611.5h5v3h-5zM529.5 598.5h3v6h-3zM530.5 609.5h6v3h-6zM525.5 611.5h3v6h-3zM530.5 617.5h3v6h-3zM1437.5 412.5h6v3h-6zM1437.5 417.5h9v5h-9zM1437.5 424.5h6v3h-6zM1437.5 429.5h6v3h-6zM1437.5 434.5h3v6h-3zM1443.5 434.5h3v6h-3zM1437.5 442.5h3v6h-3zM1442.5 442.5h5v3h-5zM1444.5 447.5h3v6h-3zM1437.5 450.5h3v6h-3zM1442.5 455.5h3v6h-3zM1437.5 458.5h3v6h-3zM1442.5 463.5h5v3h-5zM1467.5 391.5h6v3h-6zM1475.5 391.5h3v7h-3zM1480.5 392.5h3v6h-3zM1467.5 396.5h3v6h-3zM1472.5 400.5h3v6h-3zM1477.5 404.5h5v3h-5zM1467.5 408.5h6v3h-6zM1475.5 409.5h7v3h-7zM1467.5 413.5h6v3h-6zM1475.5 414.5h6v3h-6zM1467.5 418.5h5v3h-5zM1478.5 421.5h3v6h-3zM1467.5 423.5h6v3h-6zM1467.5 428.5h3v6h-3zM1472.5 428.5h3v6h-3zM1477.5 429.5h3v6h-3zM1467.5 436.5h7v4h-7zM1477.5 437.5h3v6h-3zM1467.5 442.5h6v4h-6zM1475.5 445.5h6v3h-6zM1467.5 448.5h6v3h-6zM1475.5 450.5h3v6h-3zM1480.5 450.5h3v6h-3zM1467.5 453.5h6v3h-6zM1467.5 458.5h4v7h-4zM1473.5 458.5h6v4h-6zM1131.5 576.5h3v6h-3zM1140.5 576.5h3v6h-3zM1145.5 576.5h3v6h-3zM1150.5 576.5h4v7h-4zM1156.5 576.5h6v3h-6zM1157.5 581.5h6v3h-6z" fill="none" stroke="#f2f2f2" stroke-width="1" shape-rendering="crispEdges"/>
<g fill="#1010f0"><circle cx="572.9" cy="381.3" r="2.3"/><circle cx="630" cy="419.5" r="2.3"/><circle cx="695.5" cy="509.8" r="2.3"/><circle cx="691.5" cy="592.5" r="2.3"/><circle cx="505.3" cy="539.7" r="2.3"/><circle cx="792.5" cy="486.5" r="2.3"/><circle cx="588.9" cy="519.5" r="2.3"/><circle cx="721" cy="578.5" r="2.3"/><circle cx="708" cy="578.8" r="2.3"/><circle cx="737" cy="578" r="2.3"/><circle cx="725" cy="544.5" r="2.3"/><circle cx="724.5" cy="475.5" r="2.3"/><circle cx="570.3" cy="520" r="2.3"/><circle cx="569.2" cy="532" r="2.3"/><circle cx="566.5" cy="545" r="2.3"/><circle cx="895.2" cy="471.9" r="2.3"/><circle cx="781.6" cy="575" r="2.3"/><circle cx="889.5" cy="555.8" r="2.3"/><circle cx="878.5" cy="590" r="2.3"/><circle cx="834.5" cy="618" r="2.3"/><circle cx="838.5" cy="618" r="2.3"/><circle cx="770.5" cy="521.3" r="1.7"/><circle cx="773.9" cy="521.3" r="1.7"/><circle cx="777.3" cy="521.3" r="1.7"/><circle cx="780.7" cy="521.3" r="1.7"/><circle cx="784.1" cy="521.3" r="1.7"/><circle cx="787.5" cy="521.3" r="1.7"/><circle cx="960.7" cy="411.4" r="2.3"/><circle cx="939" cy="511" r="2.3"/><circle cx="934.8" cy="497" r="2.3"/><circle cx="606.8" cy="642.8" r="2.3"/><circle cx="601.5" cy="658.5" r="2.3"/><circle cx="652.5" cy="634.5" r="2.3"/><circle cx="688.3" cy="634.5" r="2.3"/><circle cx="693.5" cy="634.5" r="2.3"/><circle cx="650.5" cy="647.5" r="2.3"/><circle cx="806.5" cy="646.5" r="2.3"/><circle cx="791.5" cy="654.5" r="2.3"/><circle cx="821.5" cy="654.5" r="2.3"/><circle cx="758.5" cy="656.5" r="2.3"/><circle cx="509.5" cy="590.5" r="2.3"/><circle cx="1067" cy="412" r="2.3"/><circle cx="1320.5" cy="393.5" r="2.3"/><circle cx="1247.8" cy="444.1" r="2.3"/><circle cx="1270.8" cy="470.2" r="2.3"/><circle cx="1306.2" cy="448.4" r="2.3"/><circle cx="1317" cy="451" r="2.3"/><circle cx="1322.8" cy="451" r="2.3"/><circle cx="1244.3" cy="477" r="1.8"/><circle cx="1233.3" cy="484.3" r="1.8"/><circle cx="1230.6" cy="500.3" r="1.8"/><circle cx="1236.5" cy="501.5" r="1.8"/><circle cx="1271.4" cy="608.7" r="1.8"/><circle cx="1271.4" cy="613" r="1.8"/><circle cx="1337" cy="518.5" r="1.8"/><circle cx="1238.5" cy="552.5" r="2.3"/><circle cx="1188.5" cy="602.2" r="2.3"/><circle cx="1296.4" cy="640" r="2.3"/><circle cx="1216" cy="611.6" r="2.3"/><circle cx="1206" cy="604.5" r="2.3"/><circle cx="1041.5" cy="617.5" r="2.3"/><circle cx="1137" cy="620" r="2.3"/><circle cx="1451.8" cy="653.8" r="2.3"/><circle cx="1463.8" cy="653.8" r="2.3"/><circle cx="1451.8" cy="654" r="2.3"/><circle cx="1463.8" cy="654" r="2.3"/></g></g>
<text x="705" y="268" transform="rotate(-44 705 268)" text-anchor="middle" font-family="Liberation Sans,sans-serif" font-style="italic" font-size="15.5" fill="none" stroke="#cbc5b3" stroke-width=".6" opacity=".22" letter-spacing=".3">XZZ@XZZHK</text>
<text x="1153" y="268" transform="rotate(-44 1153 268)" text-anchor="middle" font-family="Liberation Sans,sans-serif" font-style="italic" font-size="15.5" fill="none" stroke="#cbc5b3" stroke-width=".6" opacity=".22" letter-spacing=".3">XZZ@XZZHK</text>
<text x="705" y="668" transform="rotate(-44 705 668)" text-anchor="middle" font-family="Liberation Sans,sans-serif" font-style="italic" font-size="15.5" fill="none" stroke="#cbc5b3" stroke-width=".6" opacity=".22" letter-spacing=".3">XZZ@XZZHK</text>
<text x="1153" y="668" transform="rotate(-44 1153 668)" text-anchor="middle" font-family="Liberation Sans,sans-serif" font-style="italic" font-size="15.5" fill="none" stroke="#cbc5b3" stroke-width=".6" opacity=".22" letter-spacing=".3">XZZ@XZZHK</text>
</g></svg>
<div class="abs" style="left:1513px;top:105px;width:10px;height:733px;background:#f7f9f7;border-left:1px solid #d6d6d6;box-sizing:border-box"></div>
<svg class="abs" style="left:0;top:0" width="1523" height="858" fill="none"><path d="M431 409l9 15v83l-9 13z" fill="#d9e9fc" stroke="#9cc4f5" stroke-width=".8"/><path d="M437 458.5l-3.5 4 3.5 4" stroke="#4b8ef9" stroke-width="1.2"/><path d="M1523 430l-9 15v90l9 13z" fill="#d9e9fc" stroke="#9cc4f5" stroke-width=".8"/><path d="M1520.5 484l-3.5 4 3.5 4" stroke="#4b8ef9" stroke-width="1.2"/></svg>
<div class="abs" style="left:441.5px;top:132.5px;width:34.5px;height:334px;background:#fff;border:1px solid #e3e3e3;border-left:none;border-radius:0 4px 4px 0;box-sizing:border-box"></div><div class="abs" style="left:446px;top:137px;width:24.5px;height:24.5px;border-radius:1.5px;background:#004d00;color:#dcdcdc;font-family:'Liberation Serif',serif;font-size:14.5px;line-height:25px;text-align:center;letter-spacing:0.3px">1</div><div class="abs" style="left:446px;top:167px;width:24.5px;height:24.5px;border-radius:1.5px;background:#4f4f4f;color:#dcdcdc;font-family:'Liberation Serif',serif;font-size:14.5px;line-height:25px;text-align:center;letter-spacing:0.3px">2</div><div class="abs" style="left:446px;top:197px;width:24.5px;height:24.5px;border-radius:1.5px;background:#4f4f4f;color:#dcdcdc;font-family:'Liberation Serif',serif;font-size:14.5px;line-height:25px;text-align:center;letter-spacing:0.3px">3</div><div class="abs" style="left:446px;top:227px;width:24.5px;height:24.5px;border-radius:1.5px;background:#4f4f4f;color:#dcdcdc;font-family:'Liberation Serif',serif;font-size:14.5px;line-height:25px;text-align:center;letter-spacing:0.3px">4</div><div class="abs" style="left:446px;top:257px;width:24.5px;height:24.5px;border-radius:1.5px;background:#4f4f4f;color:#dcdcdc;font-family:'Liberation Serif',serif;font-size:14.5px;line-height:25px;text-align:center;letter-spacing:0.3px">5</div><div class="abs" style="left:446px;top:287px;width:24.5px;height:24.5px;border-radius:1.5px;background:#4f4f4f;color:#dcdcdc;font-family:'Liberation Serif',serif;font-size:14.5px;line-height:25px;text-align:center;letter-spacing:0.3px">6</div><div class="abs" style="left:446px;top:317px;width:24.5px;height:24.5px;border-radius:1.5px;background:#4f4f4f;color:#dcdcdc;font-family:'Liberation Serif',serif;font-size:14.5px;line-height:25px;text-align:center;letter-spacing:0.3px">7</div><div class="abs" style="left:446px;top:347px;width:24.5px;height:24.5px;border-radius:1.5px;background:#4f4f4f;color:#dcdcdc;font-family:'Liberation Serif',serif;font-size:14.5px;line-height:25px;text-align:center;letter-spacing:0.3px">8</div><div class="abs" style="left:446px;top:377px;width:24.5px;height:24.5px;border-radius:1.5px;background:#4f4f4f;color:#dcdcdc;font-family:'Liberation Serif',serif;font-size:14.5px;line-height:25px;text-align:center;letter-spacing:0.3px">9</div><div class="abs" style="left:446px;top:407px;width:24.5px;height:24.5px;border-radius:1.5px;background:#0b7a3e;color:#dcdcdc;font-family:'Liberation Serif',serif;font-size:14.5px;line-height:25px;text-align:center;letter-spacing:0.3px">10</div><div class="abs" style="left:446px;top:437px;width:24.5px;height:24.5px;border-radius:1.5px;background:#4f4f4f;color:#dcdcdc;font-family:'Liberation Serif',serif;font-size:14px;line-height:25px;text-align:center;letter-spacing:-1.3px">ALL</div>
<div id="status"><span style="position:absolute;left:585.5px;top:1px;white-space:nowrap;transform-origin:0 50%;transform:scaleX(1.0726)">XZZ Schematics https://www.xzztools.com</span></div>
</body></html>
